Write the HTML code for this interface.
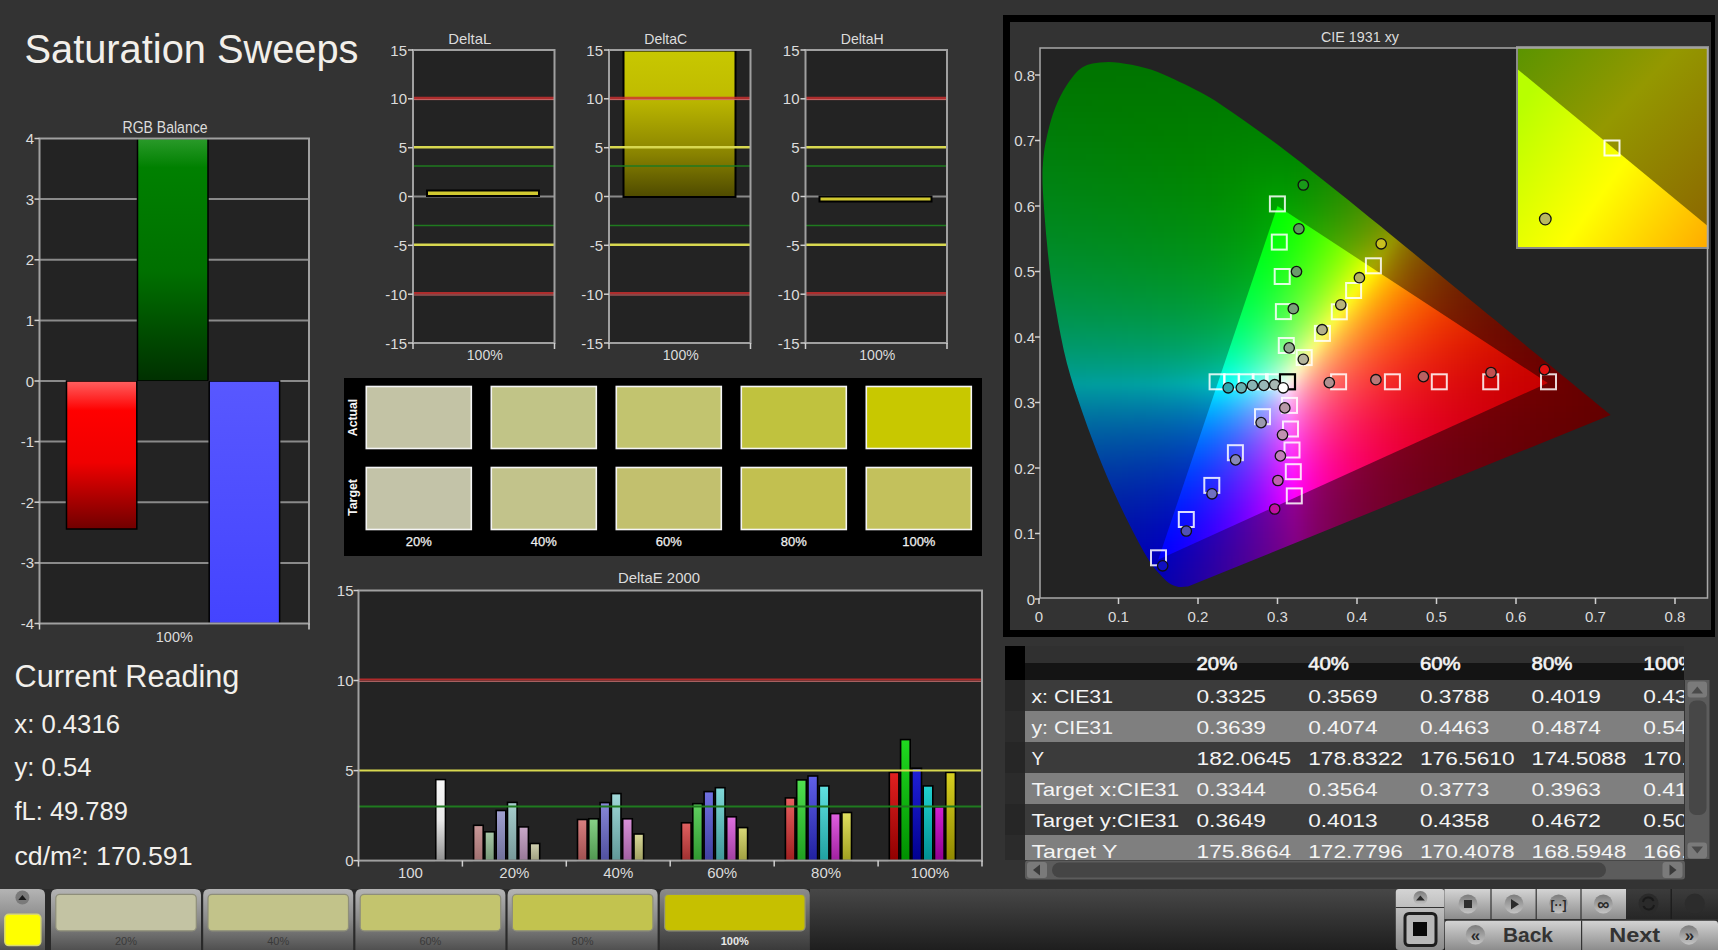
<!DOCTYPE html>
<html><head><meta charset="utf-8"><style>
html,body{margin:0;padding:0;background:#333333;width:1718px;height:950px;overflow:hidden}
svg{display:block;font-family:"Liberation Sans", sans-serif}
</style></head><body>
<svg width="1718" height="950" viewBox="0 0 1718 950">
<rect width="1718" height="950" fill="#333333"/>
<text x="24.5" y="62.5" font-size="41" fill="#f2efea" text-anchor="start" font-weight="normal" textLength="334" lengthAdjust="spacingAndGlyphs">Saturation Sweeps</text>
<rect x="39.5" y="138.5" width="269.5" height="485.0" fill="#232323"/>
<line x1="39.5" x2="309" y1="562.9" y2="562.9" stroke="#8a8a8a" stroke-width="2"/>
<line x1="39.5" x2="309" y1="502.2" y2="502.2" stroke="#8a8a8a" stroke-width="2"/>
<line x1="39.5" x2="309" y1="441.6" y2="441.6" stroke="#8a8a8a" stroke-width="2"/>
<line x1="39.5" x2="309" y1="381.0" y2="381.0" stroke="#8a8a8a" stroke-width="2"/>
<line x1="39.5" x2="309" y1="320.4" y2="320.4" stroke="#8a8a8a" stroke-width="2"/>
<line x1="39.5" x2="309" y1="259.8" y2="259.8" stroke="#8a8a8a" stroke-width="2"/>
<line x1="39.5" x2="309" y1="199.1" y2="199.1" stroke="#8a8a8a" stroke-width="2"/>
<defs><linearGradient id="gG" x1="0" y1="0" x2="0" y2="1"><stop offset="0" stop-color="#2a9a2a"/><stop offset="0.12" stop-color="#008000"/><stop offset="0.55" stop-color="#007000"/><stop offset="1" stop-color="#003000"/></linearGradient><linearGradient id="gR" x1="0" y1="0" x2="0" y2="1"><stop offset="0" stop-color="#ff6060"/><stop offset="0.2" stop-color="#ff0000"/><stop offset="0.55" stop-color="#f00000"/><stop offset="1" stop-color="#700000"/></linearGradient><linearGradient id="gB" x1="0" y1="0" x2="0" y2="1"><stop offset="0" stop-color="#5858ff"/><stop offset="1" stop-color="#4444ff"/></linearGradient></defs>
<rect x="137.5" y="138.5" width="70.5" height="242.5" fill="url(#gG)" stroke="#000" stroke-width="1.5"/>
<rect x="66.5" y="381.0" width="70.3" height="148.0" fill="url(#gR)" stroke="#000" stroke-width="1.5"/>
<rect x="209.2" y="381.0" width="70.4" height="242.5" fill="url(#gB)" stroke="#000" stroke-width="1.5"/>
<rect x="39.5" y="138.5" width="269.5" height="485.0" fill="none" stroke="#a0a0a0" stroke-width="2"/>
<line x1="34.5" x2="39.5" y1="623.5" y2="623.5" stroke="#d0d0d0" stroke-width="1.5"/>
<text x="34" y="629.0" font-size="15" fill="#dcdcdc" text-anchor="end" font-weight="normal">-4</text>
<line x1="34.5" x2="39.5" y1="562.9" y2="562.9" stroke="#d0d0d0" stroke-width="1.5"/>
<text x="34" y="568.375" font-size="15" fill="#dcdcdc" text-anchor="end" font-weight="normal">-3</text>
<line x1="34.5" x2="39.5" y1="502.2" y2="502.2" stroke="#d0d0d0" stroke-width="1.5"/>
<text x="34" y="507.75" font-size="15" fill="#dcdcdc" text-anchor="end" font-weight="normal">-2</text>
<line x1="34.5" x2="39.5" y1="441.6" y2="441.6" stroke="#d0d0d0" stroke-width="1.5"/>
<text x="34" y="447.125" font-size="15" fill="#dcdcdc" text-anchor="end" font-weight="normal">-1</text>
<line x1="34.5" x2="39.5" y1="381.0" y2="381.0" stroke="#d0d0d0" stroke-width="1.5"/>
<text x="34" y="386.5" font-size="15" fill="#dcdcdc" text-anchor="end" font-weight="normal">0</text>
<line x1="34.5" x2="39.5" y1="320.4" y2="320.4" stroke="#d0d0d0" stroke-width="1.5"/>
<text x="34" y="325.875" font-size="15" fill="#dcdcdc" text-anchor="end" font-weight="normal">1</text>
<line x1="34.5" x2="39.5" y1="259.8" y2="259.8" stroke="#d0d0d0" stroke-width="1.5"/>
<text x="34" y="265.25" font-size="15" fill="#dcdcdc" text-anchor="end" font-weight="normal">2</text>
<line x1="34.5" x2="39.5" y1="199.1" y2="199.1" stroke="#d0d0d0" stroke-width="1.5"/>
<text x="34" y="204.625" font-size="15" fill="#dcdcdc" text-anchor="end" font-weight="normal">3</text>
<line x1="34.5" x2="39.5" y1="138.5" y2="138.5" stroke="#d0d0d0" stroke-width="1.5"/>
<text x="34" y="144.0" font-size="15" fill="#dcdcdc" text-anchor="end" font-weight="normal">4</text>
<line x1="39.5" x2="39.5" y1="623.5" y2="629.5" stroke="#d0d0d0" stroke-width="1.5"/>
<line x1="309" x2="309" y1="623.5" y2="629.5" stroke="#d0d0d0" stroke-width="1.5"/>
<text x="165" y="133.4" font-size="16" fill="#dcdcdc" text-anchor="middle" font-weight="normal" textLength="85" lengthAdjust="spacingAndGlyphs">RGB Balance</text>
<text x="174.3" y="641.5" font-size="15" fill="#dcdcdc" text-anchor="middle" font-weight="normal" textLength="37" lengthAdjust="spacingAndGlyphs">100%</text>
<defs><linearGradient id="gY" x1="0" y1="0" x2="0" y2="1"><stop offset="0" stop-color="#c8c800"/><stop offset="0.3" stop-color="#c0bc00"/><stop offset="0.7" stop-color="#8a8400"/><stop offset="1" stop-color="#4e4a00"/></linearGradient></defs>
<rect x="413" y="50" width="141.5" height="293" fill="#232323"/>
<line x1="413" x2="554.5" y1="196.5" y2="196.5" stroke="#8a8a8a" stroke-width="2"/>
<rect x="427" y="190.5" width="112" height="5.5" fill="#d0c830" stroke="#000" stroke-width="2"/>
<line x1="413" x2="554.5" y1="97.8" y2="97.8" stroke="#d03030" stroke-opacity="0.8" stroke-width="2.2"/>
<line x1="413" x2="554.5" y1="99.6" y2="99.6" stroke="#d06a6a" stroke-width="1"/>
<line x1="413" x2="554.5" y1="293.2" y2="293.2" stroke="#d03030" stroke-opacity="0.8" stroke-width="2.2"/>
<line x1="413" x2="554.5" y1="295.0" y2="295.0" stroke="#d06a6a" stroke-width="1"/>
<line x1="413" x2="554.5" y1="147.2" y2="147.2" stroke="#d8d850" stroke-width="2.5"/>
<line x1="413" x2="554.5" y1="244.8" y2="244.8" stroke="#d8d850" stroke-width="2.5"/>
<line x1="413" x2="554.5" y1="166" y2="166" stroke="#1f7a1f" stroke-width="1.5"/>
<line x1="413" x2="554.5" y1="225.5" y2="225.5" stroke="#1f7a1f" stroke-width="1.5"/>
<rect x="413" y="50" width="141.5" height="293" fill="none" stroke="#a0a0a0" stroke-width="2"/>
<line x1="408" x2="413" y1="343.0" y2="343.0" stroke="#d0d0d0" stroke-width="1.5"/>
<text x="407" y="348.5" font-size="15" fill="#dcdcdc" text-anchor="end" font-weight="normal">-15</text>
<line x1="408" x2="413" y1="294.2" y2="294.2" stroke="#d0d0d0" stroke-width="1.5"/>
<text x="407" y="299.6666666666667" font-size="15" fill="#dcdcdc" text-anchor="end" font-weight="normal">-10</text>
<line x1="408" x2="413" y1="245.3" y2="245.3" stroke="#d0d0d0" stroke-width="1.5"/>
<text x="407" y="250.83333333333334" font-size="15" fill="#dcdcdc" text-anchor="end" font-weight="normal">-5</text>
<line x1="408" x2="413" y1="196.5" y2="196.5" stroke="#d0d0d0" stroke-width="1.5"/>
<text x="407" y="202.0" font-size="15" fill="#dcdcdc" text-anchor="end" font-weight="normal">0</text>
<line x1="408" x2="413" y1="147.7" y2="147.7" stroke="#d0d0d0" stroke-width="1.5"/>
<text x="407" y="153.16666666666669" font-size="15" fill="#dcdcdc" text-anchor="end" font-weight="normal">5</text>
<line x1="408" x2="413" y1="98.8" y2="98.8" stroke="#d0d0d0" stroke-width="1.5"/>
<text x="407" y="104.33333333333334" font-size="15" fill="#dcdcdc" text-anchor="end" font-weight="normal">10</text>
<line x1="408" x2="413" y1="50.0" y2="50.0" stroke="#d0d0d0" stroke-width="1.5"/>
<text x="407" y="55.5" font-size="15" fill="#dcdcdc" text-anchor="end" font-weight="normal">15</text>
<line x1="413" x2="413" y1="343" y2="349" stroke="#d0d0d0" stroke-width="1.5"/>
<line x1="554.5" x2="554.5" y1="343" y2="349" stroke="#d0d0d0" stroke-width="1.5"/>
<text x="469.75" y="44" font-size="15" fill="#dcdcdc" text-anchor="middle" font-weight="normal" textLength="43" lengthAdjust="spacingAndGlyphs">DeltaL</text>
<text x="484.75" y="359.5" font-size="15" fill="#dcdcdc" text-anchor="middle" font-weight="normal" textLength="36" lengthAdjust="spacingAndGlyphs">100%</text>
<rect x="609" y="50" width="141.5" height="293" fill="#232323"/>
<line x1="609" x2="750.5" y1="196.5" y2="196.5" stroke="#8a8a8a" stroke-width="2"/>
<rect x="623.5" y="50.5" width="112" height="146.5" fill="url(#gY)" stroke="#000" stroke-width="2"/>
<line x1="609" x2="750.5" y1="97.8" y2="97.8" stroke="#d03030" stroke-opacity="0.8" stroke-width="2.2"/>
<line x1="609" x2="750.5" y1="99.6" y2="99.6" stroke="#d06a6a" stroke-width="1"/>
<line x1="609" x2="750.5" y1="293.2" y2="293.2" stroke="#d03030" stroke-opacity="0.8" stroke-width="2.2"/>
<line x1="609" x2="750.5" y1="295.0" y2="295.0" stroke="#d06a6a" stroke-width="1"/>
<line x1="609" x2="750.5" y1="147.2" y2="147.2" stroke="#d8d850" stroke-width="2.5"/>
<line x1="609" x2="750.5" y1="244.8" y2="244.8" stroke="#d8d850" stroke-width="2.5"/>
<line x1="609" x2="750.5" y1="166" y2="166" stroke="#1f7a1f" stroke-width="1.5"/>
<line x1="609" x2="750.5" y1="225.5" y2="225.5" stroke="#1f7a1f" stroke-width="1.5"/>
<rect x="609" y="50" width="141.5" height="293" fill="none" stroke="#a0a0a0" stroke-width="2"/>
<line x1="604" x2="609" y1="343.0" y2="343.0" stroke="#d0d0d0" stroke-width="1.5"/>
<text x="603" y="348.5" font-size="15" fill="#dcdcdc" text-anchor="end" font-weight="normal">-15</text>
<line x1="604" x2="609" y1="294.2" y2="294.2" stroke="#d0d0d0" stroke-width="1.5"/>
<text x="603" y="299.6666666666667" font-size="15" fill="#dcdcdc" text-anchor="end" font-weight="normal">-10</text>
<line x1="604" x2="609" y1="245.3" y2="245.3" stroke="#d0d0d0" stroke-width="1.5"/>
<text x="603" y="250.83333333333334" font-size="15" fill="#dcdcdc" text-anchor="end" font-weight="normal">-5</text>
<line x1="604" x2="609" y1="196.5" y2="196.5" stroke="#d0d0d0" stroke-width="1.5"/>
<text x="603" y="202.0" font-size="15" fill="#dcdcdc" text-anchor="end" font-weight="normal">0</text>
<line x1="604" x2="609" y1="147.7" y2="147.7" stroke="#d0d0d0" stroke-width="1.5"/>
<text x="603" y="153.16666666666669" font-size="15" fill="#dcdcdc" text-anchor="end" font-weight="normal">5</text>
<line x1="604" x2="609" y1="98.8" y2="98.8" stroke="#d0d0d0" stroke-width="1.5"/>
<text x="603" y="104.33333333333334" font-size="15" fill="#dcdcdc" text-anchor="end" font-weight="normal">10</text>
<line x1="604" x2="609" y1="50.0" y2="50.0" stroke="#d0d0d0" stroke-width="1.5"/>
<text x="603" y="55.5" font-size="15" fill="#dcdcdc" text-anchor="end" font-weight="normal">15</text>
<line x1="609" x2="609" y1="343" y2="349" stroke="#d0d0d0" stroke-width="1.5"/>
<line x1="750.5" x2="750.5" y1="343" y2="349" stroke="#d0d0d0" stroke-width="1.5"/>
<text x="665.75" y="44" font-size="15" fill="#dcdcdc" text-anchor="middle" font-weight="normal" textLength="43" lengthAdjust="spacingAndGlyphs">DeltaC</text>
<text x="680.75" y="359.5" font-size="15" fill="#dcdcdc" text-anchor="middle" font-weight="normal" textLength="36" lengthAdjust="spacingAndGlyphs">100%</text>
<rect x="805.5" y="50" width="141.5" height="293" fill="#232323"/>
<line x1="805.5" x2="947.0" y1="196.5" y2="196.5" stroke="#8a8a8a" stroke-width="2"/>
<rect x="819.5" y="196.5" width="112" height="5" fill="#d0c830" stroke="#000" stroke-width="2"/>
<line x1="805.5" x2="947.0" y1="97.8" y2="97.8" stroke="#d03030" stroke-opacity="0.8" stroke-width="2.2"/>
<line x1="805.5" x2="947.0" y1="99.6" y2="99.6" stroke="#d06a6a" stroke-width="1"/>
<line x1="805.5" x2="947.0" y1="293.2" y2="293.2" stroke="#d03030" stroke-opacity="0.8" stroke-width="2.2"/>
<line x1="805.5" x2="947.0" y1="295.0" y2="295.0" stroke="#d06a6a" stroke-width="1"/>
<line x1="805.5" x2="947.0" y1="147.2" y2="147.2" stroke="#d8d850" stroke-width="2.5"/>
<line x1="805.5" x2="947.0" y1="244.8" y2="244.8" stroke="#d8d850" stroke-width="2.5"/>
<line x1="805.5" x2="947.0" y1="166" y2="166" stroke="#1f7a1f" stroke-width="1.5"/>
<line x1="805.5" x2="947.0" y1="225.5" y2="225.5" stroke="#1f7a1f" stroke-width="1.5"/>
<rect x="805.5" y="50" width="141.5" height="293" fill="none" stroke="#a0a0a0" stroke-width="2"/>
<line x1="800.5" x2="805.5" y1="343.0" y2="343.0" stroke="#d0d0d0" stroke-width="1.5"/>
<text x="799.5" y="348.5" font-size="15" fill="#dcdcdc" text-anchor="end" font-weight="normal">-15</text>
<line x1="800.5" x2="805.5" y1="294.2" y2="294.2" stroke="#d0d0d0" stroke-width="1.5"/>
<text x="799.5" y="299.6666666666667" font-size="15" fill="#dcdcdc" text-anchor="end" font-weight="normal">-10</text>
<line x1="800.5" x2="805.5" y1="245.3" y2="245.3" stroke="#d0d0d0" stroke-width="1.5"/>
<text x="799.5" y="250.83333333333334" font-size="15" fill="#dcdcdc" text-anchor="end" font-weight="normal">-5</text>
<line x1="800.5" x2="805.5" y1="196.5" y2="196.5" stroke="#d0d0d0" stroke-width="1.5"/>
<text x="799.5" y="202.0" font-size="15" fill="#dcdcdc" text-anchor="end" font-weight="normal">0</text>
<line x1="800.5" x2="805.5" y1="147.7" y2="147.7" stroke="#d0d0d0" stroke-width="1.5"/>
<text x="799.5" y="153.16666666666669" font-size="15" fill="#dcdcdc" text-anchor="end" font-weight="normal">5</text>
<line x1="800.5" x2="805.5" y1="98.8" y2="98.8" stroke="#d0d0d0" stroke-width="1.5"/>
<text x="799.5" y="104.33333333333334" font-size="15" fill="#dcdcdc" text-anchor="end" font-weight="normal">10</text>
<line x1="800.5" x2="805.5" y1="50.0" y2="50.0" stroke="#d0d0d0" stroke-width="1.5"/>
<text x="799.5" y="55.5" font-size="15" fill="#dcdcdc" text-anchor="end" font-weight="normal">15</text>
<line x1="805.5" x2="805.5" y1="343" y2="349" stroke="#d0d0d0" stroke-width="1.5"/>
<line x1="947.0" x2="947.0" y1="343" y2="349" stroke="#d0d0d0" stroke-width="1.5"/>
<text x="862.25" y="44" font-size="15" fill="#dcdcdc" text-anchor="middle" font-weight="normal" textLength="43" lengthAdjust="spacingAndGlyphs">DeltaH</text>
<text x="877.25" y="359.5" font-size="15" fill="#dcdcdc" text-anchor="middle" font-weight="normal" textLength="36" lengthAdjust="spacingAndGlyphs">100%</text>
<rect x="344" y="378" width="638" height="178" fill="#000"/>
<rect x="366.3" y="386.5" width="105" height="62" fill="#c3c3a5" stroke="#f4f4f4" stroke-width="1.6"/>
<rect x="366.3" y="467.5" width="105" height="62" fill="#c3c3a8" stroke="#f4f4f4" stroke-width="1.6"/>
<text x="418.8" y="545.5" font-size="13" fill="#f0f0f0" text-anchor="middle" font-weight="normal" stroke="#f0f0f0" stroke-width="0.25">20%</text>
<rect x="491.3" y="386.5" width="105" height="62" fill="#c1c487" stroke="#f4f4f4" stroke-width="1.6"/>
<rect x="491.3" y="467.5" width="105" height="62" fill="#c2c38b" stroke="#f4f4f4" stroke-width="1.6"/>
<text x="543.8" y="545.5" font-size="13" fill="#f0f0f0" text-anchor="middle" font-weight="normal" stroke="#f0f0f0" stroke-width="0.25">40%</text>
<rect x="616.3" y="386.5" width="105" height="62" fill="#c2c46f" stroke="#f4f4f4" stroke-width="1.6"/>
<rect x="616.3" y="467.5" width="105" height="62" fill="#c2c06e" stroke="#f4f4f4" stroke-width="1.6"/>
<text x="668.8" y="545.5" font-size="13" fill="#f0f0f0" text-anchor="middle" font-weight="normal" stroke="#f0f0f0" stroke-width="0.25">60%</text>
<rect x="741.3" y="386.5" width="105" height="62" fill="#c0c23e" stroke="#f4f4f4" stroke-width="1.6"/>
<rect x="741.3" y="467.5" width="105" height="62" fill="#c2c050" stroke="#f4f4f4" stroke-width="1.6"/>
<text x="793.8" y="545.5" font-size="13" fill="#f0f0f0" text-anchor="middle" font-weight="normal" stroke="#f0f0f0" stroke-width="0.25">80%</text>
<rect x="866.3" y="386.5" width="105" height="62" fill="#c8c800" stroke="#f4f4f4" stroke-width="1.6"/>
<rect x="866.3" y="467.5" width="105" height="62" fill="#c3c15c" stroke="#f4f4f4" stroke-width="1.6"/>
<text x="918.8" y="545.5" font-size="13" fill="#f0f0f0" text-anchor="middle" font-weight="normal" stroke="#f0f0f0" stroke-width="0.25">100%</text>
<text transform="translate(357,417.5) rotate(-90)" font-size="12" font-weight="bold" fill="#f4f4f4" text-anchor="middle" textLength="37.4" lengthAdjust="spacingAndGlyphs">Actual</text>
<text transform="translate(357,497.5) rotate(-90)" font-size="12" font-weight="bold" fill="#f4f4f4" text-anchor="middle" textLength="37" lengthAdjust="spacingAndGlyphs">Target</text>
<rect x="358.5" y="590.5" width="623.5" height="270.1" fill="#232323"/>
<defs><linearGradient id="de_w" x1="0" y1="0" x2="0" y2="1"><stop offset="0" stop-color="#f8f8f8"/><stop offset="0.5" stop-color="#e8e8e8"/><stop offset="1" stop-color="#909090"/></linearGradient><linearGradient id="de_0_0" x1="0" y1="0" x2="0" y2="1"><stop offset="0" stop-color="#c89898"/><stop offset="1" stop-color="#a07070"/></linearGradient><linearGradient id="de_0_1" x1="0" y1="0" x2="0" y2="1"><stop offset="0" stop-color="#a8c8a8"/><stop offset="1" stop-color="#789878"/></linearGradient><linearGradient id="de_0_2" x1="0" y1="0" x2="0" y2="1"><stop offset="0" stop-color="#a0a0d0"/><stop offset="1" stop-color="#70709a"/></linearGradient><linearGradient id="de_0_3" x1="0" y1="0" x2="0" y2="1"><stop offset="0" stop-color="#a8d0d0"/><stop offset="1" stop-color="#789898"/></linearGradient><linearGradient id="de_0_4" x1="0" y1="0" x2="0" y2="1"><stop offset="0" stop-color="#c8a8c8"/><stop offset="1" stop-color="#987898"/></linearGradient><linearGradient id="de_0_5" x1="0" y1="0" x2="0" y2="1"><stop offset="0" stop-color="#d0d0b0"/><stop offset="1" stop-color="#a0a080"/></linearGradient><linearGradient id="de_1_0" x1="0" y1="0" x2="0" y2="1"><stop offset="0" stop-color="#d88080"/><stop offset="1" stop-color="#a05050"/></linearGradient><linearGradient id="de_1_1" x1="0" y1="0" x2="0" y2="1"><stop offset="0" stop-color="#88d088"/><stop offset="1" stop-color="#509850"/></linearGradient><linearGradient id="de_1_2" x1="0" y1="0" x2="0" y2="1"><stop offset="0" stop-color="#8888d8"/><stop offset="1" stop-color="#5050a0"/></linearGradient><linearGradient id="de_1_3" x1="0" y1="0" x2="0" y2="1"><stop offset="0" stop-color="#a0d8d8"/><stop offset="1" stop-color="#609898"/></linearGradient><linearGradient id="de_1_4" x1="0" y1="0" x2="0" y2="1"><stop offset="0" stop-color="#d890d8"/><stop offset="1" stop-color="#a060a0"/></linearGradient><linearGradient id="de_1_5" x1="0" y1="0" x2="0" y2="1"><stop offset="0" stop-color="#d8d898"/><stop offset="1" stop-color="#a0a060"/></linearGradient><linearGradient id="de_2_0" x1="0" y1="0" x2="0" y2="1"><stop offset="0" stop-color="#e06060"/><stop offset="1" stop-color="#a03030"/></linearGradient><linearGradient id="de_2_1" x1="0" y1="0" x2="0" y2="1"><stop offset="0" stop-color="#60d060"/><stop offset="1" stop-color="#309830"/></linearGradient><linearGradient id="de_2_2" x1="0" y1="0" x2="0" y2="1"><stop offset="0" stop-color="#7070e0"/><stop offset="1" stop-color="#4040a0"/></linearGradient><linearGradient id="de_2_3" x1="0" y1="0" x2="0" y2="1"><stop offset="0" stop-color="#80d8d8"/><stop offset="1" stop-color="#409898"/></linearGradient><linearGradient id="de_2_4" x1="0" y1="0" x2="0" y2="1"><stop offset="0" stop-color="#e070e0"/><stop offset="1" stop-color="#a040a0"/></linearGradient><linearGradient id="de_2_5" x1="0" y1="0" x2="0" y2="1"><stop offset="0" stop-color="#d8d878"/><stop offset="1" stop-color="#a0a040"/></linearGradient><linearGradient id="de_3_0" x1="0" y1="0" x2="0" y2="1"><stop offset="0" stop-color="#e86060"/><stop offset="1" stop-color="#a02020"/></linearGradient><linearGradient id="de_3_1" x1="0" y1="0" x2="0" y2="1"><stop offset="0" stop-color="#50e050"/><stop offset="1" stop-color="#20a020"/></linearGradient><linearGradient id="de_3_2" x1="0" y1="0" x2="0" y2="1"><stop offset="0" stop-color="#6060e8"/><stop offset="1" stop-color="#2020a0"/></linearGradient><linearGradient id="de_3_3" x1="0" y1="0" x2="0" y2="1"><stop offset="0" stop-color="#60e0e0"/><stop offset="1" stop-color="#20a0a0"/></linearGradient><linearGradient id="de_3_4" x1="0" y1="0" x2="0" y2="1"><stop offset="0" stop-color="#e060e0"/><stop offset="1" stop-color="#a020a0"/></linearGradient><linearGradient id="de_3_5" x1="0" y1="0" x2="0" y2="1"><stop offset="0" stop-color="#e0e060"/><stop offset="1" stop-color="#a0a020"/></linearGradient><linearGradient id="de_4_0" x1="0" y1="0" x2="0" y2="1"><stop offset="0" stop-color="#e02020"/><stop offset="1" stop-color="#900000"/></linearGradient><linearGradient id="de_4_1" x1="0" y1="0" x2="0" y2="1"><stop offset="0" stop-color="#20d820"/><stop offset="1" stop-color="#009000"/></linearGradient><linearGradient id="de_4_2" x1="0" y1="0" x2="0" y2="1"><stop offset="0" stop-color="#2020d8"/><stop offset="1" stop-color="#000090"/></linearGradient><linearGradient id="de_4_3" x1="0" y1="0" x2="0" y2="1"><stop offset="0" stop-color="#20d0d0"/><stop offset="1" stop-color="#009090"/></linearGradient><linearGradient id="de_4_4" x1="0" y1="0" x2="0" y2="1"><stop offset="0" stop-color="#d020d0"/><stop offset="1" stop-color="#900090"/></linearGradient><linearGradient id="de_4_5" x1="0" y1="0" x2="0" y2="1"><stop offset="0" stop-color="#d8d020"/><stop offset="1" stop-color="#908800"/></linearGradient></defs>
<rect x="435.8" y="779.6" width="9.6" height="81.0" fill="url(#de_w)" stroke="#000" stroke-width="1.5"/>
<rect x="473.6" y="825.3" width="9.6" height="35.3" fill="url(#de_0_0)" stroke="#000" stroke-width="1.6"/>
<rect x="484.9" y="831.8" width="9.6" height="28.8" fill="url(#de_0_1)" stroke="#000" stroke-width="1.6"/>
<rect x="496.2" y="810.5" width="9.6" height="50.1" fill="url(#de_0_2)" stroke="#000" stroke-width="1.6"/>
<rect x="507.5" y="802.4" width="9.6" height="58.2" fill="url(#de_0_3)" stroke="#000" stroke-width="1.6"/>
<rect x="518.8" y="826.9" width="9.6" height="33.7" fill="url(#de_0_4)" stroke="#000" stroke-width="1.6"/>
<rect x="530.1" y="843.5" width="9.6" height="17.1" fill="url(#de_0_5)" stroke="#000" stroke-width="1.6"/>
<rect x="577.5" y="819.5" width="9.6" height="41.1" fill="url(#de_1_0)" stroke="#000" stroke-width="1.6"/>
<rect x="588.8" y="818.8" width="9.6" height="41.8" fill="url(#de_1_1)" stroke="#000" stroke-width="1.6"/>
<rect x="600.1" y="802.6" width="9.6" height="58.0" fill="url(#de_1_2)" stroke="#000" stroke-width="1.6"/>
<rect x="611.4" y="793.6" width="9.6" height="67.0" fill="url(#de_1_3)" stroke="#000" stroke-width="1.6"/>
<rect x="622.7" y="818.8" width="9.6" height="41.8" fill="url(#de_1_4)" stroke="#000" stroke-width="1.6"/>
<rect x="634.0" y="834.0" width="9.6" height="26.6" fill="url(#de_1_5)" stroke="#000" stroke-width="1.6"/>
<rect x="681.5" y="822.8" width="9.6" height="37.8" fill="url(#de_2_0)" stroke="#000" stroke-width="1.6"/>
<rect x="692.8" y="803.7" width="9.6" height="56.9" fill="url(#de_2_1)" stroke="#000" stroke-width="1.6"/>
<rect x="704.1" y="791.6" width="9.6" height="69.0" fill="url(#de_2_2)" stroke="#000" stroke-width="1.6"/>
<rect x="715.4" y="787.7" width="9.6" height="72.9" fill="url(#de_2_3)" stroke="#000" stroke-width="1.6"/>
<rect x="726.7" y="816.8" width="9.6" height="43.8" fill="url(#de_2_4)" stroke="#000" stroke-width="1.6"/>
<rect x="738.0" y="827.6" width="9.6" height="33.0" fill="url(#de_2_5)" stroke="#000" stroke-width="1.6"/>
<rect x="785.4" y="797.9" width="9.6" height="62.7" fill="url(#de_3_0)" stroke="#000" stroke-width="1.6"/>
<rect x="796.7" y="779.9" width="9.6" height="80.7" fill="url(#de_3_1)" stroke="#000" stroke-width="1.6"/>
<rect x="808.0" y="776.0" width="9.6" height="84.6" fill="url(#de_3_2)" stroke="#000" stroke-width="1.6"/>
<rect x="819.3" y="785.9" width="9.6" height="74.7" fill="url(#de_3_3)" stroke="#000" stroke-width="1.6"/>
<rect x="830.6" y="813.6" width="9.6" height="47.0" fill="url(#de_3_4)" stroke="#000" stroke-width="1.6"/>
<rect x="841.9" y="812.5" width="9.6" height="48.1" fill="url(#de_3_5)" stroke="#000" stroke-width="1.6"/>
<rect x="889.3" y="772.4" width="9.6" height="88.2" fill="url(#de_4_0)" stroke="#000" stroke-width="1.6"/>
<rect x="900.6" y="739.6" width="9.6" height="121.0" fill="url(#de_4_1)" stroke="#000" stroke-width="1.6"/>
<rect x="911.9" y="768.2" width="9.6" height="92.4" fill="url(#de_4_2)" stroke="#000" stroke-width="1.6"/>
<rect x="923.2" y="785.9" width="9.6" height="74.7" fill="url(#de_4_3)" stroke="#000" stroke-width="1.6"/>
<rect x="934.5" y="806.8" width="9.6" height="53.8" fill="url(#de_4_4)" stroke="#000" stroke-width="1.6"/>
<rect x="945.8" y="772.4" width="9.6" height="88.2" fill="url(#de_4_5)" stroke="#000" stroke-width="1.6"/>
<line x1="358.5" x2="982" y1="679.5" y2="679.5" stroke="#b02a2a" stroke-width="2.2"/>
<line x1="358.5" x2="982" y1="681.3" y2="681.3" stroke="#c87070" stroke-width="1"/>
<line x1="358.5" x2="982" y1="770.6" y2="770.6" stroke="#d8d850" stroke-width="2"/>
<line x1="358.5" x2="982" y1="806.6" y2="806.6" stroke="#1f7a1f" stroke-width="2"/>
<rect x="358.5" y="590.5" width="623.5" height="270.1" fill="none" stroke="#a0a0a0" stroke-width="2"/>
<line x1="353.5" x2="358.5" y1="860.6" y2="860.6" stroke="#d0d0d0" stroke-width="1.5"/>
<text x="353.5" y="866.1" font-size="15" fill="#dcdcdc" text-anchor="end" font-weight="normal">0</text>
<line x1="353.5" x2="358.5" y1="770.6" y2="770.6" stroke="#d0d0d0" stroke-width="1.5"/>
<text x="353.5" y="776.0666666666667" font-size="15" fill="#dcdcdc" text-anchor="end" font-weight="normal">5</text>
<line x1="353.5" x2="358.5" y1="680.5" y2="680.5" stroke="#d0d0d0" stroke-width="1.5"/>
<text x="353.5" y="686.0333333333333" font-size="15" fill="#dcdcdc" text-anchor="end" font-weight="normal">10</text>
<line x1="353.5" x2="358.5" y1="590.5" y2="590.5" stroke="#d0d0d0" stroke-width="1.5"/>
<text x="353.5" y="596.0" font-size="15" fill="#dcdcdc" text-anchor="end" font-weight="normal">15</text>
<line x1="358.5" x2="358.5" y1="860.6" y2="866.6" stroke="#d0d0d0" stroke-width="1.5"/>
<line x1="462.4" x2="462.4" y1="860.6" y2="866.6" stroke="#d0d0d0" stroke-width="1.5"/>
<line x1="566.3" x2="566.3" y1="860.6" y2="866.6" stroke="#d0d0d0" stroke-width="1.5"/>
<line x1="670.2" x2="670.2" y1="860.6" y2="866.6" stroke="#d0d0d0" stroke-width="1.5"/>
<line x1="774.2" x2="774.2" y1="860.6" y2="866.6" stroke="#d0d0d0" stroke-width="1.5"/>
<line x1="878.1" x2="878.1" y1="860.6" y2="866.6" stroke="#d0d0d0" stroke-width="1.5"/>
<line x1="982.0" x2="982.0" y1="860.6" y2="866.6" stroke="#d0d0d0" stroke-width="1.5"/>
<text x="410.4583333333333" y="877.5" font-size="15" fill="#dcdcdc" text-anchor="middle" font-weight="normal">100</text>
<text x="514.375" y="877.5" font-size="15" fill="#dcdcdc" text-anchor="middle" font-weight="normal">20%</text>
<text x="618.2916666666667" y="877.5" font-size="15" fill="#dcdcdc" text-anchor="middle" font-weight="normal">40%</text>
<text x="722.2083333333334" y="877.5" font-size="15" fill="#dcdcdc" text-anchor="middle" font-weight="normal">60%</text>
<text x="826.125" y="877.5" font-size="15" fill="#dcdcdc" text-anchor="middle" font-weight="normal">80%</text>
<text x="930.0416666666667" y="877.5" font-size="15" fill="#dcdcdc" text-anchor="middle" font-weight="normal">100%</text>
<text x="659" y="583" font-size="15" fill="#dcdcdc" text-anchor="middle" font-weight="normal" textLength="82" lengthAdjust="spacingAndGlyphs">DeltaE 2000</text>
<rect x="1003" y="15" width="712" height="622" fill="#000"/>
<rect x="1010" y="22" width="701" height="608" fill="#333333"/>
<rect x="1040" y="48" width="667.5" height="550" fill="#232323"/>
<defs><clipPath id="cpH"><path d="M1610.6 415.0 L1609.5 414.1 L1607.9 412.8 L1606.0 411.2 L1604.0 409.5 L1601.8 407.7 L1599.6 405.9 L1597.2 404.0 L1594.7 401.9 L1591.9 399.6 L1588.7 397.1 L1585.3 394.2 L1581.6 391.2 L1577.6 387.9 L1573.2 384.2 L1568.3 380.2 L1563.0 375.9 L1557.2 371.2 L1551.0 366.1 L1544.5 360.7 L1537.5 355.0 L1530.0 348.9 L1522.2 342.4 L1513.9 335.6 L1505.2 328.5 L1496.3 321.1 L1486.9 313.5 L1477.2 305.5 L1467.1 297.2 L1456.8 288.8 L1446.4 280.3 L1435.9 271.6 L1425.1 262.8 L1414.2 253.8 L1403.1 244.7 L1392.1 235.7 L1380.9 226.6 L1369.6 217.4 L1358.3 208.2 L1347.0 199.0 L1335.6 190.0 L1324.3 180.9 L1312.9 171.9 L1301.6 163.0 L1290.2 154.2 L1278.8 145.5 L1266.8 136.7 L1254.2 127.7 L1241.9 119.0 L1230.7 111.2 L1221.5 104.9 L1214.9 100.5 L1210.3 97.7 L1206.8 95.7 L1203.7 94.1 L1200.0 92.1 L1196.0 89.9 L1192.2 87.9 L1188.3 86.0 L1184.2 84.0 L1179.7 81.9 L1174.7 79.5 L1169.3 77.0 L1163.6 74.4 L1157.7 71.9 L1151.7 69.8 L1145.3 68.0 L1138.5 66.3 L1131.7 64.8 L1125.1 63.7 L1119.1 62.8 L1113.7 62.3 L1108.7 62.1 L1104.1 62.2 L1099.9 62.5 L1096.0 62.9 L1092.6 63.5 L1089.6 64.2 L1087.0 65.1 L1084.5 66.2 L1082.1 67.6 L1079.8 69.2 L1077.7 71.1 L1075.6 73.2 L1073.7 75.6 L1071.6 78.2 L1069.5 81.1 L1067.3 84.3 L1065.1 87.8 L1063.0 91.3 L1061.0 95.0 L1059.1 98.7 L1057.4 102.6 L1055.7 106.5 L1054.1 110.7 L1052.6 115.0 L1051.2 119.6 L1049.8 124.5 L1048.5 129.6 L1047.3 134.5 L1046.3 139.2 L1045.4 143.5 L1044.7 147.6 L1044.1 151.6 L1043.6 155.7 L1043.2 160.0 L1042.9 164.3 L1042.6 168.5 L1042.5 173.0 L1042.5 178.0 L1042.6 184.0 L1042.9 191.2 L1043.4 199.5 L1044.0 208.3 L1044.7 217.3 L1045.4 226.0 L1046.1 234.6 L1047.0 243.4 L1047.8 252.2 L1048.7 260.6 L1049.6 268.4 L1050.4 274.9 L1051.0 280.3 L1051.8 285.6 L1052.8 291.8 L1054.2 300.0 L1056.1 310.6 L1058.3 323.0 L1060.9 336.4 L1063.7 350.1 L1066.9 363.2 L1070.4 375.8 L1074.3 388.5 L1078.5 401.1 L1082.9 413.8 L1087.4 426.4 L1092.1 439.0 L1096.9 451.7 L1101.9 464.3 L1107.2 477.0 L1112.7 489.6 L1118.8 502.8 L1125.5 516.7 L1132.3 530.3 L1138.7 542.6 L1144.3 552.8 L1149.0 560.5 L1153.1 566.4 L1156.8 571.0 L1160.1 574.6 L1163.3 578.0 L1166.3 580.9 L1168.9 582.9 L1171.3 584.4 L1173.6 585.4 L1176.0 586.3 L1178.6 586.9 L1181.4 587.0 L1184.1 586.8 L1186.4 586.6 L1188.0 586.5 Z"/></clipPath><clipPath id="cpT"><path d="M1547.8 382.9 L1277.5 206.0 L1158.2 559.7 Z"/></clipPath><filter id="blr" x="-5%" y="-5%" width="110%" height="110%" color-interpolation-filters="sRGB"><feGaussianBlur stdDeviation="3.5"/></filter></defs>
<g clip-path="url(#cpH)"><g filter="url(#blr)"><path fill="#007300" d="M1080 52h6v6h-6zM1086 52h6v6h-6zM1092 52h6v6h-6zM1098 52h6v6h-6zM1104 52h6v6h-6zM1110 52h6v6h-6zM1116 52h6v6h-6zM1122 52h6v6h-6zM1128 52h6v6h-6zM1134 52h6v6h-6zM1068 58h6v6h-6zM1074 58h6v6h-6zM1080 58h6v6h-6zM1086 58h6v6h-6zM1092 58h6v6h-6zM1098 58h6v6h-6zM1104 58h6v6h-6zM1110 58h6v6h-6zM1116 58h6v6h-6zM1122 58h6v6h-6zM1128 58h6v6h-6zM1134 58h6v6h-6zM1140 58h6v6h-6zM1146 58h6v6h-6zM1152 58h6v6h-6zM1158 58h6v6h-6z"/><path fill="#007400" d="M1068 64h6v6h-6zM1074 64h6v6h-6zM1080 64h6v6h-6zM1086 64h6v6h-6zM1092 64h6v6h-6zM1098 64h6v6h-6zM1104 64h6v6h-6zM1110 64h6v6h-6zM1116 64h6v6h-6zM1122 64h6v6h-6zM1128 64h6v6h-6zM1134 64h6v6h-6zM1140 64h6v6h-6zM1146 64h6v6h-6zM1152 64h6v6h-6zM1158 64h6v6h-6zM1164 64h6v6h-6zM1170 64h6v6h-6z"/><path fill="#007500" d="M1062 70h6v6h-6zM1068 70h6v6h-6zM1074 70h6v6h-6zM1080 70h6v6h-6zM1086 70h6v6h-6zM1092 70h6v6h-6zM1098 70h6v6h-6zM1104 70h6v6h-6zM1110 70h6v6h-6zM1116 70h6v6h-6zM1122 70h6v6h-6zM1128 70h6v6h-6zM1134 70h6v6h-6zM1140 70h6v6h-6zM1146 70h6v6h-6zM1152 70h6v6h-6zM1158 70h6v6h-6zM1164 70h6v6h-6zM1170 70h6v6h-6zM1176 70h6v6h-6zM1182 70h6v6h-6zM1068 76h6v6h-6zM1074 76h6v6h-6zM1080 76h6v6h-6zM1086 76h6v6h-6zM1092 76h6v6h-6zM1098 76h6v6h-6zM1104 76h6v6h-6zM1110 76h6v6h-6z"/><path fill="#007501" d="M1056 76h6v6h-6zM1062 76h6v6h-6z"/><path fill="#007600" d="M1116 76h6v6h-6zM1122 76h6v6h-6zM1128 76h6v6h-6zM1134 76h6v6h-6zM1140 76h6v6h-6zM1146 76h6v6h-6zM1152 76h6v6h-6zM1158 76h6v6h-6zM1164 76h6v6h-6zM1170 76h6v6h-6zM1176 76h6v6h-6zM1182 76h6v6h-6zM1188 76h6v6h-6zM1194 76h6v6h-6zM1080 82h6v6h-6zM1086 82h6v6h-6zM1092 82h6v6h-6zM1098 82h6v6h-6zM1104 82h6v6h-6zM1110 82h6v6h-6zM1116 82h6v6h-6zM1122 82h6v6h-6zM1128 82h6v6h-6zM1134 82h6v6h-6zM1140 82h6v6h-6z"/><path fill="#007602" d="M1050 82h6v6h-6z"/><path fill="#007601" d="M1056 82h6v6h-6zM1062 82h6v6h-6zM1068 82h6v6h-6zM1074 82h6v6h-6z"/><path fill="#007700" d="M1146 82h6v6h-6zM1152 82h6v6h-6zM1158 82h6v6h-6zM1164 82h6v6h-6zM1170 82h6v6h-6zM1176 82h6v6h-6zM1182 82h6v6h-6zM1188 82h6v6h-6zM1194 82h6v6h-6zM1200 82h6v6h-6zM1206 82h6v6h-6zM1086 88h6v6h-6zM1092 88h6v6h-6zM1098 88h6v6h-6zM1104 88h6v6h-6zM1110 88h6v6h-6zM1116 88h6v6h-6zM1122 88h6v6h-6zM1128 88h6v6h-6zM1134 88h6v6h-6zM1140 88h6v6h-6zM1146 88h6v6h-6zM1152 88h6v6h-6z"/><path fill="#007702" d="M1050 88h6v6h-6zM1056 88h6v6h-6zM1062 88h6v6h-6z"/><path fill="#007701" d="M1068 88h6v6h-6zM1074 88h6v6h-6zM1080 88h6v6h-6z"/><path fill="#007800" d="M1158 88h6v6h-6zM1164 88h6v6h-6zM1170 88h6v6h-6zM1176 88h6v6h-6zM1182 88h6v6h-6zM1188 88h6v6h-6zM1194 88h6v6h-6zM1200 88h6v6h-6zM1206 88h6v6h-6zM1212 88h6v6h-6zM1218 88h6v6h-6zM1098 94h6v6h-6zM1104 94h6v6h-6zM1110 94h6v6h-6zM1116 94h6v6h-6zM1122 94h6v6h-6zM1128 94h6v6h-6zM1134 94h6v6h-6zM1140 94h6v6h-6zM1146 94h6v6h-6zM1152 94h6v6h-6zM1158 94h6v6h-6zM1164 94h6v6h-6z"/><path fill="#007803" d="M1044 94h6v6h-6zM1050 94h6v6h-6zM1056 94h6v6h-6zM1056 100h6v6h-6zM1062 100h6v6h-6z"/><path fill="#007802" d="M1062 94h6v6h-6zM1068 94h6v6h-6zM1074 94h6v6h-6zM1068 100h6v6h-6zM1074 100h6v6h-6zM1080 100h6v6h-6z"/><path fill="#007801" d="M1080 94h6v6h-6zM1086 94h6v6h-6zM1092 94h6v6h-6zM1086 100h6v6h-6z"/><path fill="#007900" d="M1170 94h6v6h-6zM1176 94h6v6h-6zM1182 94h6v6h-6zM1188 94h6v6h-6zM1194 94h6v6h-6zM1200 94h6v6h-6zM1206 94h6v6h-6zM1212 94h6v6h-6zM1218 94h6v6h-6zM1104 100h6v6h-6zM1110 100h6v6h-6zM1116 100h6v6h-6zM1122 100h6v6h-6zM1128 100h6v6h-6zM1134 100h6v6h-6zM1140 100h6v6h-6zM1146 100h6v6h-6zM1152 100h6v6h-6zM1158 100h6v6h-6zM1164 100h6v6h-6zM1170 100h6v6h-6zM1116 106h6v6h-6z"/><path fill="#007a00" d="M1224 94h6v6h-6zM1176 100h6v6h-6zM1182 100h6v6h-6zM1188 100h6v6h-6zM1194 100h6v6h-6zM1200 100h6v6h-6zM1206 100h6v6h-6zM1212 100h6v6h-6zM1218 100h6v6h-6zM1122 106h6v6h-6zM1128 106h6v6h-6zM1134 106h6v6h-6zM1140 106h6v6h-6zM1146 106h6v6h-6zM1152 106h6v6h-6zM1158 106h6v6h-6zM1164 106h6v6h-6zM1170 106h6v6h-6zM1176 106h6v6h-6zM1128 112h6v6h-6z"/><path fill="#007804" d="M1044 100h6v6h-6zM1050 100h6v6h-6z"/><path fill="#007901" d="M1092 100h6v6h-6zM1098 100h6v6h-6zM1098 106h6v6h-6zM1104 106h6v6h-6zM1110 106h6v6h-6z"/><path fill="#007b00" d="M1224 100h6v6h-6zM1230 100h6v6h-6zM1236 100h6v6h-6zM1182 106h6v6h-6zM1188 106h6v6h-6zM1194 106h6v6h-6zM1200 106h6v6h-6zM1206 106h6v6h-6zM1212 106h6v6h-6zM1134 112h6v6h-6zM1140 112h6v6h-6zM1146 112h6v6h-6zM1152 112h6v6h-6zM1158 112h6v6h-6zM1164 112h6v6h-6zM1170 112h6v6h-6zM1176 112h6v6h-6zM1182 112h6v6h-6zM1134 118h6v6h-6zM1140 118h6v6h-6z"/><path fill="#007905" d="M1044 106h6v6h-6z"/><path fill="#007904" d="M1050 106h6v6h-6zM1056 106h6v6h-6z"/><path fill="#007903" d="M1062 106h6v6h-6zM1068 106h6v6h-6zM1074 106h6v6h-6z"/><path fill="#007902" d="M1080 106h6v6h-6zM1086 106h6v6h-6zM1092 106h6v6h-6z"/><path fill="#007c00" d="M1218 106h6v6h-6zM1224 106h6v6h-6zM1230 106h6v6h-6zM1236 106h6v6h-6zM1242 106h6v6h-6zM1188 112h6v6h-6zM1194 112h6v6h-6zM1200 112h6v6h-6zM1206 112h6v6h-6zM1212 112h6v6h-6zM1146 118h6v6h-6zM1152 118h6v6h-6zM1158 118h6v6h-6zM1164 118h6v6h-6zM1170 118h6v6h-6zM1176 118h6v6h-6zM1182 118h6v6h-6zM1146 124h6v6h-6zM1152 124h6v6h-6z"/><path fill="#007a06" d="M1038 112h6v6h-6z"/><path fill="#007a05" d="M1044 112h6v6h-6zM1050 112h6v6h-6zM1056 112h6v6h-6z"/><path fill="#007a04" d="M1062 112h6v6h-6zM1068 112h6v6h-6z"/><path fill="#007a03" d="M1074 112h6v6h-6zM1080 112h6v6h-6zM1086 112h6v6h-6z"/><path fill="#007a02" d="M1092 112h6v6h-6zM1098 112h6v6h-6zM1104 112h6v6h-6z"/><path fill="#007a01" d="M1110 112h6v6h-6zM1116 112h6v6h-6zM1122 112h6v6h-6z"/><path fill="#007d00" d="M1218 112h6v6h-6zM1224 112h6v6h-6zM1230 112h6v6h-6zM1236 112h6v6h-6zM1242 112h6v6h-6zM1248 112h6v6h-6zM1188 118h6v6h-6zM1194 118h6v6h-6zM1200 118h6v6h-6zM1206 118h6v6h-6zM1212 118h6v6h-6zM1158 124h6v6h-6zM1164 124h6v6h-6zM1170 124h6v6h-6zM1176 124h6v6h-6zM1182 124h6v6h-6zM1152 130h6v6h-6zM1158 130h6v6h-6z"/><path fill="#007e00" d="M1254 112h6v6h-6zM1218 118h6v6h-6zM1224 118h6v6h-6zM1230 118h6v6h-6zM1236 118h6v6h-6zM1188 124h6v6h-6zM1194 124h6v6h-6zM1200 124h6v6h-6zM1206 124h6v6h-6zM1164 130h6v6h-6zM1170 130h6v6h-6zM1176 130h6v6h-6zM1182 130h6v6h-6z"/><path fill="#007b07" d="M1038 118h6v6h-6zM1044 124h6v6h-6zM1050 124h6v6h-6z"/><path fill="#007b06" d="M1044 118h6v6h-6zM1050 118h6v6h-6zM1056 124h6v6h-6zM1062 124h6v6h-6z"/><path fill="#007b05" d="M1056 118h6v6h-6zM1062 118h6v6h-6zM1068 118h6v6h-6z"/><path fill="#007b04" d="M1074 118h6v6h-6zM1080 118h6v6h-6z"/><path fill="#007b03" d="M1086 118h6v6h-6zM1092 118h6v6h-6zM1098 118h6v6h-6z"/><path fill="#007b02" d="M1104 118h6v6h-6zM1110 118h6v6h-6z"/><path fill="#007b01" d="M1116 118h6v6h-6zM1122 118h6v6h-6zM1128 118h6v6h-6z"/><path fill="#007f00" d="M1242 118h6v6h-6zM1248 118h6v6h-6zM1254 118h6v6h-6zM1260 118h6v6h-6zM1212 124h6v6h-6zM1218 124h6v6h-6zM1224 124h6v6h-6zM1230 124h6v6h-6zM1188 130h6v6h-6zM1194 130h6v6h-6zM1200 130h6v6h-6zM1206 130h6v6h-6zM1164 136h6v6h-6zM1170 136h6v6h-6zM1176 136h6v6h-6zM1182 136h6v6h-6z"/><path fill="#007b08" d="M1038 124h6v6h-6z"/><path fill="#007c05" d="M1068 124h6v6h-6zM1074 124h6v6h-6zM1080 124h6v6h-6zM1080 130h6v6h-6zM1086 130h6v6h-6z"/><path fill="#007c04" d="M1086 124h6v6h-6zM1092 124h6v6h-6zM1092 130h6v6h-6zM1098 130h6v6h-6z"/><path fill="#007c03" d="M1098 124h6v6h-6zM1104 124h6v6h-6z"/><path fill="#007c02" d="M1110 124h6v6h-6zM1116 124h6v6h-6zM1122 124h6v6h-6z"/><path fill="#007c01" d="M1128 124h6v6h-6zM1134 124h6v6h-6zM1140 124h6v6h-6z"/><path fill="#008000" d="M1236 124h6v6h-6zM1242 124h6v6h-6zM1248 124h6v6h-6zM1254 124h6v6h-6zM1260 124h6v6h-6zM1212 130h6v6h-6zM1218 130h6v6h-6zM1224 130h6v6h-6zM1188 136h6v6h-6zM1194 136h6v6h-6zM1200 136h6v6h-6zM1206 136h6v6h-6zM1176 142h6v6h-6zM1182 142h6v6h-6zM1188 142h6v6h-6z"/><path fill="#008100" d="M1266 124h6v6h-6zM1230 130h6v6h-6zM1236 130h6v6h-6zM1242 130h6v6h-6zM1212 136h6v6h-6zM1218 136h6v6h-6zM1194 142h6v6h-6zM1200 142h6v6h-6zM1182 148h6v6h-6zM1188 148h6v6h-6z"/><path fill="#007c09" d="M1038 130h6v6h-6z"/><path fill="#007c08" d="M1044 130h6v6h-6zM1050 130h6v6h-6z"/><path fill="#007c07" d="M1056 130h6v6h-6zM1062 130h6v6h-6z"/><path fill="#007c06" d="M1068 130h6v6h-6zM1074 130h6v6h-6z"/><path fill="#007d04" d="M1104 130h6v6h-6zM1104 136h6v6h-6zM1110 136h6v6h-6zM1116 136h6v6h-6z"/><path fill="#007d03" d="M1110 130h6v6h-6zM1116 130h6v6h-6z"/><path fill="#007d02" d="M1122 130h6v6h-6zM1128 130h6v6h-6zM1134 130h6v6h-6z"/><path fill="#007d01" d="M1140 130h6v6h-6zM1146 130h6v6h-6z"/><path fill="#008200" d="M1248 130h6v6h-6zM1254 130h6v6h-6zM1260 130h6v6h-6zM1266 130h6v6h-6zM1272 130h6v6h-6zM1278 130h6v6h-6zM1224 136h6v6h-6zM1230 136h6v6h-6zM1236 136h6v6h-6zM1206 142h6v6h-6zM1212 142h6v6h-6zM1218 142h6v6h-6zM1194 148h6v6h-6zM1200 148h6v6h-6z"/><path fill="#007d0a" d="M1032 136h6v6h-6z"/><path fill="#007d09" d="M1038 136h6v6h-6zM1044 136h6v6h-6zM1050 136h6v6h-6z"/><path fill="#007d08" d="M1056 136h6v6h-6zM1062 136h6v6h-6z"/><path fill="#007d07" d="M1068 136h6v6h-6zM1074 136h6v6h-6z"/><path fill="#007d06" d="M1080 136h6v6h-6zM1086 136h6v6h-6z"/><path fill="#007d05" d="M1092 136h6v6h-6zM1098 136h6v6h-6z"/><path fill="#007e03" d="M1122 136h6v6h-6zM1128 136h6v6h-6zM1128 142h6v6h-6z"/><path fill="#007e02" d="M1134 136h6v6h-6zM1140 136h6v6h-6z"/><path fill="#007e01" d="M1146 136h6v6h-6zM1152 136h6v6h-6zM1158 136h6v6h-6z"/><path fill="#008300" d="M1242 136h6v6h-6zM1248 136h6v6h-6zM1254 136h6v6h-6zM1260 136h6v6h-6zM1224 142h6v6h-6zM1230 142h6v6h-6zM1206 148h6v6h-6zM1212 148h6v6h-6zM1194 154h6v6h-6zM1200 154h6v6h-6z"/><path fill="#008400" d="M1266 136h6v6h-6zM1272 136h6v6h-6zM1278 136h6v6h-6zM1284 136h6v6h-6zM1236 142h6v6h-6zM1242 142h6v6h-6zM1218 148h6v6h-6zM1224 148h6v6h-6zM1206 154h6v6h-6zM1212 154h6v6h-6zM1200 160h6v6h-6z"/><path fill="#007e0b" d="M1032 142h6v6h-6zM1038 142h6v6h-6z"/><path fill="#007e0a" d="M1044 142h6v6h-6zM1050 142h6v6h-6z"/><path fill="#007e09" d="M1056 142h6v6h-6zM1062 142h6v6h-6z"/><path fill="#007e08" d="M1068 142h6v6h-6zM1074 142h6v6h-6z"/><path fill="#007e07" d="M1080 142h6v6h-6zM1086 142h6v6h-6z"/><path fill="#007e06" d="M1092 142h6v6h-6zM1098 142h6v6h-6z"/><path fill="#007e05" d="M1104 142h6v6h-6zM1110 142h6v6h-6z"/><path fill="#007e04" d="M1116 142h6v6h-6zM1122 142h6v6h-6z"/><path fill="#007f03" d="M1134 142h6v6h-6zM1140 142h6v6h-6z"/><path fill="#007f02" d="M1146 142h6v6h-6zM1152 142h6v6h-6z"/><path fill="#007f01" d="M1158 142h6v6h-6zM1164 142h6v6h-6z"/><path fill="#008001" d="M1170 142h6v6h-6z"/><path fill="#008500" d="M1248 142h6v6h-6zM1254 142h6v6h-6zM1260 142h6v6h-6zM1266 142h6v6h-6zM1272 142h6v6h-6zM1278 142h6v6h-6zM1284 142h6v6h-6zM1290 142h6v6h-6zM1230 148h6v6h-6zM1236 148h6v6h-6zM1218 154h6v6h-6zM1206 160h6v6h-6z"/><path fill="#007e0c" d="M1032 148h6v6h-6zM1038 148h6v6h-6z"/><path fill="#007f0b" d="M1044 148h6v6h-6zM1050 148h6v6h-6zM1056 154h6v6h-6zM1062 154h6v6h-6z"/><path fill="#007f0a" d="M1056 148h6v6h-6zM1062 148h6v6h-6zM1068 154h6v6h-6zM1074 154h6v6h-6z"/><path fill="#007f09" d="M1068 148h6v6h-6zM1074 148h6v6h-6zM1080 154h6v6h-6z"/><path fill="#007f08" d="M1080 148h6v6h-6zM1086 148h6v6h-6z"/><path fill="#007f07" d="M1092 148h6v6h-6zM1098 148h6v6h-6z"/><path fill="#007f06" d="M1104 148h6v6h-6zM1110 148h6v6h-6z"/><path fill="#007f05" d="M1116 148h6v6h-6zM1122 148h6v6h-6z"/><path fill="#007f04" d="M1128 148h6v6h-6zM1134 148h6v6h-6z"/><path fill="#008003" d="M1140 148h6v6h-6zM1146 148h6v6h-6z"/><path fill="#008002" d="M1152 148h6v6h-6zM1158 148h6v6h-6zM1164 148h6v6h-6z"/><path fill="#008101" d="M1170 148h6v6h-6zM1176 148h6v6h-6z"/><path fill="#008600" d="M1242 148h6v6h-6zM1248 148h6v6h-6zM1224 154h6v6h-6zM1230 154h6v6h-6zM1212 160h6v6h-6zM1218 160h6v6h-6z"/><path fill="#008700" d="M1254 148h6v6h-6zM1260 148h6v6h-6zM1266 148h6v6h-6zM1272 148h6v6h-6zM1278 148h6v6h-6zM1284 148h6v6h-6zM1290 148h6v6h-6zM1236 154h6v6h-6zM1242 154h6v6h-6zM1224 160h6v6h-6zM1212 166h6v6h-6zM1218 166h6v6h-6z"/><path fill="#018700" d="M1296 148h6v6h-6z"/><path fill="#038600" d="M1302 148h6v6h-6z"/><path fill="#007f0d" d="M1032 154h6v6h-6zM1038 154h6v6h-6z"/><path fill="#007f0c" d="M1044 154h6v6h-6zM1050 154h6v6h-6z"/><path fill="#008009" d="M1086 154h6v6h-6zM1092 160h6v6h-6zM1098 160h6v6h-6z"/><path fill="#008008" d="M1092 154h6v6h-6zM1098 154h6v6h-6z"/><path fill="#008007" d="M1104 154h6v6h-6zM1110 154h6v6h-6z"/><path fill="#008006" d="M1116 154h6v6h-6zM1122 154h6v6h-6z"/><path fill="#008005" d="M1128 154h6v6h-6zM1134 154h6v6h-6z"/><path fill="#008004" d="M1140 154h6v6h-6z"/><path fill="#008104" d="M1146 154h6v6h-6z"/><path fill="#008103" d="M1152 154h6v6h-6zM1158 154h6v6h-6z"/><path fill="#008102" d="M1164 154h6v6h-6zM1170 154h6v6h-6z"/><path fill="#008201" d="M1176 154h6v6h-6zM1182 154h6v6h-6zM1188 154h6v6h-6z"/><path fill="#008800" d="M1248 154h6v6h-6zM1230 160h6v6h-6zM1236 160h6v6h-6zM1224 166h6v6h-6z"/><path fill="#008900" d="M1254 154h6v6h-6zM1260 154h6v6h-6zM1266 154h6v6h-6zM1272 154h6v6h-6zM1278 154h6v6h-6zM1284 154h6v6h-6zM1290 154h6v6h-6zM1242 160h6v6h-6zM1230 166h6v6h-6z"/><path fill="#018800" d="M1296 154h6v6h-6z"/><path fill="#048800" d="M1302 154h6v6h-6z"/><path fill="#068700" d="M1308 154h6v6h-6z"/><path fill="#00800f" d="M1032 160h6v6h-6z"/><path fill="#00800e" d="M1038 160h6v6h-6zM1044 160h6v6h-6z"/><path fill="#00800d" d="M1050 160h6v6h-6zM1056 160h6v6h-6z"/><path fill="#00800c" d="M1062 160h6v6h-6z"/><path fill="#00800b" d="M1068 160h6v6h-6zM1074 160h6v6h-6z"/><path fill="#00800a" d="M1080 160h6v6h-6zM1086 160h6v6h-6z"/><path fill="#008108" d="M1104 160h6v6h-6zM1110 160h6v6h-6zM1116 166h6v6h-6z"/><path fill="#008107" d="M1116 160h6v6h-6zM1122 160h6v6h-6z"/><path fill="#008106" d="M1128 160h6v6h-6zM1134 160h6v6h-6z"/><path fill="#008105" d="M1140 160h6v6h-6zM1146 160h6v6h-6z"/><path fill="#008204" d="M1152 160h6v6h-6zM1158 160h6v6h-6z"/><path fill="#008203" d="M1164 160h6v6h-6zM1170 160h6v6h-6z"/><path fill="#008302" d="M1176 160h6v6h-6zM1182 160h6v6h-6z"/><path fill="#008301" d="M1188 160h6v6h-6z"/><path fill="#008401" d="M1194 160h6v6h-6z"/><path fill="#008a00" d="M1248 160h6v6h-6zM1254 160h6v6h-6zM1236 166h6v6h-6zM1224 172h6v6h-6z"/><path fill="#008b00" d="M1260 160h6v6h-6zM1266 160h6v6h-6zM1284 160h6v6h-6zM1290 160h6v6h-6zM1242 166h6v6h-6zM1230 172h6v6h-6z"/><path fill="#008c00" d="M1272 160h6v6h-6zM1278 160h6v6h-6zM1248 166h6v6h-6zM1236 172h6v6h-6zM1230 178h6v6h-6z"/><path fill="#028a00" d="M1296 160h6v6h-6z"/><path fill="#058a00" d="M1302 160h6v6h-6z"/><path fill="#078900" d="M1308 160h6v6h-6z"/><path fill="#0b8800" d="M1314 160h6v6h-6z"/><path fill="#008110" d="M1032 166h6v6h-6z"/><path fill="#00810f" d="M1038 166h6v6h-6zM1044 166h6v6h-6z"/><path fill="#00810e" d="M1050 166h6v6h-6zM1056 166h6v6h-6z"/><path fill="#00810d" d="M1062 166h6v6h-6zM1068 166h6v6h-6z"/><path fill="#00810c" d="M1074 166h6v6h-6zM1080 166h6v6h-6z"/><path fill="#00810b" d="M1086 166h6v6h-6zM1092 166h6v6h-6z"/><path fill="#00810a" d="M1098 166h6v6h-6z"/><path fill="#008109" d="M1104 166h6v6h-6zM1110 166h6v6h-6z"/><path fill="#008208" d="M1122 166h6v6h-6z"/><path fill="#008207" d="M1128 166h6v6h-6zM1134 166h6v6h-6z"/><path fill="#008206" d="M1140 166h6v6h-6zM1146 166h6v6h-6z"/><path fill="#008205" d="M1152 166h6v6h-6z"/><path fill="#008305" d="M1158 166h6v6h-6z"/><path fill="#008304" d="M1164 166h6v6h-6zM1170 166h6v6h-6z"/><path fill="#008403" d="M1176 166h6v6h-6zM1182 166h6v6h-6z"/><path fill="#008402" d="M1188 166h6v6h-6z"/><path fill="#008502" d="M1194 166h6v6h-6z"/><path fill="#008501" d="M1200 166h6v6h-6z"/><path fill="#008601" d="M1206 166h6v6h-6z"/><path fill="#008d00" d="M1254 166h6v6h-6zM1260 166h6v6h-6zM1242 172h6v6h-6zM1236 178h6v6h-6z"/><path fill="#008e00" d="M1266 166h6v6h-6zM1272 166h6v6h-6zM1278 166h6v6h-6zM1284 166h6v6h-6zM1248 172h6v6h-6zM1242 178h6v6h-6z"/><path fill="#018d00" d="M1290 166h6v6h-6z"/><path fill="#038c00" d="M1296 166h6v6h-6z"/><path fill="#068c00" d="M1302 166h6v6h-6z"/><path fill="#098b00" d="M1308 166h6v6h-6z"/><path fill="#0c8a00" d="M1314 166h6v6h-6z"/><path fill="#108900" d="M1320 166h6v6h-6z"/><path fill="#008211" d="M1032 172h6v6h-6zM1038 172h6v6h-6zM1050 178h6v6h-6zM1056 178h6v6h-6z"/><path fill="#008210" d="M1044 172h6v6h-6zM1050 172h6v6h-6zM1062 178h6v6h-6z"/><path fill="#00820f" d="M1056 172h6v6h-6zM1062 172h6v6h-6z"/><path fill="#00820e" d="M1068 172h6v6h-6z"/><path fill="#00820d" d="M1074 172h6v6h-6zM1080 172h6v6h-6z"/><path fill="#00820c" d="M1086 172h6v6h-6zM1092 172h6v6h-6z"/><path fill="#00820b" d="M1098 172h6v6h-6zM1104 172h6v6h-6z"/><path fill="#00820a" d="M1110 172h6v6h-6zM1116 172h6v6h-6z"/><path fill="#008209" d="M1122 172h6v6h-6z"/><path fill="#008308" d="M1128 172h6v6h-6zM1134 172h6v6h-6z"/><path fill="#008307" d="M1140 172h6v6h-6zM1146 172h6v6h-6z"/><path fill="#008306" d="M1152 172h6v6h-6z"/><path fill="#008406" d="M1158 172h6v6h-6z"/><path fill="#008405" d="M1164 172h6v6h-6zM1170 172h6v6h-6z"/><path fill="#008404" d="M1176 172h6v6h-6z"/><path fill="#008503" d="M1182 172h6v6h-6zM1188 172h6v6h-6z"/><path fill="#008602" d="M1194 172h6v6h-6z"/><path fill="#008702" d="M1200 172h6v6h-6z"/><path fill="#008701" d="M1206 172h6v6h-6z"/><path fill="#008801" d="M1212 172h6v6h-6z"/><path fill="#008901" d="M1218 172h6v6h-6z"/><path fill="#008f00" d="M1254 172h6v6h-6z"/><path fill="#009000" d="M1260 172h6v6h-6zM1266 172h6v6h-6zM1284 172h6v6h-6zM1248 178h6v6h-6zM1242 184h6v6h-6z"/><path fill="#009100" d="M1272 172h6v6h-6zM1278 172h6v6h-6zM1254 178h6v6h-6z"/><path fill="#029000" d="M1290 172h6v6h-6z"/><path fill="#048f00" d="M1296 172h6v6h-6z"/><path fill="#078e00" d="M1302 172h6v6h-6z"/><path fill="#0a8d00" d="M1308 172h6v6h-6z"/><path fill="#0e8c00" d="M1314 172h6v6h-6z"/><path fill="#118b00" d="M1320 172h6v6h-6z"/><path fill="#158b00" d="M1326 172h6v6h-6z"/><path fill="#1a8a00" d="M1332 172h6v6h-6z"/><path fill="#008213" d="M1032 178h6v6h-6z"/><path fill="#008212" d="M1038 178h6v6h-6zM1044 178h6v6h-6z"/><path fill="#00830f" d="M1068 178h6v6h-6zM1074 178h6v6h-6zM1086 184h6v6h-6z"/><path fill="#00830e" d="M1080 178h6v6h-6zM1086 178h6v6h-6z"/><path fill="#00830d" d="M1092 178h6v6h-6zM1098 178h6v6h-6z"/><path fill="#00830c" d="M1104 178h6v6h-6z"/><path fill="#00830b" d="M1110 178h6v6h-6zM1116 178h6v6h-6z"/><path fill="#00830a" d="M1122 178h6v6h-6zM1128 178h6v6h-6z"/><path fill="#008409" d="M1134 178h6v6h-6zM1140 178h6v6h-6z"/><path fill="#008408" d="M1146 178h6v6h-6z"/><path fill="#008407" d="M1152 178h6v6h-6zM1158 178h6v6h-6z"/><path fill="#008506" d="M1164 178h6v6h-6zM1170 178h6v6h-6z"/><path fill="#008505" d="M1176 178h6v6h-6z"/><path fill="#008605" d="M1182 178h6v6h-6z"/><path fill="#008604" d="M1188 178h6v6h-6z"/><path fill="#008703" d="M1194 178h6v6h-6z"/><path fill="#008803" d="M1200 178h6v6h-6z"/><path fill="#008802" d="M1206 178h6v6h-6z"/><path fill="#008902" d="M1212 178h6v6h-6z"/><path fill="#008a01" d="M1218 178h6v6h-6z"/><path fill="#008b01" d="M1224 178h6v6h-6z"/><path fill="#009200" d="M1260 178h6v6h-6zM1248 184h6v6h-6z"/><path fill="#009300" d="M1266 178h6v6h-6zM1284 178h6v6h-6zM1254 184h6v6h-6z"/><path fill="#009400" d="M1272 178h6v6h-6zM1278 178h6v6h-6zM1248 190h6v6h-6z"/><path fill="#029200" d="M1290 178h6v6h-6z"/><path fill="#059100" d="M1296 178h6v6h-6z"/><path fill="#089000" d="M1302 178h6v6h-6z"/><path fill="#0c8f00" d="M1308 178h6v6h-6z"/><path fill="#108e00" d="M1314 178h6v6h-6z"/><path fill="#138d00" d="M1320 178h6v6h-6z"/><path fill="#188c00" d="M1326 178h6v6h-6z"/><path fill="#1c8c00" d="M1332 178h6v6h-6z"/><path fill="#218b00" d="M1338 178h6v6h-6z"/><path fill="#008314" d="M1032 184h6v6h-6zM1038 184h6v6h-6z"/><path fill="#008313" d="M1044 184h6v6h-6zM1050 184h6v6h-6z"/><path fill="#008312" d="M1056 184h6v6h-6z"/><path fill="#008311" d="M1062 184h6v6h-6zM1068 184h6v6h-6z"/><path fill="#008310" d="M1074 184h6v6h-6zM1080 184h6v6h-6z"/><path fill="#00840f" d="M1092 184h6v6h-6zM1098 190h6v6h-6zM1104 190h6v6h-6z"/><path fill="#00840e" d="M1098 184h6v6h-6z"/><path fill="#00840d" d="M1104 184h6v6h-6zM1110 184h6v6h-6z"/><path fill="#00840c" d="M1116 184h6v6h-6zM1122 184h6v6h-6z"/><path fill="#00840b" d="M1128 184h6v6h-6z"/><path fill="#00840a" d="M1134 184h6v6h-6z"/><path fill="#00850a" d="M1140 184h6v6h-6z"/><path fill="#008509" d="M1146 184h6v6h-6zM1152 184h6v6h-6z"/><path fill="#008508" d="M1158 184h6v6h-6z"/><path fill="#008607" d="M1164 184h6v6h-6zM1170 184h6v6h-6z"/><path fill="#008606" d="M1176 184h6v6h-6z"/><path fill="#008706" d="M1182 184h6v6h-6z"/><path fill="#008705" d="M1188 184h6v6h-6z"/><path fill="#008804" d="M1194 184h6v6h-6z"/><path fill="#008904" d="M1200 184h6v6h-6z"/><path fill="#008903" d="M1206 184h6v6h-6z"/><path fill="#008a03" d="M1212 184h6v6h-6z"/><path fill="#008b02" d="M1218 184h6v6h-6z"/><path fill="#008c02" d="M1224 184h6v6h-6z"/><path fill="#008d01" d="M1230 184h6v6h-6z"/><path fill="#008f01" d="M1236 184h6v6h-6z"/><path fill="#009500" d="M1260 184h6v6h-6z"/><path fill="#009600" d="M1266 184h6v6h-6zM1254 190h6v6h-6z"/><path fill="#009700" d="M1272 184h6v6h-6zM1278 184h6v6h-6z"/><path fill="#019600" d="M1284 184h6v6h-6z"/><path fill="#039500" d="M1290 184h6v6h-6z"/><path fill="#069300" d="M1296 184h6v6h-6z"/><path fill="#0a9200" d="M1302 184h6v6h-6z"/><path fill="#0e9100" d="M1308 184h6v6h-6z"/><path fill="#119000" d="M1314 184h6v6h-6z"/><path fill="#168f00" d="M1320 184h6v6h-6z"/><path fill="#1a8e00" d="M1326 184h6v6h-6z"/><path fill="#1f8e00" d="M1332 184h6v6h-6z"/><path fill="#238d00" d="M1338 184h6v6h-6z"/><path fill="#288c00" d="M1344 184h6v6h-6z"/><path fill="#008416" d="M1032 190h6v6h-6z"/><path fill="#008415" d="M1038 190h6v6h-6zM1044 190h6v6h-6z"/><path fill="#008414" d="M1050 190h6v6h-6zM1056 190h6v6h-6z"/><path fill="#008413" d="M1062 190h6v6h-6z"/><path fill="#008412" d="M1068 190h6v6h-6zM1074 190h6v6h-6z"/><path fill="#008411" d="M1080 190h6v6h-6zM1086 190h6v6h-6z"/><path fill="#008410" d="M1092 190h6v6h-6z"/><path fill="#00850e" d="M1110 190h6v6h-6zM1116 190h6v6h-6z"/><path fill="#00850d" d="M1122 190h6v6h-6z"/><path fill="#00850c" d="M1128 190h6v6h-6zM1134 190h6v6h-6z"/><path fill="#00850b" d="M1140 190h6v6h-6z"/><path fill="#00860b" d="M1146 190h6v6h-6z"/><path fill="#00860a" d="M1152 190h6v6h-6z"/><path fill="#008609" d="M1158 190h6v6h-6zM1164 190h6v6h-6z"/><path fill="#008708" d="M1170 190h6v6h-6zM1176 190h6v6h-6z"/><path fill="#008807" d="M1182 190h6v6h-6z"/><path fill="#008806" d="M1188 190h6v6h-6z"/><path fill="#008906" d="M1194 190h6v6h-6z"/><path fill="#008a05" d="M1200 190h6v6h-6z"/><path fill="#008a04" d="M1206 190h6v6h-6z"/><path fill="#008b04" d="M1212 190h6v6h-6z"/><path fill="#008c03" d="M1218 190h6v6h-6z"/><path fill="#008d03" d="M1224 190h6v6h-6z"/><path fill="#008f02" d="M1230 190h6v6h-6z"/><path fill="#009001" d="M1236 190h6v6h-6z"/><path fill="#009201" d="M1242 190h6v6h-6z"/><path fill="#009800" d="M1260 190h6v6h-6z"/><path fill="#009900" d="M1266 190h6v6h-6z"/><path fill="#009b00" d="M1272 190h6v6h-6z"/><path fill="#009a00" d="M1278 190h6v6h-6zM1260 196h6v6h-6z"/><path fill="#029900" d="M1284 190h6v6h-6z"/><path fill="#059800" d="M1290 190h6v6h-6z"/><path fill="#089600" d="M1296 190h6v6h-6z"/><path fill="#0c9500" d="M1302 190h6v6h-6z"/><path fill="#0f9400" d="M1308 190h6v6h-6z"/><path fill="#149300" d="M1314 190h6v6h-6z"/><path fill="#189200" d="M1320 190h6v6h-6z"/><path fill="#1d9100" d="M1326 190h6v6h-6z"/><path fill="#219000" d="M1332 190h6v6h-6z"/><path fill="#268f00" d="M1338 190h6v6h-6z"/><path fill="#2c8e00" d="M1344 190h6v6h-6z"/><path fill="#318d00" d="M1350 190h6v6h-6z"/><path fill="#008517" d="M1032 196h6v6h-6zM1038 196h6v6h-6z"/><path fill="#008516" d="M1044 196h6v6h-6zM1050 196h6v6h-6z"/><path fill="#008515" d="M1056 196h6v6h-6zM1062 196h6v6h-6z"/><path fill="#008514" d="M1068 196h6v6h-6z"/><path fill="#008513" d="M1074 196h6v6h-6zM1080 196h6v6h-6z"/><path fill="#008512" d="M1086 196h6v6h-6zM1092 196h6v6h-6z"/><path fill="#008511" d="M1098 196h6v6h-6z"/><path fill="#008510" d="M1104 196h6v6h-6zM1110 196h6v6h-6z"/><path fill="#00860f" d="M1116 196h6v6h-6zM1122 196h6v6h-6z"/><path fill="#00860e" d="M1128 196h6v6h-6z"/><path fill="#00860d" d="M1134 196h6v6h-6zM1140 196h6v6h-6z"/><path fill="#00860c" d="M1146 196h6v6h-6z"/><path fill="#00870b" d="M1152 196h6v6h-6zM1158 196h6v6h-6z"/><path fill="#00870a" d="M1164 196h6v6h-6z"/><path fill="#00880a" d="M1170 196h6v6h-6z"/><path fill="#008809" d="M1176 196h6v6h-6z"/><path fill="#008908" d="M1182 196h6v6h-6zM1188 196h6v6h-6z"/><path fill="#008a07" d="M1194 196h6v6h-6z"/><path fill="#008b06" d="M1200 196h6v6h-6zM1206 196h6v6h-6z"/><path fill="#008c05" d="M1212 196h6v6h-6z"/><path fill="#008d04" d="M1218 196h6v6h-6z"/><path fill="#008f04" d="M1224 196h6v6h-6z"/><path fill="#009003" d="M1230 196h6v6h-6z"/><path fill="#009102" d="M1236 196h6v6h-6z"/><path fill="#009302" d="M1242 196h6v6h-6z"/><path fill="#009501" d="M1248 196h6v6h-6z"/><path fill="#009701" d="M1254 196h6v6h-6z"/><path fill="#009c00" d="M1266 196h6v6h-6z"/><path fill="#009e00" d="M1272 196h6v6h-6zM1278 196h6v6h-6z"/><path fill="#039c00" d="M1284 196h6v6h-6z"/><path fill="#069b00" d="M1290 196h6v6h-6z"/><path fill="#0a9900" d="M1296 196h6v6h-6z"/><path fill="#0d9800" d="M1302 196h6v6h-6z"/><path fill="#129600" d="M1308 196h6v6h-6z"/><path fill="#169500" d="M1314 196h6v6h-6z"/><path fill="#1b9400" d="M1320 196h6v6h-6z"/><path fill="#1f9300" d="M1326 196h6v6h-6z"/><path fill="#249200" d="M1332 196h6v6h-6z"/><path fill="#2a9100" d="M1338 196h6v6h-6z"/><path fill="#2f9000" d="M1344 196h6v6h-6z"/><path fill="#358f00" d="M1350 196h6v6h-6z"/><path fill="#3b8e00" d="M1356 196h6v6h-6z"/><path fill="#418e00" d="M1362 196h6v6h-6z"/><path fill="#008519" d="M1032 202h6v6h-6zM1038 202h6v6h-6z"/><path fill="#008518" d="M1044 202h6v6h-6z"/><path fill="#008618" d="M1050 202h6v6h-6zM1062 208h6v6h-6zM1068 208h6v6h-6z"/><path fill="#008617" d="M1056 202h6v6h-6zM1074 208h6v6h-6z"/><path fill="#008616" d="M1062 202h6v6h-6zM1068 202h6v6h-6z"/><path fill="#008615" d="M1074 202h6v6h-6zM1080 202h6v6h-6z"/><path fill="#008614" d="M1086 202h6v6h-6z"/><path fill="#008613" d="M1092 202h6v6h-6zM1098 202h6v6h-6z"/><path fill="#008612" d="M1104 202h6v6h-6z"/><path fill="#008611" d="M1110 202h6v6h-6zM1116 202h6v6h-6z"/><path fill="#008610" d="M1122 202h6v6h-6z"/><path fill="#008710" d="M1128 202h6v6h-6z"/><path fill="#00870f" d="M1134 202h6v6h-6z"/><path fill="#00870e" d="M1140 202h6v6h-6zM1146 202h6v6h-6z"/><path fill="#00880d" d="M1152 202h6v6h-6z"/><path fill="#00880c" d="M1158 202h6v6h-6zM1164 202h6v6h-6z"/><path fill="#00890b" d="M1170 202h6v6h-6z"/><path fill="#00890a" d="M1176 202h6v6h-6z"/><path fill="#008a0a" d="M1182 202h6v6h-6z"/><path fill="#008a09" d="M1188 202h6v6h-6z"/><path fill="#008b08" d="M1194 202h6v6h-6z"/><path fill="#008c08" d="M1200 202h6v6h-6z"/><path fill="#008c07" d="M1206 202h6v6h-6z"/><path fill="#008d06" d="M1212 202h6v6h-6z"/><path fill="#008e06" d="M1218 202h6v6h-6z"/><path fill="#009005" d="M1224 202h6v6h-6z"/><path fill="#009104" d="M1230 202h6v6h-6z"/><path fill="#009304" d="M1236 202h6v6h-6z"/><path fill="#009503" d="M1242 202h6v6h-6z"/><path fill="#009702" d="M1248 202h6v6h-6z"/><path fill="#009902" d="M1254 202h6v6h-6z"/><path fill="#009c01" d="M1260 202h6v6h-6z"/><path fill="#009f01" d="M1266 202h6v6h-6z"/><path fill="#00a200" d="M1272 202h6v6h-6z"/><path fill="#01a200" d="M1278 202h6v6h-6z"/><path fill="#04a000" d="M1284 202h6v6h-6z"/><path fill="#079e00" d="M1290 202h6v6h-6z"/><path fill="#0b9c00" d="M1296 202h6v6h-6z"/><path fill="#0f9b00" d="M1302 202h6v6h-6z"/><path fill="#149900" d="M1308 202h6v6h-6z"/><path fill="#199800" d="M1314 202h6v6h-6z"/><path fill="#1d9700" d="M1320 202h6v6h-6z"/><path fill="#239500" d="M1326 202h6v6h-6z"/><path fill="#289400" d="M1332 202h6v6h-6z"/><path fill="#2d9300" d="M1338 202h6v6h-6z"/><path fill="#339200" d="M1344 202h6v6h-6z"/><path fill="#399100" d="M1350 202h6v6h-6z"/><path fill="#3f9000" d="M1356 202h6v6h-6z"/><path fill="#469000" d="M1362 202h6v6h-6z"/><path fill="#4c8f00" d="M1368 202h6v6h-6z"/><path fill="#00861b" d="M1032 208h6v6h-6zM1038 208h6v6h-6z"/><path fill="#00861a" d="M1044 208h6v6h-6z"/><path fill="#008619" d="M1050 208h6v6h-6zM1056 208h6v6h-6z"/><path fill="#008716" d="M1080 208h6v6h-6zM1086 208h6v6h-6z"/><path fill="#008715" d="M1092 208h6v6h-6z"/><path fill="#008714" d="M1098 208h6v6h-6zM1104 208h6v6h-6z"/><path fill="#008713" d="M1110 208h6v6h-6zM1116 208h6v6h-6z"/><path fill="#008712" d="M1122 208h6v6h-6z"/><path fill="#008711" d="M1128 208h6v6h-6z"/><path fill="#008811" d="M1134 208h6v6h-6z"/><path fill="#008810" d="M1140 208h6v6h-6z"/><path fill="#00880f" d="M1146 208h6v6h-6zM1152 208h6v6h-6z"/><path fill="#00890e" d="M1158 208h6v6h-6z"/><path fill="#00890d" d="M1164 208h6v6h-6z"/><path fill="#008a0d" d="M1170 208h6v6h-6z"/><path fill="#008a0c" d="M1176 208h6v6h-6z"/><path fill="#008b0b" d="M1182 208h6v6h-6zM1188 208h6v6h-6z"/><path fill="#008c0a" d="M1194 208h6v6h-6z"/><path fill="#008d09" d="M1200 208h6v6h-6z"/><path fill="#008d08" d="M1206 208h6v6h-6z"/><path fill="#008f08" d="M1212 208h6v6h-6z"/><path fill="#009007" d="M1218 208h6v6h-6z"/><path fill="#009106" d="M1224 208h6v6h-6z"/><path fill="#009206" d="M1230 208h6v6h-6z"/><path fill="#009405" d="M1236 208h6v6h-6z"/><path fill="#009604" d="M1242 208h6v6h-6z"/><path fill="#009804" d="M1248 208h6v6h-6z"/><path fill="#009b03" d="M1254 208h6v6h-6z"/><path fill="#009d02" d="M1260 208h6v6h-6z"/><path fill="#00a102" d="M1266 208h6v6h-6z"/><path fill="#00a401" d="M1272 208h6v6h-6z"/><path fill="#02a300" d="M1278 208h6v6h-6z"/><path fill="#05a400" d="M1284 208h6v6h-6z"/><path fill="#09a200" d="M1290 208h6v6h-6z"/><path fill="#0da000" d="M1296 208h6v6h-6z"/><path fill="#129e00" d="M1302 208h6v6h-6z"/><path fill="#169c00" d="M1308 208h6v6h-6z"/><path fill="#1b9b00" d="M1314 208h6v6h-6z"/><path fill="#219900" d="M1320 208h6v6h-6z"/><path fill="#269800" d="M1326 208h6v6h-6z"/><path fill="#2c9700" d="M1332 208h6v6h-6z"/><path fill="#319600" d="M1338 208h6v6h-6z"/><path fill="#379400" d="M1344 208h6v6h-6z"/><path fill="#3e9300" d="M1350 208h6v6h-6z"/><path fill="#449200" d="M1356 208h6v6h-6z"/><path fill="#4b9200" d="M1362 208h6v6h-6z"/><path fill="#529100" d="M1368 208h6v6h-6z"/><path fill="#599000" d="M1374 208h6v6h-6z"/><path fill="#00871d" d="M1032 214h6v6h-6z"/><path fill="#00871c" d="M1038 214h6v6h-6zM1044 214h6v6h-6z"/><path fill="#00871b" d="M1050 214h6v6h-6zM1056 214h6v6h-6z"/><path fill="#00871a" d="M1062 214h6v6h-6z"/><path fill="#008719" d="M1068 214h6v6h-6zM1074 214h6v6h-6z"/><path fill="#008718" d="M1080 214h6v6h-6zM1086 214h6v6h-6z"/><path fill="#008717" d="M1092 214h6v6h-6z"/><path fill="#008816" d="M1098 214h6v6h-6zM1104 214h6v6h-6z"/><path fill="#008815" d="M1110 214h6v6h-6z"/><path fill="#008814" d="M1116 214h6v6h-6zM1122 214h6v6h-6z"/><path fill="#008813" d="M1128 214h6v6h-6z"/><path fill="#008812" d="M1134 214h6v6h-6z"/><path fill="#008912" d="M1140 214h6v6h-6z"/><path fill="#008911" d="M1146 214h6v6h-6z"/><path fill="#008910" d="M1152 214h6v6h-6z"/><path fill="#008a10" d="M1158 214h6v6h-6z"/><path fill="#008a0f" d="M1164 214h6v6h-6z"/><path fill="#008a0e" d="M1170 214h6v6h-6z"/><path fill="#008b0e" d="M1176 214h6v6h-6z"/><path fill="#008b0d" d="M1182 214h6v6h-6z"/><path fill="#008c0c" d="M1188 214h6v6h-6z"/><path fill="#008d0b" d="M1194 214h6v6h-6z"/><path fill="#008e0b" d="M1200 214h6v6h-6z"/><path fill="#008f0a" d="M1206 214h6v6h-6z"/><path fill="#009009" d="M1212 214h6v6h-6z"/><path fill="#009109" d="M1218 214h6v6h-6z"/><path fill="#009208" d="M1224 214h6v6h-6z"/><path fill="#009407" d="M1230 214h6v6h-6z"/><path fill="#009506" d="M1236 214h6v6h-6z"/><path fill="#009706" d="M1242 214h6v6h-6z"/><path fill="#009a05" d="M1248 214h6v6h-6z"/><path fill="#009c04" d="M1254 214h6v6h-6z"/><path fill="#009f04" d="M1260 214h6v6h-6z"/><path fill="#00a203" d="M1266 214h6v6h-6z"/><path fill="#00a502" d="M1272 214h6v6h-6z"/><path fill="#03a101" d="M1278 214h6v6h-6z"/><path fill="#07a301" d="M1284 214h6v6h-6z"/><path fill="#0ba500" d="M1290 214h6v6h-6z"/><path fill="#10a400" d="M1296 214h6v6h-6z"/><path fill="#14a200" d="M1302 214h6v6h-6z"/><path fill="#19a000" d="M1308 214h6v6h-6z"/><path fill="#1e9e00" d="M1314 214h6v6h-6z"/><path fill="#249c00" d="M1320 214h6v6h-6z"/><path fill="#2a9b00" d="M1326 214h6v6h-6z"/><path fill="#309900" d="M1332 214h6v6h-6z"/><path fill="#369800" d="M1338 214h6v6h-6z"/><path fill="#3c9700" d="M1344 214h6v6h-6z"/><path fill="#439600" d="M1350 214h6v6h-6z"/><path fill="#499500" d="M1356 214h6v6h-6z"/><path fill="#519400" d="M1362 214h6v6h-6z"/><path fill="#589300" d="M1368 214h6v6h-6z"/><path fill="#5f9200" d="M1374 214h6v6h-6z"/><path fill="#679100" d="M1380 214h6v6h-6z"/><path fill="#00881f" d="M1032 220h6v6h-6z"/><path fill="#00881e" d="M1038 220h6v6h-6zM1044 220h6v6h-6z"/><path fill="#00881d" d="M1050 220h6v6h-6zM1056 220h6v6h-6z"/><path fill="#00881c" d="M1062 220h6v6h-6z"/><path fill="#00881b" d="M1068 220h6v6h-6zM1074 220h6v6h-6z"/><path fill="#00881a" d="M1080 220h6v6h-6zM1086 220h6v6h-6z"/><path fill="#008819" d="M1092 220h6v6h-6z"/><path fill="#008818" d="M1098 220h6v6h-6zM1104 220h6v6h-6z"/><path fill="#008917" d="M1110 220h6v6h-6z"/><path fill="#008916" d="M1116 220h6v6h-6zM1122 220h6v6h-6z"/><path fill="#008915" d="M1128 220h6v6h-6z"/><path fill="#008914" d="M1134 220h6v6h-6z"/><path fill="#008a14" d="M1140 220h6v6h-6z"/><path fill="#008a13" d="M1146 220h6v6h-6z"/><path fill="#008a12" d="M1152 220h6v6h-6z"/><path fill="#008b11" d="M1158 220h6v6h-6zM1164 220h6v6h-6z"/><path fill="#008b10" d="M1170 220h6v6h-6z"/><path fill="#008c0f" d="M1176 220h6v6h-6zM1182 220h6v6h-6z"/><path fill="#008d0e" d="M1188 220h6v6h-6z"/><path fill="#008e0d" d="M1194 220h6v6h-6z"/><path fill="#008f0d" d="M1200 220h6v6h-6z"/><path fill="#00900c" d="M1206 220h6v6h-6z"/><path fill="#00910b" d="M1212 220h6v6h-6z"/><path fill="#00920a" d="M1218 220h6v6h-6z"/><path fill="#00930a" d="M1224 220h6v6h-6z"/><path fill="#009509" d="M1230 220h6v6h-6z"/><path fill="#009708" d="M1236 220h6v6h-6z"/><path fill="#009907" d="M1242 220h6v6h-6z"/><path fill="#009b07" d="M1248 220h6v6h-6z"/><path fill="#009e06" d="M1254 220h6v6h-6z"/><path fill="#00a105" d="M1260 220h6v6h-6z"/><path fill="#00a404" d="M1266 220h6v6h-6z"/><path fill="#01a403" d="M1272 220h6v6h-6z"/><path fill="#04a103" d="M1278 220h6v6h-6z"/><path fill="#08a102" d="M1284 220h6v6h-6z"/><path fill="#0da201" d="M1290 220h6v6h-6z"/><path fill="#12a500" d="M1296 220h6v6h-6z"/><path fill="#17a600" d="M1302 220h6v6h-6z"/><path fill="#1ca300" d="M1308 220h6v6h-6z"/><path fill="#22a100" d="M1314 220h6v6h-6z"/><path fill="#28a000" d="M1320 220h6v6h-6z"/><path fill="#2e9e00" d="M1326 220h6v6h-6z"/><path fill="#349c00" d="M1332 220h6v6h-6z"/><path fill="#3a9b00" d="M1338 220h6v6h-6z"/><path fill="#419a00" d="M1344 220h6v6h-6z"/><path fill="#489800" d="M1350 220h6v6h-6z"/><path fill="#4f9700" d="M1356 220h6v6h-6z"/><path fill="#579600" d="M1362 220h6v6h-6z"/><path fill="#5e9500" d="M1368 220h6v6h-6z"/><path fill="#669400" d="M1374 220h6v6h-6z"/><path fill="#6f9300" d="M1380 220h6v6h-6z"/><path fill="#779200" d="M1386 220h6v6h-6z"/><path fill="#809200" d="M1392 220h6v6h-6z"/><path fill="#008921" d="M1032 226h6v6h-6zM1038 226h6v6h-6zM1056 232h6v6h-6z"/><path fill="#008920" d="M1044 226h6v6h-6zM1062 232h6v6h-6z"/><path fill="#00891f" d="M1050 226h6v6h-6zM1056 226h6v6h-6z"/><path fill="#00891e" d="M1062 226h6v6h-6zM1068 226h6v6h-6z"/><path fill="#00891d" d="M1074 226h6v6h-6z"/><path fill="#00891c" d="M1080 226h6v6h-6zM1086 226h6v6h-6z"/><path fill="#00891b" d="M1092 226h6v6h-6z"/><path fill="#00891a" d="M1098 226h6v6h-6zM1104 226h6v6h-6z"/><path fill="#008919" d="M1110 226h6v6h-6z"/><path fill="#008a18" d="M1116 226h6v6h-6zM1122 226h6v6h-6z"/><path fill="#008a17" d="M1128 226h6v6h-6z"/><path fill="#008a16" d="M1134 226h6v6h-6zM1140 226h6v6h-6z"/><path fill="#008b15" d="M1146 226h6v6h-6z"/><path fill="#008b14" d="M1152 226h6v6h-6z"/><path fill="#008b13" d="M1158 226h6v6h-6z"/><path fill="#008c13" d="M1164 226h6v6h-6z"/><path fill="#008c12" d="M1170 226h6v6h-6z"/><path fill="#008d11" d="M1176 226h6v6h-6zM1182 226h6v6h-6z"/><path fill="#008e10" d="M1188 226h6v6h-6z"/><path fill="#008f0f" d="M1194 226h6v6h-6z"/><path fill="#00900e" d="M1200 226h6v6h-6z"/><path fill="#00910e" d="M1206 226h6v6h-6z"/><path fill="#00920d" d="M1212 226h6v6h-6z"/><path fill="#00930c" d="M1218 226h6v6h-6z"/><path fill="#00950b" d="M1224 226h6v6h-6z"/><path fill="#00960b" d="M1230 226h6v6h-6z"/><path fill="#00980a" d="M1236 226h6v6h-6z"/><path fill="#009a09" d="M1242 226h6v6h-6z"/><path fill="#009d08" d="M1248 226h6v6h-6z"/><path fill="#00a008" d="M1254 226h6v6h-6z"/><path fill="#00a307" d="M1260 226h6v6h-6z"/><path fill="#00a606" d="M1266 226h6v6h-6z"/><path fill="#02a405" d="M1272 226h6v6h-6z"/><path fill="#06a004" d="M1278 226h6v6h-6z"/><path fill="#0ea002" d="M1290 226h6v6h-6z"/><path fill="#14a201" d="M1296 226h6v6h-6z"/><path fill="#19a401" d="M1302 226h6v6h-6z"/><path fill="#20a600" d="M1308 226h6v6h-6z"/><path fill="#26a500" d="M1314 226h6v6h-6z"/><path fill="#2ca300" d="M1320 226h6v6h-6z"/><path fill="#32a100" d="M1326 226h6v6h-6z"/><path fill="#39a000" d="M1332 226h6v6h-6z"/><path fill="#409e00" d="M1338 226h6v6h-6z"/><path fill="#479c00" d="M1344 226h6v6h-6z"/><path fill="#4e9b00" d="M1350 226h6v6h-6z"/><path fill="#569a00" d="M1356 226h6v6h-6z"/><path fill="#5d9800" d="M1362 226h6v6h-6z"/><path fill="#659700" d="M1368 226h6v6h-6z"/><path fill="#6e9600" d="M1374 226h6v6h-6z"/><path fill="#779500" d="M1380 226h6v6h-6z"/><path fill="#809400" d="M1386 226h6v6h-6z"/><path fill="#899400" d="M1392 226h6v6h-6z"/><path fill="#939300" d="M1398 226h6v6h-6z"/><path fill="#008924" d="M1032 232h6v6h-6z"/><path fill="#008923" d="M1038 232h6v6h-6z"/><path fill="#008922" d="M1044 232h6v6h-6zM1050 232h6v6h-6z"/><path fill="#008a20" d="M1068 232h6v6h-6z"/><path fill="#008a1f" d="M1074 232h6v6h-6z"/><path fill="#008a1e" d="M1080 232h6v6h-6zM1086 232h6v6h-6z"/><path fill="#008a1d" d="M1092 232h6v6h-6zM1098 232h6v6h-6z"/><path fill="#008a1c" d="M1104 232h6v6h-6z"/><path fill="#008a1b" d="M1110 232h6v6h-6z"/><path fill="#008a1a" d="M1116 232h6v6h-6z"/><path fill="#008b1a" d="M1122 232h6v6h-6z"/><path fill="#008b19" d="M1128 232h6v6h-6z"/><path fill="#008b18" d="M1134 232h6v6h-6zM1140 232h6v6h-6z"/><path fill="#008c17" d="M1146 232h6v6h-6z"/><path fill="#008c16" d="M1152 232h6v6h-6zM1158 232h6v6h-6z"/><path fill="#008d15" d="M1164 232h6v6h-6z"/><path fill="#008d14" d="M1170 232h6v6h-6z"/><path fill="#008e13" d="M1176 232h6v6h-6zM1182 232h6v6h-6z"/><path fill="#008f12" d="M1188 232h6v6h-6z"/><path fill="#009011" d="M1194 232h6v6h-6z"/><path fill="#009110" d="M1200 232h6v6h-6z"/><path fill="#009210" d="M1206 232h6v6h-6z"/><path fill="#00930f" d="M1212 232h6v6h-6z"/><path fill="#00950e" d="M1218 232h6v6h-6z"/><path fill="#00960d" d="M1224 232h6v6h-6z"/><path fill="#00980d" d="M1230 232h6v6h-6z"/><path fill="#009a0c" d="M1236 232h6v6h-6z"/><path fill="#009c0b" d="M1242 232h6v6h-6z"/><path fill="#009f0a" d="M1248 232h6v6h-6z"/><path fill="#00a10a" d="M1254 232h6v6h-6z"/><path fill="#00a509" d="M1260 232h6v6h-6z"/><path fill="#00a708" d="M1266 232h6v6h-6z"/><path fill="#03a307" d="M1272 232h6v6h-6z"/><path fill="#1ca202" d="M1302 232h6v6h-6z"/><path fill="#22a401" d="M1308 232h6v6h-6z"/><path fill="#29a600" d="M1314 232h6v6h-6z"/><path fill="#30a700" d="M1320 232h6v6h-6z"/><path fill="#37a500" d="M1326 232h6v6h-6z"/><path fill="#3ea300" d="M1332 232h6v6h-6z"/><path fill="#45a100" d="M1338 232h6v6h-6z"/><path fill="#4da000" d="M1344 232h6v6h-6z"/><path fill="#549e00" d="M1350 232h6v6h-6z"/><path fill="#5c9d00" d="M1356 232h6v6h-6z"/><path fill="#659b00" d="M1362 232h6v6h-6z"/><path fill="#6d9a00" d="M1368 232h6v6h-6z"/><path fill="#769900" d="M1374 232h6v6h-6z"/><path fill="#7f9800" d="M1380 232h6v6h-6z"/><path fill="#899700" d="M1386 232h6v6h-6z"/><path fill="#939600" d="M1392 232h6v6h-6z"/><path fill="#928a00" d="M1398 232h6v6h-6z"/><path fill="#8d7d00" d="M1404 232h6v6h-6z"/><path fill="#008a26" d="M1032 238h6v6h-6z"/><path fill="#008a25" d="M1038 238h6v6h-6zM1044 238h6v6h-6z"/><path fill="#008a24" d="M1050 238h6v6h-6z"/><path fill="#008a23" d="M1056 238h6v6h-6zM1062 238h6v6h-6z"/><path fill="#008a22" d="M1068 238h6v6h-6z"/><path fill="#008a21" d="M1074 238h6v6h-6zM1080 238h6v6h-6z"/><path fill="#008b20" d="M1086 238h6v6h-6z"/><path fill="#008b1f" d="M1092 238h6v6h-6zM1098 238h6v6h-6z"/><path fill="#008b1e" d="M1104 238h6v6h-6z"/><path fill="#008b1d" d="M1110 238h6v6h-6zM1116 238h6v6h-6z"/><path fill="#008b1c" d="M1122 238h6v6h-6z"/><path fill="#008c1b" d="M1128 238h6v6h-6zM1134 238h6v6h-6z"/><path fill="#008c1a" d="M1140 238h6v6h-6z"/><path fill="#008c19" d="M1146 238h6v6h-6z"/><path fill="#008d19" d="M1152 238h6v6h-6z"/><path fill="#008d18" d="M1158 238h6v6h-6z"/><path fill="#008e17" d="M1164 238h6v6h-6z"/><path fill="#008e16" d="M1170 238h6v6h-6z"/><path fill="#008f16" d="M1176 238h6v6h-6z"/><path fill="#008f15" d="M1182 238h6v6h-6z"/><path fill="#009014" d="M1188 238h6v6h-6z"/><path fill="#009113" d="M1194 238h6v6h-6z"/><path fill="#009213" d="M1200 238h6v6h-6z"/><path fill="#009312" d="M1206 238h6v6h-6z"/><path fill="#009411" d="M1212 238h6v6h-6z"/><path fill="#009610" d="M1218 238h6v6h-6z"/><path fill="#009710" d="M1224 238h6v6h-6z"/><path fill="#00990f" d="M1230 238h6v6h-6z"/><path fill="#009b0e" d="M1236 238h6v6h-6z"/><path fill="#009e0d" d="M1242 238h6v6h-6z"/><path fill="#00a00d" d="M1248 238h6v6h-6z"/><path fill="#00a30c" d="M1254 238h6v6h-6z"/><path fill="#00a70b" d="M1260 238h6v6h-6z"/><path fill="#01a60a" d="M1266 238h6v6h-6z"/><path fill="#05a309" d="M1272 238h6v6h-6z"/><path fill="#25a203" d="M1308 238h6v6h-6z"/><path fill="#2ca402" d="M1314 238h6v6h-6z"/><path fill="#34a601" d="M1320 238h6v6h-6z"/><path fill="#3ca800" d="M1326 238h6v6h-6z"/><path fill="#44a700" d="M1332 238h6v6h-6z"/><path fill="#4ca500" d="M1338 238h6v6h-6z"/><path fill="#54a300" d="M1344 238h6v6h-6z"/><path fill="#5ca100" d="M1350 238h6v6h-6z"/><path fill="#64a000" d="M1356 238h6v6h-6z"/><path fill="#6d9e00" d="M1362 238h6v6h-6z"/><path fill="#769d00" d="M1368 238h6v6h-6z"/><path fill="#7f9b00" d="M1374 238h6v6h-6z"/><path fill="#899a00" d="M1380 238h6v6h-6z"/><path fill="#939900" d="M1386 238h6v6h-6z"/><path fill="#969100" d="M1392 238h6v6h-6z"/><path fill="#918200" d="M1398 238h6v6h-6z"/><path fill="#8c7500" d="M1404 238h6v6h-6z"/><path fill="#886a00" d="M1410 238h6v6h-6z"/><path fill="#008b28" d="M1038 244h6v6h-6z"/><path fill="#008b27" d="M1044 244h6v6h-6zM1050 244h6v6h-6z"/><path fill="#008b26" d="M1056 244h6v6h-6z"/><path fill="#008b25" d="M1062 244h6v6h-6zM1068 244h6v6h-6z"/><path fill="#008b24" d="M1074 244h6v6h-6z"/><path fill="#008b23" d="M1080 244h6v6h-6zM1086 244h6v6h-6z"/><path fill="#008b22" d="M1092 244h6v6h-6z"/><path fill="#008c21" d="M1098 244h6v6h-6zM1104 244h6v6h-6z"/><path fill="#008c20" d="M1110 244h6v6h-6z"/><path fill="#008c1f" d="M1116 244h6v6h-6zM1122 244h6v6h-6z"/><path fill="#008c1e" d="M1128 244h6v6h-6z"/><path fill="#008d1d" d="M1134 244h6v6h-6z"/><path fill="#008d1c" d="M1140 244h6v6h-6zM1146 244h6v6h-6z"/><path fill="#008e1b" d="M1152 244h6v6h-6z"/><path fill="#008e1a" d="M1158 244h6v6h-6z"/><path fill="#008f19" d="M1164 244h6v6h-6zM1170 244h6v6h-6z"/><path fill="#009018" d="M1176 244h6v6h-6z"/><path fill="#009017" d="M1182 244h6v6h-6z"/><path fill="#009117" d="M1188 244h6v6h-6z"/><path fill="#009216" d="M1194 244h6v6h-6z"/><path fill="#009315" d="M1200 244h6v6h-6z"/><path fill="#009414" d="M1206 244h6v6h-6z"/><path fill="#009614" d="M1212 244h6v6h-6z"/><path fill="#009713" d="M1218 244h6v6h-6z"/><path fill="#009912" d="M1224 244h6v6h-6z"/><path fill="#009b11" d="M1230 244h6v6h-6z"/><path fill="#009d10" d="M1236 244h6v6h-6z"/><path fill="#009f10" d="M1242 244h6v6h-6z"/><path fill="#00a20f" d="M1248 244h6v6h-6z"/><path fill="#00a50e" d="M1254 244h6v6h-6z"/><path fill="#00a90d" d="M1260 244h6v6h-6z"/><path fill="#02a60c" d="M1266 244h6v6h-6z"/><path fill="#06a30b" d="M1272 244h6v6h-6z"/><path fill="#37a302" d="M1320 244h6v6h-6z"/><path fill="#40a501" d="M1326 244h6v6h-6z"/><path fill="#49a701" d="M1332 244h6v6h-6z"/><path fill="#53a900" d="M1338 244h6v6h-6z"/><path fill="#5ba700" d="M1344 244h6v6h-6z"/><path fill="#64a500" d="M1350 244h6v6h-6z"/><path fill="#6da300" d="M1356 244h6v6h-6z"/><path fill="#76a100" d="M1362 244h6v6h-6z"/><path fill="#7fa000" d="M1368 244h6v6h-6z"/><path fill="#899e00" d="M1374 244h6v6h-6z"/><path fill="#939d00" d="M1380 244h6v6h-6z"/><path fill="#9b9800" d="M1386 244h6v6h-6z"/><path fill="#958800" d="M1392 244h6v6h-6z"/><path fill="#907a00" d="M1398 244h6v6h-6z"/><path fill="#8c6f00" d="M1404 244h6v6h-6z"/><path fill="#876400" d="M1410 244h6v6h-6z"/><path fill="#845b00" d="M1416 244h6v6h-6z"/><path fill="#008c2a" d="M1038 250h6v6h-6zM1044 250h6v6h-6z"/><path fill="#008c29" d="M1050 250h6v6h-6zM1056 250h6v6h-6z"/><path fill="#008c28" d="M1062 250h6v6h-6z"/><path fill="#008c27" d="M1068 250h6v6h-6zM1074 250h6v6h-6z"/><path fill="#008c26" d="M1080 250h6v6h-6z"/><path fill="#008c25" d="M1086 250h6v6h-6zM1092 250h6v6h-6z"/><path fill="#008c24" d="M1098 250h6v6h-6z"/><path fill="#008d23" d="M1104 250h6v6h-6zM1110 250h6v6h-6z"/><path fill="#008d22" d="M1116 250h6v6h-6z"/><path fill="#008d21" d="M1122 250h6v6h-6z"/><path fill="#008d20" d="M1128 250h6v6h-6z"/><path fill="#008e20" d="M1134 250h6v6h-6z"/><path fill="#008e1f" d="M1140 250h6v6h-6z"/><path fill="#008e1e" d="M1146 250h6v6h-6z"/><path fill="#008f1e" d="M1152 250h6v6h-6z"/><path fill="#008f1d" d="M1158 250h6v6h-6z"/><path fill="#00901c" d="M1164 250h6v6h-6z"/><path fill="#00901b" d="M1170 250h6v6h-6z"/><path fill="#00911b" d="M1176 250h6v6h-6z"/><path fill="#00911a" d="M1182 250h6v6h-6z"/><path fill="#009219" d="M1188 250h6v6h-6z"/><path fill="#009318" d="M1194 250h6v6h-6z"/><path fill="#009418" d="M1200 250h6v6h-6z"/><path fill="#009517" d="M1206 250h6v6h-6z"/><path fill="#009716" d="M1212 250h6v6h-6z"/><path fill="#009815" d="M1218 250h6v6h-6z"/><path fill="#009a15" d="M1224 250h6v6h-6z"/><path fill="#009c14" d="M1230 250h6v6h-6z"/><path fill="#009e13" d="M1236 250h6v6h-6z"/><path fill="#00a112" d="M1242 250h6v6h-6z"/><path fill="#00a412" d="M1248 250h6v6h-6z"/><path fill="#00a711" d="M1254 250h6v6h-6z"/><path fill="#00a910" d="M1260 250h6v6h-6z"/><path fill="#04a60e" d="M1266 250h6v6h-6z"/><path fill="#44a303" d="M1326 250h6v6h-6z"/><path fill="#4da502" d="M1332 250h6v6h-6z"/><path fill="#57a701" d="M1338 250h6v6h-6z"/><path fill="#62a900" d="M1344 250h6v6h-6z"/><path fill="#6ca900" d="M1350 250h6v6h-6z"/><path fill="#76a700" d="M1356 250h6v6h-6z"/><path fill="#80a500" d="M1362 250h6v6h-6z"/><path fill="#8aa300" d="M1368 250h6v6h-6z"/><path fill="#94a100" d="M1374 250h6v6h-6z"/><path fill="#9fa000" d="M1380 250h6v6h-6z"/><path fill="#9a8f00" d="M1386 250h6v6h-6z"/><path fill="#948000" d="M1392 250h6v6h-6z"/><path fill="#8f7300" d="M1398 250h6v6h-6z"/><path fill="#8b6800" d="M1404 250h6v6h-6z"/><path fill="#875f00" d="M1410 250h6v6h-6z"/><path fill="#835600" d="M1416 250h6v6h-6z"/><path fill="#804f00" d="M1422 250h6v6h-6z"/><path fill="#7d4800" d="M1428 250h6v6h-6z"/><path fill="#008c2d" d="M1038 256h6v6h-6zM1044 256h6v6h-6z"/><path fill="#008d2c" d="M1050 256h6v6h-6z"/><path fill="#008d2b" d="M1056 256h6v6h-6zM1062 256h6v6h-6z"/><path fill="#008d2a" d="M1068 256h6v6h-6z"/><path fill="#008d29" d="M1074 256h6v6h-6zM1080 256h6v6h-6z"/><path fill="#008d28" d="M1086 256h6v6h-6z"/><path fill="#008d27" d="M1092 256h6v6h-6zM1098 256h6v6h-6z"/><path fill="#008d26" d="M1104 256h6v6h-6z"/><path fill="#008e25" d="M1110 256h6v6h-6zM1116 256h6v6h-6z"/><path fill="#008e24" d="M1122 256h6v6h-6z"/><path fill="#008e23" d="M1128 256h6v6h-6z"/><path fill="#008e22" d="M1134 256h6v6h-6z"/><path fill="#008f22" d="M1140 256h6v6h-6z"/><path fill="#008f21" d="M1146 256h6v6h-6z"/><path fill="#009020" d="M1152 256h6v6h-6zM1158 256h6v6h-6z"/><path fill="#00901f" d="M1164 256h6v6h-6z"/><path fill="#00911e" d="M1170 256h6v6h-6z"/><path fill="#00921d" d="M1176 256h6v6h-6zM1182 256h6v6h-6z"/><path fill="#00931c" d="M1188 256h6v6h-6z"/><path fill="#00941b" d="M1194 256h6v6h-6z"/><path fill="#00951a" d="M1200 256h6v6h-6z"/><path fill="#00971a" d="M1206 256h6v6h-6z"/><path fill="#009819" d="M1212 256h6v6h-6z"/><path fill="#009a18" d="M1218 256h6v6h-6z"/><path fill="#009c17" d="M1224 256h6v6h-6z"/><path fill="#009e17" d="M1230 256h6v6h-6z"/><path fill="#00a016" d="M1236 256h6v6h-6z"/><path fill="#00a315" d="M1242 256h6v6h-6z"/><path fill="#00a614" d="M1248 256h6v6h-6z"/><path fill="#00a914" d="M1254 256h6v6h-6z"/><path fill="#01a912" d="M1260 256h6v6h-6z"/><path fill="#05a511" d="M1266 256h6v6h-6z"/><path fill="#5ca503" d="M1338 256h6v6h-6z"/><path fill="#67a702" d="M1344 256h6v6h-6z"/><path fill="#74a901" d="M1350 256h6v6h-6z"/><path fill="#80ab00" d="M1356 256h6v6h-6z"/><path fill="#8ba800" d="M1362 256h6v6h-6z"/><path fill="#95a600" d="M1368 256h6v6h-6z"/><path fill="#a0a500" d="M1374 256h6v6h-6z"/><path fill="#a09700" d="M1380 256h6v6h-6z"/><path fill="#998700" d="M1386 256h6v6h-6z"/><path fill="#947900" d="M1392 256h6v6h-6z"/><path fill="#8f6d00" d="M1398 256h6v6h-6z"/><path fill="#8b6200" d="M1404 256h6v6h-6z"/><path fill="#875900" d="M1410 256h6v6h-6z"/><path fill="#835100" d="M1416 256h6v6h-6z"/><path fill="#804a00" d="M1422 256h6v6h-6z"/><path fill="#7d4400" d="M1428 256h6v6h-6z"/><path fill="#7a3e00" d="M1434 256h6v6h-6z"/><path fill="#008d30" d="M1038 262h6v6h-6z"/><path fill="#008d2f" d="M1044 262h6v6h-6zM1050 262h6v6h-6z"/><path fill="#008d2e" d="M1056 262h6v6h-6zM1062 262h6v6h-6z"/><path fill="#008d2d" d="M1068 262h6v6h-6z"/><path fill="#008e2c" d="M1074 262h6v6h-6zM1080 262h6v6h-6z"/><path fill="#008e2b" d="M1086 262h6v6h-6z"/><path fill="#008e2a" d="M1092 262h6v6h-6zM1098 262h6v6h-6z"/><path fill="#008e29" d="M1104 262h6v6h-6z"/><path fill="#008e28" d="M1110 262h6v6h-6z"/><path fill="#008f27" d="M1116 262h6v6h-6zM1122 262h6v6h-6z"/><path fill="#008f26" d="M1128 262h6v6h-6z"/><path fill="#008f25" d="M1134 262h6v6h-6z"/><path fill="#009025" d="M1140 262h6v6h-6z"/><path fill="#009024" d="M1146 262h6v6h-6z"/><path fill="#009023" d="M1152 262h6v6h-6z"/><path fill="#009122" d="M1158 262h6v6h-6zM1164 262h6v6h-6z"/><path fill="#009221" d="M1170 262h6v6h-6z"/><path fill="#009320" d="M1176 262h6v6h-6z"/><path fill="#009420" d="M1182 262h6v6h-6z"/><path fill="#00941f" d="M1188 262h6v6h-6z"/><path fill="#00951e" d="M1194 262h6v6h-6z"/><path fill="#00971d" d="M1200 262h6v6h-6z"/><path fill="#00981d" d="M1206 262h6v6h-6z"/><path fill="#00991c" d="M1212 262h6v6h-6z"/><path fill="#009b1b" d="M1218 262h6v6h-6z"/><path fill="#009d1a" d="M1224 262h6v6h-6z"/><path fill="#009f1a" d="M1230 262h6v6h-6z"/><path fill="#00a219" d="M1236 262h6v6h-6z"/><path fill="#00a418" d="M1242 262h6v6h-6z"/><path fill="#00a817" d="M1248 262h6v6h-6z"/><path fill="#00ab17" d="M1254 262h6v6h-6z"/><path fill="#03a815" d="M1260 262h6v6h-6z"/><path fill="#07a514" d="M1266 262h6v6h-6z"/><path fill="#6da503" d="M1344 262h6v6h-6z"/><path fill="#79a602" d="M1350 262h6v6h-6z"/><path fill="#87a801" d="M1356 262h6v6h-6z"/><path fill="#95ab00" d="M1362 262h6v6h-6z"/><path fill="#a2aa00" d="M1368 262h6v6h-6z"/><path fill="#a6a100" d="M1374 262h6v6h-6z"/><path fill="#9f8f00" d="M1380 262h6v6h-6z"/><path fill="#997f00" d="M1386 262h6v6h-6z"/><path fill="#947200" d="M1392 262h6v6h-6z"/><path fill="#8f6700" d="M1398 262h6v6h-6z"/><path fill="#8b5d00" d="M1404 262h6v6h-6z"/><path fill="#875400" d="M1410 262h6v6h-6z"/><path fill="#834d00" d="M1416 262h6v6h-6z"/><path fill="#804600" d="M1422 262h6v6h-6z"/><path fill="#7d4000" d="M1428 262h6v6h-6z"/><path fill="#7a3b00" d="M1434 262h6v6h-6z"/><path fill="#783600" d="M1440 262h6v6h-6z"/><path fill="#008e33" d="M1038 268h6v6h-6zM1044 268h6v6h-6z"/><path fill="#008e32" d="M1050 268h6v6h-6z"/><path fill="#008e31" d="M1056 268h6v6h-6zM1062 268h6v6h-6z"/><path fill="#008e30" d="M1068 268h6v6h-6z"/><path fill="#008e2f" d="M1074 268h6v6h-6zM1080 268h6v6h-6z"/><path fill="#008f2e" d="M1086 268h6v6h-6z"/><path fill="#008f2d" d="M1092 268h6v6h-6zM1098 268h6v6h-6z"/><path fill="#008f2c" d="M1104 268h6v6h-6z"/><path fill="#008f2b" d="M1110 268h6v6h-6zM1116 268h6v6h-6z"/><path fill="#00902a" d="M1122 268h6v6h-6z"/><path fill="#009029" d="M1128 268h6v6h-6z"/><path fill="#009028" d="M1134 268h6v6h-6z"/><path fill="#009128" d="M1140 268h6v6h-6z"/><path fill="#009127" d="M1146 268h6v6h-6z"/><path fill="#009126" d="M1152 268h6v6h-6z"/><path fill="#009226" d="M1158 268h6v6h-6z"/><path fill="#009225" d="M1164 268h6v6h-6z"/><path fill="#009324" d="M1170 268h6v6h-6z"/><path fill="#009423" d="M1176 268h6v6h-6z"/><path fill="#009523" d="M1182 268h6v6h-6z"/><path fill="#009622" d="M1188 268h6v6h-6z"/><path fill="#009721" d="M1194 268h6v6h-6z"/><path fill="#009820" d="M1200 268h6v6h-6z"/><path fill="#009920" d="M1206 268h6v6h-6z"/><path fill="#009b1f" d="M1212 268h6v6h-6z"/><path fill="#009c1e" d="M1218 268h6v6h-6z"/><path fill="#009e1e" d="M1224 268h6v6h-6z"/><path fill="#00a11d" d="M1230 268h6v6h-6z"/><path fill="#00a31c" d="M1236 268h6v6h-6z"/><path fill="#00a61c" d="M1242 268h6v6h-6z"/><path fill="#00a91b" d="M1248 268h6v6h-6z"/><path fill="#01ab1a" d="M1254 268h6v6h-6z"/><path fill="#04a818" d="M1260 268h6v6h-6z"/><path fill="#8ea603" d="M1356 268h6v6h-6z"/><path fill="#9ca802" d="M1362 268h6v6h-6z"/><path fill="#a9a801" d="M1368 268h6v6h-6z"/><path fill="#a69800" d="M1374 268h6v6h-6z"/><path fill="#9f8600" d="M1380 268h6v6h-6z"/><path fill="#997800" d="M1386 268h6v6h-6z"/><path fill="#946b00" d="M1392 268h6v6h-6z"/><path fill="#8f6100" d="M1398 268h6v6h-6z"/><path fill="#8b5700" d="M1404 268h6v6h-6z"/><path fill="#874f00" d="M1410 268h6v6h-6z"/><path fill="#834800" d="M1416 268h6v6h-6z"/><path fill="#804200" d="M1422 268h6v6h-6z"/><path fill="#7d3d00" d="M1428 268h6v6h-6z"/><path fill="#7a3800" d="M1434 268h6v6h-6z"/><path fill="#783300" d="M1440 268h6v6h-6z"/><path fill="#752f00" d="M1446 268h6v6h-6z"/><path fill="#008f36" d="M1038 274h6v6h-6zM1044 274h6v6h-6z"/><path fill="#008f35" d="M1050 274h6v6h-6z"/><path fill="#008f34" d="M1056 274h6v6h-6zM1062 274h6v6h-6z"/><path fill="#008f33" d="M1068 274h6v6h-6zM1074 274h6v6h-6z"/><path fill="#008f32" d="M1080 274h6v6h-6z"/><path fill="#008f31" d="M1086 274h6v6h-6z"/><path fill="#009031" d="M1092 274h6v6h-6z"/><path fill="#009030" d="M1098 274h6v6h-6z"/><path fill="#00902f" d="M1104 274h6v6h-6zM1110 274h6v6h-6z"/><path fill="#00902e" d="M1116 274h6v6h-6z"/><path fill="#00902d" d="M1122 274h6v6h-6z"/><path fill="#00912c" d="M1128 274h6v6h-6zM1134 274h6v6h-6z"/><path fill="#00912b" d="M1140 274h6v6h-6z"/><path fill="#00922a" d="M1146 274h6v6h-6zM1152 274h6v6h-6z"/><path fill="#009329" d="M1158 274h6v6h-6z"/><path fill="#009328" d="M1164 274h6v6h-6z"/><path fill="#009427" d="M1170 274h6v6h-6z"/><path fill="#009527" d="M1176 274h6v6h-6z"/><path fill="#009626" d="M1182 274h6v6h-6z"/><path fill="#009725" d="M1188 274h6v6h-6z"/><path fill="#009825" d="M1194 274h6v6h-6z"/><path fill="#009924" d="M1200 274h6v6h-6z"/><path fill="#009a23" d="M1206 274h6v6h-6z"/><path fill="#009c23" d="M1212 274h6v6h-6z"/><path fill="#009e22" d="M1218 274h6v6h-6z"/><path fill="#00a021" d="M1224 274h6v6h-6z"/><path fill="#00a221" d="M1230 274h6v6h-6z"/><path fill="#00a520" d="M1236 274h6v6h-6z"/><path fill="#00a81f" d="M1242 274h6v6h-6z"/><path fill="#00ab1f" d="M1248 274h6v6h-6z"/><path fill="#02ab1d" d="M1254 274h6v6h-6z"/><path fill="#06a81b" d="M1260 274h6v6h-6z"/><path fill="#a4a604" d="M1362 274h6v6h-6z"/><path fill="#a39802" d="M1368 274h6v6h-6z"/><path fill="#a08901" d="M1374 274h6v6h-6z"/><path fill="#9e7d00" d="M1380 274h6v6h-6z"/><path fill="#9a7100" d="M1386 274h6v6h-6z"/><path fill="#946500" d="M1392 274h6v6h-6z"/><path fill="#905b00" d="M1398 274h6v6h-6z"/><path fill="#8b5300" d="M1404 274h6v6h-6z"/><path fill="#874b00" d="M1410 274h6v6h-6z"/><path fill="#844400" d="M1416 274h6v6h-6z"/><path fill="#803e00" d="M1422 274h6v6h-6z"/><path fill="#7d3900" d="M1428 274h6v6h-6z"/><path fill="#7b3400" d="M1434 274h6v6h-6z"/><path fill="#783000" d="M1440 274h6v6h-6z"/><path fill="#762c00" d="M1446 274h6v6h-6z"/><path fill="#742900" d="M1452 274h6v6h-6z"/><path fill="#722600" d="M1458 274h6v6h-6z"/><path fill="#00903a" d="M1038 280h6v6h-6z"/><path fill="#009039" d="M1044 280h6v6h-6zM1050 280h6v6h-6z"/><path fill="#009038" d="M1056 280h6v6h-6z"/><path fill="#009037" d="M1062 280h6v6h-6zM1068 280h6v6h-6z"/><path fill="#009036" d="M1074 280h6v6h-6z"/><path fill="#009035" d="M1080 280h6v6h-6zM1086 280h6v6h-6z"/><path fill="#009034" d="M1092 280h6v6h-6z"/><path fill="#009033" d="M1098 280h6v6h-6z"/><path fill="#009133" d="M1104 280h6v6h-6z"/><path fill="#009132" d="M1110 280h6v6h-6z"/><path fill="#009131" d="M1116 280h6v6h-6zM1122 280h6v6h-6z"/><path fill="#009230" d="M1128 280h6v6h-6z"/><path fill="#00922f" d="M1134 280h6v6h-6zM1140 280h6v6h-6z"/><path fill="#00932e" d="M1146 280h6v6h-6z"/><path fill="#00932d" d="M1152 280h6v6h-6z"/><path fill="#00942c" d="M1158 280h6v6h-6zM1164 280h6v6h-6z"/><path fill="#00952b" d="M1170 280h6v6h-6z"/><path fill="#00962a" d="M1176 280h6v6h-6z"/><path fill="#00972a" d="M1182 280h6v6h-6z"/><path fill="#009829" d="M1188 280h6v6h-6z"/><path fill="#009928" d="M1194 280h6v6h-6z"/><path fill="#009a28" d="M1200 280h6v6h-6z"/><path fill="#009c27" d="M1206 280h6v6h-6z"/><path fill="#009d26" d="M1212 280h6v6h-6z"/><path fill="#009f26" d="M1218 280h6v6h-6z"/><path fill="#00a125" d="M1224 280h6v6h-6z"/><path fill="#00a424" d="M1230 280h6v6h-6z"/><path fill="#00a724" d="M1236 280h6v6h-6z"/><path fill="#00aa23" d="M1242 280h6v6h-6z"/><path fill="#00ad23" d="M1248 280h6v6h-6z"/><path fill="#03aa21" d="M1254 280h6v6h-6z"/><path fill="#08a71f" d="M1260 280h6v6h-6z"/><path fill="#9b7d03" d="M1374 280h6v6h-6z"/><path fill="#987202" d="M1380 280h6v6h-6z"/><path fill="#966801" d="M1386 280h6v6h-6z"/><path fill="#956000" d="M1392 280h6v6h-6z"/><path fill="#905600" d="M1398 280h6v6h-6z"/><path fill="#8c4e00" d="M1404 280h6v6h-6z"/><path fill="#884700" d="M1410 280h6v6h-6z"/><path fill="#844000" d="M1416 280h6v6h-6z"/><path fill="#813b00" d="M1422 280h6v6h-6z"/><path fill="#7e3600" d="M1428 280h6v6h-6z"/><path fill="#7b3100" d="M1434 280h6v6h-6z"/><path fill="#782d00" d="M1440 280h6v6h-6z"/><path fill="#762a00" d="M1446 280h6v6h-6z"/><path fill="#742700" d="M1452 280h6v6h-6z"/><path fill="#722400" d="M1458 280h6v6h-6z"/><path fill="#702100" d="M1464 280h6v6h-6z"/><path fill="#00903d" d="M1038 286h6v6h-6zM1044 286h6v6h-6z"/><path fill="#00903c" d="M1050 286h6v6h-6z"/><path fill="#00913c" d="M1056 286h6v6h-6z"/><path fill="#00913b" d="M1062 286h6v6h-6z"/><path fill="#00913a" d="M1068 286h6v6h-6zM1074 286h6v6h-6z"/><path fill="#009139" d="M1080 286h6v6h-6z"/><path fill="#009138" d="M1086 286h6v6h-6zM1092 286h6v6h-6z"/><path fill="#009137" d="M1098 286h6v6h-6z"/><path fill="#009136" d="M1104 286h6v6h-6z"/><path fill="#009236" d="M1110 286h6v6h-6z"/><path fill="#009235" d="M1116 286h6v6h-6z"/><path fill="#009234" d="M1122 286h6v6h-6zM1128 286h6v6h-6z"/><path fill="#009333" d="M1134 286h6v6h-6z"/><path fill="#009332" d="M1140 286h6v6h-6z"/><path fill="#009432" d="M1146 286h6v6h-6z"/><path fill="#009431" d="M1152 286h6v6h-6z"/><path fill="#009530" d="M1158 286h6v6h-6zM1164 286h6v6h-6z"/><path fill="#00962f" d="M1170 286h6v6h-6z"/><path fill="#00972e" d="M1176 286h6v6h-6z"/><path fill="#00982e" d="M1182 286h6v6h-6z"/><path fill="#00992d" d="M1188 286h6v6h-6z"/><path fill="#009a2c" d="M1194 286h6v6h-6z"/><path fill="#009b2c" d="M1200 286h6v6h-6z"/><path fill="#009d2b" d="M1206 286h6v6h-6z"/><path fill="#009f2a" d="M1212 286h6v6h-6z"/><path fill="#00a12a" d="M1218 286h6v6h-6z"/><path fill="#00a329" d="M1224 286h6v6h-6z"/><path fill="#00a629" d="M1230 286h6v6h-6z"/><path fill="#00a828" d="M1236 286h6v6h-6z"/><path fill="#00ac28" d="M1242 286h6v6h-6z"/><path fill="#01ae27" d="M1248 286h6v6h-6z"/><path fill="#05aa25" d="M1254 286h6v6h-6z"/><path fill="#946803" d="M1380 286h6v6h-6z"/><path fill="#925f02" d="M1386 286h6v6h-6z"/><path fill="#905701" d="M1392 286h6v6h-6z"/><path fill="#8f5000" d="M1398 286h6v6h-6z"/><path fill="#8d4a00" d="M1404 286h6v6h-6z"/><path fill="#884300" d="M1410 286h6v6h-6z"/><path fill="#853d00" d="M1416 286h6v6h-6z"/><path fill="#813700" d="M1422 286h6v6h-6z"/><path fill="#7e3300" d="M1428 286h6v6h-6z"/><path fill="#7c2f00" d="M1434 286h6v6h-6z"/><path fill="#792b00" d="M1440 286h6v6h-6z"/><path fill="#772700" d="M1446 286h6v6h-6z"/><path fill="#742400" d="M1452 286h6v6h-6z"/><path fill="#722200" d="M1458 286h6v6h-6z"/><path fill="#701f00" d="M1464 286h6v6h-6z"/><path fill="#6f1d00" d="M1470 286h6v6h-6z"/><path fill="#009141" d="M1044 292h6v6h-6z"/><path fill="#009140" d="M1050 292h6v6h-6z"/><path fill="#00913f" d="M1056 292h6v6h-6zM1062 292h6v6h-6z"/><path fill="#00913e" d="M1068 292h6v6h-6z"/><path fill="#00923d" d="M1074 292h6v6h-6zM1080 292h6v6h-6z"/><path fill="#00923c" d="M1086 292h6v6h-6zM1092 292h6v6h-6z"/><path fill="#00923b" d="M1098 292h6v6h-6z"/><path fill="#00923a" d="M1104 292h6v6h-6z"/><path fill="#00933a" d="M1110 292h6v6h-6z"/><path fill="#009339" d="M1116 292h6v6h-6z"/><path fill="#009338" d="M1122 292h6v6h-6zM1128 292h6v6h-6z"/><path fill="#009437" d="M1134 292h6v6h-6z"/><path fill="#009436" d="M1140 292h6v6h-6z"/><path fill="#009536" d="M1146 292h6v6h-6z"/><path fill="#009535" d="M1152 292h6v6h-6z"/><path fill="#009634" d="M1158 292h6v6h-6zM1164 292h6v6h-6z"/><path fill="#009733" d="M1170 292h6v6h-6z"/><path fill="#009832" d="M1176 292h6v6h-6z"/><path fill="#009932" d="M1182 292h6v6h-6z"/><path fill="#009a31" d="M1188 292h6v6h-6z"/><path fill="#009b30" d="M1194 292h6v6h-6z"/><path fill="#009d30" d="M1200 292h6v6h-6z"/><path fill="#009e2f" d="M1206 292h6v6h-6z"/><path fill="#00a02f" d="M1212 292h6v6h-6z"/><path fill="#00a22e" d="M1218 292h6v6h-6z"/><path fill="#00a52e" d="M1224 292h6v6h-6z"/><path fill="#00a72d" d="M1230 292h6v6h-6z"/><path fill="#00aa2d" d="M1236 292h6v6h-6z"/><path fill="#00ae2d" d="M1242 292h6v6h-6z"/><path fill="#02ad2b" d="M1248 292h6v6h-6z"/><path fill="#06aa29" d="M1254 292h6v6h-6z"/><path fill="#8c4f02" d="M1392 292h6v6h-6z"/><path fill="#8b4901" d="M1398 292h6v6h-6z"/><path fill="#8a4400" d="M1404 292h6v6h-6z"/><path fill="#893f00" d="M1410 292h6v6h-6z"/><path fill="#863900" d="M1416 292h6v6h-6z"/><path fill="#823400" d="M1422 292h6v6h-6z"/><path fill="#7f3000" d="M1428 292h6v6h-6z"/><path fill="#7c2c00" d="M1434 292h6v6h-6z"/><path fill="#7a2800" d="M1440 292h6v6h-6z"/><path fill="#772500" d="M1446 292h6v6h-6z"/><path fill="#752200" d="M1452 292h6v6h-6z"/><path fill="#731f00" d="M1458 292h6v6h-6z"/><path fill="#711d00" d="M1464 292h6v6h-6z"/><path fill="#6f1b00" d="M1470 292h6v6h-6z"/><path fill="#6e1900" d="M1476 292h6v6h-6z"/><path fill="#009245" d="M1044 298h6v6h-6z"/><path fill="#009244" d="M1050 298h6v6h-6z"/><path fill="#009243" d="M1056 298h6v6h-6zM1062 298h6v6h-6z"/><path fill="#009242" d="M1068 298h6v6h-6zM1074 298h6v6h-6z"/><path fill="#009241" d="M1080 298h6v6h-6z"/><path fill="#009340" d="M1086 298h6v6h-6zM1092 298h6v6h-6z"/><path fill="#00933f" d="M1098 298h6v6h-6z"/><path fill="#00933e" d="M1104 298h6v6h-6zM1110 298h6v6h-6z"/><path fill="#00943d" d="M1116 298h6v6h-6z"/><path fill="#00943c" d="M1122 298h6v6h-6zM1128 298h6v6h-6z"/><path fill="#00953b" d="M1134 298h6v6h-6zM1140 298h6v6h-6z"/><path fill="#00953a" d="M1146 298h6v6h-6z"/><path fill="#009639" d="M1152 298h6v6h-6z"/><path fill="#009739" d="M1158 298h6v6h-6z"/><path fill="#009738" d="M1164 298h6v6h-6z"/><path fill="#009837" d="M1170 298h6v6h-6z"/><path fill="#009937" d="M1176 298h6v6h-6z"/><path fill="#009a36" d="M1182 298h6v6h-6z"/><path fill="#009b36" d="M1188 298h6v6h-6z"/><path fill="#009d35" d="M1194 298h6v6h-6z"/><path fill="#009e35" d="M1200 298h6v6h-6z"/><path fill="#00a034" d="M1206 298h6v6h-6z"/><path fill="#00a234" d="M1212 298h6v6h-6z"/><path fill="#00a433" d="M1218 298h6v6h-6z"/><path fill="#00a633" d="M1224 298h6v6h-6z"/><path fill="#00a932" d="M1230 298h6v6h-6z"/><path fill="#00ac32" d="M1236 298h6v6h-6z"/><path fill="#00b032" d="M1242 298h6v6h-6z"/><path fill="#03ad30" d="M1248 298h6v6h-6z"/><path fill="#08a92d" d="M1254 298h6v6h-6z"/><path fill="#874302" d="M1398 298h6v6h-6z"/><path fill="#863e01" d="M1404 298h6v6h-6z"/><path fill="#853901" d="M1410 298h6v6h-6z"/><path fill="#853500" d="M1416 298h6v6h-6z"/><path fill="#833100" d="M1422 298h6v6h-6z"/><path fill="#802d00" d="M1428 298h6v6h-6z"/><path fill="#7d2900" d="M1434 298h6v6h-6z"/><path fill="#7b2600" d="M1440 298h6v6h-6z"/><path fill="#782300" d="M1446 298h6v6h-6z"/><path fill="#762000" d="M1452 298h6v6h-6z"/><path fill="#741d00" d="M1458 298h6v6h-6z"/><path fill="#721b00" d="M1464 298h6v6h-6z"/><path fill="#701900" d="M1470 298h6v6h-6z"/><path fill="#6e1700" d="M1476 298h6v6h-6z"/><path fill="#6d1600" d="M1482 298h6v6h-6z"/><path fill="#009349" d="M1044 304h6v6h-6z"/><path fill="#009348" d="M1050 304h6v6h-6zM1056 304h6v6h-6z"/><path fill="#009347" d="M1062 304h6v6h-6z"/><path fill="#009346" d="M1068 304h6v6h-6zM1074 304h6v6h-6z"/><path fill="#009345" d="M1080 304h6v6h-6zM1086 304h6v6h-6z"/><path fill="#009444" d="M1092 304h6v6h-6z"/><path fill="#009443" d="M1098 304h6v6h-6zM1104 304h6v6h-6z"/><path fill="#009442" d="M1110 304h6v6h-6zM1116 304h6v6h-6z"/><path fill="#009541" d="M1122 304h6v6h-6z"/><path fill="#009540" d="M1128 304h6v6h-6zM1134 304h6v6h-6z"/><path fill="#00963f" d="M1140 304h6v6h-6z"/><path fill="#00963e" d="M1146 304h6v6h-6z"/><path fill="#00973e" d="M1152 304h6v6h-6z"/><path fill="#00983d" d="M1158 304h6v6h-6zM1164 304h6v6h-6z"/><path fill="#00993c" d="M1170 304h6v6h-6z"/><path fill="#009a3c" d="M1176 304h6v6h-6z"/><path fill="#009b3b" d="M1182 304h6v6h-6z"/><path fill="#009c3b" d="M1188 304h6v6h-6z"/><path fill="#009e3a" d="M1194 304h6v6h-6z"/><path fill="#009f3a" d="M1200 304h6v6h-6z"/><path fill="#00a139" d="M1206 304h6v6h-6z"/><path fill="#00a339" d="M1212 304h6v6h-6z"/><path fill="#00a538" d="M1218 304h6v6h-6z"/><path fill="#00a838" d="M1224 304h6v6h-6z"/><path fill="#00ab38" d="M1230 304h6v6h-6z"/><path fill="#00ae38" d="M1236 304h6v6h-6z"/><path fill="#01b037" d="M1242 304h6v6h-6z"/><path fill="#05ac34" d="M1248 304h6v6h-6z"/><path fill="#823402" d="M1410 304h6v6h-6z"/><path fill="#813001" d="M1416 304h6v6h-6z"/><path fill="#812d00" d="M1422 304h6v6h-6z"/><path fill="#812a00" d="M1428 304h6v6h-6z"/><path fill="#7e2700" d="M1434 304h6v6h-6z"/><path fill="#7c2300" d="M1440 304h6v6h-6z"/><path fill="#792100" d="M1446 304h6v6h-6z"/><path fill="#771e00" d="M1452 304h6v6h-6z"/><path fill="#741c00" d="M1458 304h6v6h-6z"/><path fill="#721900" d="M1464 304h6v6h-6z"/><path fill="#711700" d="M1470 304h6v6h-6z"/><path fill="#6f1600" d="M1476 304h6v6h-6z"/><path fill="#6d1400" d="M1482 304h6v6h-6z"/><path fill="#6c1300" d="M1488 304h6v6h-6z"/><path fill="#6a1100" d="M1494 304h6v6h-6z"/><path fill="#00944d" d="M1044 310h6v6h-6zM1050 310h6v6h-6z"/><path fill="#00944c" d="M1056 310h6v6h-6zM1062 310h6v6h-6z"/><path fill="#00944b" d="M1068 310h6v6h-6z"/><path fill="#00944a" d="M1074 310h6v6h-6zM1080 310h6v6h-6z"/><path fill="#009449" d="M1086 310h6v6h-6zM1092 310h6v6h-6z"/><path fill="#009548" d="M1098 310h6v6h-6zM1104 310h6v6h-6z"/><path fill="#009547" d="M1110 310h6v6h-6z"/><path fill="#009546" d="M1116 310h6v6h-6z"/><path fill="#009646" d="M1122 310h6v6h-6z"/><path fill="#009645" d="M1128 310h6v6h-6zM1134 310h6v6h-6z"/><path fill="#009744" d="M1140 310h6v6h-6z"/><path fill="#009743" d="M1146 310h6v6h-6z"/><path fill="#009843" d="M1152 310h6v6h-6z"/><path fill="#009942" d="M1158 310h6v6h-6zM1164 310h6v6h-6z"/><path fill="#009a41" d="M1170 310h6v6h-6z"/><path fill="#009b41" d="M1176 310h6v6h-6z"/><path fill="#009c40" d="M1182 310h6v6h-6z"/><path fill="#009e40" d="M1188 310h6v6h-6z"/><path fill="#009f3f" d="M1194 310h6v6h-6z"/><path fill="#00a13f" d="M1200 310h6v6h-6z"/><path fill="#00a23f" d="M1206 310h6v6h-6z"/><path fill="#00a53e" d="M1212 310h6v6h-6z"/><path fill="#00a73e" d="M1218 310h6v6h-6z"/><path fill="#00aa3e" d="M1224 310h6v6h-6z"/><path fill="#00ad3e" d="M1230 310h6v6h-6z"/><path fill="#00b03e" d="M1236 310h6v6h-6z"/><path fill="#02af3c" d="M1242 310h6v6h-6z"/><path fill="#07ac3a" d="M1248 310h6v6h-6z"/><path fill="#7e2901" d="M1422 310h6v6h-6z"/><path fill="#7e2601" d="M1428 310h6v6h-6z"/><path fill="#7e2400" d="M1434 310h6v6h-6z"/><path fill="#7d2100" d="M1440 310h6v6h-6z"/><path fill="#7a1e00" d="M1446 310h6v6h-6z"/><path fill="#781c00" d="M1452 310h6v6h-6z"/><path fill="#761a00" d="M1458 310h6v6h-6z"/><path fill="#731800" d="M1464 310h6v6h-6z"/><path fill="#721600" d="M1470 310h6v6h-6z"/><path fill="#701400" d="M1476 310h6v6h-6z"/><path fill="#6e1300" d="M1482 310h6v6h-6z"/><path fill="#6d1100" d="M1488 310h6v6h-6z"/><path fill="#6b1000" d="M1494 310h6v6h-6z"/><path fill="#6a0f00" d="M1500 310h6v6h-6z"/><path fill="#009452" d="M1044 316h6v6h-6zM1050 316h6v6h-6z"/><path fill="#009451" d="M1056 316h6v6h-6z"/><path fill="#009550" d="M1062 316h6v6h-6zM1068 316h6v6h-6z"/><path fill="#00954f" d="M1074 316h6v6h-6zM1080 316h6v6h-6z"/><path fill="#00954e" d="M1086 316h6v6h-6zM1092 316h6v6h-6z"/><path fill="#00954d" d="M1098 316h6v6h-6z"/><path fill="#00964d" d="M1104 316h6v6h-6z"/><path fill="#00964c" d="M1110 316h6v6h-6z"/><path fill="#00964b" d="M1116 316h6v6h-6z"/><path fill="#00974b" d="M1122 316h6v6h-6z"/><path fill="#00974a" d="M1128 316h6v6h-6zM1134 316h6v6h-6z"/><path fill="#009849" d="M1140 316h6v6h-6zM1146 316h6v6h-6z"/><path fill="#009948" d="M1152 316h6v6h-6z"/><path fill="#009a48" d="M1158 316h6v6h-6z"/><path fill="#009a47" d="M1164 316h6v6h-6z"/><path fill="#009b47" d="M1170 316h6v6h-6z"/><path fill="#009c46" d="M1176 316h6v6h-6z"/><path fill="#009e46" d="M1182 316h6v6h-6z"/><path fill="#009f45" d="M1188 316h6v6h-6z"/><path fill="#00a045" d="M1194 316h6v6h-6z"/><path fill="#00a245" d="M1200 316h6v6h-6z"/><path fill="#00a445" d="M1206 316h6v6h-6z"/><path fill="#00a644" d="M1212 316h6v6h-6z"/><path fill="#00a944" d="M1218 316h6v6h-6z"/><path fill="#00ab44" d="M1224 316h6v6h-6z"/><path fill="#00af44" d="M1230 316h6v6h-6z"/><path fill="#00b244" d="M1236 316h6v6h-6z"/><path fill="#04af42" d="M1242 316h6v6h-6z"/><path fill="#09ac40" d="M1248 316h6v6h-6z"/><path fill="#7b2301" d="M1428 316h6v6h-6z"/><path fill="#7b2001" d="M1434 316h6v6h-6z"/><path fill="#7b1e00" d="M1440 316h6v6h-6z"/><path fill="#7b1c00" d="M1446 316h6v6h-6z"/><path fill="#791a00" d="M1452 316h6v6h-6z"/><path fill="#771800" d="M1458 316h6v6h-6z"/><path fill="#751600" d="M1464 316h6v6h-6z"/><path fill="#731400" d="M1470 316h6v6h-6z"/><path fill="#711300" d="M1476 316h6v6h-6z"/><path fill="#6f1100" d="M1482 316h6v6h-6z"/><path fill="#6d1000" d="M1488 316h6v6h-6z"/><path fill="#6c0f00" d="M1494 316h6v6h-6z"/><path fill="#6b0d00" d="M1500 316h6v6h-6z"/><path fill="#690c00" d="M1506 316h6v6h-6z"/><path fill="#009557" d="M1044 322h6v6h-6zM1050 322h6v6h-6z"/><path fill="#009556" d="M1056 322h6v6h-6zM1062 322h6v6h-6z"/><path fill="#009555" d="M1068 322h6v6h-6z"/><path fill="#009655" d="M1074 322h6v6h-6z"/><path fill="#009654" d="M1080 322h6v6h-6z"/><path fill="#009653" d="M1086 322h6v6h-6zM1092 322h6v6h-6z"/><path fill="#009652" d="M1098 322h6v6h-6z"/><path fill="#009752" d="M1104 322h6v6h-6z"/><path fill="#009751" d="M1110 322h6v6h-6zM1116 322h6v6h-6z"/><path fill="#009750" d="M1122 322h6v6h-6z"/><path fill="#009850" d="M1128 322h6v6h-6z"/><path fill="#00984f" d="M1134 322h6v6h-6z"/><path fill="#00994f" d="M1140 322h6v6h-6z"/><path fill="#00994e" d="M1146 322h6v6h-6z"/><path fill="#009a4e" d="M1152 322h6v6h-6z"/><path fill="#009b4d" d="M1158 322h6v6h-6zM1164 322h6v6h-6z"/><path fill="#009c4d" d="M1170 322h6v6h-6z"/><path fill="#009d4c" d="M1176 322h6v6h-6z"/><path fill="#009f4c" d="M1182 322h6v6h-6z"/><path fill="#00a04c" d="M1188 322h6v6h-6z"/><path fill="#00a24b" d="M1194 322h6v6h-6z"/><path fill="#00a34b" d="M1200 322h6v6h-6z"/><path fill="#00a54b" d="M1206 322h6v6h-6z"/><path fill="#00a84b" d="M1212 322h6v6h-6z"/><path fill="#00aa4b" d="M1218 322h6v6h-6z"/><path fill="#00ad4b" d="M1224 322h6v6h-6z"/><path fill="#00b04c" d="M1230 322h6v6h-6z"/><path fill="#01b24b" d="M1236 322h6v6h-6z"/><path fill="#06af48" d="M1242 322h6v6h-6z"/><path fill="#781b01" d="M1440 322h6v6h-6z"/><path fill="#781a01" d="M1446 322h6v6h-6z"/><path fill="#791800" d="M1452 322h6v6h-6z"/><path fill="#781600" d="M1458 322h6v6h-6z"/><path fill="#761400" d="M1464 322h6v6h-6zM1458 328h6v6h-6z"/><path fill="#741300" d="M1470 322h6v6h-6z"/><path fill="#721100" d="M1476 322h6v6h-6z"/><path fill="#701000" d="M1482 322h6v6h-6z"/><path fill="#6e0e00" d="M1488 322h6v6h-6z"/><path fill="#6d0d00" d="M1494 322h6v6h-6z"/><path fill="#6b0c00" d="M1500 322h6v6h-6z"/><path fill="#6a0b00" d="M1506 322h6v6h-6z"/><path fill="#690a00" d="M1512 322h6v6h-6z"/><path fill="#00965c" d="M1050 328h6v6h-6z"/><path fill="#00965b" d="M1056 328h6v6h-6zM1062 328h6v6h-6z"/><path fill="#00965a" d="M1068 328h6v6h-6zM1074 328h6v6h-6z"/><path fill="#00975a" d="M1080 328h6v6h-6z"/><path fill="#009759" d="M1086 328h6v6h-6zM1092 328h6v6h-6z"/><path fill="#009758" d="M1098 328h6v6h-6zM1104 328h6v6h-6z"/><path fill="#009857" d="M1110 328h6v6h-6zM1116 328h6v6h-6z"/><path fill="#009856" d="M1122 328h6v6h-6z"/><path fill="#009956" d="M1128 328h6v6h-6z"/><path fill="#009955" d="M1134 328h6v6h-6z"/><path fill="#009a55" d="M1140 328h6v6h-6z"/><path fill="#009a54" d="M1146 328h6v6h-6z"/><path fill="#009b54" d="M1152 328h6v6h-6z"/><path fill="#009c54" d="M1158 328h6v6h-6z"/><path fill="#009d53" d="M1164 328h6v6h-6z"/><path fill="#009e53" d="M1170 328h6v6h-6z"/><path fill="#009f53" d="M1176 328h6v6h-6z"/><path fill="#00a052" d="M1182 328h6v6h-6z"/><path fill="#00a152" d="M1188 328h6v6h-6z"/><path fill="#00a352" d="M1194 328h6v6h-6z"/><path fill="#00a552" d="M1200 328h6v6h-6z"/><path fill="#00a752" d="M1206 328h6v6h-6z"/><path fill="#00a952" d="M1212 328h6v6h-6z"/><path fill="#00ac53" d="M1218 328h6v6h-6z"/><path fill="#00af53" d="M1224 328h6v6h-6z"/><path fill="#00b253" d="M1230 328h6v6h-6z"/><path fill="#02b252" d="M1236 328h6v6h-6z"/><path fill="#08ae4f" d="M1242 328h6v6h-6z"/><path fill="#761701" d="M1446 328h6v6h-6z"/><path fill="#761501" d="M1452 328h6v6h-6z"/><path fill="#771300" d="M1464 328h6v6h-6z"/><path fill="#751100" d="M1470 328h6v6h-6z"/><path fill="#731000" d="M1476 328h6v6h-6z"/><path fill="#710e00" d="M1482 328h6v6h-6z"/><path fill="#700d00" d="M1488 328h6v6h-6z"/><path fill="#6e0c00" d="M1494 328h6v6h-6z"/><path fill="#6d0b00" d="M1500 328h6v6h-6z"/><path fill="#6b0a00" d="M1506 328h6v6h-6z"/><path fill="#6a0900" d="M1512 328h6v6h-6z"/><path fill="#690800" d="M1518 328h6v6h-6z"/><path fill="#670800" d="M1524 328h6v6h-6z"/><path fill="#009762" d="M1050 334h6v6h-6z"/><path fill="#009761" d="M1056 334h6v6h-6zM1062 334h6v6h-6z"/><path fill="#009760" d="M1068 334h6v6h-6zM1074 334h6v6h-6z"/><path fill="#00975f" d="M1080 334h6v6h-6z"/><path fill="#00985f" d="M1086 334h6v6h-6zM1092 334h6v6h-6z"/><path fill="#00985e" d="M1098 334h6v6h-6zM1104 334h6v6h-6z"/><path fill="#00985d" d="M1110 334h6v6h-6z"/><path fill="#00995d" d="M1116 334h6v6h-6z"/><path fill="#00995c" d="M1122 334h6v6h-6z"/><path fill="#009a5c" d="M1128 334h6v6h-6zM1134 334h6v6h-6z"/><path fill="#009b5b" d="M1140 334h6v6h-6zM1146 334h6v6h-6z"/><path fill="#009c5b" d="M1152 334h6v6h-6z"/><path fill="#009d5a" d="M1158 334h6v6h-6z"/><path fill="#009e5a" d="M1164 334h6v6h-6z"/><path fill="#009f5a" d="M1170 334h6v6h-6z"/><path fill="#00a05a" d="M1176 334h6v6h-6z"/><path fill="#00a15a" d="M1182 334h6v6h-6z"/><path fill="#00a35a" d="M1188 334h6v6h-6z"/><path fill="#00a45a" d="M1194 334h6v6h-6z"/><path fill="#00a65a" d="M1200 334h6v6h-6z"/><path fill="#00a85a" d="M1206 334h6v6h-6z"/><path fill="#00ab5a" d="M1212 334h6v6h-6z"/><path fill="#00ae5b" d="M1218 334h6v6h-6z"/><path fill="#00b15b" d="M1224 334h6v6h-6z"/><path fill="#00b45c" d="M1230 334h6v6h-6z"/><path fill="#04b159" d="M1236 334h6v6h-6z"/><path fill="#0bae56" d="M1242 334h6v6h-6z"/><path fill="#741201" d="M1458 334h6v6h-6z"/><path fill="#741100" d="M1464 334h6v6h-6z"/><path fill="#750f00" d="M1470 334h6v6h-6z"/><path fill="#750e00" d="M1476 334h6v6h-6z"/><path fill="#730d00" d="M1482 334h6v6h-6zM1476 340h6v6h-6z"/><path fill="#710c00" d="M1488 334h6v6h-6z"/><path fill="#6f0b00" d="M1494 334h6v6h-6z"/><path fill="#6e0a00" d="M1500 334h6v6h-6z"/><path fill="#6c0900" d="M1506 334h6v6h-6z"/><path fill="#6b0800" d="M1512 334h6v6h-6z"/><path fill="#6a0700" d="M1518 334h6v6h-6z"/><path fill="#680700" d="M1524 334h6v6h-6z"/><path fill="#670600" d="M1530 334h6v6h-6z"/><path fill="#009868" d="M1050 340h6v6h-6z"/><path fill="#009867" d="M1056 340h6v6h-6zM1062 340h6v6h-6z"/><path fill="#009866" d="M1068 340h6v6h-6zM1074 340h6v6h-6zM1080 340h6v6h-6z"/><path fill="#009865" d="M1086 340h6v6h-6z"/><path fill="#009965" d="M1092 340h6v6h-6z"/><path fill="#009964" d="M1098 340h6v6h-6zM1104 340h6v6h-6zM1110 340h6v6h-6z"/><path fill="#009a63" d="M1116 340h6v6h-6zM1122 340h6v6h-6z"/><path fill="#009b63" d="M1128 340h6v6h-6z"/><path fill="#009b62" d="M1134 340h6v6h-6z"/><path fill="#009c62" d="M1140 340h6v6h-6zM1146 340h6v6h-6z"/><path fill="#009d62" d="M1152 340h6v6h-6z"/><path fill="#009e61" d="M1158 340h6v6h-6z"/><path fill="#009f61" d="M1164 340h6v6h-6z"/><path fill="#00a061" d="M1170 340h6v6h-6z"/><path fill="#00a161" d="M1176 340h6v6h-6z"/><path fill="#00a261" d="M1182 340h6v6h-6z"/><path fill="#00a461" d="M1188 340h6v6h-6z"/><path fill="#00a662" d="M1194 340h6v6h-6z"/><path fill="#00a862" d="M1200 340h6v6h-6z"/><path fill="#00aa62" d="M1206 340h6v6h-6z"/><path fill="#00ad63" d="M1212 340h6v6h-6z"/><path fill="#00af64" d="M1218 340h6v6h-6z"/><path fill="#00b364" d="M1224 340h6v6h-6z"/><path fill="#01b464" d="M1230 340h6v6h-6z"/><path fill="#07b161" d="M1236 340h6v6h-6z"/><path fill="#720f01" d="M1464 340h6v6h-6z"/><path fill="#730e01" d="M1470 340h6v6h-6z"/><path fill="#740c00" d="M1482 340h6v6h-6z"/><path fill="#730b00" d="M1488 340h6v6h-6z"/><path fill="#710a00" d="M1494 340h6v6h-6z"/><path fill="#6f0900" d="M1500 340h6v6h-6z"/><path fill="#6e0800" d="M1506 340h6v6h-6z"/><path fill="#6c0700" d="M1512 340h6v6h-6z"/><path fill="#6b0700" d="M1518 340h6v6h-6z"/><path fill="#6a0600" d="M1524 340h6v6h-6z"/><path fill="#680500" d="M1530 340h6v6h-6z"/><path fill="#670500" d="M1536 340h6v6h-6z"/><path fill="#00986e" d="M1050 346h6v6h-6zM1056 346h6v6h-6z"/><path fill="#00996d" d="M1062 346h6v6h-6zM1068 346h6v6h-6zM1074 346h6v6h-6z"/><path fill="#00996c" d="M1080 346h6v6h-6zM1086 346h6v6h-6zM1092 346h6v6h-6z"/><path fill="#009a6b" d="M1098 346h6v6h-6zM1104 346h6v6h-6zM1110 346h6v6h-6z"/><path fill="#009b6a" d="M1116 346h6v6h-6zM1122 346h6v6h-6zM1128 346h6v6h-6z"/><path fill="#009c6a" d="M1134 346h6v6h-6z"/><path fill="#009d6a" d="M1140 346h6v6h-6z"/><path fill="#009d69" d="M1146 346h6v6h-6z"/><path fill="#009e69" d="M1152 346h6v6h-6z"/><path fill="#009f69" d="M1158 346h6v6h-6z"/><path fill="#00a069" d="M1164 346h6v6h-6z"/><path fill="#00a169" d="M1170 346h6v6h-6z"/><path fill="#00a269" d="M1176 346h6v6h-6z"/><path fill="#00a46a" d="M1182 346h6v6h-6z"/><path fill="#00a56a" d="M1188 346h6v6h-6z"/><path fill="#00a76a" d="M1194 346h6v6h-6z"/><path fill="#00a96b" d="M1200 346h6v6h-6z"/><path fill="#00ac6b" d="M1206 346h6v6h-6z"/><path fill="#00ae6c" d="M1212 346h6v6h-6z"/><path fill="#00b16d" d="M1218 346h6v6h-6z"/><path fill="#00b56e" d="M1224 346h6v6h-6z"/><path fill="#03b46d" d="M1230 346h6v6h-6z"/><path fill="#09b16a" d="M1236 346h6v6h-6z"/><path fill="#710b01" d="M1476 346h6v6h-6z"/><path fill="#720a00" d="M1482 346h6v6h-6z"/><path fill="#720900" d="M1488 346h6v6h-6z"/><path fill="#730900" d="M1494 346h6v6h-6z"/><path fill="#710800" d="M1500 346h6v6h-6z"/><path fill="#6f0700" d="M1506 346h6v6h-6z"/><path fill="#6e0600" d="M1512 346h6v6h-6z"/><path fill="#6c0600" d="M1518 346h6v6h-6z"/><path fill="#6b0500" d="M1524 346h6v6h-6z"/><path fill="#6a0400" d="M1530 346h6v6h-6z"/><path fill="#680400" d="M1536 346h6v6h-6z"/><path fill="#670300" d="M1542 346h6v6h-6z"/><path fill="#009975" d="M1050 352h6v6h-6zM1056 352h6v6h-6z"/><path fill="#009974" d="M1062 352h6v6h-6z"/><path fill="#009a74" d="M1068 352h6v6h-6zM1074 352h6v6h-6z"/><path fill="#009a73" d="M1080 352h6v6h-6zM1086 352h6v6h-6zM1092 352h6v6h-6z"/><path fill="#009b73" d="M1098 352h6v6h-6zM1104 352h6v6h-6z"/><path fill="#009b72" d="M1110 352h6v6h-6zM1116 352h6v6h-6z"/><path fill="#009c72" d="M1122 352h6v6h-6zM1128 352h6v6h-6z"/><path fill="#009d72" d="M1134 352h6v6h-6z"/><path fill="#009e72" d="M1140 352h6v6h-6zM1146 352h6v6h-6z"/><path fill="#009f72" d="M1152 352h6v6h-6z"/><path fill="#00a072" d="M1158 352h6v6h-6z"/><path fill="#00a172" d="M1164 352h6v6h-6z"/><path fill="#00a272" d="M1170 352h6v6h-6z"/><path fill="#00a372" d="M1176 352h6v6h-6z"/><path fill="#00a573" d="M1182 352h6v6h-6z"/><path fill="#00a773" d="M1188 352h6v6h-6z"/><path fill="#00a974" d="M1194 352h6v6h-6z"/><path fill="#00ab75" d="M1200 352h6v6h-6z"/><path fill="#00ad76" d="M1206 352h6v6h-6z"/><path fill="#00b077" d="M1212 352h6v6h-6z"/><path fill="#00b378" d="M1218 352h6v6h-6z"/><path fill="#00b77a" d="M1224 352h6v6h-6z"/><path fill="#05b376" d="M1230 352h6v6h-6z"/><path fill="#0cb073" d="M1236 352h6v6h-6z"/><path fill="#700901" d="M1482 352h6v6h-6z"/><path fill="#700801" d="M1488 352h6v6h-6z"/><path fill="#710700" d="M1494 352h6v6h-6z"/><path fill="#720700" d="M1500 352h6v6h-6z"/><path fill="#710600" d="M1506 352h6v6h-6z"/><path fill="#6f0500" d="M1512 352h6v6h-6z"/><path fill="#6e0500" d="M1518 352h6v6h-6z"/><path fill="#6c0400" d="M1524 352h6v6h-6z"/><path fill="#6b0400" d="M1530 352h6v6h-6z"/><path fill="#6a0300" d="M1536 352h6v6h-6z"/><path fill="#690300" d="M1542 352h6v6h-6z"/><path fill="#670200" d="M1548 352h6v6h-6z"/><path fill="#009a7c" d="M1056 358h6v6h-6zM1062 358h6v6h-6zM1068 358h6v6h-6z"/><path fill="#009a7b" d="M1074 358h6v6h-6z"/><path fill="#009b7b" d="M1080 358h6v6h-6zM1086 358h6v6h-6zM1092 358h6v6h-6zM1098 358h6v6h-6z"/><path fill="#009c7a" d="M1104 358h6v6h-6zM1110 358h6v6h-6zM1116 358h6v6h-6z"/><path fill="#009d7a" d="M1122 358h6v6h-6zM1128 358h6v6h-6z"/><path fill="#009e7a" d="M1134 358h6v6h-6z"/><path fill="#009f7a" d="M1140 358h6v6h-6zM1146 358h6v6h-6z"/><path fill="#00a07b" d="M1152 358h6v6h-6z"/><path fill="#00a17b" d="M1158 358h6v6h-6z"/><path fill="#00a27b" d="M1164 358h6v6h-6z"/><path fill="#00a37c" d="M1170 358h6v6h-6z"/><path fill="#00a57c" d="M1176 358h6v6h-6z"/><path fill="#00a67d" d="M1182 358h6v6h-6z"/><path fill="#00a87d" d="M1188 358h6v6h-6z"/><path fill="#00aa7e" d="M1194 358h6v6h-6z"/><path fill="#00ac7f" d="M1200 358h6v6h-6z"/><path fill="#00af81" d="M1206 358h6v6h-6z"/><path fill="#00b282" d="M1212 358h6v6h-6z"/><path fill="#00b584" d="M1218 358h6v6h-6z"/><path fill="#01b784" d="M1224 358h6v6h-6z"/><path fill="#08b381" d="M1230 358h6v6h-6z"/><path fill="#6f0601" d="M1494 358h6v6h-6z"/><path fill="#700600" d="M1500 358h6v6h-6z"/><path fill="#700500" d="M1506 358h6v6h-6z"/><path fill="#710400" d="M1512 358h6v6h-6z"/><path fill="#6f0400" d="M1518 358h6v6h-6zM1512 364h6v6h-6z"/><path fill="#6e0300" d="M1524 358h6v6h-6z"/><path fill="#6c0300" d="M1530 358h6v6h-6z"/><path fill="#6b0200" d="M1536 358h6v6h-6z"/><path fill="#6a0200" d="M1542 358h6v6h-6z"/><path fill="#690200" d="M1548 358h6v6h-6z"/><path fill="#680100" d="M1554 358h6v6h-6zM1560 364h6v6h-6z"/><path fill="#670100" d="M1560 358h6v6h-6z"/><path fill="#009b84" d="M1056 364h6v6h-6zM1062 364h6v6h-6zM1068 364h6v6h-6z"/><path fill="#009b83" d="M1074 364h6v6h-6zM1080 364h6v6h-6z"/><path fill="#009c83" d="M1086 364h6v6h-6zM1092 364h6v6h-6zM1098 364h6v6h-6z"/><path fill="#009d83" d="M1104 364h6v6h-6zM1110 364h6v6h-6zM1116 364h6v6h-6z"/><path fill="#009e83" d="M1122 364h6v6h-6zM1128 364h6v6h-6z"/><path fill="#009f83" d="M1134 364h6v6h-6z"/><path fill="#00a084" d="M1140 364h6v6h-6zM1146 364h6v6h-6z"/><path fill="#00a184" d="M1152 364h6v6h-6z"/><path fill="#00a285" d="M1158 364h6v6h-6z"/><path fill="#00a385" d="M1164 364h6v6h-6z"/><path fill="#00a586" d="M1170 364h6v6h-6z"/><path fill="#00a687" d="M1176 364h6v6h-6z"/><path fill="#00a887" d="M1182 364h6v6h-6z"/><path fill="#00a988" d="M1188 364h6v6h-6z"/><path fill="#00ac8a" d="M1194 364h6v6h-6z"/><path fill="#00ae8b" d="M1200 364h6v6h-6z"/><path fill="#00b18d" d="M1206 364h6v6h-6z"/><path fill="#00b48f" d="M1212 364h6v6h-6z"/><path fill="#00b791" d="M1218 364h6v6h-6z"/><path fill="#03b68f" d="M1224 364h6v6h-6z"/><path fill="#0ab38c" d="M1230 364h6v6h-6z"/><path fill="#6e0401" d="M1500 364h6v6h-6z"/><path fill="#6f0401" d="M1506 364h6v6h-6z"/><path fill="#700300" d="M1518 364h6v6h-6zM1524 364h6v6h-6z"/><path fill="#6e0200" d="M1530 364h6v6h-6zM1518 370h6v6h-6z"/><path fill="#6d0200" d="M1536 364h6v6h-6z"/><path fill="#6b0100" d="M1542 364h6v6h-6z"/><path fill="#6a0100" d="M1548 364h6v6h-6z"/><path fill="#690100" d="M1554 364h6v6h-6z"/><path fill="#670000" d="M1566 364h6v6h-6zM1572 376h6v6h-6zM1578 388h6v6h-6zM1578 394h6v6h-6zM1578 400h6v6h-6zM1572 406h6v6h-6z"/><path fill="#009c8c" d="M1056 370h6v6h-6zM1062 370h6v6h-6zM1068 370h6v6h-6zM1074 370h6v6h-6zM1080 370h6v6h-6z"/><path fill="#009d8c" d="M1086 370h6v6h-6zM1092 370h6v6h-6zM1098 370h6v6h-6zM1104 370h6v6h-6z"/><path fill="#009e8c" d="M1110 370h6v6h-6z"/><path fill="#009e8d" d="M1116 370h6v6h-6z"/><path fill="#009f8d" d="M1122 370h6v6h-6zM1128 370h6v6h-6z"/><path fill="#00a08d" d="M1134 370h6v6h-6z"/><path fill="#00a18e" d="M1140 370h6v6h-6zM1146 370h6v6h-6z"/><path fill="#00a28f" d="M1152 370h6v6h-6z"/><path fill="#00a38f" d="M1158 370h6v6h-6z"/><path fill="#00a490" d="M1164 370h6v6h-6z"/><path fill="#00a691" d="M1170 370h6v6h-6z"/><path fill="#00a792" d="M1176 370h6v6h-6z"/><path fill="#00a993" d="M1182 370h6v6h-6z"/><path fill="#00ab95" d="M1188 370h6v6h-6z"/><path fill="#00ad96" d="M1194 370h6v6h-6z"/><path fill="#00b098" d="M1200 370h6v6h-6z"/><path fill="#00b29a" d="M1206 370h6v6h-6z"/><path fill="#00b69c" d="M1212 370h6v6h-6z"/><path fill="#00b99f" d="M1218 370h6v6h-6z"/><path fill="#06b69c" d="M1224 370h6v6h-6z"/><path fill="#0eb399" d="M1230 370h6v6h-6z"/><path fill="#6e0301" d="M1512 370h6v6h-6z"/><path fill="#6f0200" d="M1524 370h6v6h-6z"/><path fill="#700200" d="M1530 370h6v6h-6z"/><path fill="#6f0100" d="M1536 370h6v6h-6zM1536 376h6v6h-6z"/><path fill="#6d0100" d="M1542 370h6v6h-6z"/><path fill="#6c0100" d="M1548 370h6v6h-6z"/><path fill="#6b0000" d="M1554 370h6v6h-6zM1560 382h6v6h-6zM1560 388h6v6h-6zM1554 394h6v6h-6z"/><path fill="#690000" d="M1560 370h6v6h-6zM1566 376h6v6h-6zM1566 382h6v6h-6zM1566 388h6v6h-6zM1566 394h6v6h-6zM1566 400h6v6h-6z"/><path fill="#680000" d="M1566 370h6v6h-6zM1572 382h6v6h-6zM1572 388h6v6h-6zM1572 394h6v6h-6zM1572 400h6v6h-6zM1566 406h6v6h-6z"/><path fill="#660000" d="M1572 370h6v6h-6zM1578 376h6v6h-6zM1578 382h6v6h-6zM1584 388h6v6h-6zM1584 394h6v6h-6zM1584 400h6v6h-6zM1578 406h6v6h-6zM1578 412h6v6h-6z"/><path fill="#009c95" d="M1056 376h6v6h-6z"/><path fill="#009d95" d="M1062 376h6v6h-6zM1068 376h6v6h-6zM1074 376h6v6h-6zM1080 376h6v6h-6z"/><path fill="#009d96" d="M1086 376h6v6h-6z"/><path fill="#009e96" d="M1092 376h6v6h-6zM1098 376h6v6h-6zM1104 376h6v6h-6z"/><path fill="#009f97" d="M1110 376h6v6h-6zM1116 376h6v6h-6z"/><path fill="#00a097" d="M1122 376h6v6h-6z"/><path fill="#00a098" d="M1128 376h6v6h-6z"/><path fill="#00a198" d="M1134 376h6v6h-6z"/><path fill="#00a299" d="M1140 376h6v6h-6zM1146 376h6v6h-6z"/><path fill="#00a39a" d="M1152 376h6v6h-6z"/><path fill="#00a49b" d="M1158 376h6v6h-6z"/><path fill="#00a69c" d="M1164 376h6v6h-6z"/><path fill="#00a79d" d="M1170 376h6v6h-6z"/><path fill="#00a99f" d="M1176 376h6v6h-6z"/><path fill="#00aaa0" d="M1182 376h6v6h-6z"/><path fill="#00aca2" d="M1188 376h6v6h-6z"/><path fill="#00afa4" d="M1194 376h6v6h-6z"/><path fill="#00b1a6" d="M1200 376h6v6h-6z"/><path fill="#00b4a9" d="M1206 376h6v6h-6z"/><path fill="#00b7ac" d="M1212 376h6v6h-6z"/><path fill="#01b9ad" d="M1218 376h6v6h-6z"/><path fill="#09b5aa" d="M1224 376h6v6h-6z"/><path fill="#6d0101" d="M1518 376h6v6h-6z"/><path fill="#6e0100" d="M1524 376h6v6h-6zM1530 376h6v6h-6z"/><path fill="#6f0000" d="M1542 376h6v6h-6zM1548 382h6v6h-6z"/><path fill="#6e0000" d="M1548 376h6v6h-6zM1542 388h6v6h-6z"/><path fill="#6c0000" d="M1554 376h6v6h-6zM1554 388h6v6h-6z"/><path fill="#6a0000" d="M1560 376h6v6h-6zM1560 394h6v6h-6zM1560 400h6v6h-6z"/><path fill="#009c9d" d="M1062 382h6v6h-6z"/><path fill="#009c9e" d="M1068 382h6v6h-6zM1074 382h6v6h-6zM1080 382h6v6h-6z"/><path fill="#009d9e" d="M1086 382h6v6h-6z"/><path fill="#009d9f" d="M1092 382h6v6h-6zM1098 382h6v6h-6zM1104 382h6v6h-6z"/><path fill="#009ea0" d="M1110 382h6v6h-6zM1116 382h6v6h-6z"/><path fill="#009fa1" d="M1122 382h6v6h-6zM1128 382h6v6h-6z"/><path fill="#00a0a2" d="M1134 382h6v6h-6z"/><path fill="#00a0a3" d="M1140 382h6v6h-6z"/><path fill="#00a1a3" d="M1146 382h6v6h-6z"/><path fill="#00a2a4" d="M1152 382h6v6h-6z"/><path fill="#00a3a6" d="M1158 382h6v6h-6z"/><path fill="#00a4a7" d="M1164 382h6v6h-6z"/><path fill="#00a6a8" d="M1170 382h6v6h-6z"/><path fill="#00a7aa" d="M1176 382h6v6h-6z"/><path fill="#00a9ac" d="M1182 382h6v6h-6z"/><path fill="#00abae" d="M1188 382h6v6h-6z"/><path fill="#00adb0" d="M1194 382h6v6h-6z"/><path fill="#00b0b3" d="M1200 382h6v6h-6z"/><path fill="#00b3b6" d="M1206 382h6v6h-6z"/><path fill="#00b6b9" d="M1212 382h6v6h-6z"/><path fill="#04b5b8" d="M1218 382h6v6h-6z"/><path fill="#0cb1b5" d="M1224 382h6v6h-6z"/><path fill="#6d0102" d="M1512 382h6v6h-6z"/><path fill="#6e0101" d="M1518 382h6v6h-6zM1524 382h6v6h-6z"/><path fill="#6f0001" d="M1530 382h6v6h-6zM1536 388h6v6h-6zM1530 394h6v6h-6z"/><path fill="#700000" d="M1536 382h6v6h-6zM1542 382h6v6h-6z"/><path fill="#6d0000" d="M1554 382h6v6h-6zM1548 388h6v6h-6z"/><path fill="#650000" d="M1584 382h6v6h-6zM1590 388h6v6h-6zM1590 394h6v6h-6zM1590 400h6v6h-6zM1584 406h6v6h-6zM1590 406h6v6h-6zM1584 412h6v6h-6zM1584 418h6v6h-6z"/><path fill="#00949e" d="M1062 388h6v6h-6zM1068 388h6v6h-6z"/><path fill="#00949f" d="M1074 388h6v6h-6zM1080 388h6v6h-6zM1086 388h6v6h-6zM1092 388h6v6h-6z"/><path fill="#0094a0" d="M1098 388h6v6h-6zM1104 388h6v6h-6z"/><path fill="#0095a1" d="M1110 388h6v6h-6zM1116 388h6v6h-6z"/><path fill="#0095a2" d="M1122 388h6v6h-6z"/><path fill="#0096a2" d="M1128 388h6v6h-6z"/><path fill="#0096a3" d="M1134 388h6v6h-6z"/><path fill="#0097a4" d="M1140 388h6v6h-6z"/><path fill="#0097a5" d="M1146 388h6v6h-6z"/><path fill="#0098a6" d="M1152 388h6v6h-6z"/><path fill="#0099a7" d="M1158 388h6v6h-6z"/><path fill="#009aa8" d="M1164 388h6v6h-6z"/><path fill="#009baa" d="M1170 388h6v6h-6z"/><path fill="#009cab" d="M1176 388h6v6h-6z"/><path fill="#009ead" d="M1182 388h6v6h-6z"/><path fill="#009faf" d="M1188 388h6v6h-6z"/><path fill="#00a1b2" d="M1194 388h6v6h-6z"/><path fill="#00a4b5" d="M1200 388h6v6h-6z"/><path fill="#00a6b8" d="M1206 388h6v6h-6z"/><path fill="#00a9bb" d="M1212 388h6v6h-6z"/><path fill="#06a5b8" d="M1218 388h6v6h-6z"/><path fill="#0ea2b4" d="M1224 388h6v6h-6z"/><path fill="#6e0103" d="M1500 388h6v6h-6z"/><path fill="#6f0102" d="M1506 388h6v6h-6zM1512 388h6v6h-6z"/><path fill="#700002" d="M1518 388h6v6h-6zM1524 394h6v6h-6z"/><path fill="#710001" d="M1524 388h6v6h-6z"/><path fill="#700001" d="M1530 388h6v6h-6z"/><path fill="#640000" d="M1596 388h6v6h-6zM1596 394h6v6h-6zM1602 394h6v6h-6zM1596 400h6v6h-6zM1602 400h6v6h-6zM1596 406h6v6h-6zM1590 412h6v6h-6zM1596 412h6v6h-6zM1590 418h6v6h-6z"/><path fill="#008c9f" d="M1062 394h6v6h-6zM1068 394h6v6h-6zM1074 394h6v6h-6z"/><path fill="#008ca0" d="M1080 394h6v6h-6zM1086 394h6v6h-6zM1092 394h6v6h-6z"/><path fill="#008ca1" d="M1098 394h6v6h-6zM1104 394h6v6h-6zM1110 394h6v6h-6z"/><path fill="#008ca2" d="M1116 394h6v6h-6z"/><path fill="#008ca3" d="M1122 394h6v6h-6z"/><path fill="#008da3" d="M1128 394h6v6h-6z"/><path fill="#008da4" d="M1134 394h6v6h-6z"/><path fill="#008da5" d="M1140 394h6v6h-6z"/><path fill="#008ea6" d="M1146 394h6v6h-6z"/><path fill="#008ea7" d="M1152 394h6v6h-6z"/><path fill="#008fa8" d="M1158 394h6v6h-6z"/><path fill="#0090a9" d="M1164 394h6v6h-6z"/><path fill="#0091ab" d="M1170 394h6v6h-6z"/><path fill="#0092ad" d="M1176 394h6v6h-6z"/><path fill="#0093af" d="M1182 394h6v6h-6z"/><path fill="#0094b1" d="M1188 394h6v6h-6z"/><path fill="#0096b4" d="M1194 394h6v6h-6z"/><path fill="#0098b6" d="M1200 394h6v6h-6z"/><path fill="#009aba" d="M1206 394h6v6h-6z"/><path fill="#019bbb" d="M1212 394h6v6h-6z"/><path fill="#0897b7" d="M1218 394h6v6h-6z"/><path fill="#700104" d="M1488 394h6v6h-6zM1494 394h6v6h-6z"/><path fill="#710003" d="M1500 394h6v6h-6zM1506 394h6v6h-6zM1512 400h6v6h-6z"/><path fill="#720003" d="M1512 394h6v6h-6z"/><path fill="#710002" d="M1518 394h6v6h-6z"/><path fill="#6e0001" d="M1536 394h6v6h-6z"/><path fill="#6d0001" d="M1542 394h6v6h-6zM1536 400h6v6h-6z"/><path fill="#6c0001" d="M1548 394h6v6h-6zM1542 400h6v6h-6z"/><path fill="#0084a0" d="M1068 400h6v6h-6zM1074 400h6v6h-6zM1080 400h6v6h-6zM1086 400h6v6h-6z"/><path fill="#0084a1" d="M1092 400h6v6h-6zM1098 400h6v6h-6z"/><path fill="#0084a2" d="M1104 400h6v6h-6z"/><path fill="#0083a2" d="M1110 400h6v6h-6z"/><path fill="#0083a3" d="M1116 400h6v6h-6z"/><path fill="#0084a3" d="M1122 400h6v6h-6z"/><path fill="#0084a4" d="M1128 400h6v6h-6z"/><path fill="#0084a5" d="M1134 400h6v6h-6zM1140 400h6v6h-6z"/><path fill="#0084a6" d="M1146 400h6v6h-6z"/><path fill="#0085a7" d="M1152 400h6v6h-6z"/><path fill="#0085a9" d="M1158 400h6v6h-6z"/><path fill="#0086aa" d="M1164 400h6v6h-6z"/><path fill="#0087ac" d="M1170 400h6v6h-6z"/><path fill="#0087ae" d="M1176 400h6v6h-6z"/><path fill="#0088b0" d="M1182 400h6v6h-6z"/><path fill="#008ab2" d="M1188 400h6v6h-6z"/><path fill="#008bb5" d="M1194 400h6v6h-6z"/><path fill="#008db8" d="M1200 400h6v6h-6z"/><path fill="#008fbb" d="M1206 400h6v6h-6z"/><path fill="#038dba" d="M1212 400h6v6h-6z"/><path fill="#0b89b6" d="M1218 400h6v6h-6z"/><path fill="#710106" d="M1476 400h6v6h-6zM1482 400h6v6h-6z"/><path fill="#720005" d="M1488 400h6v6h-6zM1494 400h6v6h-6zM1494 406h6v6h-6z"/><path fill="#730004" d="M1500 400h6v6h-6z"/><path fill="#720004" d="M1506 400h6v6h-6z"/><path fill="#700003" d="M1518 400h6v6h-6z"/><path fill="#6f0002" d="M1524 400h6v6h-6z"/><path fill="#6e0002" d="M1530 400h6v6h-6z"/><path fill="#6b0001" d="M1548 400h6v6h-6z"/><path fill="#6a0001" d="M1554 400h6v6h-6zM1548 406h6v6h-6z"/><path fill="#630000" d="M1608 400h6v6h-6zM1602 406h6v6h-6zM1608 406h6v6h-6zM1602 412h6v6h-6zM1608 412h6v6h-6zM1596 418h6v6h-6zM1602 418h6v6h-6zM1596 424h6v6h-6zM1602 424h6v6h-6z"/><path fill="#007ca0" d="M1068 406h6v6h-6zM1074 406h6v6h-6zM1080 406h6v6h-6z"/><path fill="#007ca1" d="M1086 406h6v6h-6zM1092 406h6v6h-6z"/><path fill="#007ba1" d="M1098 406h6v6h-6z"/><path fill="#007ba2" d="M1104 406h6v6h-6zM1110 406h6v6h-6z"/><path fill="#007ba3" d="M1116 406h6v6h-6zM1122 406h6v6h-6z"/><path fill="#007ba4" d="M1128 406h6v6h-6z"/><path fill="#007ba5" d="M1134 406h6v6h-6z"/><path fill="#007ba6" d="M1140 406h6v6h-6z"/><path fill="#007ba7" d="M1146 406h6v6h-6z"/><path fill="#007ba8" d="M1152 406h6v6h-6z"/><path fill="#007ca9" d="M1158 406h6v6h-6z"/><path fill="#007cab" d="M1164 406h6v6h-6z"/><path fill="#007dac" d="M1170 406h6v6h-6z"/><path fill="#007dae" d="M1176 406h6v6h-6z"/><path fill="#007eb1" d="M1182 406h6v6h-6z"/><path fill="#007fb3" d="M1188 406h6v6h-6z"/><path fill="#0080b6" d="M1194 406h6v6h-6z"/><path fill="#0082b9" d="M1200 406h6v6h-6z"/><path fill="#0084bd" d="M1206 406h6v6h-6z"/><path fill="#0580b9" d="M1212 406h6v6h-6z"/><path fill="#0d7cb5" d="M1218 406h6v6h-6z"/><path fill="#720109" d="M1464 406h6v6h-6z"/><path fill="#720108" d="M1470 406h6v6h-6z"/><path fill="#730007" d="M1476 406h6v6h-6zM1482 412h6v6h-6z"/><path fill="#730006" d="M1482 406h6v6h-6z"/><path fill="#740006" d="M1488 406h6v6h-6z"/><path fill="#710005" d="M1500 406h6v6h-6z"/><path fill="#700004" d="M1506 406h6v6h-6z"/><path fill="#6f0004" d="M1512 406h6v6h-6z"/><path fill="#6e0003" d="M1518 406h6v6h-6z"/><path fill="#6d0003" d="M1524 406h6v6h-6z"/><path fill="#6c0002" d="M1530 406h6v6h-6z"/><path fill="#6b0002" d="M1536 406h6v6h-6zM1542 406h6v6h-6z"/><path fill="#690001" d="M1554 406h6v6h-6zM1560 406h6v6h-6z"/><path fill="#620000" d="M1614 406h6v6h-6zM1614 412h6v6h-6zM1608 418h6v6h-6zM1614 418h6v6h-6zM1608 424h6v6h-6z"/><path fill="#0075a0" d="M1068 412h6v6h-6zM1074 412h6v6h-6z"/><path fill="#0074a0" d="M1080 412h6v6h-6z"/><path fill="#0074a1" d="M1086 412h6v6h-6zM1092 412h6v6h-6z"/><path fill="#0073a1" d="M1098 412h6v6h-6z"/><path fill="#0073a2" d="M1104 412h6v6h-6zM1110 412h6v6h-6z"/><path fill="#0073a3" d="M1116 412h6v6h-6z"/><path fill="#0073a4" d="M1122 412h6v6h-6zM1128 412h6v6h-6z"/><path fill="#0072a5" d="M1134 412h6v6h-6z"/><path fill="#0072a6" d="M1140 412h6v6h-6z"/><path fill="#0073a7" d="M1146 412h6v6h-6z"/><path fill="#0073a8" d="M1152 412h6v6h-6z"/><path fill="#0073aa" d="M1158 412h6v6h-6z"/><path fill="#0073ab" d="M1164 412h6v6h-6z"/><path fill="#0074ad" d="M1170 412h6v6h-6z"/><path fill="#0074af" d="M1176 412h6v6h-6z"/><path fill="#0075b1" d="M1182 412h6v6h-6z"/><path fill="#0075b4" d="M1188 412h6v6h-6z"/><path fill="#0076b7" d="M1194 412h6v6h-6z"/><path fill="#0078ba" d="M1200 412h6v6h-6z"/><path fill="#0177bb" d="M1206 412h6v6h-6z"/><path fill="#0874b7" d="M1212 412h6v6h-6z"/><path fill="#73020c" d="M1446 412h6v6h-6z"/><path fill="#73010b" d="M1452 412h6v6h-6z"/><path fill="#73010a" d="M1458 412h6v6h-6z"/><path fill="#740009" d="M1464 412h6v6h-6zM1470 412h6v6h-6zM1470 418h6v6h-6z"/><path fill="#740008" d="M1476 412h6v6h-6z"/><path fill="#720006" d="M1488 412h6v6h-6z"/><path fill="#710006" d="M1494 412h6v6h-6z"/><path fill="#700005" d="M1500 412h6v6h-6z"/><path fill="#6f0005" d="M1506 412h6v6h-6z"/><path fill="#6e0004" d="M1512 412h6v6h-6z"/><path fill="#6d0004" d="M1518 412h6v6h-6z"/><path fill="#6c0003" d="M1524 412h6v6h-6z"/><path fill="#6b0003" d="M1530 412h6v6h-6z"/><path fill="#6a0002" d="M1536 412h6v6h-6zM1542 412h6v6h-6z"/><path fill="#690002" d="M1548 412h6v6h-6zM1542 418h6v6h-6z"/><path fill="#680001" d="M1554 412h6v6h-6zM1560 412h6v6h-6z"/><path fill="#670001" d="M1566 412h6v6h-6zM1560 418h6v6h-6z"/><path fill="#660001" d="M1572 412h6v6h-6zM1566 418h6v6h-6zM1572 418h6v6h-6zM1566 424h6v6h-6z"/><path fill="#006ea0" d="M1074 418h6v6h-6z"/><path fill="#006da0" d="M1080 418h6v6h-6z"/><path fill="#006da1" d="M1086 418h6v6h-6z"/><path fill="#006ca1" d="M1092 418h6v6h-6z"/><path fill="#006ca2" d="M1098 418h6v6h-6zM1104 418h6v6h-6z"/><path fill="#006ba3" d="M1110 418h6v6h-6zM1116 418h6v6h-6z"/><path fill="#006ba4" d="M1122 418h6v6h-6z"/><path fill="#006ba5" d="M1128 418h6v6h-6z"/><path fill="#006aa5" d="M1134 418h6v6h-6z"/><path fill="#006aa6" d="M1140 418h6v6h-6z"/><path fill="#006aa8" d="M1146 418h6v6h-6z"/><path fill="#006aa9" d="M1152 418h6v6h-6z"/><path fill="#006aaa" d="M1158 418h6v6h-6z"/><path fill="#006bac" d="M1164 418h6v6h-6z"/><path fill="#006bae" d="M1170 418h6v6h-6z"/><path fill="#006bb0" d="M1176 418h6v6h-6z"/><path fill="#006cb2" d="M1182 418h6v6h-6z"/><path fill="#006cb5" d="M1188 418h6v6h-6z"/><path fill="#006db8" d="M1194 418h6v6h-6z"/><path fill="#006ebb" d="M1200 418h6v6h-6z"/><path fill="#036cba" d="M1206 418h6v6h-6z"/><path fill="#0a69b6" d="M1212 418h6v6h-6z"/><path fill="#74020f" d="M1434 418h6v6h-6z"/><path fill="#74010e" d="M1440 418h6v6h-6z"/><path fill="#75010d" d="M1446 418h6v6h-6z"/><path fill="#75000c" d="M1452 418h6v6h-6z"/><path fill="#75000b" d="M1458 418h6v6h-6z"/><path fill="#75000a" d="M1464 418h6v6h-6z"/><path fill="#720008" d="M1476 418h6v6h-6z"/><path fill="#710008" d="M1482 418h6v6h-6z"/><path fill="#700007" d="M1488 418h6v6h-6z"/><path fill="#6f0006" d="M1494 418h6v6h-6z"/><path fill="#6e0006" d="M1500 418h6v6h-6z"/><path fill="#6d0005" d="M1506 418h6v6h-6z"/><path fill="#6c0005" d="M1512 418h6v6h-6z"/><path fill="#6b0004" d="M1518 418h6v6h-6zM1524 418h6v6h-6z"/><path fill="#6a0003" d="M1530 418h6v6h-6z"/><path fill="#690003" d="M1536 418h6v6h-6z"/><path fill="#680002" d="M1548 418h6v6h-6z"/><path fill="#670002" d="M1554 418h6v6h-6zM1548 424h6v6h-6zM1554 424h6v6h-6z"/><path fill="#650001" d="M1578 418h6v6h-6zM1572 424h6v6h-6zM1578 424h6v6h-6z"/><path fill="#0067a0" d="M1074 424h6v6h-6z"/><path fill="#0066a1" d="M1080 424h6v6h-6zM1086 424h6v6h-6z"/><path fill="#0065a1" d="M1092 424h6v6h-6z"/><path fill="#0065a2" d="M1098 424h6v6h-6zM1104 424h6v6h-6z"/><path fill="#0064a3" d="M1110 424h6v6h-6zM1116 424h6v6h-6z"/><path fill="#0063a4" d="M1122 424h6v6h-6z"/><path fill="#0063a5" d="M1128 424h6v6h-6z"/><path fill="#0063a6" d="M1134 424h6v6h-6z"/><path fill="#0063a7" d="M1140 424h6v6h-6z"/><path fill="#0063a8" d="M1146 424h6v6h-6z"/><path fill="#0062a9" d="M1152 424h6v6h-6z"/><path fill="#0062ab" d="M1158 424h6v6h-6z"/><path fill="#0062ac" d="M1164 424h6v6h-6z"/><path fill="#0063ae" d="M1170 424h6v6h-6z"/><path fill="#0063b1" d="M1176 424h6v6h-6z"/><path fill="#0063b3" d="M1182 424h6v6h-6z"/><path fill="#0064b6" d="M1188 424h6v6h-6z"/><path fill="#0064b9" d="M1194 424h6v6h-6z"/><path fill="#0065bd" d="M1200 424h6v6h-6z"/><path fill="#0561b9" d="M1206 424h6v6h-6z"/><path fill="#0c5eb5" d="M1212 424h6v6h-6z"/><path fill="#760213" d="M1422 424h6v6h-6z"/><path fill="#760111" d="M1428 424h6v6h-6z"/><path fill="#760110" d="M1434 424h6v6h-6z"/><path fill="#76000f" d="M1440 424h6v6h-6z"/><path fill="#77000e" d="M1446 424h6v6h-6z"/><path fill="#76000d" d="M1452 424h6v6h-6z"/><path fill="#74000c" d="M1458 424h6v6h-6z"/><path fill="#73000b" d="M1464 424h6v6h-6z"/><path fill="#72000a" d="M1470 424h6v6h-6z"/><path fill="#710009" d="M1476 424h6v6h-6z"/><path fill="#700008" d="M1482 424h6v6h-6z"/><path fill="#6f0007" d="M1488 424h6v6h-6z"/><path fill="#6e0007" d="M1494 424h6v6h-6z"/><path fill="#6d0006" d="M1500 424h6v6h-6z"/><path fill="#6c0006" d="M1506 424h6v6h-6z"/><path fill="#6b0005" d="M1512 424h6v6h-6z"/><path fill="#6a0004" d="M1518 424h6v6h-6zM1524 424h6v6h-6z"/><path fill="#690004" d="M1530 424h6v6h-6zM1524 430h6v6h-6z"/><path fill="#680003" d="M1536 424h6v6h-6zM1542 424h6v6h-6z"/><path fill="#660002" d="M1560 424h6v6h-6zM1554 430h6v6h-6zM1560 430h6v6h-6z"/><path fill="#640001" d="M1584 424h6v6h-6zM1590 424h6v6h-6zM1578 430h6v6h-6zM1584 430h6v6h-6z"/><path fill="#0060a1" d="M1080 430h6v6h-6z"/><path fill="#005fa1" d="M1086 430h6v6h-6zM1092 430h6v6h-6z"/><path fill="#005ea2" d="M1098 430h6v6h-6zM1104 430h6v6h-6z"/><path fill="#005da3" d="M1110 430h6v6h-6z"/><path fill="#005da4" d="M1116 430h6v6h-6z"/><path fill="#005ca4" d="M1122 430h6v6h-6z"/><path fill="#005ca5" d="M1128 430h6v6h-6z"/><path fill="#005ca6" d="M1134 430h6v6h-6z"/><path fill="#005ba7" d="M1140 430h6v6h-6z"/><path fill="#005ba8" d="M1146 430h6v6h-6z"/><path fill="#005baa" d="M1152 430h6v6h-6z"/><path fill="#005bab" d="M1158 430h6v6h-6z"/><path fill="#005bad" d="M1164 430h6v6h-6z"/><path fill="#005baf" d="M1170 430h6v6h-6z"/><path fill="#005bb1" d="M1176 430h6v6h-6z"/><path fill="#005bb4" d="M1182 430h6v6h-6z"/><path fill="#005bb7" d="M1188 430h6v6h-6z"/><path fill="#005cba" d="M1194 430h6v6h-6z"/><path fill="#015bbb" d="M1200 430h6v6h-6z"/><path fill="#0758b7" d="M1206 430h6v6h-6z"/><path fill="#770217" d="M1410 430h6v6h-6z"/><path fill="#770115" d="M1416 430h6v6h-6z"/><path fill="#770114" d="M1422 430h6v6h-6z"/><path fill="#780013" d="M1428 430h6v6h-6zM1428 436h6v6h-6z"/><path fill="#780011" d="M1434 430h6v6h-6z"/><path fill="#770010" d="M1440 430h6v6h-6z"/><path fill="#75000f" d="M1446 430h6v6h-6z"/><path fill="#74000d" d="M1452 430h6v6h-6z"/><path fill="#73000c" d="M1458 430h6v6h-6z"/><path fill="#72000b" d="M1464 430h6v6h-6z"/><path fill="#70000a" d="M1470 430h6v6h-6z"/><path fill="#6f000a" d="M1476 430h6v6h-6z"/><path fill="#6e0009" d="M1482 430h6v6h-6z"/><path fill="#6d0008" d="M1488 430h6v6h-6z"/><path fill="#6d0007" d="M1494 430h6v6h-6z"/><path fill="#6c0007" d="M1500 430h6v6h-6z"/><path fill="#6b0006" d="M1506 430h6v6h-6z"/><path fill="#6a0005" d="M1512 430h6v6h-6zM1518 430h6v6h-6z"/><path fill="#680004" d="M1530 430h6v6h-6zM1536 430h6v6h-6zM1530 436h6v6h-6z"/><path fill="#670003" d="M1542 430h6v6h-6zM1548 430h6v6h-6z"/><path fill="#650002" d="M1566 430h6v6h-6zM1572 430h6v6h-6zM1566 436h6v6h-6z"/><path fill="#630001" d="M1590 430h6v6h-6z"/><path fill="#0059a1" d="M1080 436h6v6h-6zM1086 436h6v6h-6z"/><path fill="#0058a2" d="M1092 436h6v6h-6zM1098 436h6v6h-6z"/><path fill="#0057a3" d="M1104 436h6v6h-6zM1110 436h6v6h-6z"/><path fill="#0056a4" d="M1116 436h6v6h-6z"/><path fill="#0056a5" d="M1122 436h6v6h-6z"/><path fill="#0055a5" d="M1128 436h6v6h-6z"/><path fill="#0055a6" d="M1134 436h6v6h-6z"/><path fill="#0054a8" d="M1140 436h6v6h-6z"/><path fill="#0054a9" d="M1146 436h6v6h-6z"/><path fill="#0054aa" d="M1152 436h6v6h-6z"/><path fill="#0054ac" d="M1158 436h6v6h-6z"/><path fill="#0053ae" d="M1164 436h6v6h-6z"/><path fill="#0053b0" d="M1170 436h6v6h-6z"/><path fill="#0053b2" d="M1176 436h6v6h-6z"/><path fill="#0053b5" d="M1182 436h6v6h-6z"/><path fill="#0054b8" d="M1188 436h6v6h-6z"/><path fill="#0054bb" d="M1194 436h6v6h-6z"/><path fill="#0352ba" d="M1200 436h6v6h-6z"/><path fill="#094fb6" d="M1206 436h6v6h-6z"/><path fill="#79021c" d="M1398 436h6v6h-6z"/><path fill="#79011a" d="M1404 436h6v6h-6z"/><path fill="#790118" d="M1410 436h6v6h-6z"/><path fill="#790017" d="M1416 436h6v6h-6z"/><path fill="#790015" d="M1422 436h6v6h-6z"/><path fill="#760012" d="M1434 436h6v6h-6z"/><path fill="#750011" d="M1440 436h6v6h-6z"/><path fill="#74000f" d="M1446 436h6v6h-6z"/><path fill="#72000e" d="M1452 436h6v6h-6z"/><path fill="#71000d" d="M1458 436h6v6h-6z"/><path fill="#70000c" d="M1464 436h6v6h-6z"/><path fill="#6f000b" d="M1470 436h6v6h-6z"/><path fill="#6e000a" d="M1476 436h6v6h-6z"/><path fill="#6d0009" d="M1482 436h6v6h-6z"/><path fill="#6c0009" d="M1488 436h6v6h-6z"/><path fill="#6c0008" d="M1494 436h6v6h-6z"/><path fill="#6b0007" d="M1500 436h6v6h-6z"/><path fill="#6a0007" d="M1506 436h6v6h-6z"/><path fill="#690006" d="M1512 436h6v6h-6zM1512 442h6v6h-6z"/><path fill="#690005" d="M1518 436h6v6h-6z"/><path fill="#680005" d="M1524 436h6v6h-6z"/><path fill="#670004" d="M1536 436h6v6h-6z"/><path fill="#660004" d="M1542 436h6v6h-6zM1536 442h6v6h-6zM1542 442h6v6h-6zM1548 442h6v6h-6zM1542 448h6v6h-6z"/><path fill="#660003" d="M1548 436h6v6h-6zM1554 436h6v6h-6z"/><path fill="#650003" d="M1560 436h6v6h-6zM1554 442h6v6h-6zM1560 442h6v6h-6z"/><path fill="#640002" d="M1572 436h6v6h-6zM1578 436h6v6h-6z"/><path fill="#0053a1" d="M1080 442h6v6h-6zM1086 442h6v6h-6z"/><path fill="#0052a2" d="M1092 442h6v6h-6zM1098 442h6v6h-6z"/><path fill="#0051a3" d="M1104 442h6v6h-6z"/><path fill="#0050a3" d="M1110 442h6v6h-6z"/><path fill="#0050a4" d="M1116 442h6v6h-6z"/><path fill="#004fa5" d="M1122 442h6v6h-6z"/><path fill="#004fa6" d="M1128 442h6v6h-6z"/><path fill="#004ea7" d="M1134 442h6v6h-6z"/><path fill="#004ea8" d="M1140 442h6v6h-6z"/><path fill="#004ea9" d="M1146 442h6v6h-6z"/><path fill="#004dab" d="M1152 442h6v6h-6z"/><path fill="#004dac" d="M1158 442h6v6h-6z"/><path fill="#004dae" d="M1164 442h6v6h-6z"/><path fill="#004cb1" d="M1170 442h6v6h-6z"/><path fill="#004cb3" d="M1176 442h6v6h-6z"/><path fill="#004cb6" d="M1182 442h6v6h-6z"/><path fill="#004cb9" d="M1188 442h6v6h-6z"/><path fill="#004cbd" d="M1194 442h6v6h-6z"/><path fill="#0549b8" d="M1200 442h6v6h-6z"/><path fill="#0b46b4" d="M1206 442h6v6h-6z"/><path fill="#7b0224" d="M1380 442h6v6h-6z"/><path fill="#7b0222" d="M1386 442h6v6h-6z"/><path fill="#7b011f" d="M1392 442h6v6h-6z"/><path fill="#7b011d" d="M1398 442h6v6h-6z"/><path fill="#7b001b" d="M1404 442h6v6h-6z"/><path fill="#7b001a" d="M1410 442h6v6h-6z"/><path fill="#790018" d="M1416 442h6v6h-6z"/><path fill="#770016" d="M1422 442h6v6h-6z"/><path fill="#760014" d="M1428 442h6v6h-6z"/><path fill="#750013" d="M1434 442h6v6h-6z"/><path fill="#730011" d="M1440 442h6v6h-6z"/><path fill="#720010" d="M1446 442h6v6h-6z"/><path fill="#71000f" d="M1452 442h6v6h-6z"/><path fill="#70000e" d="M1458 442h6v6h-6z"/><path fill="#6f000c" d="M1464 442h6v6h-6z"/><path fill="#6e000c" d="M1470 442h6v6h-6z"/><path fill="#6d000b" d="M1476 442h6v6h-6z"/><path fill="#6c000a" d="M1482 442h6v6h-6z"/><path fill="#6b0009" d="M1488 442h6v6h-6z"/><path fill="#6b0008" d="M1494 442h6v6h-6z"/><path fill="#6a0008" d="M1500 442h6v6h-6z"/><path fill="#690007" d="M1506 442h6v6h-6z"/><path fill="#680006" d="M1518 442h6v6h-6z"/><path fill="#670005" d="M1524 442h6v6h-6zM1530 442h6v6h-6z"/><path fill="#004da1" d="M1086 448h6v6h-6z"/><path fill="#004ca2" d="M1092 448h6v6h-6zM1098 448h6v6h-6z"/><path fill="#004ba3" d="M1104 448h6v6h-6z"/><path fill="#004ba4" d="M1110 448h6v6h-6z"/><path fill="#004aa4" d="M1116 448h6v6h-6z"/><path fill="#0049a5" d="M1122 448h6v6h-6z"/><path fill="#0049a6" d="M1128 448h6v6h-6z"/><path fill="#0048a7" d="M1134 448h6v6h-6z"/><path fill="#0048a8" d="M1140 448h6v6h-6z"/><path fill="#0047aa" d="M1146 448h6v6h-6z"/><path fill="#0047ab" d="M1152 448h6v6h-6z"/><path fill="#0046ad" d="M1158 448h6v6h-6z"/><path fill="#0046af" d="M1164 448h6v6h-6z"/><path fill="#0046b1" d="M1170 448h6v6h-6z"/><path fill="#0045b4" d="M1176 448h6v6h-6z"/><path fill="#0045b7" d="M1182 448h6v6h-6z"/><path fill="#0045ba" d="M1188 448h6v6h-6z"/><path fill="#0144bb" d="M1194 448h6v6h-6z"/><path fill="#0641b7" d="M1200 448h6v6h-6z"/><path fill="#7d022b" d="M1368 448h6v6h-6z"/><path fill="#7d0228" d="M1374 448h6v6h-6z"/><path fill="#7d0126" d="M1380 448h6v6h-6z"/><path fill="#7d0123" d="M1386 448h6v6h-6z"/><path fill="#7d0021" d="M1392 448h6v6h-6z"/><path fill="#7c001f" d="M1398 448h6v6h-6z"/><path fill="#7a001c" d="M1404 448h6v6h-6z"/><path fill="#79001a" d="M1410 448h6v6h-6z"/><path fill="#770018" d="M1416 448h6v6h-6z"/><path fill="#760016" d="M1422 448h6v6h-6z"/><path fill="#740015" d="M1428 448h6v6h-6z"/><path fill="#730013" d="M1434 448h6v6h-6z"/><path fill="#720012" d="M1440 448h6v6h-6z"/><path fill="#710010" d="M1446 448h6v6h-6z"/><path fill="#70000f" d="M1452 448h6v6h-6z"/><path fill="#6f000e" d="M1458 448h6v6h-6z"/><path fill="#6e000d" d="M1464 448h6v6h-6z"/><path fill="#6d000c" d="M1470 448h6v6h-6z"/><path fill="#6c000b" d="M1476 448h6v6h-6z"/><path fill="#6b000a" d="M1482 448h6v6h-6zM1488 448h6v6h-6z"/><path fill="#6a0009" d="M1494 448h6v6h-6z"/><path fill="#690008" d="M1500 448h6v6h-6zM1506 448h6v6h-6z"/><path fill="#680007" d="M1512 448h6v6h-6zM1512 454h6v6h-6z"/><path fill="#670006" d="M1518 448h6v6h-6zM1524 448h6v6h-6zM1524 454h6v6h-6z"/><path fill="#660005" d="M1530 448h6v6h-6zM1536 448h6v6h-6zM1536 454h6v6h-6z"/><path fill="#650004" d="M1548 448h6v6h-6z"/><path fill="#0048a2" d="M1086 454h6v6h-6z"/><path fill="#0047a2" d="M1092 454h6v6h-6z"/><path fill="#0046a3" d="M1098 454h6v6h-6zM1104 454h6v6h-6z"/><path fill="#0045a4" d="M1110 454h6v6h-6z"/><path fill="#0044a5" d="M1116 454h6v6h-6zM1122 454h6v6h-6z"/><path fill="#0043a6" d="M1128 454h6v6h-6z"/><path fill="#0042a8" d="M1134 454h6v6h-6z"/><path fill="#0042a9" d="M1140 454h6v6h-6z"/><path fill="#0041aa" d="M1146 454h6v6h-6z"/><path fill="#0041ac" d="M1152 454h6v6h-6z"/><path fill="#0040ae" d="M1158 454h6v6h-6z"/><path fill="#0040b0" d="M1164 454h6v6h-6z"/><path fill="#003fb2" d="M1170 454h6v6h-6z"/><path fill="#003fb5" d="M1176 454h6v6h-6z"/><path fill="#003fb8" d="M1182 454h6v6h-6z"/><path fill="#003fbc" d="M1188 454h6v6h-6z"/><path fill="#033dba" d="M1194 454h6v6h-6z"/><path fill="#083ab6" d="M1200 454h6v6h-6z"/><path fill="#800234" d="M1356 454h6v6h-6z"/><path fill="#7f0230" d="M1362 454h6v6h-6z"/><path fill="#7f012d" d="M1368 454h6v6h-6z"/><path fill="#7f002a" d="M1374 454h6v6h-6z"/><path fill="#7f0027" d="M1380 454h6v6h-6z"/><path fill="#7e0024" d="M1386 454h6v6h-6z"/><path fill="#7c0022" d="M1392 454h6v6h-6z"/><path fill="#7a001f" d="M1398 454h6v6h-6z"/><path fill="#79001d" d="M1404 454h6v6h-6z"/><path fill="#77001b" d="M1410 454h6v6h-6z"/><path fill="#760019" d="M1416 454h6v6h-6z"/><path fill="#740017" d="M1422 454h6v6h-6z"/><path fill="#730015" d="M1428 454h6v6h-6z"/><path fill="#720014" d="M1434 454h6v6h-6z"/><path fill="#710012" d="M1440 454h6v6h-6z"/><path fill="#700011" d="M1446 454h6v6h-6z"/><path fill="#6f0010" d="M1452 454h6v6h-6z"/><path fill="#6e000f" d="M1458 454h6v6h-6z"/><path fill="#6d000e" d="M1464 454h6v6h-6z"/><path fill="#6c000d" d="M1470 454h6v6h-6z"/><path fill="#6b000c" d="M1476 454h6v6h-6zM1476 460h6v6h-6z"/><path fill="#6b000b" d="M1482 454h6v6h-6z"/><path fill="#6a000a" d="M1488 454h6v6h-6z"/><path fill="#690009" d="M1494 454h6v6h-6zM1500 454h6v6h-6z"/><path fill="#680008" d="M1506 454h6v6h-6z"/><path fill="#670007" d="M1518 454h6v6h-6zM1518 460h6v6h-6z"/><path fill="#660006" d="M1530 454h6v6h-6z"/><path fill="#0042a2" d="M1086 460h6v6h-6zM1092 460h6v6h-6z"/><path fill="#0041a3" d="M1098 460h6v6h-6z"/><path fill="#0040a3" d="M1104 460h6v6h-6z"/><path fill="#003fa4" d="M1110 460h6v6h-6z"/><path fill="#003fa5" d="M1116 460h6v6h-6z"/><path fill="#003ea6" d="M1122 460h6v6h-6z"/><path fill="#003da7" d="M1128 460h6v6h-6z"/><path fill="#003da8" d="M1134 460h6v6h-6z"/><path fill="#003ca9" d="M1140 460h6v6h-6z"/><path fill="#003cab" d="M1146 460h6v6h-6z"/><path fill="#003bac" d="M1152 460h6v6h-6z"/><path fill="#003aae" d="M1158 460h6v6h-6z"/><path fill="#003ab1" d="M1164 460h6v6h-6z"/><path fill="#0039b3" d="M1170 460h6v6h-6z"/><path fill="#0039b6" d="M1176 460h6v6h-6z"/><path fill="#0039b9" d="M1182 460h6v6h-6z"/><path fill="#0038bd" d="M1188 460h6v6h-6z"/><path fill="#0435b8" d="M1194 460h6v6h-6z"/><path fill="#0a33b4" d="M1200 460h6v6h-6z"/><path fill="#82023e" d="M1344 460h6v6h-6z"/><path fill="#82023a" d="M1350 460h6v6h-6z"/><path fill="#820136" d="M1356 460h6v6h-6z"/><path fill="#810032" d="M1362 460h6v6h-6z"/><path fill="#81002f" d="M1368 460h6v6h-6z"/><path fill="#7f002b" d="M1374 460h6v6h-6z"/><path fill="#7e0028" d="M1380 460h6v6h-6z"/><path fill="#7c0025" d="M1386 460h6v6h-6z"/><path fill="#7a0022" d="M1392 460h6v6h-6z"/><path fill="#780020" d="M1398 460h6v6h-6z"/><path fill="#77001d" d="M1404 460h6v6h-6z"/><path fill="#76001b" d="M1410 460h6v6h-6z"/><path fill="#740019" d="M1416 460h6v6h-6z"/><path fill="#730018" d="M1422 460h6v6h-6z"/><path fill="#720016" d="M1428 460h6v6h-6z"/><path fill="#710014" d="M1434 460h6v6h-6z"/><path fill="#700013" d="M1440 460h6v6h-6z"/><path fill="#6f0012" d="M1446 460h6v6h-6z"/><path fill="#6e0010" d="M1452 460h6v6h-6z"/><path fill="#6d000f" d="M1458 460h6v6h-6z"/><path fill="#6c000e" d="M1464 460h6v6h-6z"/><path fill="#6b000d" d="M1470 460h6v6h-6z"/><path fill="#6a000b" d="M1482 460h6v6h-6z"/><path fill="#69000b" d="M1488 460h6v6h-6zM1488 466h6v6h-6z"/><path fill="#69000a" d="M1494 460h6v6h-6z"/><path fill="#680009" d="M1500 460h6v6h-6zM1506 460h6v6h-6z"/><path fill="#670008" d="M1512 460h6v6h-6z"/><path fill="#003da2" d="M1092 466h6v6h-6z"/><path fill="#003ca3" d="M1098 466h6v6h-6z"/><path fill="#003ba4" d="M1104 466h6v6h-6z"/><path fill="#003aa4" d="M1110 466h6v6h-6z"/><path fill="#003aa5" d="M1116 466h6v6h-6z"/><path fill="#0039a6" d="M1122 466h6v6h-6z"/><path fill="#0038a7" d="M1128 466h6v6h-6z"/><path fill="#0037a8" d="M1134 466h6v6h-6z"/><path fill="#0037aa" d="M1140 466h6v6h-6z"/><path fill="#0036ab" d="M1146 466h6v6h-6z"/><path fill="#0035ad" d="M1152 466h6v6h-6z"/><path fill="#0035af" d="M1158 466h6v6h-6z"/><path fill="#0034b1" d="M1164 466h6v6h-6z"/><path fill="#0034b4" d="M1170 466h6v6h-6z"/><path fill="#0033b7" d="M1176 466h6v6h-6z"/><path fill="#0033ba" d="M1182 466h6v6h-6z"/><path fill="#0132bb" d="M1188 466h6v6h-6z"/><path fill="#062fb7" d="M1194 466h6v6h-6z"/><path fill="#85034b" d="M1332 466h6v6h-6z"/><path fill="#850245" d="M1338 466h6v6h-6z"/><path fill="#840140" d="M1344 466h6v6h-6z"/><path fill="#84003c" d="M1350 466h6v6h-6z"/><path fill="#840038" d="M1356 466h6v6h-6z"/><path fill="#810033" d="M1362 466h6v6h-6z"/><path fill="#7f002f" d="M1368 466h6v6h-6z"/><path fill="#7d002c" d="M1374 466h6v6h-6z"/><path fill="#7c0028" d="M1380 466h6v6h-6z"/><path fill="#7a0025" d="M1386 466h6v6h-6z"/><path fill="#790023" d="M1392 466h6v6h-6z"/><path fill="#770020" d="M1398 466h6v6h-6z"/><path fill="#76001e" d="M1404 466h6v6h-6z"/><path fill="#74001c" d="M1410 466h6v6h-6z"/><path fill="#73001a" d="M1416 466h6v6h-6z"/><path fill="#720018" d="M1422 466h6v6h-6z"/><path fill="#710016" d="M1428 466h6v6h-6z"/><path fill="#700015" d="M1434 466h6v6h-6z"/><path fill="#6f0014" d="M1440 466h6v6h-6z"/><path fill="#6e0012" d="M1446 466h6v6h-6z"/><path fill="#6d0011" d="M1452 466h6v6h-6z"/><path fill="#6c0010" d="M1458 466h6v6h-6zM1458 472h6v6h-6z"/><path fill="#6c000f" d="M1464 466h6v6h-6z"/><path fill="#6b000e" d="M1470 466h6v6h-6z"/><path fill="#6a000d" d="M1476 466h6v6h-6zM1476 472h6v6h-6z"/><path fill="#6a000c" d="M1482 466h6v6h-6z"/><path fill="#68000a" d="M1494 466h6v6h-6zM1500 466h6v6h-6z"/><path fill="#670009" d="M1506 466h6v6h-6z"/><path fill="#0038a3" d="M1092 472h6v6h-6z"/><path fill="#0037a3" d="M1098 472h6v6h-6z"/><path fill="#0036a4" d="M1104 472h6v6h-6z"/><path fill="#0035a5" d="M1110 472h6v6h-6zM1116 472h6v6h-6z"/><path fill="#0034a6" d="M1122 472h6v6h-6z"/><path fill="#0033a8" d="M1128 472h6v6h-6z"/><path fill="#0032a9" d="M1134 472h6v6h-6z"/><path fill="#0032aa" d="M1140 472h6v6h-6z"/><path fill="#0031ac" d="M1146 472h6v6h-6z"/><path fill="#0030ae" d="M1152 472h6v6h-6z"/><path fill="#0030b0" d="M1158 472h6v6h-6z"/><path fill="#002fb2" d="M1164 472h6v6h-6z"/><path fill="#002eb5" d="M1170 472h6v6h-6z"/><path fill="#002eb8" d="M1176 472h6v6h-6z"/><path fill="#002dbc" d="M1182 472h6v6h-6z"/><path fill="#022bba" d="M1188 472h6v6h-6z"/><path fill="#0729b6" d="M1194 472h6v6h-6z"/><path fill="#890462" d="M1314 472h6v6h-6z"/><path fill="#88035a" d="M1320 472h6v6h-6z"/><path fill="#880253" d="M1326 472h6v6h-6z"/><path fill="#87014d" d="M1332 472h6v6h-6z"/><path fill="#870048" d="M1338 472h6v6h-6z"/><path fill="#860042" d="M1344 472h6v6h-6z"/><path fill="#84003d" d="M1350 472h6v6h-6z"/><path fill="#810038" d="M1356 472h6v6h-6z"/><path fill="#7f0034" d="M1362 472h6v6h-6z"/><path fill="#7e0030" d="M1368 472h6v6h-6z"/><path fill="#7c002c" d="M1374 472h6v6h-6z"/><path fill="#7a0029" d="M1380 472h6v6h-6z"/><path fill="#790026" d="M1386 472h6v6h-6z"/><path fill="#770023" d="M1392 472h6v6h-6z"/><path fill="#760021" d="M1398 472h6v6h-6z"/><path fill="#74001f" d="M1404 472h6v6h-6z"/><path fill="#73001c" d="M1410 472h6v6h-6z"/><path fill="#72001b" d="M1416 472h6v6h-6z"/><path fill="#710019" d="M1422 472h6v6h-6z"/><path fill="#700017" d="M1428 472h6v6h-6z"/><path fill="#6f0016" d="M1434 472h6v6h-6z"/><path fill="#6e0014" d="M1440 472h6v6h-6z"/><path fill="#6d0013" d="M1446 472h6v6h-6zM1446 478h6v6h-6z"/><path fill="#6c0012" d="M1452 472h6v6h-6zM1452 478h6v6h-6z"/><path fill="#6b000f" d="M1464 472h6v6h-6z"/><path fill="#6a000e" d="M1470 472h6v6h-6z"/><path fill="#69000d" d="M1482 472h6v6h-6z"/><path fill="#68000c" d="M1488 472h6v6h-6z"/><path fill="#0032a3" d="M1098 478h6v6h-6z"/><path fill="#0032a4" d="M1104 478h6v6h-6z"/><path fill="#0031a5" d="M1110 478h6v6h-6z"/><path fill="#0030a6" d="M1116 478h6v6h-6z"/><path fill="#002fa7" d="M1122 478h6v6h-6z"/><path fill="#002ea8" d="M1128 478h6v6h-6z"/><path fill="#002ea9" d="M1134 478h6v6h-6z"/><path fill="#002dab" d="M1140 478h6v6h-6z"/><path fill="#002cad" d="M1146 478h6v6h-6z"/><path fill="#002bae" d="M1152 478h6v6h-6z"/><path fill="#002bb1" d="M1158 478h6v6h-6z"/><path fill="#002ab3" d="M1164 478h6v6h-6z"/><path fill="#0029b6" d="M1170 478h6v6h-6z"/><path fill="#0029b9" d="M1176 478h6v6h-6z"/><path fill="#0028bd" d="M1182 478h6v6h-6z"/><path fill="#0426b8" d="M1188 478h6v6h-6z"/><path fill="#0923b4" d="M1194 478h6v6h-6z"/><path fill="#8c0477" d="M1302 478h6v6h-6z"/><path fill="#8b036d" d="M1308 478h6v6h-6z"/><path fill="#8b0264" d="M1314 478h6v6h-6z"/><path fill="#8a015d" d="M1320 478h6v6h-6z"/><path fill="#8a0056" d="M1326 478h6v6h-6z"/><path fill="#88004f" d="M1332 478h6v6h-6z"/><path fill="#860048" d="M1338 478h6v6h-6z"/><path fill="#840043" d="M1344 478h6v6h-6z"/><path fill="#82003d" d="M1350 478h6v6h-6z"/><path fill="#800038" d="M1356 478h6v6h-6z"/><path fill="#7e0034" d="M1362 478h6v6h-6z"/><path fill="#7c0030" d="M1368 478h6v6h-6z"/><path fill="#7a002d" d="M1374 478h6v6h-6z"/><path fill="#790029" d="M1380 478h6v6h-6z"/><path fill="#770027" d="M1386 478h6v6h-6z"/><path fill="#760024" d="M1392 478h6v6h-6z"/><path fill="#750021" d="M1398 478h6v6h-6z"/><path fill="#73001f" d="M1404 478h6v6h-6z"/><path fill="#72001d" d="M1410 478h6v6h-6z"/><path fill="#71001b" d="M1416 478h6v6h-6z"/><path fill="#700019" d="M1422 478h6v6h-6z"/><path fill="#6f0018" d="M1428 478h6v6h-6zM1428 484h6v6h-6z"/><path fill="#6e0016" d="M1434 478h6v6h-6z"/><path fill="#6e0015" d="M1440 478h6v6h-6z"/><path fill="#6b0011" d="M1458 478h6v6h-6z"/><path fill="#6b0010" d="M1464 478h6v6h-6z"/><path fill="#6a000f" d="M1470 478h6v6h-6z"/><path fill="#69000e" d="M1476 478h6v6h-6z"/><path fill="#002ea4" d="M1098 484h6v6h-6z"/><path fill="#002da4" d="M1104 484h6v6h-6z"/><path fill="#002ca5" d="M1110 484h6v6h-6z"/><path fill="#002ba6" d="M1116 484h6v6h-6z"/><path fill="#002ba7" d="M1122 484h6v6h-6z"/><path fill="#002aa8" d="M1128 484h6v6h-6z"/><path fill="#0029aa" d="M1134 484h6v6h-6z"/><path fill="#0028ab" d="M1140 484h6v6h-6z"/><path fill="#0027ad" d="M1146 484h6v6h-6z"/><path fill="#0027af" d="M1152 484h6v6h-6z"/><path fill="#0026b1" d="M1158 484h6v6h-6z"/><path fill="#0025b4" d="M1164 484h6v6h-6z"/><path fill="#0024b7" d="M1170 484h6v6h-6z"/><path fill="#0024ba" d="M1176 484h6v6h-6z"/><path fill="#0122bb" d="M1182 484h6v6h-6z"/><path fill="#0520b7" d="M1188 484h6v6h-6z"/><path fill="#8f0490" d="M1290 484h6v6h-6z"/><path fill="#8f0384" d="M1296 484h6v6h-6z"/><path fill="#8e0279" d="M1302 484h6v6h-6z"/><path fill="#8d0170" d="M1308 484h6v6h-6z"/><path fill="#8d0067" d="M1314 484h6v6h-6z"/><path fill="#8b005e" d="M1320 484h6v6h-6z"/><path fill="#880056" d="M1326 484h6v6h-6z"/><path fill="#86004f" d="M1332 484h6v6h-6z"/><path fill="#840048" d="M1338 484h6v6h-6z"/><path fill="#820043" d="M1344 484h6v6h-6z"/><path fill="#80003d" d="M1350 484h6v6h-6z"/><path fill="#7e0039" d="M1356 484h6v6h-6z"/><path fill="#7c0035" d="M1362 484h6v6h-6z"/><path fill="#7b0031" d="M1368 484h6v6h-6z"/><path fill="#79002d" d="M1374 484h6v6h-6z"/><path fill="#78002a" d="M1380 484h6v6h-6z"/><path fill="#760027" d="M1386 484h6v6h-6z"/><path fill="#750024" d="M1392 484h6v6h-6z"/><path fill="#740022" d="M1398 484h6v6h-6z"/><path fill="#730020" d="M1404 484h6v6h-6z"/><path fill="#72001e" d="M1410 484h6v6h-6z"/><path fill="#70001c" d="M1416 484h6v6h-6zM1416 490h6v6h-6z"/><path fill="#70001a" d="M1422 484h6v6h-6z"/><path fill="#6e0017" d="M1434 484h6v6h-6z"/><path fill="#6d0015" d="M1440 484h6v6h-6z"/><path fill="#6c0014" d="M1446 484h6v6h-6z"/><path fill="#6b0013" d="M1452 484h6v6h-6z"/><path fill="#6b0012" d="M1458 484h6v6h-6z"/><path fill="#0029a5" d="M1104 490h6v6h-6z"/><path fill="#0028a5" d="M1110 490h6v6h-6z"/><path fill="#0027a6" d="M1116 490h6v6h-6z"/><path fill="#0026a8" d="M1122 490h6v6h-6z"/><path fill="#0026a9" d="M1128 490h6v6h-6z"/><path fill="#0025aa" d="M1134 490h6v6h-6z"/><path fill="#0024ac" d="M1140 490h6v6h-6z"/><path fill="#0023ae" d="M1146 490h6v6h-6z"/><path fill="#0022b0" d="M1152 490h6v6h-6z"/><path fill="#0021b2" d="M1158 490h6v6h-6z"/><path fill="#0021b5" d="M1164 490h6v6h-6z"/><path fill="#0020b8" d="M1170 490h6v6h-6z"/><path fill="#001fbc" d="M1176 490h6v6h-6z"/><path fill="#021dba" d="M1182 490h6v6h-6z"/><path fill="#071bb5" d="M1188 490h6v6h-6z"/><path fill="#7c0496" d="M1278 490h6v6h-6z"/><path fill="#860394" d="M1284 490h6v6h-6z"/><path fill="#900292" d="M1290 490h6v6h-6z"/><path fill="#910187" d="M1296 490h6v6h-6z"/><path fill="#90007c" d="M1302 490h6v6h-6z"/><path fill="#8e0071" d="M1308 490h6v6h-6z"/><path fill="#8b0067" d="M1314 490h6v6h-6z"/><path fill="#89005e" d="M1320 490h6v6h-6z"/><path fill="#860056" d="M1326 490h6v6h-6z"/><path fill="#84004f" d="M1332 490h6v6h-6z"/><path fill="#820049" d="M1338 490h6v6h-6z"/><path fill="#800043" d="M1344 490h6v6h-6z"/><path fill="#7e003e" d="M1350 490h6v6h-6z"/><path fill="#7d0039" d="M1356 490h6v6h-6z"/><path fill="#7b0035" d="M1362 490h6v6h-6z"/><path fill="#790031" d="M1368 490h6v6h-6z"/><path fill="#78002e" d="M1374 490h6v6h-6z"/><path fill="#77002b" d="M1380 490h6v6h-6z"/><path fill="#750028" d="M1386 490h6v6h-6z"/><path fill="#740025" d="M1392 490h6v6h-6z"/><path fill="#730023" d="M1398 490h6v6h-6z"/><path fill="#720020" d="M1404 490h6v6h-6z"/><path fill="#71001e" d="M1410 490h6v6h-6z"/><path fill="#6f001b" d="M1422 490h6v6h-6z"/><path fill="#6e0019" d="M1428 490h6v6h-6z"/><path fill="#6d0017" d="M1434 490h6v6h-6z"/><path fill="#6c0016" d="M1440 490h6v6h-6z"/><path fill="#6c0015" d="M1446 490h6v6h-6z"/><path fill="#0025a5" d="M1104 496h6v6h-6z"/><path fill="#0024a6" d="M1110 496h6v6h-6z"/><path fill="#0023a7" d="M1116 496h6v6h-6z"/><path fill="#0022a8" d="M1122 496h6v6h-6z"/><path fill="#0021a9" d="M1128 496h6v6h-6z"/><path fill="#0021ab" d="M1134 496h6v6h-6z"/><path fill="#0020ad" d="M1140 496h6v6h-6z"/><path fill="#001fae" d="M1146 496h6v6h-6z"/><path fill="#001eb1" d="M1152 496h6v6h-6z"/><path fill="#001db3" d="M1158 496h6v6h-6z"/><path fill="#001cb6" d="M1164 496h6v6h-6z"/><path fill="#001bb9" d="M1170 496h6v6h-6z"/><path fill="#001bbd" d="M1176 496h6v6h-6z"/><path fill="#0419b8" d="M1182 496h6v6h-6z"/><path fill="#0817b4" d="M1188 496h6v6h-6z"/><path fill="#61059e" d="M1260 496h6v6h-6z"/><path fill="#6b049c" d="M1266 496h6v6h-6z"/><path fill="#74039a" d="M1272 496h6v6h-6z"/><path fill="#7e0298" d="M1278 496h6v6h-6z"/><path fill="#880196" d="M1284 496h6v6h-6z"/><path fill="#910094" d="M1290 496h6v6h-6z"/><path fill="#910087" d="M1296 496h6v6h-6z"/><path fill="#8e007b" d="M1302 496h6v6h-6z"/><path fill="#8b0070" d="M1308 496h6v6h-6z"/><path fill="#890066" d="M1314 496h6v6h-6z"/><path fill="#87005e" d="M1320 496h6v6h-6z"/><path fill="#850056" d="M1326 496h6v6h-6z"/><path fill="#82004f" d="M1332 496h6v6h-6z"/><path fill="#800049" d="M1338 496h6v6h-6z"/><path fill="#7f0043" d="M1344 496h6v6h-6z"/><path fill="#7d003e" d="M1350 496h6v6h-6z"/><path fill="#7b003a" d="M1356 496h6v6h-6z"/><path fill="#7a0036" d="M1362 496h6v6h-6z"/><path fill="#780032" d="M1368 496h6v6h-6z"/><path fill="#77002e" d="M1374 496h6v6h-6z"/><path fill="#76002b" d="M1380 496h6v6h-6z"/><path fill="#740028" d="M1386 496h6v6h-6z"/><path fill="#730026" d="M1392 496h6v6h-6zM1392 502h6v6h-6z"/><path fill="#720023" d="M1398 496h6v6h-6z"/><path fill="#710021" d="M1404 496h6v6h-6z"/><path fill="#70001f" d="M1410 496h6v6h-6z"/><path fill="#6f001d" d="M1416 496h6v6h-6z"/><path fill="#6e001b" d="M1422 496h6v6h-6z"/><path fill="#6e001a" d="M1428 496h6v6h-6z"/><path fill="#0021a5" d="M1104 502h6v6h-6z"/><path fill="#0020a6" d="M1110 502h6v6h-6z"/><path fill="#001fa7" d="M1116 502h6v6h-6z"/><path fill="#001ea8" d="M1122 502h6v6h-6z"/><path fill="#001eaa" d="M1128 502h6v6h-6z"/><path fill="#001dab" d="M1134 502h6v6h-6z"/><path fill="#001cad" d="M1140 502h6v6h-6z"/><path fill="#001baf" d="M1146 502h6v6h-6z"/><path fill="#001ab1" d="M1152 502h6v6h-6z"/><path fill="#0019b4" d="M1158 502h6v6h-6z"/><path fill="#0018b7" d="M1164 502h6v6h-6z"/><path fill="#0017ba" d="M1170 502h6v6h-6z"/><path fill="#0116bb" d="M1176 502h6v6h-6z"/><path fill="#0514b7" d="M1182 502h6v6h-6z"/><path fill="#5105a2" d="M1248 502h6v6h-6z"/><path fill="#5a03a1" d="M1254 502h6v6h-6z"/><path fill="#6302a0" d="M1260 502h6v6h-6z"/><path fill="#6d019e" d="M1266 502h6v6h-6z"/><path fill="#76009d" d="M1272 502h6v6h-6z"/><path fill="#7f009a" d="M1278 502h6v6h-6z"/><path fill="#870095" d="M1284 502h6v6h-6z"/><path fill="#8e0091" d="M1290 502h6v6h-6z"/><path fill="#8e0086" d="M1296 502h6v6h-6z"/><path fill="#8c007a" d="M1302 502h6v6h-6z"/><path fill="#89006f" d="M1308 502h6v6h-6z"/><path fill="#870066" d="M1314 502h6v6h-6z"/><path fill="#85005d" d="M1320 502h6v6h-6z"/><path fill="#830056" d="M1326 502h6v6h-6z"/><path fill="#81004f" d="M1332 502h6v6h-6z"/><path fill="#7f0049" d="M1338 502h6v6h-6z"/><path fill="#7d0044" d="M1344 502h6v6h-6z"/><path fill="#7c003f" d="M1350 502h6v6h-6z"/><path fill="#7a003a" d="M1356 502h6v6h-6z"/><path fill="#790036" d="M1362 502h6v6h-6z"/><path fill="#770032" d="M1368 502h6v6h-6z"/><path fill="#76002f" d="M1374 502h6v6h-6z"/><path fill="#75002c" d="M1380 502h6v6h-6z"/><path fill="#740029" d="M1386 502h6v6h-6z"/><path fill="#720024" d="M1398 502h6v6h-6z"/><path fill="#710022" d="M1404 502h6v6h-6z"/><path fill="#700020" d="M1410 502h6v6h-6z"/><path fill="#6f001e" d="M1416 502h6v6h-6z"/><path fill="#001da6" d="M1110 508h6v6h-6z"/><path fill="#001ca8" d="M1116 508h6v6h-6z"/><path fill="#001ba9" d="M1122 508h6v6h-6z"/><path fill="#001aaa" d="M1128 508h6v6h-6z"/><path fill="#0019ac" d="M1134 508h6v6h-6z"/><path fill="#0018ae" d="M1140 508h6v6h-6z"/><path fill="#0017b0" d="M1146 508h6v6h-6z"/><path fill="#0016b2" d="M1152 508h6v6h-6z"/><path fill="#0015b5" d="M1158 508h6v6h-6z"/><path fill="#0014b8" d="M1164 508h6v6h-6z"/><path fill="#0014bc" d="M1170 508h6v6h-6z"/><path fill="#0212ba" d="M1176 508h6v6h-6z"/><path fill="#0610b5" d="M1182 508h6v6h-6z"/><path fill="#4204a7" d="M1236 508h6v6h-6z"/><path fill="#4a03a6" d="M1242 508h6v6h-6z"/><path fill="#5302a5" d="M1248 508h6v6h-6z"/><path fill="#5c01a3" d="M1254 508h6v6h-6z"/><path fill="#6500a2" d="M1260 508h6v6h-6z"/><path fill="#6e009f" d="M1266 508h6v6h-6z"/><path fill="#75009b" d="M1272 508h6v6h-6z"/><path fill="#7d0097" d="M1278 508h6v6h-6z"/><path fill="#840093" d="M1284 508h6v6h-6z"/><path fill="#8b008f" d="M1290 508h6v6h-6z"/><path fill="#8c0085" d="M1296 508h6v6h-6z"/><path fill="#8a0079" d="M1302 508h6v6h-6z"/><path fill="#87006f" d="M1308 508h6v6h-6z"/><path fill="#850065" d="M1314 508h6v6h-6z"/><path fill="#83005d" d="M1320 508h6v6h-6z"/><path fill="#810056" d="M1326 508h6v6h-6z"/><path fill="#80004f" d="M1332 508h6v6h-6z"/><path fill="#7e0049" d="M1338 508h6v6h-6z"/><path fill="#7c0044" d="M1344 508h6v6h-6z"/><path fill="#7b003f" d="M1350 508h6v6h-6z"/><path fill="#79003b" d="M1356 508h6v6h-6z"/><path fill="#780037" d="M1362 508h6v6h-6z"/><path fill="#770033" d="M1368 508h6v6h-6z"/><path fill="#750030" d="M1374 508h6v6h-6zM1374 514h6v6h-6z"/><path fill="#74002c" d="M1380 508h6v6h-6z"/><path fill="#73002a" d="M1386 508h6v6h-6zM1386 514h6v6h-6z"/><path fill="#720027" d="M1392 508h6v6h-6z"/><path fill="#710025" d="M1398 508h6v6h-6z"/><path fill="#0019a7" d="M1110 514h6v6h-6z"/><path fill="#0018a8" d="M1116 514h6v6h-6z"/><path fill="#0017a9" d="M1122 514h6v6h-6z"/><path fill="#0016ab" d="M1128 514h6v6h-6z"/><path fill="#0015ad" d="M1134 514h6v6h-6z"/><path fill="#0015ae" d="M1140 514h6v6h-6z"/><path fill="#0014b1" d="M1146 514h6v6h-6z"/><path fill="#0013b3" d="M1152 514h6v6h-6z"/><path fill="#0012b6" d="M1158 514h6v6h-6z"/><path fill="#0011b9" d="M1164 514h6v6h-6z"/><path fill="#0010bc" d="M1170 514h6v6h-6z"/><path fill="#030eb8" d="M1176 514h6v6h-6z"/><path fill="#080db4" d="M1182 514h6v6h-6z"/><path fill="#3404aa" d="M1224 514h6v6h-6z"/><path fill="#3c03aa" d="M1230 514h6v6h-6z"/><path fill="#4402a9" d="M1236 514h6v6h-6z"/><path fill="#4c01a8" d="M1242 514h6v6h-6z"/><path fill="#5500a7" d="M1248 514h6v6h-6z"/><path fill="#5d00a4" d="M1254 514h6v6h-6z"/><path fill="#6500a0" d="M1260 514h6v6h-6z"/><path fill="#6c009c" d="M1266 514h6v6h-6z"/><path fill="#730099" d="M1272 514h6v6h-6z"/><path fill="#7b0095" d="M1278 514h6v6h-6z"/><path fill="#820091" d="M1284 514h6v6h-6z"/><path fill="#89008d" d="M1290 514h6v6h-6z"/><path fill="#8a0084" d="M1296 514h6v6h-6z"/><path fill="#880078" d="M1302 514h6v6h-6z"/><path fill="#86006e" d="M1308 514h6v6h-6z"/><path fill="#840065" d="M1314 514h6v6h-6z"/><path fill="#82005d" d="M1320 514h6v6h-6z"/><path fill="#800056" d="M1326 514h6v6h-6z"/><path fill="#7e004f" d="M1332 514h6v6h-6z"/><path fill="#7d004a" d="M1338 514h6v6h-6z"/><path fill="#7b0044" d="M1344 514h6v6h-6z"/><path fill="#7a0040" d="M1350 514h6v6h-6z"/><path fill="#78003b" d="M1356 514h6v6h-6z"/><path fill="#770037" d="M1362 514h6v6h-6z"/><path fill="#760034" d="M1368 514h6v6h-6z"/><path fill="#74002d" d="M1380 514h6v6h-6z"/><path fill="#0015a8" d="M1116 520h6v6h-6z"/><path fill="#0014aa" d="M1122 520h6v6h-6z"/><path fill="#0013ab" d="M1128 520h6v6h-6z"/><path fill="#0012ad" d="M1134 520h6v6h-6z"/><path fill="#0011af" d="M1140 520h6v6h-6z"/><path fill="#0010b2" d="M1146 520h6v6h-6z"/><path fill="#000fb4" d="M1152 520h6v6h-6z"/><path fill="#000eb7" d="M1158 520h6v6h-6z"/><path fill="#000dba" d="M1164 520h6v6h-6z"/><path fill="#010cbb" d="M1170 520h6v6h-6z"/><path fill="#050bb7" d="M1176 520h6v6h-6z"/><path fill="#2704ae" d="M1212 520h6v6h-6z"/><path fill="#2e03ad" d="M1218 520h6v6h-6z"/><path fill="#3602ad" d="M1224 520h6v6h-6z"/><path fill="#3e01ac" d="M1230 520h6v6h-6z"/><path fill="#4600ac" d="M1236 520h6v6h-6z"/><path fill="#4d00a8" d="M1242 520h6v6h-6z"/><path fill="#5500a5" d="M1248 520h6v6h-6z"/><path fill="#5c00a1" d="M1254 520h6v6h-6z"/><path fill="#63009d" d="M1260 520h6v6h-6z"/><path fill="#6a009a" d="M1266 520h6v6h-6z"/><path fill="#720096" d="M1272 520h6v6h-6z"/><path fill="#790092" d="M1278 520h6v6h-6z"/><path fill="#80008f" d="M1284 520h6v6h-6z"/><path fill="#87008b" d="M1290 520h6v6h-6z"/><path fill="#880083" d="M1296 520h6v6h-6z"/><path fill="#860078" d="M1302 520h6v6h-6z"/><path fill="#84006e" d="M1308 520h6v6h-6z"/><path fill="#830065" d="M1314 520h6v6h-6z"/><path fill="#81005d" d="M1320 520h6v6h-6z"/><path fill="#7f0056" d="M1326 520h6v6h-6z"/><path fill="#7d0050" d="M1332 520h6v6h-6zM1332 526h6v6h-6z"/><path fill="#7c004a" d="M1338 520h6v6h-6z"/><path fill="#7a0045" d="M1344 520h6v6h-6zM1344 526h6v6h-6z"/><path fill="#790040" d="M1350 520h6v6h-6z"/><path fill="#78003c" d="M1356 520h6v6h-6z"/><path fill="#770038" d="M1362 520h6v6h-6z"/><path fill="#750034" d="M1368 520h6v6h-6z"/><path fill="#0012a9" d="M1116 526h6v6h-6z"/><path fill="#0011aa" d="M1122 526h6v6h-6z"/><path fill="#0010ac" d="M1128 526h6v6h-6z"/><path fill="#000fae" d="M1134 526h6v6h-6z"/><path fill="#000eb0" d="M1140 526h6v6h-6z"/><path fill="#000db2" d="M1146 526h6v6h-6z"/><path fill="#000cb5" d="M1152 526h6v6h-6z"/><path fill="#000bb8" d="M1158 526h6v6h-6z"/><path fill="#000abc" d="M1164 526h6v6h-6z"/><path fill="#0209ba" d="M1170 526h6v6h-6z"/><path fill="#0608b5" d="M1176 526h6v6h-6z"/><path fill="#1504b1" d="M1194 526h6v6h-6z"/><path fill="#1c03b1" d="M1200 526h6v6h-6z"/><path fill="#2202b1" d="M1206 526h6v6h-6z"/><path fill="#2901b0" d="M1212 526h6v6h-6z"/><path fill="#3000b0" d="M1218 526h6v6h-6z"/><path fill="#3800af" d="M1224 526h6v6h-6z"/><path fill="#3f00ac" d="M1230 526h6v6h-6z"/><path fill="#4600a8" d="M1236 526h6v6h-6z"/><path fill="#4d00a5" d="M1242 526h6v6h-6z"/><path fill="#5400a2" d="M1248 526h6v6h-6z"/><path fill="#5b009e" d="M1254 526h6v6h-6z"/><path fill="#62009b" d="M1260 526h6v6h-6z"/><path fill="#690097" d="M1266 526h6v6h-6z"/><path fill="#700094" d="M1272 526h6v6h-6z"/><path fill="#770091" d="M1278 526h6v6h-6z"/><path fill="#7e008d" d="M1284 526h6v6h-6z"/><path fill="#85008a" d="M1290 526h6v6h-6z"/><path fill="#870082" d="M1296 526h6v6h-6z"/><path fill="#850077" d="M1302 526h6v6h-6z"/><path fill="#83006e" d="M1308 526h6v6h-6z"/><path fill="#810065" d="M1314 526h6v6h-6z"/><path fill="#80005d" d="M1320 526h6v6h-6z"/><path fill="#7e0056" d="M1326 526h6v6h-6z"/><path fill="#7b004a" d="M1338 526h6v6h-6z"/><path fill="#780041" d="M1350 526h6v6h-6z"/><path fill="#77003c" d="M1356 526h6v6h-6z"/><path fill="#000eab" d="M1122 532h6v6h-6z"/><path fill="#000dad" d="M1128 532h6v6h-6z"/><path fill="#000caf" d="M1134 532h6v6h-6z"/><path fill="#000bb1" d="M1140 532h6v6h-6z"/><path fill="#000ab3" d="M1146 532h6v6h-6z"/><path fill="#0009b6" d="M1152 532h6v6h-6z"/><path fill="#0008b9" d="M1158 532h6v6h-6z"/><path fill="#0007bc" d="M1164 532h6v6h-6z"/><path fill="#0306b8" d="M1170 532h6v6h-6z"/><path fill="#0705b4" d="M1176 532h6v6h-6z"/><path fill="#0c04b3" d="M1182 532h6v6h-6z"/><path fill="#1103b3" d="M1188 532h6v6h-6z"/><path fill="#1702b3" d="M1194 532h6v6h-6z"/><path fill="#1d01b3" d="M1200 532h6v6h-6z"/><path fill="#2400b3" d="M1206 532h6v6h-6z"/><path fill="#2b00b2" d="M1212 532h6v6h-6z"/><path fill="#3100af" d="M1218 532h6v6h-6z"/><path fill="#3800ac" d="M1224 532h6v6h-6z"/><path fill="#3f00a8" d="M1230 532h6v6h-6z"/><path fill="#4500a5" d="M1236 532h6v6h-6z"/><path fill="#4c00a2" d="M1242 532h6v6h-6z"/><path fill="#53009f" d="M1248 532h6v6h-6z"/><path fill="#5a009c" d="M1254 532h6v6h-6z"/><path fill="#610099" d="M1260 532h6v6h-6z"/><path fill="#680095" d="M1266 532h6v6h-6z"/><path fill="#6f0092" d="M1272 532h6v6h-6z"/><path fill="#76008f" d="M1278 532h6v6h-6z"/><path fill="#7c008c" d="M1284 532h6v6h-6z"/><path fill="#830088" d="M1290 532h6v6h-6z"/><path fill="#860081" d="M1296 532h6v6h-6z"/><path fill="#840077" d="M1302 532h6v6h-6z"/><path fill="#82006d" d="M1308 532h6v6h-6z"/><path fill="#800065" d="M1314 532h6v6h-6zM1314 538h6v6h-6z"/><path fill="#7f005d" d="M1320 532h6v6h-6z"/><path fill="#7d0057" d="M1326 532h6v6h-6zM1326 538h6v6h-6z"/><path fill="#7c0050" d="M1332 532h6v6h-6z"/><path fill="#7a004b" d="M1338 532h6v6h-6z"/><path fill="#000bab" d="M1122 538h6v6h-6z"/><path fill="#000aad" d="M1128 538h6v6h-6z"/><path fill="#0009af" d="M1134 538h6v6h-6z"/><path fill="#0009b2" d="M1140 538h6v6h-6z"/><path fill="#0008b4" d="M1146 538h6v6h-6z"/><path fill="#0007b7" d="M1152 538h6v6h-6z"/><path fill="#0006ba" d="M1158 538h6v6h-6z"/><path fill="#0105bb" d="M1164 538h6v6h-6z"/><path fill="#0404b7" d="M1170 538h6v6h-6z"/><path fill="#0903b6" d="M1176 538h6v6h-6z"/><path fill="#0e02b6" d="M1182 538h6v6h-6z"/><path fill="#1301b6" d="M1188 538h6v6h-6z"/><path fill="#1900b6" d="M1194 538h6v6h-6z"/><path fill="#1f00b5" d="M1200 538h6v6h-6z"/><path fill="#2500b2" d="M1206 538h6v6h-6z"/><path fill="#2b00af" d="M1212 538h6v6h-6z"/><path fill="#3200ac" d="M1218 538h6v6h-6z"/><path fill="#3800a9" d="M1224 538h6v6h-6z"/><path fill="#3f00a6" d="M1230 538h6v6h-6z"/><path fill="#4500a3" d="M1236 538h6v6h-6z"/><path fill="#4c00a0" d="M1242 538h6v6h-6z"/><path fill="#53009d" d="M1248 538h6v6h-6z"/><path fill="#59009a" d="M1254 538h6v6h-6z"/><path fill="#600097" d="M1260 538h6v6h-6z"/><path fill="#670094" d="M1266 538h6v6h-6z"/><path fill="#6e0090" d="M1272 538h6v6h-6z"/><path fill="#74008d" d="M1278 538h6v6h-6z"/><path fill="#7b008a" d="M1284 538h6v6h-6z"/><path fill="#810087" d="M1290 538h6v6h-6z"/><path fill="#840081" d="M1296 538h6v6h-6z"/><path fill="#830076" d="M1302 538h6v6h-6z"/><path fill="#81006d" d="M1308 538h6v6h-6z"/><path fill="#7e005e" d="M1320 538h6v6h-6z"/><path fill="#0008ae" d="M1128 544h6v6h-6z"/><path fill="#0007b0" d="M1134 544h6v6h-6z"/><path fill="#0006b2" d="M1140 544h6v6h-6z"/><path fill="#0005b5" d="M1146 544h6v6h-6z"/><path fill="#0004b8" d="M1152 544h6v6h-6z"/><path fill="#0003bc" d="M1158 544h6v6h-6z"/><path fill="#0202ba" d="M1164 544h6v6h-6z"/><path fill="#0602b8" d="M1170 544h6v6h-6z"/><path fill="#0a01b8" d="M1176 544h6v6h-6z"/><path fill="#0f00b9" d="M1182 544h6v6h-6z"/><path fill="#1500b7" d="M1188 544h6v6h-6z"/><path fill="#1a00b4" d="M1194 544h6v6h-6z"/><path fill="#2000b1" d="M1200 544h6v6h-6z"/><path fill="#2600ae" d="M1206 544h6v6h-6z"/><path fill="#2c00ab" d="M1212 544h6v6h-6z"/><path fill="#3200a9" d="M1218 544h6v6h-6z"/><path fill="#3800a6" d="M1224 544h6v6h-6z"/><path fill="#3f00a3" d="M1230 544h6v6h-6z"/><path fill="#4500a0" d="M1236 544h6v6h-6z"/><path fill="#4c009d" d="M1242 544h6v6h-6z"/><path fill="#52009b" d="M1248 544h6v6h-6z"/><path fill="#590098" d="M1254 544h6v6h-6z"/><path fill="#5f0095" d="M1260 544h6v6h-6z"/><path fill="#660092" d="M1266 544h6v6h-6z"/><path fill="#6c008f" d="M1272 544h6v6h-6z"/><path fill="#73008c" d="M1278 544h6v6h-6z"/><path fill="#790089" d="M1284 544h6v6h-6z"/><path fill="#800086" d="M1290 544h6v6h-6z"/><path fill="#830080" d="M1296 544h6v6h-6zM1296 550h6v6h-6z"/><path fill="#820076" d="M1302 544h6v6h-6z"/><path fill="#80006d" d="M1308 544h6v6h-6z"/><path fill="#7f0065" d="M1314 544h6v6h-6z"/><path fill="#0005af" d="M1128 550h6v6h-6z"/><path fill="#0005b1" d="M1134 550h6v6h-6z"/><path fill="#0004b3" d="M1140 550h6v6h-6z"/><path fill="#0003b6" d="M1146 550h6v6h-6z"/><path fill="#0002b9" d="M1152 550h6v6h-6z"/><path fill="#0001bc" d="M1158 550h6v6h-6z"/><path fill="#0301ba" d="M1164 550h6v6h-6z"/><path fill="#0700bb" d="M1170 550h6v6h-6z"/><path fill="#0c00b8" d="M1176 550h6v6h-6z"/><path fill="#1100b6" d="M1182 550h6v6h-6z"/><path fill="#1600b3" d="M1188 550h6v6h-6z"/><path fill="#1b00b0" d="M1194 550h6v6h-6z"/><path fill="#2100ae" d="M1200 550h6v6h-6z"/><path fill="#2600ab" d="M1206 550h6v6h-6z"/><path fill="#2c00a9" d="M1212 550h6v6h-6z"/><path fill="#3200a6" d="M1218 550h6v6h-6z"/><path fill="#3800a3" d="M1224 550h6v6h-6z"/><path fill="#3f00a1" d="M1230 550h6v6h-6z"/><path fill="#45009e" d="M1236 550h6v6h-6z"/><path fill="#4b009b" d="M1242 550h6v6h-6z"/><path fill="#520099" d="M1248 550h6v6h-6z"/><path fill="#580096" d="M1254 550h6v6h-6z"/><path fill="#5f0093" d="M1260 550h6v6h-6z"/><path fill="#650090" d="M1266 550h6v6h-6z"/><path fill="#6c008e" d="M1272 550h6v6h-6z"/><path fill="#72008b" d="M1278 550h6v6h-6z"/><path fill="#780088" d="M1284 550h6v6h-6z"/><path fill="#7f0085" d="M1290 550h6v6h-6z"/><path fill="#0003b1" d="M1134 556h6v6h-6z"/><path fill="#0002b4" d="M1140 556h6v6h-6z"/><path fill="#0001b7" d="M1146 556h6v6h-6z"/><path fill="#0000bb" d="M1152 556h6v6h-6z"/><path fill="#0100bc" d="M1158 556h6v6h-6z"/><path fill="#0400ba" d="M1164 556h6v6h-6z"/><path fill="#0800b7" d="M1170 556h6v6h-6z"/><path fill="#0d00b5" d="M1176 556h6v6h-6z"/><path fill="#1200b2" d="M1182 556h6v6h-6z"/><path fill="#1700b0" d="M1188 556h6v6h-6z"/><path fill="#1c00ad" d="M1194 556h6v6h-6z"/><path fill="#2100ab" d="M1200 556h6v6h-6z"/><path fill="#2700a9" d="M1206 556h6v6h-6z"/><path fill="#2d00a6" d="M1212 556h6v6h-6z"/><path fill="#3300a4" d="M1218 556h6v6h-6z"/><path fill="#3900a1" d="M1224 556h6v6h-6z"/><path fill="#3f009f" d="M1230 556h6v6h-6z"/><path fill="#45009c" d="M1236 556h6v6h-6z"/><path fill="#4b009a" d="M1242 556h6v6h-6z"/><path fill="#510097" d="M1248 556h6v6h-6z"/><path fill="#580094" d="M1254 556h6v6h-6z"/><path fill="#5e0092" d="M1260 556h6v6h-6z"/><path fill="#64008f" d="M1266 556h6v6h-6z"/><path fill="#6b008d" d="M1272 556h6v6h-6z"/><path fill="#71008a" d="M1278 556h6v6h-6z"/><path fill="#770087" d="M1284 556h6v6h-6z"/><path fill="#0000b3" d="M1140 562h6v6h-6z"/><path fill="#0000b6" d="M1146 562h6v6h-6zM1152 568h6v6h-6z"/><path fill="#0000b9" d="M1152 562h6v6h-6z"/><path fill="#0200b8" d="M1158 562h6v6h-6z"/><path fill="#0500b6" d="M1164 562h6v6h-6z"/><path fill="#0900b4" d="M1170 562h6v6h-6z"/><path fill="#0e00b2" d="M1176 562h6v6h-6z"/><path fill="#1300af" d="M1182 562h6v6h-6z"/><path fill="#1800ad" d="M1188 562h6v6h-6z"/><path fill="#1d00ab" d="M1194 562h6v6h-6z"/><path fill="#2200a8" d="M1200 562h6v6h-6z"/><path fill="#2800a6" d="M1206 562h6v6h-6z"/><path fill="#2d00a4" d="M1212 562h6v6h-6z"/><path fill="#3300a1" d="M1218 562h6v6h-6z"/><path fill="#39009f" d="M1224 562h6v6h-6z"/><path fill="#3f009d" d="M1230 562h6v6h-6z"/><path fill="#45009a" d="M1236 562h6v6h-6z"/><path fill="#4b0098" d="M1242 562h6v6h-6z"/><path fill="#510096" d="M1248 562h6v6h-6z"/><path fill="#570093" d="M1254 562h6v6h-6z"/><path fill="#5e0091" d="M1260 562h6v6h-6z"/><path fill="#64008e" d="M1266 562h6v6h-6z"/><path fill="#0000b2" d="M1140 568h6v6h-6zM1146 574h6v6h-6z"/><path fill="#0000b4" d="M1146 568h6v6h-6z"/><path fill="#0300b5" d="M1158 568h6v6h-6z"/><path fill="#0600b3" d="M1164 568h6v6h-6z"/><path fill="#0b00b1" d="M1170 568h6v6h-6z"/><path fill="#0f00af" d="M1176 568h6v6h-6z"/><path fill="#1400ad" d="M1182 568h6v6h-6z"/><path fill="#1900ab" d="M1188 568h6v6h-6z"/><path fill="#1e00a8" d="M1194 568h6v6h-6z"/><path fill="#2300a6" d="M1200 568h6v6h-6z"/><path fill="#2800a4" d="M1206 568h6v6h-6z"/><path fill="#2e00a2" d="M1212 568h6v6h-6z"/><path fill="#3300a0" d="M1218 568h6v6h-6z"/><path fill="#39009d" d="M1224 568h6v6h-6z"/><path fill="#3f009b" d="M1230 568h6v6h-6z"/><path fill="#450099" d="M1236 568h6v6h-6z"/><path fill="#4b0097" d="M1242 568h6v6h-6z"/><path fill="#510094" d="M1248 568h6v6h-6z"/><path fill="#570092" d="M1254 568h6v6h-6z"/><path fill="#0100b3" d="M1152 574h6v6h-6z"/><path fill="#0400b2" d="M1158 574h6v6h-6z"/><path fill="#0800b0" d="M1164 574h6v6h-6z"/><path fill="#0c00ae" d="M1170 574h6v6h-6z"/><path fill="#1000ac" d="M1176 574h6v6h-6z"/><path fill="#1500aa" d="M1182 574h6v6h-6z"/><path fill="#1900a8" d="M1188 574h6v6h-6z"/><path fill="#1e00a6" d="M1194 574h6v6h-6z"/><path fill="#2400a4" d="M1200 574h6v6h-6z"/><path fill="#2900a2" d="M1206 574h6v6h-6z"/><path fill="#2e00a0" d="M1212 574h6v6h-6z"/><path fill="#34009e" d="M1218 574h6v6h-6z"/><path fill="#3a009c" d="M1224 574h6v6h-6z"/><path fill="#3f009a" d="M1230 574h6v6h-6z"/><path fill="#450097" d="M1236 574h6v6h-6z"/><path fill="#0200b0" d="M1152 580h6v6h-6z"/><path fill="#0500af" d="M1158 580h6v6h-6z"/><path fill="#0900ae" d="M1164 580h6v6h-6z"/><path fill="#0d00ac" d="M1170 580h6v6h-6z"/><path fill="#1100aa" d="M1176 580h6v6h-6z"/><path fill="#1600a8" d="M1182 580h6v6h-6z"/><path fill="#1a00a6" d="M1188 580h6v6h-6z"/><path fill="#1f00a4" d="M1194 580h6v6h-6z"/><path fill="#2400a2" d="M1200 580h6v6h-6z"/><path fill="#2a00a0" d="M1206 580h6v6h-6z"/><path fill="#2f009e" d="M1212 580h6v6h-6z"/><path fill="#34009c" d="M1218 580h6v6h-6z"/><path fill="#3a009a" d="M1224 580h6v6h-6z"/><path fill="#0600ad" d="M1158 586h6v6h-6z"/><path fill="#0a00ab" d="M1164 586h6v6h-6z"/><path fill="#0e00aa" d="M1170 586h6v6h-6z"/><path fill="#1200a8" d="M1176 586h6v6h-6z"/><path fill="#1600a6" d="M1182 586h6v6h-6z"/><path fill="#1b00a4" d="M1188 586h6v6h-6z"/><path fill="#2000a3" d="M1194 586h6v6h-6z"/><path fill="#2500a1" d="M1200 586h6v6h-6z"/><path fill="#2a009f" d="M1206 586h6v6h-6z"/><path fill="#0a00a9" d="M1164 592h6v6h-6z"/><path fill="#0e00a8" d="M1170 592h6v6h-6z"/><path fill="#1200a6" d="M1176 592h6v6h-6z"/><path fill="#1700a5" d="M1182 592h6v6h-6z"/><path fill="#1c00a3" d="M1188 592h6v6h-6z"/><path fill="#2000a1" d="M1194 592h6v6h-6z"/></g></g>
<g clip-path="url(#cpT)"><g filter="url(#blr)"><path fill="#00ff00" d="M1266 196h6v6h-6zM1272 196h6v6h-6zM1278 196h6v6h-6zM1272 202h6v6h-6z"/><path fill="#05ff00" d="M1284 196h6v6h-6z"/><path fill="#00ff01" d="M1266 202h6v6h-6zM1272 208h6v6h-6z"/><path fill="#02ff00" d="M1278 202h6v6h-6z"/><path fill="#06ff00" d="M1284 202h6v6h-6z"/><path fill="#0cff00" d="M1290 202h6v6h-6z"/><path fill="#00ff02" d="M1266 208h6v6h-6z"/><path fill="#03ff00" d="M1278 208h6v6h-6z"/><path fill="#08ff00" d="M1284 208h6v6h-6z"/><path fill="#0eff00" d="M1290 208h6v6h-6z"/><path fill="#15ff00" d="M1296 208h6v6h-6z"/><path fill="#1dff00" d="M1302 208h6v6h-6z"/><path fill="#00ff06" d="M1260 214h6v6h-6z"/><path fill="#00ff04" d="M1266 214h6v6h-6z"/><path fill="#01ff03" d="M1272 214h6v6h-6z"/><path fill="#05ff02" d="M1278 214h6v6h-6z"/><path fill="#0bff01" d="M1284 214h6v6h-6z"/><path fill="#11ff00" d="M1290 214h6v6h-6z"/><path fill="#18ff00" d="M1296 214h6v6h-6z"/><path fill="#20ff00" d="M1302 214h6v6h-6z"/><path fill="#28ff00" d="M1308 214h6v6h-6z"/><path fill="#00ff08" d="M1260 220h6v6h-6z"/><path fill="#00ff07" d="M1266 220h6v6h-6z"/><path fill="#02ff05" d="M1272 220h6v6h-6z"/><path fill="#07ff04" d="M1278 220h6v6h-6z"/><path fill="#0dff03" d="M1284 220h6v6h-6z"/><path fill="#14ff02" d="M1290 220h6v6h-6z"/><path fill="#1bff01" d="M1296 220h6v6h-6z"/><path fill="#24ff00" d="M1302 220h6v6h-6z"/><path fill="#2cff00" d="M1308 220h6v6h-6z"/><path fill="#36ff00" d="M1314 220h6v6h-6z"/><path fill="#3fff00" d="M1320 220h6v6h-6z"/><path fill="#00ff0b" d="M1260 226h6v6h-6z"/><path fill="#00ff09" d="M1266 226h6v6h-6z"/><path fill="#03ff08" d="M1272 226h6v6h-6z"/><path fill="#09ff06" d="M1278 226h6v6h-6z"/><path fill="#10ff05" d="M1284 226h6v6h-6z"/><path fill="#17ff04" d="M1290 226h6v6h-6z"/><path fill="#1fff02" d="M1296 226h6v6h-6z"/><path fill="#27ff01" d="M1302 226h6v6h-6z"/><path fill="#31ff00" d="M1308 226h6v6h-6z"/><path fill="#3aff00" d="M1314 226h6v6h-6z"/><path fill="#45ff00" d="M1320 226h6v6h-6z"/><path fill="#4fff00" d="M1326 226h6v6h-6z"/><path fill="#00ff0f" d="M1254 232h6v6h-6z"/><path fill="#00ff0e" d="M1260 232h6v6h-6z"/><path fill="#01ff0c" d="M1266 232h6v6h-6z"/><path fill="#05ff0a" d="M1272 232h6v6h-6z"/><path fill="#0bff09" d="M1278 232h6v6h-6z"/><path fill="#12ff07" d="M1284 232h6v6h-6z"/><path fill="#1aff06" d="M1290 232h6v6h-6z"/><path fill="#22ff04" d="M1296 232h6v6h-6z"/><path fill="#2bff03" d="M1302 232h6v6h-6z"/><path fill="#35ff02" d="M1308 232h6v6h-6z"/><path fill="#3fff01" d="M1314 232h6v6h-6z"/><path fill="#4aff00" d="M1320 232h6v6h-6z"/><path fill="#55ff00" d="M1326 232h6v6h-6z"/><path fill="#61ff00" d="M1332 232h6v6h-6z"/><path fill="#6eff00" d="M1338 232h6v6h-6z"/><path fill="#00ff12" d="M1254 238h6v6h-6z"/><path fill="#00ff11" d="M1260 238h6v6h-6z"/><path fill="#02ff0f" d="M1266 238h6v6h-6z"/><path fill="#07ff0d" d="M1272 238h6v6h-6z"/><path fill="#0eff0c" d="M1278 238h6v6h-6z"/><path fill="#15ff0a" d="M1284 238h6v6h-6z"/><path fill="#1dff09" d="M1290 238h6v6h-6z"/><path fill="#26ff07" d="M1296 238h6v6h-6z"/><path fill="#30ff05" d="M1302 238h6v6h-6z"/><path fill="#3aff04" d="M1308 238h6v6h-6z"/><path fill="#44ff03" d="M1314 238h6v6h-6z"/><path fill="#50ff01" d="M1320 238h6v6h-6z"/><path fill="#5cff00" d="M1326 238h6v6h-6z"/><path fill="#68ff00" d="M1332 238h6v6h-6z"/><path fill="#75ff00" d="M1338 238h6v6h-6z"/><path fill="#83ff00" d="M1344 238h6v6h-6z"/><path fill="#00ff16" d="M1254 244h6v6h-6z"/><path fill="#00ff14" d="M1260 244h6v6h-6z"/><path fill="#04ff12" d="M1266 244h6v6h-6z"/><path fill="#0aff11" d="M1272 244h6v6h-6z"/><path fill="#11ff0f" d="M1278 244h6v6h-6z"/><path fill="#19ff0d" d="M1284 244h6v6h-6z"/><path fill="#21ff0c" d="M1290 244h6v6h-6z"/><path fill="#2aff0a" d="M1296 244h6v6h-6z"/><path fill="#34ff08" d="M1302 244h6v6h-6z"/><path fill="#3fff07" d="M1308 244h6v6h-6z"/><path fill="#4aff05" d="M1314 244h6v6h-6z"/><path fill="#56ff04" d="M1320 244h6v6h-6z"/><path fill="#62ff02" d="M1326 244h6v6h-6z"/><path fill="#6fff01" d="M1332 244h6v6h-6z"/><path fill="#7dff00" d="M1338 244h6v6h-6z"/><path fill="#8bff00" d="M1344 244h6v6h-6z"/><path fill="#9aff00" d="M1350 244h6v6h-6z"/><path fill="#aaff00" d="M1356 244h6v6h-6z"/><path fill="#00ff1b" d="M1248 250h6v6h-6z"/><path fill="#00ff1a" d="M1254 250h6v6h-6z"/><path fill="#01ff18" d="M1260 250h6v6h-6z"/><path fill="#06ff16" d="M1266 250h6v6h-6z"/><path fill="#0cff14" d="M1272 250h6v6h-6z"/><path fill="#14ff12" d="M1278 250h6v6h-6z"/><path fill="#1cff11" d="M1284 250h6v6h-6z"/><path fill="#25ff0f" d="M1290 250h6v6h-6z"/><path fill="#2fff0d" d="M1296 250h6v6h-6z"/><path fill="#39ff0b" d="M1302 250h6v6h-6z"/><path fill="#44ff0a" d="M1308 250h6v6h-6z"/><path fill="#50ff08" d="M1314 250h6v6h-6z"/><path fill="#5cff06" d="M1320 250h6v6h-6z"/><path fill="#69ff05" d="M1326 250h6v6h-6z"/><path fill="#77ff03" d="M1332 250h6v6h-6z"/><path fill="#85ff02" d="M1338 250h6v6h-6z"/><path fill="#94ff00" d="M1344 250h6v6h-6z"/><path fill="#a4ff00" d="M1350 250h6v6h-6z"/><path fill="#b4ff00" d="M1356 250h6v6h-6z"/><path fill="#c6ff00" d="M1362 250h6v6h-6z"/><path fill="#d7ff00" d="M1368 250h6v6h-6z"/><path fill="#00ff1f" d="M1248 256h6v6h-6z"/><path fill="#00ff1e" d="M1254 256h6v6h-6z"/><path fill="#02ff1c" d="M1260 256h6v6h-6z"/><path fill="#08ff1a" d="M1266 256h6v6h-6z"/><path fill="#0fff18" d="M1272 256h6v6h-6z"/><path fill="#17ff16" d="M1278 256h6v6h-6z"/><path fill="#20ff14" d="M1284 256h6v6h-6z"/><path fill="#29ff13" d="M1290 256h6v6h-6z"/><path fill="#34ff11" d="M1296 256h6v6h-6z"/><path fill="#3fff0f" d="M1302 256h6v6h-6z"/><path fill="#4aff0d" d="M1308 256h6v6h-6z"/><path fill="#57ff0b" d="M1314 256h6v6h-6z"/><path fill="#64ff09" d="M1320 256h6v6h-6z"/><path fill="#71ff07" d="M1326 256h6v6h-6z"/><path fill="#7fff06" d="M1332 256h6v6h-6z"/><path fill="#8eff04" d="M1338 256h6v6h-6z"/><path fill="#9eff02" d="M1344 256h6v6h-6z"/><path fill="#afff01" d="M1350 256h6v6h-6z"/><path fill="#c0ff00" d="M1356 256h6v6h-6z"/><path fill="#d2ff00" d="M1362 256h6v6h-6z"/><path fill="#e5ff00" d="M1368 256h6v6h-6z"/><path fill="#f8ff00" d="M1374 256h6v6h-6z"/><path fill="#00ff26" d="M1242 262h6v6h-6z"/><path fill="#00ff24" d="M1248 262h6v6h-6z"/><path fill="#00ff22" d="M1254 262h6v6h-6z"/><path fill="#04ff20" d="M1260 262h6v6h-6z"/><path fill="#0bff1e" d="M1266 262h6v6h-6z"/><path fill="#12ff1c" d="M1272 262h6v6h-6z"/><path fill="#1bff1a" d="M1278 262h6v6h-6z"/><path fill="#24ff19" d="M1284 262h6v6h-6z"/><path fill="#2eff17" d="M1290 262h6v6h-6z"/><path fill="#39ff15" d="M1296 262h6v6h-6z"/><path fill="#44ff13" d="M1302 262h6v6h-6z"/><path fill="#51ff11" d="M1308 262h6v6h-6z"/><path fill="#5dff0f" d="M1314 262h6v6h-6z"/><path fill="#6bff0d" d="M1320 262h6v6h-6z"/><path fill="#79ff0b" d="M1326 262h6v6h-6z"/><path fill="#88ff09" d="M1332 262h6v6h-6z"/><path fill="#98ff07" d="M1338 262h6v6h-6z"/><path fill="#a9ff05" d="M1344 262h6v6h-6z"/><path fill="#baff03" d="M1350 262h6v6h-6z"/><path fill="#ccff02" d="M1356 262h6v6h-6z"/><path fill="#dfff00" d="M1362 262h6v6h-6z"/><path fill="#f3ff00" d="M1368 262h6v6h-6z"/><path fill="#fff700" d="M1374 262h6v6h-6z"/><path fill="#ffe400" d="M1380 262h6v6h-6z"/><path fill="#ffd300" d="M1386 262h6v6h-6z"/><path fill="#00ff2a" d="M1242 268h6v6h-6z"/><path fill="#00ff29" d="M1248 268h6v6h-6z"/><path fill="#01ff27" d="M1254 268h6v6h-6z"/><path fill="#06ff25" d="M1260 268h6v6h-6z"/><path fill="#0dff23" d="M1266 268h6v6h-6z"/><path fill="#16ff21" d="M1272 268h6v6h-6z"/><path fill="#1fff1f" d="M1278 268h6v6h-6z"/><path fill="#28ff1d" d="M1284 268h6v6h-6z"/><path fill="#33ff1b" d="M1290 268h6v6h-6z"/><path fill="#3eff19" d="M1296 268h6v6h-6z"/><path fill="#4aff17" d="M1302 268h6v6h-6z"/><path fill="#57ff15" d="M1308 268h6v6h-6z"/><path fill="#65ff13" d="M1314 268h6v6h-6z"/><path fill="#73ff11" d="M1320 268h6v6h-6z"/><path fill="#82ff0f" d="M1326 268h6v6h-6z"/><path fill="#92ff0d" d="M1332 268h6v6h-6z"/><path fill="#a2ff0b" d="M1338 268h6v6h-6z"/><path fill="#b4ff09" d="M1344 268h6v6h-6z"/><path fill="#c6ff07" d="M1350 268h6v6h-6z"/><path fill="#d9ff05" d="M1356 268h6v6h-6z"/><path fill="#edff03" d="M1362 268h6v6h-6z"/><path fill="#fffc01" d="M1368 268h6v6h-6z"/><path fill="#ffe900" d="M1374 268h6v6h-6z"/><path fill="#ffd700" d="M1380 268h6v6h-6z"/><path fill="#ffc700" d="M1386 268h6v6h-6z"/><path fill="#ffb900" d="M1392 268h6v6h-6z"/><path fill="#00ff2f" d="M1242 274h6v6h-6z"/><path fill="#00ff2e" d="M1248 274h6v6h-6z"/><path fill="#02ff2c" d="M1254 274h6v6h-6z"/><path fill="#09ff2a" d="M1260 274h6v6h-6z"/><path fill="#10ff28" d="M1266 274h6v6h-6z"/><path fill="#19ff26" d="M1272 274h6v6h-6z"/><path fill="#23ff24" d="M1278 274h6v6h-6z"/><path fill="#2dff22" d="M1284 274h6v6h-6z"/><path fill="#38ff20" d="M1290 274h6v6h-6z"/><path fill="#44ff1e" d="M1296 274h6v6h-6z"/><path fill="#51ff1c" d="M1302 274h6v6h-6z"/><path fill="#5fff19" d="M1308 274h6v6h-6z"/><path fill="#6dff17" d="M1314 274h6v6h-6z"/><path fill="#7cff15" d="M1320 274h6v6h-6z"/><path fill="#8cff13" d="M1326 274h6v6h-6z"/><path fill="#9cff11" d="M1332 274h6v6h-6z"/><path fill="#aeff0f" d="M1338 274h6v6h-6z"/><path fill="#c0ff0c" d="M1344 274h6v6h-6z"/><path fill="#d3ff0a" d="M1350 274h6v6h-6z"/><path fill="#e7ff08" d="M1356 274h6v6h-6z"/><path fill="#fcff06" d="M1362 274h6v6h-6z"/><path fill="#ffed04" d="M1368 274h6v6h-6z"/><path fill="#ffdb02" d="M1374 274h6v6h-6z"/><path fill="#ffca00" d="M1380 274h6v6h-6z"/><path fill="#ffbb00" d="M1386 274h6v6h-6z"/><path fill="#feae00" d="M1392 274h6v6h-6z"/><path fill="#fea200" d="M1398 274h6v6h-6z"/><path fill="#fd9600" d="M1404 274h6v6h-6z"/><path fill="#00ff37" d="M1236 280h6v6h-6z"/><path fill="#00ff35" d="M1242 280h6v6h-6z"/><path fill="#00ff33" d="M1248 280h6v6h-6z"/><path fill="#04ff31" d="M1254 280h6v6h-6z"/><path fill="#0cff2f" d="M1260 280h6v6h-6z"/><path fill="#14ff2d" d="M1266 280h6v6h-6z"/><path fill="#1dff2b" d="M1272 280h6v6h-6z"/><path fill="#27ff29" d="M1278 280h6v6h-6z"/><path fill="#32ff27" d="M1284 280h6v6h-6z"/><path fill="#3eff25" d="M1290 280h6v6h-6z"/><path fill="#4bff23" d="M1296 280h6v6h-6z"/><path fill="#58ff21" d="M1302 280h6v6h-6z"/><path fill="#66ff1e" d="M1308 280h6v6h-6z"/><path fill="#75ff1c" d="M1314 280h6v6h-6z"/><path fill="#85ff1a" d="M1320 280h6v6h-6z"/><path fill="#96ff18" d="M1326 280h6v6h-6z"/><path fill="#a7ff15" d="M1332 280h6v6h-6z"/><path fill="#baff13" d="M1338 280h6v6h-6z"/><path fill="#cdff11" d="M1344 280h6v6h-6z"/><path fill="#e1ff0e" d="M1350 280h6v6h-6z"/><path fill="#f6ff0c" d="M1356 280h6v6h-6z"/><path fill="#fff209" d="M1362 280h6v6h-6z"/><path fill="#ffdf07" d="M1368 280h6v6h-6z"/><path fill="#ffce04" d="M1374 280h6v6h-6z"/><path fill="#ffbe03" d="M1380 280h6v6h-6z"/><path fill="#ffb001" d="M1386 280h6v6h-6z"/><path fill="#fea300" d="M1392 280h6v6h-6z"/><path fill="#fe9800" d="M1398 280h6v6h-6z"/><path fill="#fd8d00" d="M1404 280h6v6h-6z"/><path fill="#fc8300" d="M1410 280h6v6h-6z"/><path fill="#00ff3d" d="M1236 286h6v6h-6z"/><path fill="#00ff3b" d="M1242 286h6v6h-6z"/><path fill="#01ff39" d="M1248 286h6v6h-6z"/><path fill="#07ff37" d="M1254 286h6v6h-6z"/><path fill="#0fff35" d="M1260 286h6v6h-6z"/><path fill="#17ff33" d="M1266 286h6v6h-6z"/><path fill="#21ff31" d="M1272 286h6v6h-6z"/><path fill="#2cff2f" d="M1278 286h6v6h-6z"/><path fill="#38ff2d" d="M1284 286h6v6h-6z"/><path fill="#44ff2b" d="M1290 286h6v6h-6z"/><path fill="#52ff28" d="M1296 286h6v6h-6z"/><path fill="#60ff26" d="M1302 286h6v6h-6z"/><path fill="#6fff24" d="M1308 286h6v6h-6z"/><path fill="#7eff22" d="M1314 286h6v6h-6z"/><path fill="#8fff1f" d="M1320 286h6v6h-6z"/><path fill="#a1ff1d" d="M1326 286h6v6h-6z"/><path fill="#b3ff1b" d="M1332 286h6v6h-6z"/><path fill="#c6ff18" d="M1338 286h6v6h-6z"/><path fill="#dbff16" d="M1344 286h6v6h-6z"/><path fill="#f0ff13" d="M1350 286h6v6h-6z"/><path fill="#fff810" d="M1356 286h6v6h-6z"/><path fill="#ffe30d" d="M1362 286h6v6h-6z"/><path fill="#ffd10a" d="M1368 286h6v6h-6z"/><path fill="#ffc107" d="M1374 286h6v6h-6z"/><path fill="#ffb205" d="M1380 286h6v6h-6z"/><path fill="#fea503" d="M1386 286h6v6h-6z"/><path fill="#fe9902" d="M1392 286h6v6h-6z"/><path fill="#fd8e00" d="M1398 286h6v6h-6z"/><path fill="#fc8400" d="M1404 286h6v6h-6z"/><path fill="#fb7b00" d="M1410 286h6v6h-6z"/><path fill="#fa7300" d="M1416 286h6v6h-6zM1410 292h6v6h-6z"/><path fill="#f96b00" d="M1422 286h6v6h-6zM1416 292h6v6h-6z"/><path fill="#00ff43" d="M1236 292h6v6h-6z"/><path fill="#00ff41" d="M1242 292h6v6h-6z"/><path fill="#03ff3f" d="M1248 292h6v6h-6z"/><path fill="#0aff3d" d="M1254 292h6v6h-6z"/><path fill="#12ff3b" d="M1260 292h6v6h-6z"/><path fill="#1cff39" d="M1266 292h6v6h-6z"/><path fill="#26ff37" d="M1272 292h6v6h-6z"/><path fill="#31ff35" d="M1278 292h6v6h-6z"/><path fill="#3eff33" d="M1284 292h6v6h-6z"/><path fill="#4bff31" d="M1290 292h6v6h-6z"/><path fill="#59ff2f" d="M1296 292h6v6h-6z"/><path fill="#68ff2c" d="M1302 292h6v6h-6z"/><path fill="#78ff2a" d="M1308 292h6v6h-6z"/><path fill="#88ff28" d="M1314 292h6v6h-6z"/><path fill="#9aff25" d="M1320 292h6v6h-6z"/><path fill="#acff23" d="M1326 292h6v6h-6z"/><path fill="#c0ff20" d="M1332 292h6v6h-6z"/><path fill="#d4ff1e" d="M1338 292h6v6h-6z"/><path fill="#eaff1b" d="M1344 292h6v6h-6z"/><path fill="#fffd19" d="M1350 292h6v6h-6z"/><path fill="#ffe814" d="M1356 292h6v6h-6z"/><path fill="#ffd510" d="M1362 292h6v6h-6z"/><path fill="#ffc40d" d="M1368 292h6v6h-6z"/><path fill="#ffb50a" d="M1374 292h6v6h-6z"/><path fill="#fea708" d="M1380 292h6v6h-6z"/><path fill="#fe9b05" d="M1386 292h6v6h-6z"/><path fill="#fd8f04" d="M1392 292h6v6h-6z"/><path fill="#fc8502" d="M1398 292h6v6h-6z"/><path fill="#fb7c01" d="M1404 292h6v6h-6z"/><path fill="#f86300" d="M1422 292h6v6h-6zM1416 298h6v6h-6z"/><path fill="#f65d00" d="M1428 292h6v6h-6z"/><path fill="#00ff4c" d="M1230 298h6v6h-6z"/><path fill="#00ff4a" d="M1236 298h6v6h-6z"/><path fill="#00ff48" d="M1242 298h6v6h-6z"/><path fill="#05ff46" d="M1248 298h6v6h-6z"/><path fill="#0dff44" d="M1254 298h6v6h-6z"/><path fill="#16ff42" d="M1260 298h6v6h-6z"/><path fill="#20ff40" d="M1266 298h6v6h-6z"/><path fill="#2bff3e" d="M1272 298h6v6h-6z"/><path fill="#37ff3c" d="M1278 298h6v6h-6z"/><path fill="#44ff3a" d="M1284 298h6v6h-6z"/><path fill="#52ff38" d="M1290 298h6v6h-6z"/><path fill="#61ff35" d="M1296 298h6v6h-6z"/><path fill="#71ff33" d="M1302 298h6v6h-6z"/><path fill="#81ff31" d="M1308 298h6v6h-6z"/><path fill="#93ff2e" d="M1314 298h6v6h-6z"/><path fill="#a6ff2c" d="M1320 298h6v6h-6z"/><path fill="#b9ff29" d="M1326 298h6v6h-6z"/><path fill="#ceff27" d="M1332 298h6v6h-6z"/><path fill="#e4ff24" d="M1338 298h6v6h-6z"/><path fill="#faff21" d="M1344 298h6v6h-6z"/><path fill="#ffed1d" d="M1350 298h6v6h-6z"/><path fill="#ffd918" d="M1356 298h6v6h-6z"/><path fill="#ffc714" d="M1362 298h6v6h-6z"/><path fill="#ffb710" d="M1368 298h6v6h-6z"/><path fill="#fea90d" d="M1374 298h6v6h-6z"/><path fill="#fe9c0a" d="M1380 298h6v6h-6z"/><path fill="#fd9108" d="M1386 298h6v6h-6z"/><path fill="#fd8606" d="M1392 298h6v6h-6z"/><path fill="#fc7c04" d="M1398 298h6v6h-6z"/><path fill="#fa7303" d="M1404 298h6v6h-6z"/><path fill="#f96b01" d="M1410 298h6v6h-6z"/><path fill="#f65c00" d="M1422 298h6v6h-6z"/><path fill="#f55600" d="M1428 298h6v6h-6z"/><path fill="#f45000" d="M1434 298h6v6h-6zM1428 304h6v6h-6z"/><path fill="#f24b00" d="M1440 298h6v6h-6z"/><path fill="#00ff53" d="M1230 304h6v6h-6z"/><path fill="#00ff52" d="M1236 304h6v6h-6z"/><path fill="#01ff50" d="M1242 304h6v6h-6z"/><path fill="#08ff4e" d="M1248 304h6v6h-6z"/><path fill="#10ff4c" d="M1254 304h6v6h-6z"/><path fill="#1aff4a" d="M1260 304h6v6h-6z"/><path fill="#25ff48" d="M1266 304h6v6h-6z"/><path fill="#31ff45" d="M1272 304h6v6h-6z"/><path fill="#3dff43" d="M1278 304h6v6h-6z"/><path fill="#4bff41" d="M1284 304h6v6h-6z"/><path fill="#5aff3f" d="M1290 304h6v6h-6z"/><path fill="#6aff3d" d="M1296 304h6v6h-6z"/><path fill="#7aff3a" d="M1302 304h6v6h-6z"/><path fill="#8cff38" d="M1308 304h6v6h-6z"/><path fill="#9fff35" d="M1314 304h6v6h-6z"/><path fill="#b2ff33" d="M1320 304h6v6h-6z"/><path fill="#c7ff30" d="M1326 304h6v6h-6z"/><path fill="#ddff2e" d="M1332 304h6v6h-6z"/><path fill="#f4ff2b" d="M1338 304h6v6h-6z"/><path fill="#fff226" d="M1344 304h6v6h-6z"/><path fill="#ffdd21" d="M1350 304h6v6h-6z"/><path fill="#ffcb1c" d="M1356 304h6v6h-6z"/><path fill="#ffba17" d="M1362 304h6v6h-6z"/><path fill="#ffab13" d="M1368 304h6v6h-6z"/><path fill="#fe9e10" d="M1374 304h6v6h-6z"/><path fill="#fe920d" d="M1380 304h6v6h-6z"/><path fill="#fd870b" d="M1386 304h6v6h-6z"/><path fill="#fc7d08" d="M1392 304h6v6h-6z"/><path fill="#fb7406" d="M1398 304h6v6h-6z"/><path fill="#f96b05" d="M1404 304h6v6h-6z"/><path fill="#f86303" d="M1410 304h6v6h-6z"/><path fill="#f75c02" d="M1416 304h6v6h-6z"/><path fill="#f55601" d="M1422 304h6v6h-6z"/><path fill="#f24a00" d="M1434 304h6v6h-6z"/><path fill="#f14500" d="M1440 304h6v6h-6z"/><path fill="#ef4000" d="M1446 304h6v6h-6zM1440 310h6v6h-6z"/><path fill="#00ff5b" d="M1230 310h6v6h-6z"/><path fill="#00ff59" d="M1236 310h6v6h-6z"/><path fill="#03ff58" d="M1242 310h6v6h-6z"/><path fill="#0bff56" d="M1248 310h6v6h-6z"/><path fill="#14ff54" d="M1254 310h6v6h-6z"/><path fill="#1eff52" d="M1260 310h6v6h-6z"/><path fill="#2aff50" d="M1266 310h6v6h-6z"/><path fill="#37ff4d" d="M1272 310h6v6h-6z"/><path fill="#44ff4b" d="M1278 310h6v6h-6z"/><path fill="#53ff49" d="M1284 310h6v6h-6z"/><path fill="#62ff47" d="M1290 310h6v6h-6z"/><path fill="#73ff45" d="M1296 310h6v6h-6z"/><path fill="#85ff42" d="M1302 310h6v6h-6z"/><path fill="#97ff40" d="M1308 310h6v6h-6z"/><path fill="#abff3d" d="M1314 310h6v6h-6z"/><path fill="#c0ff3b" d="M1320 310h6v6h-6z"/><path fill="#d6ff38" d="M1326 310h6v6h-6z"/><path fill="#edff35" d="M1332 310h6v6h-6z"/><path fill="#fff831" d="M1338 310h6v6h-6z"/><path fill="#ffe22b" d="M1344 310h6v6h-6z"/><path fill="#ffcf25" d="M1350 310h6v6h-6z"/><path fill="#ffbd1f" d="M1356 310h6v6h-6z"/><path fill="#ffae1b" d="M1362 310h6v6h-6z"/><path fill="#fea017" d="M1368 310h6v6h-6z"/><path fill="#fe9313" d="M1374 310h6v6h-6z"/><path fill="#fd8810" d="M1380 310h6v6h-6z"/><path fill="#fc7e0d" d="M1386 310h6v6h-6z"/><path fill="#fb740b" d="M1392 310h6v6h-6z"/><path fill="#fa6c09" d="M1398 310h6v6h-6z"/><path fill="#f96407" d="M1404 310h6v6h-6z"/><path fill="#f75c05" d="M1410 310h6v6h-6z"/><path fill="#f55603" d="M1416 310h6v6h-6z"/><path fill="#f44f02" d="M1422 310h6v6h-6z"/><path fill="#f24a01" d="M1428 310h6v6h-6z"/><path fill="#f04400" d="M1434 310h6v6h-6z"/><path fill="#ed3b00" d="M1446 310h6v6h-6z"/><path fill="#ec3700" d="M1452 310h6v6h-6z"/><path fill="#ea3300" d="M1458 310h6v6h-6z"/><path fill="#00ff66" d="M1224 316h6v6h-6z"/><path fill="#00ff64" d="M1230 316h6v6h-6z"/><path fill="#00ff62" d="M1236 316h6v6h-6z"/><path fill="#06ff60" d="M1242 316h6v6h-6z"/><path fill="#0eff5e" d="M1248 316h6v6h-6z"/><path fill="#18ff5c" d="M1254 316h6v6h-6z"/><path fill="#23ff5a" d="M1260 316h6v6h-6z"/><path fill="#30ff58" d="M1266 316h6v6h-6z"/><path fill="#3dff56" d="M1272 316h6v6h-6z"/><path fill="#4bff54" d="M1278 316h6v6h-6z"/><path fill="#5bff52" d="M1284 316h6v6h-6z"/><path fill="#6cff50" d="M1290 316h6v6h-6z"/><path fill="#7dff4d" d="M1296 316h6v6h-6z"/><path fill="#90ff4b" d="M1302 316h6v6h-6z"/><path fill="#a4ff48" d="M1308 316h6v6h-6z"/><path fill="#b9ff46" d="M1314 316h6v6h-6z"/><path fill="#cfff43" d="M1320 316h6v6h-6z"/><path fill="#e6ff41" d="M1326 316h6v6h-6z"/><path fill="#ffff3e" d="M1332 316h6v6h-6z"/><path fill="#ffe736" d="M1338 316h6v6h-6z"/><path fill="#ffd32f" d="M1344 316h6v6h-6z"/><path fill="#ffc028" d="M1350 316h6v6h-6z"/><path fill="#ffb023" d="M1356 316h6v6h-6z"/><path fill="#fea21e" d="M1362 316h6v6h-6z"/><path fill="#fe951a" d="M1368 316h6v6h-6z"/><path fill="#fd8916" d="M1374 316h6v6h-6z"/><path fill="#fc7e13" d="M1380 316h6v6h-6z"/><path fill="#fb7510" d="M1386 316h6v6h-6z"/><path fill="#fa6c0d" d="M1392 316h6v6h-6z"/><path fill="#f9640b" d="M1398 316h6v6h-6z"/><path fill="#f75c09" d="M1404 316h6v6h-6z"/><path fill="#f65507" d="M1410 316h6v6h-6z"/><path fill="#f44f05" d="M1416 316h6v6h-6z"/><path fill="#f34904" d="M1422 316h6v6h-6z"/><path fill="#f14403" d="M1428 316h6v6h-6z"/><path fill="#ef3f02" d="M1434 316h6v6h-6z"/><path fill="#ed3a01" d="M1440 316h6v6h-6z"/><path fill="#eb3600" d="M1446 316h6v6h-6z"/><path fill="#ea3200" d="M1452 316h6v6h-6z"/><path fill="#e82f00" d="M1458 316h6v6h-6z"/><path fill="#e72b00" d="M1464 316h6v6h-6z"/><path fill="#00ff6f" d="M1224 322h6v6h-6z"/><path fill="#00ff6d" d="M1230 322h6v6h-6z"/><path fill="#01ff6b" d="M1236 322h6v6h-6z"/><path fill="#08ff6a" d="M1242 322h6v6h-6z"/><path fill="#12ff68" d="M1248 322h6v6h-6z"/><path fill="#1dff66" d="M1254 322h6v6h-6z"/><path fill="#29ff64" d="M1260 322h6v6h-6z"/><path fill="#36ff62" d="M1266 322h6v6h-6z"/><path fill="#44ff60" d="M1272 322h6v6h-6z"/><path fill="#53ff5e" d="M1278 322h6v6h-6z"/><path fill="#64ff5b" d="M1284 322h6v6h-6z"/><path fill="#76ff59" d="M1290 322h6v6h-6z"/><path fill="#88ff57" d="M1296 322h6v6h-6z"/><path fill="#9cff54" d="M1302 322h6v6h-6z"/><path fill="#b1ff52" d="M1308 322h6v6h-6z"/><path fill="#c8ff50" d="M1314 322h6v6h-6z"/><path fill="#dfff4d" d="M1320 322h6v6h-6z"/><path fill="#f8ff4a" d="M1326 322h6v6h-6z"/><path fill="#ffed43" d="M1332 322h6v6h-6z"/><path fill="#ffd73a" d="M1338 322h6v6h-6z"/><path fill="#ffc433" d="M1344 322h6v6h-6z"/><path fill="#ffb32c" d="M1350 322h6v6h-6z"/><path fill="#ffa427" d="M1356 322h6v6h-6z"/><path fill="#fe9622" d="M1362 322h6v6h-6z"/><path fill="#fe8a1d" d="M1368 322h6v6h-6z"/><path fill="#fd7f19" d="M1374 322h6v6h-6z"/><path fill="#fc7516" d="M1380 322h6v6h-6z"/><path fill="#fb6c13" d="M1386 322h6v6h-6z"/><path fill="#f96410" d="M1392 322h6v6h-6z"/><path fill="#f85c0d" d="M1398 322h6v6h-6z"/><path fill="#f6550b" d="M1404 322h6v6h-6z"/><path fill="#f54f09" d="M1410 322h6v6h-6z"/><path fill="#f34907" d="M1416 322h6v6h-6z"/><path fill="#f14306" d="M1422 322h6v6h-6z"/><path fill="#ef3e04" d="M1428 322h6v6h-6z"/><path fill="#ee3a03" d="M1434 322h6v6h-6z"/><path fill="#ec3502" d="M1440 322h6v6h-6z"/><path fill="#ea3201" d="M1446 322h6v6h-6z"/><path fill="#e82e00" d="M1452 322h6v6h-6z"/><path fill="#e62b00" d="M1458 322h6v6h-6z"/><path fill="#e52700" d="M1464 322h6v6h-6z"/><path fill="#e32500" d="M1470 322h6v6h-6z"/><path fill="#e22200" d="M1476 322h6v6h-6z"/><path fill="#00ff79" d="M1224 328h6v6h-6z"/><path fill="#00ff77" d="M1230 328h6v6h-6z"/><path fill="#03ff75" d="M1236 328h6v6h-6z"/><path fill="#0cff74" d="M1242 328h6v6h-6z"/><path fill="#16ff72" d="M1248 328h6v6h-6z"/><path fill="#22ff70" d="M1254 328h6v6h-6z"/><path fill="#2eff6e" d="M1260 328h6v6h-6z"/><path fill="#3dff6c" d="M1266 328h6v6h-6z"/><path fill="#4cff6a" d="M1272 328h6v6h-6z"/><path fill="#5cff68" d="M1278 328h6v6h-6z"/><path fill="#6eff66" d="M1284 328h6v6h-6z"/><path fill="#80ff64" d="M1290 328h6v6h-6z"/><path fill="#94ff61" d="M1296 328h6v6h-6z"/><path fill="#aaff5f" d="M1302 328h6v6h-6z"/><path fill="#c0ff5d" d="M1308 328h6v6h-6z"/><path fill="#d8ff5a" d="M1314 328h6v6h-6z"/><path fill="#f1ff58" d="M1320 328h6v6h-6z"/><path fill="#fff351" d="M1326 328h6v6h-6z"/><path fill="#ffdc47" d="M1332 328h6v6h-6z"/><path fill="#ffc73e" d="M1338 328h6v6h-6z"/><path fill="#ffb637" d="M1344 328h6v6h-6z"/><path fill="#ffa630" d="M1350 328h6v6h-6z"/><path fill="#fe982a" d="M1356 328h6v6h-6z"/><path fill="#fe8b25" d="M1362 328h6v6h-6z"/><path fill="#fd8020" d="M1368 328h6v6h-6z"/><path fill="#fc761c" d="M1374 328h6v6h-6z"/><path fill="#fb6c18" d="M1380 328h6v6h-6z"/><path fill="#fa6415" d="M1386 328h6v6h-6z"/><path fill="#f95c12" d="M1392 328h6v6h-6z"/><path fill="#f75510" d="M1398 328h6v6h-6z"/><path fill="#f54e0d" d="M1404 328h6v6h-6z"/><path fill="#f4480b" d="M1410 328h6v6h-6z"/><path fill="#f24309" d="M1416 328h6v6h-6z"/><path fill="#f03e07" d="M1422 328h6v6h-6z"/><path fill="#ee3906" d="M1428 328h6v6h-6z"/><path fill="#ec3504" d="M1434 328h6v6h-6z"/><path fill="#ea3103" d="M1440 328h6v6h-6z"/><path fill="#e82d02" d="M1446 328h6v6h-6z"/><path fill="#e62a01" d="M1452 328h6v6h-6z"/><path fill="#e52701" d="M1458 328h6v6h-6z"/><path fill="#e32400" d="M1464 328h6v6h-6z"/><path fill="#e12100" d="M1470 328h6v6h-6z"/><path fill="#e01f00" d="M1476 328h6v6h-6z"/><path fill="#de1c00" d="M1482 328h6v6h-6z"/><path fill="#00ff85" d="M1218 334h6v6h-6z"/><path fill="#00ff84" d="M1224 334h6v6h-6z"/><path fill="#00ff82" d="M1230 334h6v6h-6z"/><path fill="#06ff80" d="M1236 334h6v6h-6z"/><path fill="#10ff7f" d="M1242 334h6v6h-6z"/><path fill="#1bff7d" d="M1248 334h6v6h-6z"/><path fill="#27ff7b" d="M1254 334h6v6h-6z"/><path fill="#35ff79" d="M1260 334h6v6h-6z"/><path fill="#44ff77" d="M1266 334h6v6h-6z"/><path fill="#54ff75" d="M1272 334h6v6h-6z"/><path fill="#66ff73" d="M1278 334h6v6h-6z"/><path fill="#78ff71" d="M1284 334h6v6h-6z"/><path fill="#8cff6f" d="M1290 334h6v6h-6z"/><path fill="#a2ff6d" d="M1296 334h6v6h-6z"/><path fill="#b8ff6b" d="M1302 334h6v6h-6z"/><path fill="#d0ff68" d="M1308 334h6v6h-6z"/><path fill="#eaff66" d="M1314 334h6v6h-6z"/><path fill="#fff961" d="M1320 334h6v6h-6z"/><path fill="#ffe155" d="M1326 334h6v6h-6z"/><path fill="#ffcb4b" d="M1332 334h6v6h-6z"/><path fill="#ffb942" d="M1338 334h6v6h-6z"/><path fill="#ffa83a" d="M1344 334h6v6h-6z"/><path fill="#fe9a34" d="M1350 334h6v6h-6z"/><path fill="#fe8d2e" d="M1356 334h6v6h-6z"/><path fill="#fd8128" d="M1362 334h6v6h-6z"/><path fill="#fd7623" d="M1368 334h6v6h-6z"/><path fill="#fc6d1f" d="M1374 334h6v6h-6z"/><path fill="#fa641b" d="M1380 334h6v6h-6z"/><path fill="#f95c18" d="M1386 334h6v6h-6z"/><path fill="#f85515" d="M1392 334h6v6h-6z"/><path fill="#f64e12" d="M1398 334h6v6h-6z"/><path fill="#f4480f" d="M1404 334h6v6h-6z"/><path fill="#f3420d" d="M1410 334h6v6h-6z"/><path fill="#f13d0b" d="M1416 334h6v6h-6z"/><path fill="#ef3909" d="M1422 334h6v6h-6z"/><path fill="#ed3408" d="M1428 334h6v6h-6z"/><path fill="#eb3006" d="M1434 334h6v6h-6z"/><path fill="#e92c05" d="M1440 334h6v6h-6z"/><path fill="#e72904" d="M1446 334h6v6h-6z"/><path fill="#e52603" d="M1452 334h6v6h-6z"/><path fill="#e32302" d="M1458 334h6v6h-6z"/><path fill="#e12001" d="M1464 334h6v6h-6z"/><path fill="#df1e00" d="M1470 334h6v6h-6z"/><path fill="#de1b00" d="M1476 334h6v6h-6z"/><path fill="#dc1900" d="M1482 334h6v6h-6z"/><path fill="#db1700" d="M1488 334h6v6h-6z"/><path fill="#da1500" d="M1494 334h6v6h-6z"/><path fill="#00ff91" d="M1218 340h6v6h-6z"/><path fill="#00ff8f" d="M1224 340h6v6h-6z"/><path fill="#01ff8e" d="M1230 340h6v6h-6z"/><path fill="#09ff8c" d="M1236 340h6v6h-6z"/><path fill="#14ff8a" d="M1242 340h6v6h-6z"/><path fill="#20ff89" d="M1248 340h6v6h-6z"/><path fill="#2dff87" d="M1254 340h6v6h-6z"/><path fill="#3cff85" d="M1260 340h6v6h-6z"/><path fill="#4cff84" d="M1266 340h6v6h-6z"/><path fill="#5eff82" d="M1272 340h6v6h-6z"/><path fill="#70ff80" d="M1278 340h6v6h-6z"/><path fill="#84ff7e" d="M1284 340h6v6h-6z"/><path fill="#99ff7c" d="M1290 340h6v6h-6z"/><path fill="#b0ff7a" d="M1296 340h6v6h-6z"/><path fill="#c8ff77" d="M1302 340h6v6h-6z"/><path fill="#e2ff75" d="M1308 340h6v6h-6z"/><path fill="#fdff73" d="M1314 340h6v6h-6z"/><path fill="#ffe666" d="M1320 340h6v6h-6z"/><path fill="#ffd05a" d="M1326 340h6v6h-6z"/><path fill="#ffbc4f" d="M1332 340h6v6h-6z"/><path fill="#ffab46" d="M1338 340h6v6h-6z"/><path fill="#ff9c3e" d="M1344 340h6v6h-6z"/><path fill="#fe8e37" d="M1350 340h6v6h-6z"/><path fill="#fe8231" d="M1356 340h6v6h-6z"/><path fill="#fd772b" d="M1362 340h6v6h-6z"/><path fill="#fc6d26" d="M1368 340h6v6h-6z"/><path fill="#fb6422" d="M1374 340h6v6h-6z"/><path fill="#fa5c1e" d="M1380 340h6v6h-6z"/><path fill="#f8551a" d="M1386 340h6v6h-6z"/><path fill="#f74e17" d="M1392 340h6v6h-6z"/><path fill="#f54814" d="M1398 340h6v6h-6z"/><path fill="#f34212" d="M1404 340h6v6h-6z"/><path fill="#f13d0f" d="M1410 340h6v6h-6z"/><path fill="#ef380d" d="M1416 340h6v6h-6z"/><path fill="#ee330b" d="M1422 340h6v6h-6z"/><path fill="#ec2f09" d="M1428 340h6v6h-6z"/><path fill="#ea2c08" d="M1434 340h6v6h-6z"/><path fill="#e82806" d="M1440 340h6v6h-6z"/><path fill="#e62505" d="M1446 340h6v6h-6z"/><path fill="#e42204" d="M1452 340h6v6h-6z"/><path fill="#e21f03" d="M1458 340h6v6h-6z"/><path fill="#e01d02" d="M1464 340h6v6h-6z"/><path fill="#de1a01" d="M1470 340h6v6h-6z"/><path fill="#dc1801" d="M1476 340h6v6h-6z"/><path fill="#db1600" d="M1482 340h6v6h-6z"/><path fill="#d91400" d="M1488 340h6v6h-6z"/><path fill="#d81300" d="M1494 340h6v6h-6z"/><path fill="#d71100" d="M1500 340h6v6h-6z"/><path fill="#00ff9d" d="M1218 346h6v6h-6z"/><path fill="#00ff9c" d="M1224 346h6v6h-6z"/><path fill="#04ff9a" d="M1230 346h6v6h-6z"/><path fill="#0dff99" d="M1236 346h6v6h-6z"/><path fill="#19ff97" d="M1242 346h6v6h-6z"/><path fill="#26ff96" d="M1248 346h6v6h-6z"/><path fill="#34ff94" d="M1254 346h6v6h-6z"/><path fill="#44ff93" d="M1260 346h6v6h-6z"/><path fill="#55ff91" d="M1266 346h6v6h-6z"/><path fill="#68ff8f" d="M1272 346h6v6h-6z"/><path fill="#7cff8d" d="M1278 346h6v6h-6z"/><path fill="#91ff8c" d="M1284 346h6v6h-6z"/><path fill="#a8ff8a" d="M1290 346h6v6h-6z"/><path fill="#c0ff88" d="M1296 346h6v6h-6z"/><path fill="#daff86" d="M1302 346h6v6h-6z"/><path fill="#f6ff84" d="M1308 346h6v6h-6z"/><path fill="#ffec78" d="M1314 346h6v6h-6z"/><path fill="#ffd46a" d="M1320 346h6v6h-6z"/><path fill="#ffc05e" d="M1326 346h6v6h-6z"/><path fill="#ffad53" d="M1332 346h6v6h-6z"/><path fill="#ff9e4a" d="M1338 346h6v6h-6z"/><path fill="#fe8f42" d="M1344 346h6v6h-6z"/><path fill="#fe833b" d="M1350 346h6v6h-6z"/><path fill="#fd7834" d="M1356 346h6v6h-6z"/><path fill="#fc6e2f" d="M1362 346h6v6h-6z"/><path fill="#fb6429" d="M1368 346h6v6h-6z"/><path fill="#fa5c25" d="M1374 346h6v6h-6z"/><path fill="#f95421" d="M1380 346h6v6h-6z"/><path fill="#f74d1d" d="M1386 346h6v6h-6z"/><path fill="#f6471a" d="M1392 346h6v6h-6z"/><path fill="#f44116" d="M1398 346h6v6h-6z"/><path fill="#f23c14" d="M1404 346h6v6h-6z"/><path fill="#f03711" d="M1410 346h6v6h-6z"/><path fill="#ee330f" d="M1416 346h6v6h-6z"/><path fill="#ec2f0d" d="M1422 346h6v6h-6z"/><path fill="#ea2b0b" d="M1428 346h6v6h-6z"/><path fill="#e82709" d="M1434 346h6v6h-6z"/><path fill="#e62408" d="M1440 346h6v6h-6z"/><path fill="#e42106" d="M1446 346h6v6h-6z"/><path fill="#e21e05" d="M1452 346h6v6h-6z"/><path fill="#e01c04" d="M1458 346h6v6h-6z"/><path fill="#de1903" d="M1464 346h6v6h-6z"/><path fill="#dd1702" d="M1470 346h6v6h-6z"/><path fill="#db1501" d="M1476 346h6v6h-6z"/><path fill="#d91301" d="M1482 346h6v6h-6z"/><path fill="#d71200" d="M1488 346h6v6h-6z"/><path fill="#d61000" d="M1494 346h6v6h-6z"/><path fill="#d50f00" d="M1500 346h6v6h-6z"/><path fill="#d40d00" d="M1506 346h6v6h-6z"/><path fill="#d30c00" d="M1512 346h6v6h-6zM1500 352h6v6h-6z"/><path fill="#00ffac" d="M1212 352h6v6h-6z"/><path fill="#00ffab" d="M1218 352h6v6h-6z"/><path fill="#00ffaa" d="M1224 352h6v6h-6z"/><path fill="#07ffa8" d="M1230 352h6v6h-6z"/><path fill="#11ffa7" d="M1236 352h6v6h-6z"/><path fill="#1effa6" d="M1242 352h6v6h-6z"/><path fill="#2cffa4" d="M1248 352h6v6h-6z"/><path fill="#3cffa3" d="M1254 352h6v6h-6z"/><path fill="#4dffa1" d="M1260 352h6v6h-6z"/><path fill="#5fffa0" d="M1266 352h6v6h-6z"/><path fill="#73ff9e" d="M1272 352h6v6h-6z"/><path fill="#88ff9d" d="M1278 352h6v6h-6z"/><path fill="#9fff9b" d="M1284 352h6v6h-6z"/><path fill="#b8ff99" d="M1290 352h6v6h-6z"/><path fill="#d2ff97" d="M1296 352h6v6h-6z"/><path fill="#eeff95" d="M1302 352h6v6h-6z"/><path fill="#fff38d" d="M1308 352h6v6h-6z"/><path fill="#ffd97c" d="M1314 352h6v6h-6z"/><path fill="#ffc36e" d="M1320 352h6v6h-6z"/><path fill="#ffb062" d="M1326 352h6v6h-6z"/><path fill="#ffa057" d="M1332 352h6v6h-6z"/><path fill="#ff914e" d="M1338 352h6v6h-6z"/><path fill="#fe8445" d="M1344 352h6v6h-6z"/><path fill="#fe783e" d="M1350 352h6v6h-6z"/><path fill="#fd6e38" d="M1356 352h6v6h-6z"/><path fill="#fc6432" d="M1362 352h6v6h-6z"/><path fill="#fb5c2c" d="M1368 352h6v6h-6z"/><path fill="#fa5428" d="M1374 352h6v6h-6z"/><path fill="#f84d23" d="M1380 352h6v6h-6z"/><path fill="#f7471f" d="M1386 352h6v6h-6z"/><path fill="#f5411c" d="M1392 352h6v6h-6z"/><path fill="#f33b19" d="M1398 352h6v6h-6z"/><path fill="#f13616" d="M1404 352h6v6h-6z"/><path fill="#ef3213" d="M1410 352h6v6h-6z"/><path fill="#ed2e11" d="M1416 352h6v6h-6z"/><path fill="#eb2a0f" d="M1422 352h6v6h-6z"/><path fill="#e9260d" d="M1428 352h6v6h-6z"/><path fill="#e7230b" d="M1434 352h6v6h-6z"/><path fill="#e52009" d="M1440 352h6v6h-6z"/><path fill="#e31d08" d="M1446 352h6v6h-6z"/><path fill="#e11b07" d="M1452 352h6v6h-6z"/><path fill="#df1905" d="M1458 352h6v6h-6z"/><path fill="#dd1604" d="M1464 352h6v6h-6z"/><path fill="#db1403" d="M1470 352h6v6h-6z"/><path fill="#da1302" d="M1476 352h6v6h-6z"/><path fill="#d81102" d="M1482 352h6v6h-6z"/><path fill="#d60f01" d="M1488 352h6v6h-6z"/><path fill="#d50e01" d="M1494 352h6v6h-6z"/><path fill="#d20b00" d="M1506 352h6v6h-6z"/><path fill="#d10a00" d="M1512 352h6v6h-6z"/><path fill="#d00900" d="M1518 352h6v6h-6zM1506 358h6v6h-6z"/><path fill="#cf0800" d="M1524 352h6v6h-6zM1512 358h6v6h-6z"/><path fill="#00ffbb" d="M1212 358h6v6h-6z"/><path fill="#00ffba" d="M1218 358h6v6h-6z"/><path fill="#02ffb8" d="M1224 358h6v6h-6z"/><path fill="#0bffb7" d="M1230 358h6v6h-6z"/><path fill="#16ffb6" d="M1236 358h6v6h-6z"/><path fill="#24ffb5" d="M1242 358h6v6h-6z"/><path fill="#33ffb4" d="M1248 358h6v6h-6z"/><path fill="#44ffb3" d="M1254 358h6v6h-6z"/><path fill="#56ffb1" d="M1260 358h6v6h-6z"/><path fill="#6affb0" d="M1266 358h6v6h-6z"/><path fill="#7fffaf" d="M1272 358h6v6h-6z"/><path fill="#96ffad" d="M1278 358h6v6h-6z"/><path fill="#afffac" d="M1284 358h6v6h-6z"/><path fill="#c9ffaa" d="M1290 358h6v6h-6z"/><path fill="#e5ffa9" d="M1296 358h6v6h-6z"/><path fill="#fffba4" d="M1302 358h6v6h-6z"/><path fill="#ffdf91" d="M1308 358h6v6h-6z"/><path fill="#ffc880" d="M1314 358h6v6h-6z"/><path fill="#ffb372" d="M1320 358h6v6h-6z"/><path fill="#ffa265" d="M1326 358h6v6h-6z"/><path fill="#ff935b" d="M1332 358h6v6h-6z"/><path fill="#fe8551" d="M1338 358h6v6h-6z"/><path fill="#fe7949" d="M1344 358h6v6h-6z"/><path fill="#fd6e41" d="M1350 358h6v6h-6z"/><path fill="#fc653b" d="M1356 358h6v6h-6z"/><path fill="#fb5c35" d="M1362 358h6v6h-6z"/><path fill="#fa542f" d="M1368 358h6v6h-6z"/><path fill="#f94d2a" d="M1374 358h6v6h-6z"/><path fill="#f74626" d="M1380 358h6v6h-6z"/><path fill="#f64022" d="M1386 358h6v6h-6z"/><path fill="#f43b1e" d="M1392 358h6v6h-6z"/><path fill="#f2361b" d="M1398 358h6v6h-6z"/><path fill="#f03118" d="M1404 358h6v6h-6z"/><path fill="#ee2d15" d="M1410 358h6v6h-6z"/><path fill="#ec2913" d="M1416 358h6v6h-6z"/><path fill="#ea2611" d="M1422 358h6v6h-6z"/><path fill="#e8220e" d="M1428 358h6v6h-6z"/><path fill="#e61f0d" d="M1434 358h6v6h-6z"/><path fill="#e41d0b" d="M1440 358h6v6h-6z"/><path fill="#e21a09" d="M1446 358h6v6h-6z"/><path fill="#e01808" d="M1452 358h6v6h-6z"/><path fill="#de1607" d="M1458 358h6v6h-6z"/><path fill="#dc1406" d="M1464 358h6v6h-6z"/><path fill="#da1204" d="M1470 358h6v6h-6z"/><path fill="#d81004" d="M1476 358h6v6h-6z"/><path fill="#d70e03" d="M1482 358h6v6h-6z"/><path fill="#d50d02" d="M1488 358h6v6h-6z"/><path fill="#d30c01" d="M1494 358h6v6h-6z"/><path fill="#d20a01" d="M1500 358h6v6h-6z"/><path fill="#ce0700" d="M1518 358h6v6h-6z"/><path fill="#ce0600" d="M1524 358h6v6h-6zM1512 364h6v6h-6z"/><path fill="#cd0500" d="M1530 358h6v6h-6z"/><path fill="#00ffca" d="M1212 364h6v6h-6zM1218 364h6v6h-6z"/><path fill="#04ffc9" d="M1224 364h6v6h-6z"/><path fill="#0fffc8" d="M1230 364h6v6h-6z"/><path fill="#1cffc7" d="M1236 364h6v6h-6z"/><path fill="#2bffc6" d="M1242 364h6v6h-6z"/><path fill="#3bffc5" d="M1248 364h6v6h-6z"/><path fill="#4dffc4" d="M1254 364h6v6h-6z"/><path fill="#61ffc3" d="M1260 364h6v6h-6z"/><path fill="#76ffc2" d="M1266 364h6v6h-6z"/><path fill="#8dffc1" d="M1272 364h6v6h-6z"/><path fill="#a6ffc0" d="M1278 364h6v6h-6z"/><path fill="#c0ffbf" d="M1284 364h6v6h-6z"/><path fill="#ddffbd" d="M1290 364h6v6h-6z"/><path fill="#fbffbc" d="M1296 364h6v6h-6z"/><path fill="#ffe5a8" d="M1302 364h6v6h-6z"/><path fill="#ffcc94" d="M1308 364h6v6h-6z"/><path fill="#ffb784" d="M1314 364h6v6h-6z"/><path fill="#ffa476" d="M1320 364h6v6h-6z"/><path fill="#ff9469" d="M1326 364h6v6h-6z"/><path fill="#ff865e" d="M1332 364h6v6h-6z"/><path fill="#fe7a55" d="M1338 364h6v6h-6z"/><path fill="#fe6f4c" d="M1344 364h6v6h-6z"/><path fill="#fd6545" d="M1350 364h6v6h-6z"/><path fill="#fc5c3e" d="M1356 364h6v6h-6z"/><path fill="#fb5438" d="M1362 364h6v6h-6z"/><path fill="#fa4c32" d="M1368 364h6v6h-6z"/><path fill="#f8462d" d="M1374 364h6v6h-6z"/><path fill="#f74029" d="M1380 364h6v6h-6z"/><path fill="#f53a24" d="M1386 364h6v6h-6z"/><path fill="#f33521" d="M1392 364h6v6h-6z"/><path fill="#f1301d" d="M1398 364h6v6h-6z"/><path fill="#ef2c1a" d="M1404 364h6v6h-6z"/><path fill="#ed2817" d="M1410 364h6v6h-6z"/><path fill="#eb2515" d="M1416 364h6v6h-6z"/><path fill="#e92112" d="M1422 364h6v6h-6z"/><path fill="#e71e10" d="M1428 364h6v6h-6z"/><path fill="#e51c0e" d="M1434 364h6v6h-6z"/><path fill="#e3190c" d="M1440 364h6v6h-6z"/><path fill="#e1170b" d="M1446 364h6v6h-6z"/><path fill="#df1509" d="M1452 364h6v6h-6z"/><path fill="#dd1308" d="M1458 364h6v6h-6z"/><path fill="#db1107" d="M1464 364h6v6h-6z"/><path fill="#d90f06" d="M1470 364h6v6h-6z"/><path fill="#d70e05" d="M1476 364h6v6h-6z"/><path fill="#d60c04" d="M1482 364h6v6h-6z"/><path fill="#d40b03" d="M1488 364h6v6h-6z"/><path fill="#d20a02" d="M1494 364h6v6h-6z"/><path fill="#d10802" d="M1500 364h6v6h-6z"/><path fill="#cf0701" d="M1506 364h6v6h-6z"/><path fill="#cd0600" d="M1518 364h6v6h-6z"/><path fill="#cc0500" d="M1524 364h6v6h-6z"/><path fill="#cb0400" d="M1530 364h6v6h-6z"/><path fill="#cb0300" d="M1536 364h6v6h-6zM1524 370h6v6h-6z"/><path fill="#ca0300" d="M1542 364h6v6h-6zM1530 370h6v6h-6z"/><path fill="#00ffdc" d="M1206 370h6v6h-6zM1212 370h6v6h-6z"/><path fill="#00ffdb" d="M1218 370h6v6h-6z"/><path fill="#08ffdb" d="M1224 370h6v6h-6z"/><path fill="#14ffda" d="M1230 370h6v6h-6z"/><path fill="#22ffda" d="M1236 370h6v6h-6z"/><path fill="#32ffd9" d="M1242 370h6v6h-6z"/><path fill="#44ffd8" d="M1248 370h6v6h-6z"/><path fill="#57ffd8" d="M1254 370h6v6h-6z"/><path fill="#6cffd7" d="M1260 370h6v6h-6z"/><path fill="#83ffd6" d="M1266 370h6v6h-6z"/><path fill="#9cffd5" d="M1272 370h6v6h-6z"/><path fill="#b7ffd5" d="M1278 370h6v6h-6z"/><path fill="#d4ffd4" d="M1284 370h6v6h-6z"/><path fill="#f2ffd3" d="M1290 370h6v6h-6z"/><path fill="#ffecc2" d="M1296 370h6v6h-6z"/><path fill="#ffd1ab" d="M1302 370h6v6h-6z"/><path fill="#ffba98" d="M1308 370h6v6h-6z"/><path fill="#ffa788" d="M1314 370h6v6h-6z"/><path fill="#ff9679" d="M1320 370h6v6h-6z"/><path fill="#ff876d" d="M1326 370h6v6h-6z"/><path fill="#fe7a62" d="M1332 370h6v6h-6z"/><path fill="#fe6f58" d="M1338 370h6v6h-6z"/><path fill="#fd654f" d="M1344 370h6v6h-6z"/><path fill="#fd5c48" d="M1350 370h6v6h-6z"/><path fill="#fc5341" d="M1356 370h6v6h-6z"/><path fill="#fa4c3a" d="M1362 370h6v6h-6z"/><path fill="#f94535" d="M1368 370h6v6h-6z"/><path fill="#f83f30" d="M1374 370h6v6h-6z"/><path fill="#f6392b" d="M1380 370h6v6h-6z"/><path fill="#f43427" d="M1386 370h6v6h-6z"/><path fill="#f23023" d="M1392 370h6v6h-6z"/><path fill="#f02b1f" d="M1398 370h6v6h-6z"/><path fill="#ef271c" d="M1404 370h6v6h-6z"/><path fill="#ec2419" d="M1410 370h6v6h-6z"/><path fill="#ea2017" d="M1416 370h6v6h-6z"/><path fill="#e81d14" d="M1422 370h6v6h-6z"/><path fill="#e61b12" d="M1428 370h6v6h-6z"/><path fill="#e41810" d="M1434 370h6v6h-6z"/><path fill="#e2160e" d="M1440 370h6v6h-6z"/><path fill="#e0140c" d="M1446 370h6v6h-6z"/><path fill="#de120b" d="M1452 370h6v6h-6z"/><path fill="#dc1009" d="M1458 370h6v6h-6z"/><path fill="#da0e08" d="M1464 370h6v6h-6z"/><path fill="#d80d07" d="M1470 370h6v6h-6z"/><path fill="#d70b06" d="M1476 370h6v6h-6z"/><path fill="#d50a05" d="M1482 370h6v6h-6z"/><path fill="#d30904" d="M1488 370h6v6h-6z"/><path fill="#d20803" d="M1494 370h6v6h-6z"/><path fill="#d00702" d="M1500 370h6v6h-6z"/><path fill="#cf0602" d="M1506 370h6v6h-6z"/><path fill="#cd0501" d="M1512 370h6v6h-6z"/><path fill="#cc0401" d="M1518 370h6v6h-6z"/><path fill="#c90200" d="M1536 370h6v6h-6zM1542 370h6v6h-6zM1530 376h6v6h-6z"/><path fill="#c80100" d="M1548 370h6v6h-6zM1536 376h6v6h-6zM1542 376h6v6h-6z"/><path fill="#00ffef" d="M1206 376h6v6h-6zM1212 376h6v6h-6z"/><path fill="#02ffef" d="M1218 376h6v6h-6z"/><path fill="#0cffee" d="M1224 376h6v6h-6z"/><path fill="#19ffee" d="M1230 376h6v6h-6z"/><path fill="#29ffee" d="M1236 376h6v6h-6z"/><path fill="#3affee" d="M1242 376h6v6h-6z"/><path fill="#4dffed" d="M1248 376h6v6h-6z"/><path fill="#63ffed" d="M1254 376h6v6h-6z"/><path fill="#7affed" d="M1260 376h6v6h-6z"/><path fill="#92ffec" d="M1266 376h6v6h-6z"/><path fill="#adffec" d="M1272 376h6v6h-6z"/><path fill="#caffec" d="M1278 376h6v6h-6z"/><path fill="#e9ffeb" d="M1284 376h6v6h-6z"/><path fill="#fff4e0" d="M1290 376h6v6h-6z"/><path fill="#ffd7c5" d="M1296 376h6v6h-6z"/><path fill="#ffbeaf" d="M1302 376h6v6h-6z"/><path fill="#ffaa9c" d="M1308 376h6v6h-6z"/><path fill="#ff988b" d="M1314 376h6v6h-6z"/><path fill="#ff897d" d="M1320 376h6v6h-6z"/><path fill="#ff7b70" d="M1326 376h6v6h-6z"/><path fill="#fe6f65" d="M1332 376h6v6h-6z"/><path fill="#fe655b" d="M1338 376h6v6h-6z"/><path fill="#fd5b53" d="M1344 376h6v6h-6z"/><path fill="#fc534b" d="M1350 376h6v6h-6z"/><path fill="#fb4b44" d="M1356 376h6v6h-6z"/><path fill="#fa443d" d="M1362 376h6v6h-6z"/><path fill="#f93e38" d="M1368 376h6v6h-6z"/><path fill="#f73832" d="M1374 376h6v6h-6z"/><path fill="#f5332e" d="M1380 376h6v6h-6z"/><path fill="#f42f29" d="M1386 376h6v6h-6z"/><path fill="#f22a25" d="M1392 376h6v6h-6z"/><path fill="#f02622" d="M1398 376h6v6h-6z"/><path fill="#ee231e" d="M1404 376h6v6h-6z"/><path fill="#ec201b" d="M1410 376h6v6h-6z"/><path fill="#ea1d19" d="M1416 376h6v6h-6z"/><path fill="#e81a16" d="M1422 376h6v6h-6z"/><path fill="#e51714" d="M1428 376h6v6h-6z"/><path fill="#e31512" d="M1434 376h6v6h-6z"/><path fill="#e11310" d="M1440 376h6v6h-6z"/><path fill="#df110e" d="M1446 376h6v6h-6z"/><path fill="#dd0f0c" d="M1452 376h6v6h-6z"/><path fill="#db0d0b" d="M1458 376h6v6h-6z"/><path fill="#d90c09" d="M1464 376h6v6h-6z"/><path fill="#d80a08" d="M1470 376h6v6h-6z"/><path fill="#d60907" d="M1476 376h6v6h-6z"/><path fill="#d40806" d="M1482 376h6v6h-6z"/><path fill="#d20705" d="M1488 376h6v6h-6z"/><path fill="#d10604" d="M1494 376h6v6h-6z"/><path fill="#cf0503" d="M1500 376h6v6h-6z"/><path fill="#ce0403" d="M1506 376h6v6h-6z"/><path fill="#cd0302" d="M1512 376h6v6h-6z"/><path fill="#cb0301" d="M1518 376h6v6h-6z"/><path fill="#ca0201" d="M1524 376h6v6h-6z"/><path fill="#c70000" d="M1548 376h6v6h-6zM1554 376h6v6h-6zM1542 382h6v6h-6zM1548 382h6v6h-6zM1554 382h6v6h-6zM1548 388h6v6h-6z"/><path fill="#00faff" d="M1206 382h6v6h-6zM1212 382h6v6h-6z"/><path fill="#05faff" d="M1218 382h6v6h-6z"/><path fill="#11faff" d="M1224 382h6v6h-6z"/><path fill="#1ffaff" d="M1230 382h6v6h-6z"/><path fill="#30faff" d="M1236 382h6v6h-6z"/><path fill="#42faff" d="M1242 382h6v6h-6z"/><path fill="#57f9ff" d="M1248 382h6v6h-6z"/><path fill="#6df9ff" d="M1254 382h6v6h-6z"/><path fill="#85f9ff" d="M1260 382h6v6h-6z"/><path fill="#9ff9ff" d="M1266 382h6v6h-6z"/><path fill="#bcf9ff" d="M1272 382h6v6h-6z"/><path fill="#daf8ff" d="M1278 382h6v6h-6z"/><path fill="#fbf8ff" d="M1284 382h6v6h-6z"/><path fill="#ffdde3" d="M1290 382h6v6h-6z"/><path fill="#ffc3c8" d="M1296 382h6v6h-6z"/><path fill="#ffadb2" d="M1302 382h6v6h-6z"/><path fill="#ff9a9f" d="M1308 382h6v6h-6z"/><path fill="#ff8a8e" d="M1314 382h6v6h-6z"/><path fill="#ff7c80" d="M1320 382h6v6h-6z"/><path fill="#ff7074" d="M1326 382h6v6h-6z"/><path fill="#fe6568" d="M1332 382h6v6h-6z"/><path fill="#fe5b5f" d="M1338 382h6v6h-6z"/><path fill="#fd5356" d="M1344 382h6v6h-6z"/><path fill="#fc4b4e" d="M1350 382h6v6h-6z"/><path fill="#fb4447" d="M1356 382h6v6h-6z"/><path fill="#f93d40" d="M1362 382h6v6h-6z"/><path fill="#f8383a" d="M1368 382h6v6h-6z"/><path fill="#f63235" d="M1374 382h6v6h-6z"/><path fill="#f52e30" d="M1380 382h6v6h-6z"/><path fill="#f3292c" d="M1386 382h6v6h-6z"/><path fill="#f12527" d="M1392 382h6v6h-6z"/><path fill="#ef2224" d="M1398 382h6v6h-6z"/><path fill="#ed1e20" d="M1404 382h6v6h-6z"/><path fill="#eb1b1d" d="M1410 382h6v6h-6z"/><path fill="#e9191a" d="M1416 382h6v6h-6z"/><path fill="#e71618" d="M1422 382h6v6h-6z"/><path fill="#e51415" d="M1428 382h6v6h-6z"/><path fill="#e31213" d="M1434 382h6v6h-6z"/><path fill="#e11011" d="M1440 382h6v6h-6z"/><path fill="#df0e0f" d="M1446 382h6v6h-6z"/><path fill="#dd0c0e" d="M1452 382h6v6h-6z"/><path fill="#db0b0c" d="M1458 382h6v6h-6z"/><path fill="#d90a0b" d="M1464 382h6v6h-6z"/><path fill="#d70809" d="M1470 382h6v6h-6z"/><path fill="#d50708" d="M1476 382h6v6h-6z"/><path fill="#d30607" d="M1482 382h6v6h-6z"/><path fill="#d20506" d="M1488 382h6v6h-6z"/><path fill="#d00405" d="M1494 382h6v6h-6z"/><path fill="#cf0304" d="M1500 382h6v6h-6z"/><path fill="#cd0304" d="M1506 382h6v6h-6z"/><path fill="#cc0203" d="M1512 382h6v6h-6z"/><path fill="#cb0202" d="M1518 382h6v6h-6z"/><path fill="#ca0102" d="M1524 382h6v6h-6z"/><path fill="#c90101" d="M1530 382h6v6h-6z"/><path fill="#c80001" d="M1536 382h6v6h-6zM1536 388h6v6h-6zM1542 388h6v6h-6z"/><path fill="#00e7ff" d="M1200 388h6v6h-6z"/><path fill="#00e6ff" d="M1206 388h6v6h-6zM1212 388h6v6h-6z"/><path fill="#08e5ff" d="M1218 388h6v6h-6z"/><path fill="#14e5ff" d="M1224 388h6v6h-6z"/><path fill="#23e4ff" d="M1230 388h6v6h-6z"/><path fill="#33e4ff" d="M1236 388h6v6h-6z"/><path fill="#46e3ff" d="M1242 388h6v6h-6z"/><path fill="#5ae3ff" d="M1248 388h6v6h-6z"/><path fill="#6fe2ff" d="M1254 388h6v6h-6z"/><path fill="#87e1ff" d="M1260 388h6v6h-6z"/><path fill="#a1e1ff" d="M1266 388h6v6h-6z"/><path fill="#bce0ff" d="M1272 388h6v6h-6z"/><path fill="#dadfff" d="M1278 388h6v6h-6z"/><path fill="#f9dfff" d="M1284 388h6v6h-6z"/><path fill="#ffc8e6" d="M1290 388h6v6h-6z"/><path fill="#ffb0cb" d="M1296 388h6v6h-6z"/><path fill="#ff9cb5" d="M1302 388h6v6h-6z"/><path fill="#ff8ba2" d="M1308 388h6v6h-6z"/><path fill="#ff7d92" d="M1314 388h6v6h-6z"/><path fill="#ff7083" d="M1320 388h6v6h-6z"/><path fill="#fe6577" d="M1326 388h6v6h-6z"/><path fill="#fe5b6c" d="M1332 388h6v6h-6z"/><path fill="#fd5262" d="M1338 388h6v6h-6z"/><path fill="#fd4a59" d="M1344 388h6v6h-6z"/><path fill="#fc4351" d="M1350 388h6v6h-6z"/><path fill="#fa3d49" d="M1356 388h6v6h-6z"/><path fill="#f93743" d="M1362 388h6v6h-6z"/><path fill="#f8313d" d="M1368 388h6v6h-6z"/><path fill="#f62d37" d="M1374 388h6v6h-6z"/><path fill="#f42832" d="M1380 388h6v6h-6z"/><path fill="#f2242e" d="M1386 388h6v6h-6z"/><path fill="#f0212a" d="M1392 388h6v6h-6z"/><path fill="#ee1d26" d="M1398 388h6v6h-6z"/><path fill="#ec1a22" d="M1404 388h6v6h-6z"/><path fill="#ea181f" d="M1410 388h6v6h-6z"/><path fill="#e8151c" d="M1416 388h6v6h-6z"/><path fill="#e6131a" d="M1422 388h6v6h-6z"/><path fill="#e41117" d="M1428 388h6v6h-6z"/><path fill="#e20f15" d="M1434 388h6v6h-6z"/><path fill="#e00d13" d="M1440 388h6v6h-6z"/><path fill="#de0b11" d="M1446 388h6v6h-6z"/><path fill="#dc0a0f" d="M1452 388h6v6h-6z"/><path fill="#da090e" d="M1458 388h6v6h-6z"/><path fill="#d8070c" d="M1464 388h6v6h-6z"/><path fill="#d6060b" d="M1470 388h6v6h-6z"/><path fill="#d50509" d="M1476 388h6v6h-6z"/><path fill="#d30408" d="M1482 388h6v6h-6z"/><path fill="#d10407" d="M1488 388h6v6h-6z"/><path fill="#d00306" d="M1494 388h6v6h-6z"/><path fill="#ce0205" d="M1500 388h6v6h-6z"/><path fill="#cd0104" d="M1506 388h6v6h-6z"/><path fill="#cc0104" d="M1512 388h6v6h-6z"/><path fill="#cb0003" d="M1518 388h6v6h-6z"/><path fill="#ca0002" d="M1524 388h6v6h-6z"/><path fill="#c90002" d="M1530 388h6v6h-6zM1536 394h6v6h-6z"/><path fill="#00d4ff" d="M1200 394h6v6h-6zM1206 394h6v6h-6z"/><path fill="#02d3ff" d="M1212 394h6v6h-6z"/><path fill="#0cd2ff" d="M1218 394h6v6h-6z"/><path fill="#18d1ff" d="M1224 394h6v6h-6z"/><path fill="#27d0ff" d="M1230 394h6v6h-6z"/><path fill="#37d0ff" d="M1236 394h6v6h-6z"/><path fill="#49cfff" d="M1242 394h6v6h-6z"/><path fill="#5dceff" d="M1248 394h6v6h-6z"/><path fill="#72cdff" d="M1254 394h6v6h-6z"/><path fill="#89ccff" d="M1260 394h6v6h-6z"/><path fill="#a2cbff" d="M1266 394h6v6h-6z"/><path fill="#bccaff" d="M1272 394h6v6h-6z"/><path fill="#d9c8ff" d="M1278 394h6v6h-6z"/><path fill="#f8c7ff" d="M1284 394h6v6h-6z"/><path fill="#ffb4e8" d="M1290 394h6v6h-6z"/><path fill="#ff9fce" d="M1296 394h6v6h-6z"/><path fill="#ff8db8" d="M1302 394h6v6h-6z"/><path fill="#ff7ea5" d="M1308 394h6v6h-6z"/><path fill="#ff7095" d="M1314 394h6v6h-6z"/><path fill="#ff6587" d="M1320 394h6v6h-6z"/><path fill="#fe5b7a" d="M1326 394h6v6h-6z"/><path fill="#fe516f" d="M1332 394h6v6h-6z"/><path fill="#fd4965" d="M1338 394h6v6h-6z"/><path fill="#fc425c" d="M1344 394h6v6h-6z"/><path fill="#fb3c54" d="M1350 394h6v6h-6z"/><path fill="#fa364c" d="M1356 394h6v6h-6z"/><path fill="#f93045" d="M1362 394h6v6h-6z"/><path fill="#f72c3f" d="M1368 394h6v6h-6z"/><path fill="#f5273a" d="M1374 394h6v6h-6z"/><path fill="#f42335" d="M1380 394h6v6h-6z"/><path fill="#f22030" d="M1386 394h6v6h-6z"/><path fill="#f01c2c" d="M1392 394h6v6h-6z"/><path fill="#ee1928" d="M1398 394h6v6h-6z"/><path fill="#ec1724" d="M1404 394h6v6h-6z"/><path fill="#ea1421" d="M1410 394h6v6h-6z"/><path fill="#e8121e" d="M1416 394h6v6h-6z"/><path fill="#e6101b" d="M1422 394h6v6h-6z"/><path fill="#e40e19" d="M1428 394h6v6h-6z"/><path fill="#e10c17" d="M1434 394h6v6h-6z"/><path fill="#df0b14" d="M1440 394h6v6h-6z"/><path fill="#dd0912" d="M1446 394h6v6h-6z"/><path fill="#dc0811" d="M1452 394h6v6h-6z"/><path fill="#da070f" d="M1458 394h6v6h-6z"/><path fill="#d8050d" d="M1464 394h6v6h-6z"/><path fill="#d6040c" d="M1470 394h6v6h-6z"/><path fill="#d4040b" d="M1476 394h6v6h-6z"/><path fill="#d30309" d="M1482 394h6v6h-6z"/><path fill="#d10208" d="M1488 394h6v6h-6z"/><path fill="#d00107" d="M1494 394h6v6h-6z"/><path fill="#ce0106" d="M1500 394h6v6h-6z"/><path fill="#cd0005" d="M1506 394h6v6h-6z"/><path fill="#cc0005" d="M1512 394h6v6h-6zM1518 400h6v6h-6z"/><path fill="#cb0004" d="M1518 394h6v6h-6zM1524 400h6v6h-6z"/><path fill="#ca0003" d="M1524 394h6v6h-6zM1530 394h6v6h-6z"/><path fill="#c90001" d="M1542 394h6v6h-6z"/><path fill="#00c3ff" d="M1200 400h6v6h-6z"/><path fill="#00c2ff" d="M1206 400h6v6h-6z"/><path fill="#05c1ff" d="M1212 400h6v6h-6z"/><path fill="#0fc0ff" d="M1218 400h6v6h-6z"/><path fill="#1cbfff" d="M1224 400h6v6h-6z"/><path fill="#2abeff" d="M1230 400h6v6h-6z"/><path fill="#3abdff" d="M1236 400h6v6h-6z"/><path fill="#4cbcff" d="M1242 400h6v6h-6z"/><path fill="#5fbaff" d="M1248 400h6v6h-6z"/><path fill="#74b9ff" d="M1254 400h6v6h-6z"/><path fill="#8bb8ff" d="M1260 400h6v6h-6z"/><path fill="#a3b6ff" d="M1266 400h6v6h-6z"/><path fill="#bdb5ff" d="M1272 400h6v6h-6z"/><path fill="#d8b3ff" d="M1278 400h6v6h-6z"/><path fill="#f6b2ff" d="M1284 400h6v6h-6z"/><path fill="#ffa2ea" d="M1290 400h6v6h-6z"/><path fill="#ff8fd1" d="M1296 400h6v6h-6z"/><path fill="#ff7fbb" d="M1302 400h6v6h-6z"/><path fill="#ff71a8" d="M1308 400h6v6h-6z"/><path fill="#ff6598" d="M1314 400h6v6h-6z"/><path fill="#ff5a8a" d="M1320 400h6v6h-6z"/><path fill="#fe517d" d="M1326 400h6v6h-6z"/><path fill="#fe4972" d="M1332 400h6v6h-6z"/><path fill="#fd4168" d="M1338 400h6v6h-6z"/><path fill="#fc3b5f" d="M1344 400h6v6h-6z"/><path fill="#fb3556" d="M1350 400h6v6h-6z"/><path fill="#fa2f4f" d="M1356 400h6v6h-6z"/><path fill="#f82a48" d="M1362 400h6v6h-6z"/><path fill="#f72642" d="M1368 400h6v6h-6z"/><path fill="#f5223c" d="M1374 400h6v6h-6z"/><path fill="#f31e37" d="M1380 400h6v6h-6z"/><path fill="#f11b32" d="M1386 400h6v6h-6z"/><path fill="#ef182e" d="M1392 400h6v6h-6z"/><path fill="#ed152a" d="M1398 400h6v6h-6z"/><path fill="#eb1326" d="M1404 400h6v6h-6z"/><path fill="#e91123" d="M1410 400h6v6h-6z"/><path fill="#e70f20" d="M1416 400h6v6h-6z"/><path fill="#e50d1d" d="M1422 400h6v6h-6z"/><path fill="#e30b1b" d="M1428 400h6v6h-6z"/><path fill="#e10a18" d="M1434 400h6v6h-6z"/><path fill="#df0816" d="M1440 400h6v6h-6z"/><path fill="#dd0714" d="M1446 400h6v6h-6z"/><path fill="#db0612" d="M1452 400h6v6h-6z"/><path fill="#d90510" d="M1458 400h6v6h-6z"/><path fill="#d8040f" d="M1464 400h6v6h-6z"/><path fill="#d6030d" d="M1470 400h6v6h-6z"/><path fill="#d4020c" d="M1476 400h6v6h-6z"/><path fill="#d3010b" d="M1482 400h6v6h-6z"/><path fill="#d10109" d="M1488 400h6v6h-6z"/><path fill="#d00008" d="M1494 400h6v6h-6z"/><path fill="#ce0007" d="M1500 400h6v6h-6zM1512 406h6v6h-6z"/><path fill="#ce0006" d="M1506 400h6v6h-6z"/><path fill="#cd0006" d="M1512 400h6v6h-6z"/><path fill="#00b4ff" d="M1194 406h6v6h-6z"/><path fill="#00b3ff" d="M1200 406h6v6h-6z"/><path fill="#00b2ff" d="M1206 406h6v6h-6z"/><path fill="#07b1ff" d="M1212 406h6v6h-6z"/><path fill="#12afff" d="M1218 406h6v6h-6z"/><path fill="#1faeff" d="M1224 406h6v6h-6z"/><path fill="#2eadff" d="M1230 406h6v6h-6z"/><path fill="#3dabff" d="M1236 406h6v6h-6z"/><path fill="#4faaff" d="M1242 406h6v6h-6z"/><path fill="#62a8ff" d="M1248 406h6v6h-6z"/><path fill="#76a7ff" d="M1254 406h6v6h-6z"/><path fill="#8ca5ff" d="M1260 406h6v6h-6z"/><path fill="#a4a3ff" d="M1266 406h6v6h-6z"/><path fill="#bda2ff" d="M1272 406h6v6h-6z"/><path fill="#d8a0ff" d="M1278 406h6v6h-6z"/><path fill="#f59eff" d="M1284 406h6v6h-6z"/><path fill="#ff91ec" d="M1290 406h6v6h-6z"/><path fill="#ff80d3" d="M1296 406h6v6h-6z"/><path fill="#ff71be" d="M1302 406h6v6h-6z"/><path fill="#ff65ab" d="M1308 406h6v6h-6z"/><path fill="#ff5a9b" d="M1314 406h6v6h-6z"/><path fill="#ff508d" d="M1320 406h6v6h-6z"/><path fill="#fe4880" d="M1326 406h6v6h-6z"/><path fill="#fe4075" d="M1332 406h6v6h-6z"/><path fill="#fd396b" d="M1338 406h6v6h-6z"/><path fill="#fc3361" d="M1344 406h6v6h-6z"/><path fill="#fb2e59" d="M1350 406h6v6h-6z"/><path fill="#f92951" d="M1356 406h6v6h-6z"/><path fill="#f8254b" d="M1362 406h6v6h-6z"/><path fill="#f62144" d="M1368 406h6v6h-6z"/><path fill="#f51d3f" d="M1374 406h6v6h-6z"/><path fill="#f31a39" d="M1380 406h6v6h-6z"/><path fill="#f11735" d="M1386 406h6v6h-6z"/><path fill="#ef1430" d="M1392 406h6v6h-6z"/><path fill="#ed122c" d="M1398 406h6v6h-6z"/><path fill="#eb1028" d="M1404 406h6v6h-6z"/><path fill="#e90d25" d="M1410 406h6v6h-6z"/><path fill="#e70c22" d="M1416 406h6v6h-6z"/><path fill="#e50a1f" d="M1422 406h6v6h-6z"/><path fill="#e3081c" d="M1428 406h6v6h-6z"/><path fill="#e1071a" d="M1434 406h6v6h-6z"/><path fill="#df0618" d="M1440 406h6v6h-6z"/><path fill="#dd0515" d="M1446 406h6v6h-6z"/><path fill="#db0414" d="M1452 406h6v6h-6z"/><path fill="#d90312" d="M1458 406h6v6h-6z"/><path fill="#d70210" d="M1464 406h6v6h-6z"/><path fill="#d6010f" d="M1470 406h6v6h-6z"/><path fill="#d4010d" d="M1476 406h6v6h-6z"/><path fill="#d3000c" d="M1482 406h6v6h-6z"/><path fill="#d1000b" d="M1488 406h6v6h-6zM1494 412h6v6h-6z"/><path fill="#d00009" d="M1494 406h6v6h-6z"/><path fill="#cf0008" d="M1500 406h6v6h-6z"/><path fill="#cf0007" d="M1506 406h6v6h-6z"/><path fill="#00a5ff" d="M1194 412h6v6h-6z"/><path fill="#00a4ff" d="M1200 412h6v6h-6z"/><path fill="#02a2ff" d="M1206 412h6v6h-6z"/><path fill="#0aa1ff" d="M1212 412h6v6h-6z"/><path fill="#16a0ff" d="M1218 412h6v6h-6z"/><path fill="#229eff" d="M1224 412h6v6h-6z"/><path fill="#319dff" d="M1230 412h6v6h-6z"/><path fill="#419bff" d="M1236 412h6v6h-6z"/><path fill="#5299ff" d="M1242 412h6v6h-6z"/><path fill="#6498ff" d="M1248 412h6v6h-6z"/><path fill="#7896ff" d="M1254 412h6v6h-6z"/><path fill="#8e94ff" d="M1260 412h6v6h-6z"/><path fill="#a592ff" d="M1266 412h6v6h-6z"/><path fill="#bd90ff" d="M1272 412h6v6h-6z"/><path fill="#d88eff" d="M1278 412h6v6h-6z"/><path fill="#f38cff" d="M1284 412h6v6h-6z"/><path fill="#ff81ee" d="M1290 412h6v6h-6z"/><path fill="#ff71d6" d="M1296 412h6v6h-6z"/><path fill="#ff64c0" d="M1302 412h6v6h-6z"/><path fill="#ff59ae" d="M1308 412h6v6h-6z"/><path fill="#ff4f9e" d="M1314 412h6v6h-6z"/><path fill="#fe4790" d="M1320 412h6v6h-6z"/><path fill="#fe3f83" d="M1326 412h6v6h-6z"/><path fill="#fd3878" d="M1332 412h6v6h-6z"/><path fill="#fd326d" d="M1338 412h6v6h-6z"/><path fill="#fc2d64" d="M1344 412h6v6h-6z"/><path fill="#fa285c" d="M1350 412h6v6h-6z"/><path fill="#f92354" d="M1356 412h6v6h-6z"/><path fill="#f81f4d" d="M1362 412h6v6h-6z"/><path fill="#f61c47" d="M1368 412h6v6h-6z"/><path fill="#f41941" d="M1374 412h6v6h-6z"/><path fill="#f3163c" d="M1380 412h6v6h-6z"/><path fill="#f11337" d="M1386 412h6v6h-6z"/><path fill="#ef1132" d="M1392 412h6v6h-6z"/><path fill="#ed0e2e" d="M1398 412h6v6h-6z"/><path fill="#eb0c2a" d="M1404 412h6v6h-6z"/><path fill="#e90b27" d="M1410 412h6v6h-6z"/><path fill="#e70924" d="M1416 412h6v6h-6z"/><path fill="#e50721" d="M1422 412h6v6h-6z"/><path fill="#e3061e" d="M1428 412h6v6h-6z"/><path fill="#e1051b" d="M1434 412h6v6h-6z"/><path fill="#df0419" d="M1440 412h6v6h-6z"/><path fill="#dd0317" d="M1446 412h6v6h-6z"/><path fill="#db0215" d="M1452 412h6v6h-6z"/><path fill="#d90113" d="M1458 412h6v6h-6z"/><path fill="#d80111" d="M1464 412h6v6h-6z"/><path fill="#d60010" d="M1470 412h6v6h-6zM1476 418h6v6h-6z"/><path fill="#d5000e" d="M1476 412h6v6h-6zM1482 418h6v6h-6z"/><path fill="#d4000d" d="M1482 412h6v6h-6zM1488 418h6v6h-6z"/><path fill="#d2000c" d="M1488 412h6v6h-6z"/><path fill="#d1000a" d="M1500 412h6v6h-6z"/><path fill="#0097ff" d="M1194 418h6v6h-6z"/><path fill="#0096ff" d="M1200 418h6v6h-6z"/><path fill="#0494ff" d="M1206 418h6v6h-6z"/><path fill="#0e93ff" d="M1212 418h6v6h-6z"/><path fill="#1991ff" d="M1218 418h6v6h-6z"/><path fill="#268fff" d="M1224 418h6v6h-6z"/><path fill="#348eff" d="M1230 418h6v6h-6z"/><path fill="#448cff" d="M1236 418h6v6h-6z"/><path fill="#558aff" d="M1242 418h6v6h-6z"/><path fill="#6788ff" d="M1248 418h6v6h-6z"/><path fill="#7a86ff" d="M1254 418h6v6h-6z"/><path fill="#8f84ff" d="M1260 418h6v6h-6z"/><path fill="#a682ff" d="M1266 418h6v6h-6z"/><path fill="#be80ff" d="M1272 418h6v6h-6z"/><path fill="#d77eff" d="M1278 418h6v6h-6z"/><path fill="#f27bff" d="M1284 418h6v6h-6z"/><path fill="#ff72f0" d="M1290 418h6v6h-6z"/><path fill="#ff64d8" d="M1296 418h6v6h-6z"/><path fill="#ff59c3" d="M1302 418h6v6h-6z"/><path fill="#ff4eb1" d="M1308 418h6v6h-6z"/><path fill="#ff46a1" d="M1314 418h6v6h-6z"/><path fill="#fe3e92" d="M1320 418h6v6h-6z"/><path fill="#fe3786" d="M1326 418h6v6h-6z"/><path fill="#fd317a" d="M1332 418h6v6h-6z"/><path fill="#fc2b70" d="M1338 418h6v6h-6z"/><path fill="#fb2667" d="M1344 418h6v6h-6z"/><path fill="#fa225e" d="M1350 418h6v6h-6z"/><path fill="#f91e57" d="M1356 418h6v6h-6z"/><path fill="#f71a50" d="M1362 418h6v6h-6z"/><path fill="#f61749" d="M1368 418h6v6h-6z"/><path fill="#f41443" d="M1374 418h6v6h-6z"/><path fill="#f2123e" d="M1380 418h6v6h-6z"/><path fill="#f00f39" d="M1386 418h6v6h-6z"/><path fill="#ee0d34" d="M1392 418h6v6h-6z"/><path fill="#ec0b30" d="M1398 418h6v6h-6z"/><path fill="#ea092c" d="M1404 418h6v6h-6z"/><path fill="#e80829" d="M1410 418h6v6h-6z"/><path fill="#e60626" d="M1416 418h6v6h-6z"/><path fill="#e40523" d="M1422 418h6v6h-6z"/><path fill="#e20420" d="M1428 418h6v6h-6z"/><path fill="#e0031d" d="M1434 418h6v6h-6z"/><path fill="#df021b" d="M1440 418h6v6h-6z"/><path fill="#dd0119" d="M1446 418h6v6h-6z"/><path fill="#db0116" d="M1452 418h6v6h-6z"/><path fill="#d90015" d="M1458 418h6v6h-6z"/><path fill="#d80013" d="M1464 418h6v6h-6zM1470 424h6v6h-6z"/><path fill="#d70011" d="M1470 418h6v6h-6zM1476 424h6v6h-6z"/><path fill="#008cff" d="M1188 424h6v6h-6z"/><path fill="#008aff" d="M1194 424h6v6h-6z"/><path fill="#0088ff" d="M1200 424h6v6h-6z"/><path fill="#0787ff" d="M1206 424h6v6h-6z"/><path fill="#1185ff" d="M1212 424h6v6h-6z"/><path fill="#1c83ff" d="M1218 424h6v6h-6z"/><path fill="#2981ff" d="M1224 424h6v6h-6z"/><path fill="#3780ff" d="M1230 424h6v6h-6z"/><path fill="#467eff" d="M1236 424h6v6h-6z"/><path fill="#577cff" d="M1242 424h6v6h-6z"/><path fill="#697aff" d="M1248 424h6v6h-6z"/><path fill="#7c78ff" d="M1254 424h6v6h-6z"/><path fill="#9175ff" d="M1260 424h6v6h-6z"/><path fill="#a773ff" d="M1266 424h6v6h-6z"/><path fill="#be71ff" d="M1272 424h6v6h-6z"/><path fill="#d76eff" d="M1278 424h6v6h-6z"/><path fill="#f16cff" d="M1284 424h6v6h-6z"/><path fill="#ff64f2" d="M1290 424h6v6h-6z"/><path fill="#ff58da" d="M1296 424h6v6h-6z"/><path fill="#ff4ec5" d="M1302 424h6v6h-6z"/><path fill="#ff44b3" d="M1308 424h6v6h-6z"/><path fill="#ff3da3" d="M1314 424h6v6h-6z"/><path fill="#fe3695" d="M1320 424h6v6h-6z"/><path fill="#fe2f88" d="M1326 424h6v6h-6z"/><path fill="#fd2a7d" d="M1332 424h6v6h-6z"/><path fill="#fc2573" d="M1338 424h6v6h-6z"/><path fill="#fb2069" d="M1344 424h6v6h-6z"/><path fill="#fa1c61" d="M1350 424h6v6h-6z"/><path fill="#f91959" d="M1356 424h6v6h-6z"/><path fill="#f71652" d="M1362 424h6v6h-6z"/><path fill="#f6134c" d="M1368 424h6v6h-6z"/><path fill="#f41046" d="M1374 424h6v6h-6z"/><path fill="#f20e40" d="M1380 424h6v6h-6z"/><path fill="#f00c3b" d="M1386 424h6v6h-6z"/><path fill="#ee0a37" d="M1392 424h6v6h-6z"/><path fill="#ec0832" d="M1398 424h6v6h-6z"/><path fill="#ea072e" d="M1404 424h6v6h-6z"/><path fill="#e8052b" d="M1410 424h6v6h-6z"/><path fill="#e60427" d="M1416 424h6v6h-6z"/><path fill="#e40324" d="M1422 424h6v6h-6z"/><path fill="#e20221" d="M1428 424h6v6h-6z"/><path fill="#e1011f" d="M1434 424h6v6h-6z"/><path fill="#df011c" d="M1440 424h6v6h-6z"/><path fill="#dd001a" d="M1446 424h6v6h-6zM1452 430h6v6h-6z"/><path fill="#dc0018" d="M1452 424h6v6h-6z"/><path fill="#da0016" d="M1458 424h6v6h-6z"/><path fill="#d90014" d="M1464 424h6v6h-6z"/><path fill="#007fff" d="M1188 430h6v6h-6z"/><path fill="#007eff" d="M1194 430h6v6h-6z"/><path fill="#027cff" d="M1200 430h6v6h-6z"/><path fill="#0a7aff" d="M1206 430h6v6h-6z"/><path fill="#1478ff" d="M1212 430h6v6h-6z"/><path fill="#1f76ff" d="M1218 430h6v6h-6z"/><path fill="#2c74ff" d="M1224 430h6v6h-6z"/><path fill="#3a72ff" d="M1230 430h6v6h-6z"/><path fill="#4970ff" d="M1236 430h6v6h-6z"/><path fill="#5a6eff" d="M1242 430h6v6h-6z"/><path fill="#6b6cff" d="M1248 430h6v6h-6z"/><path fill="#7e6aff" d="M1254 430h6v6h-6z"/><path fill="#9268ff" d="M1260 430h6v6h-6z"/><path fill="#a865ff" d="M1266 430h6v6h-6z"/><path fill="#be63ff" d="M1272 430h6v6h-6z"/><path fill="#d660ff" d="M1278 430h6v6h-6z"/><path fill="#f05eff" d="M1284 430h6v6h-6z"/><path fill="#ff57f4" d="M1290 430h6v6h-6z"/><path fill="#ff4cdc" d="M1296 430h6v6h-6z"/><path fill="#ff43c8" d="M1302 430h6v6h-6z"/><path fill="#ff3bb6" d="M1308 430h6v6h-6z"/><path fill="#ff34a6" d="M1314 430h6v6h-6z"/><path fill="#fe2e98" d="M1320 430h6v6h-6z"/><path fill="#fe288b" d="M1326 430h6v6h-6z"/><path fill="#fd2380" d="M1332 430h6v6h-6z"/><path fill="#fc1f75" d="M1338 430h6v6h-6z"/><path fill="#fb1b6c" d="M1344 430h6v6h-6z"/><path fill="#fa1763" d="M1350 430h6v6h-6z"/><path fill="#f9145c" d="M1356 430h6v6h-6z"/><path fill="#f71154" d="M1362 430h6v6h-6z"/><path fill="#f50f4e" d="M1368 430h6v6h-6z"/><path fill="#f40c48" d="M1374 430h6v6h-6z"/><path fill="#f20a42" d="M1380 430h6v6h-6z"/><path fill="#f0093d" d="M1386 430h6v6h-6z"/><path fill="#ee0739" d="M1392 430h6v6h-6z"/><path fill="#ec0534" d="M1398 430h6v6h-6z"/><path fill="#ea0430" d="M1404 430h6v6h-6z"/><path fill="#e8032d" d="M1410 430h6v6h-6z"/><path fill="#e60229" d="M1416 430h6v6h-6z"/><path fill="#e50126" d="M1422 430h6v6h-6z"/><path fill="#e30123" d="M1428 430h6v6h-6z"/><path fill="#e10020" d="M1434 430h6v6h-6zM1440 436h6v6h-6z"/><path fill="#e0001e" d="M1440 430h6v6h-6z"/><path fill="#de001c" d="M1446 430h6v6h-6z"/><path fill="#db0018" d="M1458 430h6v6h-6z"/><path fill="#0074ff" d="M1188 436h6v6h-6z"/><path fill="#0072ff" d="M1194 436h6v6h-6z"/><path fill="#0470ff" d="M1200 436h6v6h-6z"/><path fill="#0c6eff" d="M1206 436h6v6h-6z"/><path fill="#166cff" d="M1212 436h6v6h-6z"/><path fill="#226aff" d="M1218 436h6v6h-6z"/><path fill="#2f68ff" d="M1224 436h6v6h-6z"/><path fill="#3d66ff" d="M1230 436h6v6h-6z"/><path fill="#4c64ff" d="M1236 436h6v6h-6z"/><path fill="#5c62ff" d="M1242 436h6v6h-6z"/><path fill="#6d60ff" d="M1248 436h6v6h-6z"/><path fill="#805dff" d="M1254 436h6v6h-6z"/><path fill="#935bff" d="M1260 436h6v6h-6z"/><path fill="#a859ff" d="M1266 436h6v6h-6z"/><path fill="#be56ff" d="M1272 436h6v6h-6z"/><path fill="#d654ff" d="M1278 436h6v6h-6z"/><path fill="#ef51ff" d="M1284 436h6v6h-6z"/><path fill="#ff4bf5" d="M1290 436h6v6h-6z"/><path fill="#ff42de" d="M1296 436h6v6h-6z"/><path fill="#ff39ca" d="M1302 436h6v6h-6z"/><path fill="#ff32b8" d="M1308 436h6v6h-6z"/><path fill="#ff2ca8" d="M1314 436h6v6h-6z"/><path fill="#fe269a" d="M1320 436h6v6h-6z"/><path fill="#fe218e" d="M1326 436h6v6h-6z"/><path fill="#fd1d82" d="M1332 436h6v6h-6z"/><path fill="#fc1978" d="M1338 436h6v6h-6z"/><path fill="#fb166f" d="M1344 436h6v6h-6z"/><path fill="#fa1366" d="M1350 436h6v6h-6z"/><path fill="#f9105e" d="M1356 436h6v6h-6z"/><path fill="#f70d57" d="M1362 436h6v6h-6z"/><path fill="#f50b50" d="M1368 436h6v6h-6z"/><path fill="#f4094a" d="M1374 436h6v6h-6z"/><path fill="#f20745" d="M1380 436h6v6h-6z"/><path fill="#f0063f" d="M1386 436h6v6h-6z"/><path fill="#ee043b" d="M1392 436h6v6h-6z"/><path fill="#ec0336" d="M1398 436h6v6h-6z"/><path fill="#ea0232" d="M1404 436h6v6h-6z"/><path fill="#e8012f" d="M1410 436h6v6h-6z"/><path fill="#e7002b" d="M1416 436h6v6h-6z"/><path fill="#e50028" d="M1422 436h6v6h-6z"/><path fill="#e30025" d="M1428 436h6v6h-6z"/><path fill="#e20022" d="M1434 436h6v6h-6z"/><path fill="#df001d" d="M1446 436h6v6h-6z"/><path fill="#006bff" d="M1182 442h6v6h-6z"/><path fill="#0069ff" d="M1188 442h6v6h-6z"/><path fill="#0067ff" d="M1194 442h6v6h-6z"/><path fill="#0665ff" d="M1200 442h6v6h-6z"/><path fill="#0f63ff" d="M1206 442h6v6h-6z"/><path fill="#1961ff" d="M1212 442h6v6h-6z"/><path fill="#255fff" d="M1218 442h6v6h-6z"/><path fill="#325dff" d="M1224 442h6v6h-6z"/><path fill="#3f5bff" d="M1230 442h6v6h-6z"/><path fill="#4e59ff" d="M1236 442h6v6h-6z"/><path fill="#5e56ff" d="M1242 442h6v6h-6z"/><path fill="#6f54ff" d="M1248 442h6v6h-6z"/><path fill="#8152ff" d="M1254 442h6v6h-6z"/><path fill="#954fff" d="M1260 442h6v6h-6z"/><path fill="#a94dff" d="M1266 442h6v6h-6z"/><path fill="#bf4aff" d="M1272 442h6v6h-6z"/><path fill="#d648ff" d="M1278 442h6v6h-6z"/><path fill="#ee45ff" d="M1284 442h6v6h-6z"/><path fill="#ff40f7" d="M1290 442h6v6h-6z"/><path fill="#ff38e0" d="M1296 442h6v6h-6z"/><path fill="#ff30cc" d="M1302 442h6v6h-6z"/><path fill="#ff2abb" d="M1308 442h6v6h-6z"/><path fill="#ff25ab" d="M1314 442h6v6h-6z"/><path fill="#fe209d" d="M1320 442h6v6h-6z"/><path fill="#fe1b90" d="M1326 442h6v6h-6z"/><path fill="#fd1785" d="M1332 442h6v6h-6z"/><path fill="#fc147a" d="M1338 442h6v6h-6z"/><path fill="#fb1171" d="M1344 442h6v6h-6z"/><path fill="#fa0e68" d="M1350 442h6v6h-6z"/><path fill="#f90c60" d="M1356 442h6v6h-6z"/><path fill="#f70a59" d="M1362 442h6v6h-6z"/><path fill="#f50853" d="M1368 442h6v6h-6z"/><path fill="#f4064c" d="M1374 442h6v6h-6z"/><path fill="#f20447" d="M1380 442h6v6h-6z"/><path fill="#f00342" d="M1386 442h6v6h-6z"/><path fill="#ee023d" d="M1392 442h6v6h-6z"/><path fill="#ec0138" d="M1398 442h6v6h-6z"/><path fill="#eb0034" d="M1404 442h6v6h-6z"/><path fill="#e90030" d="M1410 442h6v6h-6z"/><path fill="#e7002d" d="M1416 442h6v6h-6z"/><path fill="#e6002a" d="M1422 442h6v6h-6z"/><path fill="#e40027" d="M1428 442h6v6h-6z"/><path fill="#e30024" d="M1434 442h6v6h-6z"/><path fill="#0061ff" d="M1182 448h6v6h-6z"/><path fill="#005fff" d="M1188 448h6v6h-6z"/><path fill="#025dff" d="M1194 448h6v6h-6z"/><path fill="#095bff" d="M1200 448h6v6h-6z"/><path fill="#1259ff" d="M1206 448h6v6h-6z"/><path fill="#1c57ff" d="M1212 448h6v6h-6z"/><path fill="#2855ff" d="M1218 448h6v6h-6z"/><path fill="#3453ff" d="M1224 448h6v6h-6z"/><path fill="#4250ff" d="M1230 448h6v6h-6z"/><path fill="#514eff" d="M1236 448h6v6h-6z"/><path fill="#614cff" d="M1242 448h6v6h-6z"/><path fill="#7149ff" d="M1248 448h6v6h-6z"/><path fill="#8347ff" d="M1254 448h6v6h-6z"/><path fill="#9645ff" d="M1260 448h6v6h-6z"/><path fill="#aa42ff" d="M1266 448h6v6h-6z"/><path fill="#bf3fff" d="M1272 448h6v6h-6z"/><path fill="#d53dff" d="M1278 448h6v6h-6z"/><path fill="#ed3aff" d="M1284 448h6v6h-6z"/><path fill="#ff36f9" d="M1290 448h6v6h-6z"/><path fill="#ff2fe2" d="M1296 448h6v6h-6z"/><path fill="#ff28ce" d="M1302 448h6v6h-6z"/><path fill="#ff23bd" d="M1308 448h6v6h-6z"/><path fill="#ff1ead" d="M1314 448h6v6h-6z"/><path fill="#fe199f" d="M1320 448h6v6h-6z"/><path fill="#fe1593" d="M1326 448h6v6h-6z"/><path fill="#fd1287" d="M1332 448h6v6h-6z"/><path fill="#fc0f7d" d="M1338 448h6v6h-6z"/><path fill="#fb0c73" d="M1344 448h6v6h-6z"/><path fill="#fa0a6b" d="M1350 448h6v6h-6z"/><path fill="#f90863" d="M1356 448h6v6h-6z"/><path fill="#f7065c" d="M1362 448h6v6h-6z"/><path fill="#f50555" d="M1368 448h6v6h-6z"/><path fill="#f4034f" d="M1374 448h6v6h-6z"/><path fill="#f20249" d="M1380 448h6v6h-6z"/><path fill="#f00144" d="M1386 448h6v6h-6z"/><path fill="#ef003f" d="M1392 448h6v6h-6z"/><path fill="#ed003a" d="M1398 448h6v6h-6z"/><path fill="#eb0036" d="M1404 448h6v6h-6z"/><path fill="#ea0032" d="M1410 448h6v6h-6z"/><path fill="#e8002f" d="M1416 448h6v6h-6z"/><path fill="#e7002c" d="M1422 448h6v6h-6z"/><path fill="#0057ff" d="M1182 454h6v6h-6z"/><path fill="#0055ff" d="M1188 454h6v6h-6z"/><path fill="#0453ff" d="M1194 454h6v6h-6z"/><path fill="#0b51ff" d="M1200 454h6v6h-6z"/><path fill="#154fff" d="M1206 454h6v6h-6z"/><path fill="#1f4dff" d="M1212 454h6v6h-6z"/><path fill="#2b4bff" d="M1218 454h6v6h-6z"/><path fill="#3749ff" d="M1224 454h6v6h-6z"/><path fill="#4546ff" d="M1230 454h6v6h-6z"/><path fill="#5344ff" d="M1236 454h6v6h-6z"/><path fill="#6342ff" d="M1242 454h6v6h-6z"/><path fill="#733fff" d="M1248 454h6v6h-6z"/><path fill="#853dff" d="M1254 454h6v6h-6z"/><path fill="#973bff" d="M1260 454h6v6h-6z"/><path fill="#ab38ff" d="M1266 454h6v6h-6z"/><path fill="#bf35ff" d="M1272 454h6v6h-6z"/><path fill="#d533ff" d="M1278 454h6v6h-6z"/><path fill="#ec30ff" d="M1284 454h6v6h-6z"/><path fill="#ff2cfa" d="M1290 454h6v6h-6z"/><path fill="#ff26e4" d="M1296 454h6v6h-6z"/><path fill="#ff20d0" d="M1302 454h6v6h-6z"/><path fill="#ff1bbf" d="M1308 454h6v6h-6z"/><path fill="#ff17b0" d="M1314 454h6v6h-6z"/><path fill="#fe13a2" d="M1320 454h6v6h-6z"/><path fill="#fe1095" d="M1326 454h6v6h-6z"/><path fill="#fd0d8a" d="M1332 454h6v6h-6z"/><path fill="#fc0b7f" d="M1338 454h6v6h-6z"/><path fill="#fb0876" d="M1344 454h6v6h-6z"/><path fill="#fa066d" d="M1350 454h6v6h-6z"/><path fill="#f90565" d="M1356 454h6v6h-6z"/><path fill="#f7035e" d="M1362 454h6v6h-6z"/><path fill="#f60257" d="M1368 454h6v6h-6z"/><path fill="#f40151" d="M1374 454h6v6h-6z"/><path fill="#f2004b" d="M1380 454h6v6h-6z"/><path fill="#f10046" d="M1386 454h6v6h-6z"/><path fill="#ef0041" d="M1392 454h6v6h-6z"/><path fill="#ee003d" d="M1398 454h6v6h-6z"/><path fill="#ec0038" d="M1404 454h6v6h-6z"/><path fill="#eb0035" d="M1410 454h6v6h-6z"/><path fill="#0050ff" d="M1176 460h6v6h-6z"/><path fill="#004eff" d="M1182 460h6v6h-6z"/><path fill="#004cff" d="M1188 460h6v6h-6z"/><path fill="#064aff" d="M1194 460h6v6h-6z"/><path fill="#0e48ff" d="M1200 460h6v6h-6z"/><path fill="#1746ff" d="M1206 460h6v6h-6z"/><path fill="#2244ff" d="M1212 460h6v6h-6z"/><path fill="#2d42ff" d="M1218 460h6v6h-6z"/><path fill="#3a3fff" d="M1224 460h6v6h-6z"/><path fill="#473dff" d="M1230 460h6v6h-6z"/><path fill="#553bff" d="M1236 460h6v6h-6z"/><path fill="#6539ff" d="M1242 460h6v6h-6z"/><path fill="#7536ff" d="M1248 460h6v6h-6z"/><path fill="#8634ff" d="M1254 460h6v6h-6z"/><path fill="#9831ff" d="M1260 460h6v6h-6z"/><path fill="#ab2fff" d="M1266 460h6v6h-6z"/><path fill="#bf2cff" d="M1272 460h6v6h-6z"/><path fill="#d52aff" d="M1278 460h6v6h-6z"/><path fill="#eb27ff" d="M1284 460h6v6h-6z"/><path fill="#ff24fc" d="M1290 460h6v6h-6z"/><path fill="#ff1ee6" d="M1296 460h6v6h-6z"/><path fill="#ff19d2" d="M1302 460h6v6h-6z"/><path fill="#ff15c1" d="M1308 460h6v6h-6z"/><path fill="#ff11b2" d="M1314 460h6v6h-6z"/><path fill="#fe0ea4" d="M1320 460h6v6h-6z"/><path fill="#fe0b97" d="M1326 460h6v6h-6z"/><path fill="#fd098c" d="M1332 460h6v6h-6z"/><path fill="#fc0782" d="M1338 460h6v6h-6z"/><path fill="#fb0578" d="M1344 460h6v6h-6z"/><path fill="#fa036f" d="M1350 460h6v6h-6z"/><path fill="#f90267" d="M1356 460h6v6h-6z"/><path fill="#f70160" d="M1362 460h6v6h-6z"/><path fill="#f60059" d="M1368 460h6v6h-6z"/><path fill="#f40053" d="M1374 460h6v6h-6z"/><path fill="#f3004d" d="M1380 460h6v6h-6z"/><path fill="#f10048" d="M1386 460h6v6h-6z"/><path fill="#f00043" d="M1392 460h6v6h-6z"/><path fill="#0047ff" d="M1176 466h6v6h-6z"/><path fill="#0045ff" d="M1182 466h6v6h-6z"/><path fill="#0243ff" d="M1188 466h6v6h-6z"/><path fill="#0841ff" d="M1194 466h6v6h-6z"/><path fill="#103fff" d="M1200 466h6v6h-6z"/><path fill="#1a3dff" d="M1206 466h6v6h-6z"/><path fill="#243bff" d="M1212 466h6v6h-6z"/><path fill="#3039ff" d="M1218 466h6v6h-6z"/><path fill="#3c37ff" d="M1224 466h6v6h-6z"/><path fill="#4935ff" d="M1230 466h6v6h-6z"/><path fill="#5832ff" d="M1236 466h6v6h-6z"/><path fill="#6730ff" d="M1242 466h6v6h-6z"/><path fill="#772eff" d="M1248 466h6v6h-6z"/><path fill="#872bff" d="M1254 466h6v6h-6z"/><path fill="#9929ff" d="M1260 466h6v6h-6z"/><path fill="#ac26ff" d="M1266 466h6v6h-6z"/><path fill="#c024ff" d="M1272 466h6v6h-6z"/><path fill="#d421ff" d="M1278 466h6v6h-6z"/><path fill="#ea1eff" d="M1284 466h6v6h-6z"/><path fill="#ff1cfd" d="M1290 466h6v6h-6z"/><path fill="#ff17e7" d="M1296 466h6v6h-6z"/><path fill="#ff13d4" d="M1302 466h6v6h-6z"/><path fill="#ff0fc3" d="M1308 466h6v6h-6z"/><path fill="#ff0cb4" d="M1314 466h6v6h-6z"/><path fill="#fe09a6" d="M1320 466h6v6h-6z"/><path fill="#fe079a" d="M1326 466h6v6h-6z"/><path fill="#fd058e" d="M1332 466h6v6h-6z"/><path fill="#fc0384" d="M1338 466h6v6h-6z"/><path fill="#fb027b" d="M1344 466h6v6h-6z"/><path fill="#fa0172" d="M1350 466h6v6h-6z"/><path fill="#f9006a" d="M1356 466h6v6h-6z"/><path fill="#f80062" d="M1362 466h6v6h-6z"/><path fill="#f6005c" d="M1368 466h6v6h-6z"/><path fill="#f50055" d="M1374 466h6v6h-6z"/><path fill="#f30050" d="M1380 466h6v6h-6z"/><path fill="#003fff" d="M1176 472h6v6h-6z"/><path fill="#003dff" d="M1182 472h6v6h-6z"/><path fill="#033bff" d="M1188 472h6v6h-6z"/><path fill="#0a39ff" d="M1194 472h6v6h-6z"/><path fill="#1337ff" d="M1200 472h6v6h-6z"/><path fill="#1c35ff" d="M1206 472h6v6h-6z"/><path fill="#2733ff" d="M1212 472h6v6h-6z"/><path fill="#3231ff" d="M1218 472h6v6h-6z"/><path fill="#3f2fff" d="M1224 472h6v6h-6z"/><path fill="#4c2dff" d="M1230 472h6v6h-6z"/><path fill="#5a2aff" d="M1236 472h6v6h-6z"/><path fill="#6828ff" d="M1242 472h6v6h-6z"/><path fill="#7826ff" d="M1248 472h6v6h-6z"/><path fill="#8923ff" d="M1254 472h6v6h-6z"/><path fill="#9a21ff" d="M1260 472h6v6h-6z"/><path fill="#ac1eff" d="M1266 472h6v6h-6z"/><path fill="#c01cff" d="M1272 472h6v6h-6z"/><path fill="#d419ff" d="M1278 472h6v6h-6z"/><path fill="#e917ff" d="M1284 472h6v6h-6z"/><path fill="#ff14fe" d="M1290 472h6v6h-6z"/><path fill="#ff10e9" d="M1296 472h6v6h-6z"/><path fill="#ff0dd6" d="M1302 472h6v6h-6z"/><path fill="#ff0ac5" d="M1308 472h6v6h-6z"/><path fill="#ff07b6" d="M1314 472h6v6h-6z"/><path fill="#fe05a8" d="M1320 472h6v6h-6z"/><path fill="#fe039c" d="M1326 472h6v6h-6z"/><path fill="#fd0291" d="M1332 472h6v6h-6z"/><path fill="#fc0086" d="M1338 472h6v6h-6z"/><path fill="#fb007d" d="M1344 472h6v6h-6z"/><path fill="#fa0074" d="M1350 472h6v6h-6z"/><path fill="#f9006c" d="M1356 472h6v6h-6z"/><path fill="#f80065" d="M1362 472h6v6h-6z"/><path fill="#f7005e" d="M1368 472h6v6h-6z"/><path fill="#003aff" d="M1170 478h6v6h-6z"/><path fill="#0038ff" d="M1176 478h6v6h-6z"/><path fill="#0036ff" d="M1182 478h6v6h-6z"/><path fill="#0534ff" d="M1188 478h6v6h-6z"/><path fill="#0d32ff" d="M1194 478h6v6h-6z"/><path fill="#1530ff" d="M1200 478h6v6h-6z"/><path fill="#1f2eff" d="M1206 478h6v6h-6z"/><path fill="#292cff" d="M1212 478h6v6h-6z"/><path fill="#352aff" d="M1218 478h6v6h-6z"/><path fill="#4127ff" d="M1224 478h6v6h-6z"/><path fill="#4e25ff" d="M1230 478h6v6h-6z"/><path fill="#5c23ff" d="M1236 478h6v6h-6z"/><path fill="#6a21ff" d="M1242 478h6v6h-6z"/><path fill="#7a1eff" d="M1248 478h6v6h-6z"/><path fill="#8a1cff" d="M1254 478h6v6h-6z"/><path fill="#9b1aff" d="M1260 478h6v6h-6z"/><path fill="#ad17ff" d="M1266 478h6v6h-6z"/><path fill="#c015ff" d="M1272 478h6v6h-6z"/><path fill="#d413ff" d="M1278 478h6v6h-6z"/><path fill="#e910ff" d="M1284 478h6v6h-6z"/><path fill="#fe0eff" d="M1290 478h6v6h-6z"/><path fill="#ff0aeb" d="M1296 478h6v6h-6z"/><path fill="#ff08d8" d="M1302 478h6v6h-6z"/><path fill="#ff05c7" d="M1308 478h6v6h-6z"/><path fill="#ff03b8" d="M1314 478h6v6h-6z"/><path fill="#fe02ab" d="M1320 478h6v6h-6z"/><path fill="#fe009e" d="M1326 478h6v6h-6z"/><path fill="#fd0093" d="M1332 478h6v6h-6z"/><path fill="#fd0089" d="M1338 478h6v6h-6z"/><path fill="#fc007f" d="M1344 478h6v6h-6z"/><path fill="#fb0076" d="M1350 478h6v6h-6z"/><path fill="#fa006e" d="M1356 478h6v6h-6z"/><path fill="#0033ff" d="M1170 484h6v6h-6z"/><path fill="#0031ff" d="M1176 484h6v6h-6z"/><path fill="#012fff" d="M1182 484h6v6h-6z"/><path fill="#082dff" d="M1188 484h6v6h-6z"/><path fill="#0f2bff" d="M1194 484h6v6h-6z"/><path fill="#1829ff" d="M1200 484h6v6h-6z"/><path fill="#2127ff" d="M1206 484h6v6h-6z"/><path fill="#2c25ff" d="M1212 484h6v6h-6z"/><path fill="#3723ff" d="M1218 484h6v6h-6z"/><path fill="#4320ff" d="M1224 484h6v6h-6z"/><path fill="#501eff" d="M1230 484h6v6h-6z"/><path fill="#5e1cff" d="M1236 484h6v6h-6z"/><path fill="#6c1aff" d="M1242 484h6v6h-6z"/><path fill="#7b18ff" d="M1248 484h6v6h-6z"/><path fill="#8b15ff" d="M1254 484h6v6h-6z"/><path fill="#9c13ff" d="M1260 484h6v6h-6z"/><path fill="#ae11ff" d="M1266 484h6v6h-6z"/><path fill="#c00fff" d="M1272 484h6v6h-6z"/><path fill="#d40cff" d="M1278 484h6v6h-6z"/><path fill="#e80aff" d="M1284 484h6v6h-6z"/><path fill="#fd08ff" d="M1290 484h6v6h-6z"/><path fill="#ff05ec" d="M1296 484h6v6h-6z"/><path fill="#ff03da" d="M1302 484h6v6h-6z"/><path fill="#ff01c9" d="M1308 484h6v6h-6z"/><path fill="#ff00ba" d="M1314 484h6v6h-6z"/><path fill="#fe00ad" d="M1320 484h6v6h-6z"/><path fill="#fe00a0" d="M1326 484h6v6h-6z"/><path fill="#fd0095" d="M1332 484h6v6h-6z"/><path fill="#fd008b" d="M1338 484h6v6h-6z"/><path fill="#fc0081" d="M1344 484h6v6h-6z"/><path fill="#002cff" d="M1170 490h6v6h-6z"/><path fill="#002aff" d="M1176 490h6v6h-6z"/><path fill="#0328ff" d="M1182 490h6v6h-6z"/><path fill="#0a26ff" d="M1188 490h6v6h-6z"/><path fill="#1124ff" d="M1194 490h6v6h-6z"/><path fill="#1a22ff" d="M1200 490h6v6h-6z"/><path fill="#2420ff" d="M1206 490h6v6h-6z"/><path fill="#2e1eff" d="M1212 490h6v6h-6z"/><path fill="#391cff" d="M1218 490h6v6h-6z"/><path fill="#451aff" d="M1224 490h6v6h-6z"/><path fill="#5218ff" d="M1230 490h6v6h-6z"/><path fill="#6016ff" d="M1236 490h6v6h-6z"/><path fill="#6e14ff" d="M1242 490h6v6h-6z"/><path fill="#7d12ff" d="M1248 490h6v6h-6z"/><path fill="#8c0fff" d="M1254 490h6v6h-6z"/><path fill="#9d0dff" d="M1260 490h6v6h-6z"/><path fill="#ae0bff" d="M1266 490h6v6h-6z"/><path fill="#c009ff" d="M1272 490h6v6h-6z"/><path fill="#d307ff" d="M1278 490h6v6h-6z"/><path fill="#e705ff" d="M1284 490h6v6h-6z"/><path fill="#fc03ff" d="M1290 490h6v6h-6z"/><path fill="#ff01ee" d="M1296 490h6v6h-6z"/><path fill="#ff00db" d="M1302 490h6v6h-6z"/><path fill="#ff00cb" d="M1308 490h6v6h-6z"/><path fill="#ff00bc" d="M1314 490h6v6h-6z"/><path fill="#fe00af" d="M1320 490h6v6h-6z"/><path fill="#fe00a2" d="M1326 490h6v6h-6z"/><path fill="#0028ff" d="M1164 496h6v6h-6z"/><path fill="#0026ff" d="M1170 496h6v6h-6z"/><path fill="#0024ff" d="M1176 496h6v6h-6z"/><path fill="#0522ff" d="M1182 496h6v6h-6z"/><path fill="#0c20ff" d="M1188 496h6v6h-6z"/><path fill="#141eff" d="M1194 496h6v6h-6z"/><path fill="#1d1cff" d="M1200 496h6v6h-6z"/><path fill="#261aff" d="M1206 496h6v6h-6z"/><path fill="#3118ff" d="M1212 496h6v6h-6z"/><path fill="#3c16ff" d="M1218 496h6v6h-6z"/><path fill="#4814ff" d="M1224 496h6v6h-6z"/><path fill="#5412ff" d="M1230 496h6v6h-6z"/><path fill="#6110ff" d="M1236 496h6v6h-6z"/><path fill="#6f0eff" d="M1242 496h6v6h-6z"/><path fill="#7e0cff" d="M1248 496h6v6h-6z"/><path fill="#8d0aff" d="M1254 496h6v6h-6z"/><path fill="#9e08ff" d="M1260 496h6v6h-6z"/><path fill="#af06ff" d="M1266 496h6v6h-6z"/><path fill="#c004ff" d="M1272 496h6v6h-6z"/><path fill="#d303ff" d="M1278 496h6v6h-6z"/><path fill="#e701ff" d="M1284 496h6v6h-6z"/><path fill="#fb00ff" d="M1290 496h6v6h-6z"/><path fill="#ff00ef" d="M1296 496h6v6h-6z"/><path fill="#ff00dd" d="M1302 496h6v6h-6z"/><path fill="#ff00cd" d="M1308 496h6v6h-6z"/><path fill="#ff00be" d="M1314 496h6v6h-6z"/><path fill="#0022ff" d="M1164 502h6v6h-6z"/><path fill="#0020ff" d="M1170 502h6v6h-6z"/><path fill="#011eff" d="M1176 502h6v6h-6z"/><path fill="#071cff" d="M1182 502h6v6h-6z"/><path fill="#0e1aff" d="M1188 502h6v6h-6z"/><path fill="#1619ff" d="M1194 502h6v6h-6z"/><path fill="#1f17ff" d="M1200 502h6v6h-6z"/><path fill="#2915ff" d="M1206 502h6v6h-6z"/><path fill="#3313ff" d="M1212 502h6v6h-6z"/><path fill="#3e11ff" d="M1218 502h6v6h-6z"/><path fill="#4a0fff" d="M1224 502h6v6h-6z"/><path fill="#560dff" d="M1230 502h6v6h-6z"/><path fill="#630bff" d="M1236 502h6v6h-6z"/><path fill="#7109ff" d="M1242 502h6v6h-6z"/><path fill="#7f07ff" d="M1248 502h6v6h-6z"/><path fill="#8f05ff" d="M1254 502h6v6h-6z"/><path fill="#9e04ff" d="M1260 502h6v6h-6z"/><path fill="#af02ff" d="M1266 502h6v6h-6z"/><path fill="#c101ff" d="M1272 502h6v6h-6z"/><path fill="#d300ff" d="M1278 502h6v6h-6zM1278 508h6v6h-6z"/><path fill="#e600ff" d="M1284 502h6v6h-6z"/><path fill="#fa00ff" d="M1290 502h6v6h-6z"/><path fill="#ff00f0" d="M1296 502h6v6h-6z"/><path fill="#ff00de" d="M1302 502h6v6h-6z"/><path fill="#001cff" d="M1164 508h6v6h-6z"/><path fill="#001bff" d="M1170 508h6v6h-6z"/><path fill="#0319ff" d="M1176 508h6v6h-6z"/><path fill="#0917ff" d="M1182 508h6v6h-6z"/><path fill="#1015ff" d="M1188 508h6v6h-6z"/><path fill="#1813ff" d="M1194 508h6v6h-6z"/><path fill="#2111ff" d="M1200 508h6v6h-6z"/><path fill="#2b10ff" d="M1206 508h6v6h-6z"/><path fill="#350eff" d="M1212 508h6v6h-6z"/><path fill="#400cff" d="M1218 508h6v6h-6z"/><path fill="#4c0aff" d="M1224 508h6v6h-6z"/><path fill="#5808ff" d="M1230 508h6v6h-6z"/><path fill="#6506ff" d="M1236 508h6v6h-6z"/><path fill="#7205ff" d="M1242 508h6v6h-6z"/><path fill="#8103ff" d="M1248 508h6v6h-6z"/><path fill="#9002ff" d="M1254 508h6v6h-6z"/><path fill="#9f00ff" d="M1260 508h6v6h-6z"/><path fill="#b000ff" d="M1266 508h6v6h-6zM1266 514h6v6h-6z"/><path fill="#c100ff" d="M1272 508h6v6h-6zM1272 514h6v6h-6z"/><path fill="#e500ff" d="M1284 508h6v6h-6z"/><path fill="#f900ff" d="M1290 508h6v6h-6z"/><path fill="#0019ff" d="M1158 514h6v6h-6z"/><path fill="#0017ff" d="M1164 514h6v6h-6z"/><path fill="#0015ff" d="M1170 514h6v6h-6z"/><path fill="#0514ff" d="M1176 514h6v6h-6z"/><path fill="#0b12ff" d="M1182 514h6v6h-6z"/><path fill="#1210ff" d="M1188 514h6v6h-6z"/><path fill="#1b0eff" d="M1194 514h6v6h-6z"/><path fill="#230dff" d="M1200 514h6v6h-6z"/><path fill="#2d0bff" d="M1206 514h6v6h-6z"/><path fill="#3709ff" d="M1212 514h6v6h-6z"/><path fill="#4207ff" d="M1218 514h6v6h-6z"/><path fill="#4e06ff" d="M1224 514h6v6h-6z"/><path fill="#5a04ff" d="M1230 514h6v6h-6z"/><path fill="#6603ff" d="M1236 514h6v6h-6z"/><path fill="#7401ff" d="M1242 514h6v6h-6z"/><path fill="#8200ff" d="M1248 514h6v6h-6z"/><path fill="#9100ff" d="M1254 514h6v6h-6z"/><path fill="#a000ff" d="M1260 514h6v6h-6z"/><path fill="#d200ff" d="M1278 514h6v6h-6z"/><path fill="#0014ff" d="M1158 520h6v6h-6z"/><path fill="#0012ff" d="M1164 520h6v6h-6z"/><path fill="#0111ff" d="M1170 520h6v6h-6z"/><path fill="#070fff" d="M1176 520h6v6h-6z"/><path fill="#0d0dff" d="M1182 520h6v6h-6z"/><path fill="#150cff" d="M1188 520h6v6h-6z"/><path fill="#1d0aff" d="M1194 520h6v6h-6z"/><path fill="#2608ff" d="M1200 520h6v6h-6z"/><path fill="#2f07ff" d="M1206 520h6v6h-6z"/><path fill="#3905ff" d="M1212 520h6v6h-6z"/><path fill="#4404ff" d="M1218 520h6v6h-6z"/><path fill="#4f02ff" d="M1224 520h6v6h-6z"/><path fill="#5b01ff" d="M1230 520h6v6h-6z"/><path fill="#6800ff" d="M1236 520h6v6h-6z"/><path fill="#7500ff" d="M1242 520h6v6h-6z"/><path fill="#8300ff" d="M1248 520h6v6h-6z"/><path fill="#9200ff" d="M1254 520h6v6h-6z"/><path fill="#a100ff" d="M1260 520h6v6h-6z"/><path fill="#0010ff" d="M1158 526h6v6h-6z"/><path fill="#000eff" d="M1164 526h6v6h-6z"/><path fill="#030cff" d="M1170 526h6v6h-6z"/><path fill="#080bff" d="M1176 526h6v6h-6z"/><path fill="#0f09ff" d="M1182 526h6v6h-6z"/><path fill="#1708ff" d="M1188 526h6v6h-6z"/><path fill="#1f06ff" d="M1194 526h6v6h-6z"/><path fill="#2805ff" d="M1200 526h6v6h-6z"/><path fill="#3103ff" d="M1206 526h6v6h-6z"/><path fill="#3b02ff" d="M1212 526h6v6h-6z"/><path fill="#4601ff" d="M1218 526h6v6h-6z"/><path fill="#5100ff" d="M1224 526h6v6h-6z"/><path fill="#5d00ff" d="M1230 526h6v6h-6z"/><path fill="#6a00ff" d="M1236 526h6v6h-6z"/><path fill="#7700ff" d="M1242 526h6v6h-6z"/><path fill="#8400ff" d="M1248 526h6v6h-6z"/><path fill="#000dff" d="M1152 532h6v6h-6z"/><path fill="#000cff" d="M1158 532h6v6h-6z"/><path fill="#000aff" d="M1164 532h6v6h-6z"/><path fill="#0409ff" d="M1170 532h6v6h-6z"/><path fill="#0a07ff" d="M1176 532h6v6h-6z"/><path fill="#1106ff" d="M1182 532h6v6h-6z"/><path fill="#1904ff" d="M1188 532h6v6h-6z"/><path fill="#2103ff" d="M1194 532h6v6h-6z"/><path fill="#2a02ff" d="M1200 532h6v6h-6z"/><path fill="#3300ff" d="M1206 532h6v6h-6z"/><path fill="#3d00ff" d="M1212 532h6v6h-6z"/><path fill="#4800ff" d="M1218 532h6v6h-6z"/><path fill="#5300ff" d="M1224 532h6v6h-6z"/><path fill="#5f00ff" d="M1230 532h6v6h-6z"/><path fill="#6b00ff" d="M1236 532h6v6h-6z"/><path fill="#0009ff" d="M1152 538h6v6h-6z"/><path fill="#0008ff" d="M1158 538h6v6h-6z"/><path fill="#0106ff" d="M1164 538h6v6h-6z"/><path fill="#0605ff" d="M1170 538h6v6h-6z"/><path fill="#0c04ff" d="M1176 538h6v6h-6z"/><path fill="#1302ff" d="M1182 538h6v6h-6z"/><path fill="#1b01ff" d="M1188 538h6v6h-6z"/><path fill="#2300ff" d="M1194 538h6v6h-6z"/><path fill="#2c00ff" d="M1200 538h6v6h-6z"/><path fill="#3500ff" d="M1206 538h6v6h-6z"/><path fill="#3f00ff" d="M1212 538h6v6h-6z"/><path fill="#4a00ff" d="M1218 538h6v6h-6z"/><path fill="#5500ff" d="M1224 538h6v6h-6z"/><path fill="#0006ff" d="M1152 544h6v6h-6z"/><path fill="#0005ff" d="M1158 544h6v6h-6z"/><path fill="#0303ff" d="M1164 544h6v6h-6z"/><path fill="#0802ff" d="M1170 544h6v6h-6z"/><path fill="#0e01ff" d="M1176 544h6v6h-6z"/><path fill="#1500ff" d="M1182 544h6v6h-6z"/><path fill="#1d00ff" d="M1188 544h6v6h-6z"/><path fill="#2500ff" d="M1194 544h6v6h-6z"/><path fill="#2e00ff" d="M1200 544h6v6h-6z"/><path fill="#3700ff" d="M1206 544h6v6h-6z"/><path fill="#4100ff" d="M1212 544h6v6h-6z"/><path fill="#0004ff" d="M1146 550h6v6h-6z"/><path fill="#0003ff" d="M1152 550h6v6h-6z"/><path fill="#0002ff" d="M1158 550h6v6h-6z"/><path fill="#0401ff" d="M1164 550h6v6h-6z"/><path fill="#0a00ff" d="M1170 550h6v6h-6z"/><path fill="#1000ff" d="M1176 550h6v6h-6z"/><path fill="#1700ff" d="M1182 550h6v6h-6z"/><path fill="#1f00ff" d="M1188 550h6v6h-6z"/><path fill="#2700ff" d="M1194 550h6v6h-6z"/><path fill="#0001ff" d="M1146 556h6v6h-6zM1152 556h6v6h-6z"/><path fill="#0100ff" d="M1158 556h6v6h-6z"/><path fill="#0600ff" d="M1164 556h6v6h-6z"/><path fill="#0c00ff" d="M1170 556h6v6h-6z"/><path fill="#1200ff" d="M1176 556h6v6h-6z"/><path fill="#1900ff" d="M1182 556h6v6h-6z"/><path fill="#0000ff" d="M1146 562h6v6h-6zM1152 562h6v6h-6zM1152 568h6v6h-6z"/><path fill="#0300ff" d="M1158 562h6v6h-6z"/><path fill="#0800ff" d="M1164 562h6v6h-6z"/><path fill="#0d00ff" d="M1170 562h6v6h-6z"/><path fill="#0400ff" d="M1158 568h6v6h-6z"/></g></g>
<rect x="1269.9" y="196.4" width="15" height="15" fill="none" stroke="#ffffff" stroke-opacity="0.85" stroke-width="2"/>
<rect x="1271.8" y="234.6" width="15" height="15" fill="none" stroke="#ffffff" stroke-opacity="0.85" stroke-width="2"/>
<rect x="1274.7" y="269.0" width="15" height="15" fill="none" stroke="#ffffff" stroke-opacity="0.85" stroke-width="2"/>
<rect x="1275.9" y="304.1" width="15" height="15" fill="none" stroke="#ffffff" stroke-opacity="0.85" stroke-width="2"/>
<rect x="1278.8" y="338.0" width="15" height="15" fill="none" stroke="#ffffff" stroke-opacity="0.85" stroke-width="2"/>
<rect x="1365.9" y="258.3" width="15" height="15" fill="none" stroke="#ffffff" stroke-opacity="0.85" stroke-width="2"/>
<rect x="1346.1" y="283.0" width="15" height="15" fill="none" stroke="#ffffff" stroke-opacity="0.85" stroke-width="2"/>
<rect x="1331.8" y="304.3" width="15" height="15" fill="none" stroke="#ffffff" stroke-opacity="0.85" stroke-width="2"/>
<rect x="1314.9" y="325.9" width="15" height="15" fill="none" stroke="#ffffff" stroke-opacity="0.85" stroke-width="2"/>
<rect x="1296.7" y="350.1" width="15" height="15" fill="none" stroke="#ffffff" stroke-opacity="0.85" stroke-width="2"/>
<rect x="1331.1" y="374.3" width="15" height="15" fill="none" stroke="#ffffff" stroke-opacity="0.85" stroke-width="2"/>
<rect x="1384.9" y="374.3" width="15" height="15" fill="none" stroke="#ffffff" stroke-opacity="0.85" stroke-width="2"/>
<rect x="1431.8" y="374.3" width="15" height="15" fill="none" stroke="#ffffff" stroke-opacity="0.85" stroke-width="2"/>
<rect x="1483.2" y="374.3" width="15" height="15" fill="none" stroke="#ffffff" stroke-opacity="0.85" stroke-width="2"/>
<rect x="1541.0" y="374.3" width="15" height="15" fill="none" stroke="#ffffff" stroke-opacity="0.85" stroke-width="2"/>
<rect x="1209.6" y="374.3" width="15" height="15" fill="none" stroke="#ffffff" stroke-opacity="0.85" stroke-width="2"/>
<rect x="1224.1" y="374.3" width="15" height="15" fill="none" stroke="#ffffff" stroke-opacity="0.85" stroke-width="2"/>
<rect x="1238.6" y="374.3" width="15" height="15" fill="none" stroke="#ffffff" stroke-opacity="0.85" stroke-width="2"/>
<rect x="1252.7" y="374.3" width="15" height="15" fill="none" stroke="#ffffff" stroke-opacity="0.85" stroke-width="2"/>
<rect x="1266.0" y="374.3" width="15" height="15" fill="none" stroke="#ffffff" stroke-opacity="0.85" stroke-width="2"/>
<rect x="1255.0" y="409.2" width="15" height="15" fill="none" stroke="#ffffff" stroke-opacity="0.85" stroke-width="2"/>
<rect x="1227.9" y="445.2" width="15" height="15" fill="none" stroke="#ffffff" stroke-opacity="0.85" stroke-width="2"/>
<rect x="1204.3" y="477.9" width="15" height="15" fill="none" stroke="#ffffff" stroke-opacity="0.85" stroke-width="2"/>
<rect x="1178.8" y="512.0" width="15" height="15" fill="none" stroke="#ffffff" stroke-opacity="0.85" stroke-width="2"/>
<rect x="1151.0" y="550.3" width="15" height="15" fill="none" stroke="#ffffff" stroke-opacity="0.85" stroke-width="2"/>
<rect x="1282.0" y="397.9" width="15" height="15" fill="none" stroke="#ffffff" stroke-opacity="0.85" stroke-width="2"/>
<rect x="1283.0" y="421.5" width="15" height="15" fill="none" stroke="#ffffff" stroke-opacity="0.85" stroke-width="2"/>
<rect x="1284.5" y="442.5" width="15" height="15" fill="none" stroke="#ffffff" stroke-opacity="0.85" stroke-width="2"/>
<rect x="1285.8" y="464.2" width="15" height="15" fill="none" stroke="#ffffff" stroke-opacity="0.85" stroke-width="2"/>
<rect x="1286.8" y="488.4" width="15" height="15" fill="none" stroke="#ffffff" stroke-opacity="0.85" stroke-width="2"/>
<rect x="1280" y="374.3" width="15" height="15" fill="none" stroke="#000" stroke-width="2.2"/>
<circle cx="1303.3" cy="185" r="5.2" fill="#1a9a1a" stroke="#111" stroke-width="1.3"/>
<circle cx="1298.9" cy="228.8" r="5.2" fill="#5aa05a" stroke="#111" stroke-width="1.3"/>
<circle cx="1296.5" cy="271.6" r="5.2" fill="#6a9c6a" stroke="#111" stroke-width="1.3"/>
<circle cx="1293.3" cy="308.7" r="5.2" fill="#7aa27a" stroke="#111" stroke-width="1.3"/>
<circle cx="1289.2" cy="347.9" r="5.2" fill="#92aa92" stroke="#111" stroke-width="1.3"/>
<circle cx="1381.2" cy="243.8" r="5.2" fill="#c8c020" stroke="#111" stroke-width="1.3"/>
<circle cx="1359.4" cy="277.7" r="5.2" fill="#b4b260" stroke="#111" stroke-width="1.3"/>
<circle cx="1340.8" cy="304.8" r="5.2" fill="#b8b47a" stroke="#111" stroke-width="1.3"/>
<circle cx="1322.1" cy="329.7" r="5.2" fill="#b4b08a" stroke="#111" stroke-width="1.3"/>
<circle cx="1303.3" cy="359.3" r="5.2" fill="#b4b49c" stroke="#111" stroke-width="1.3"/>
<circle cx="1544.5" cy="369.6" r="5.2" fill="#e01010" stroke="#111" stroke-width="1.3"/>
<circle cx="1491" cy="372.5" r="5.2" fill="#c05050" stroke="#111" stroke-width="1.3"/>
<circle cx="1423.4" cy="376.6" r="5.2" fill="#b86060" stroke="#111" stroke-width="1.3"/>
<circle cx="1375.9" cy="379.7" r="5.2" fill="#b87878" stroke="#111" stroke-width="1.3"/>
<circle cx="1329.3" cy="382.6" r="5.2" fill="#b09090" stroke="#111" stroke-width="1.3"/>
<circle cx="1228.2" cy="387.8" r="5.2" fill="#30a8b0" stroke="#111" stroke-width="1.3"/>
<circle cx="1241.3" cy="387.8" r="5.2" fill="#68b0b0" stroke="#111" stroke-width="1.3"/>
<circle cx="1252.4" cy="385.4" r="5.2" fill="#88b4b4" stroke="#111" stroke-width="1.3"/>
<circle cx="1263.8" cy="385.4" r="5.2" fill="#98b8b8" stroke="#111" stroke-width="1.3"/>
<circle cx="1274.7" cy="384.7" r="5.2" fill="#a8b8b4" stroke="#111" stroke-width="1.3"/>
<circle cx="1162.7" cy="565.8" r="5.2" fill="#1010c0" stroke="#111" stroke-width="1.3"/>
<circle cx="1186.3" cy="531" r="5.2" fill="#5050b4" stroke="#111" stroke-width="1.3"/>
<circle cx="1212" cy="493.8" r="5.2" fill="#7070c0" stroke="#111" stroke-width="1.3"/>
<circle cx="1235.6" cy="459.9" r="5.2" fill="#8888b8" stroke="#111" stroke-width="1.3"/>
<circle cx="1261.1" cy="422.6" r="5.2" fill="#9a9ab0" stroke="#111" stroke-width="1.3"/>
<circle cx="1274.7" cy="509" r="5.2" fill="#c010a0" stroke="#111" stroke-width="1.3"/>
<circle cx="1277.9" cy="480.5" r="5.2" fill="#c060b0" stroke="#111" stroke-width="1.3"/>
<circle cx="1280.4" cy="455.9" r="5.2" fill="#c080b8" stroke="#111" stroke-width="1.3"/>
<circle cx="1282.5" cy="434.8" r="5.2" fill="#c090b0" stroke="#111" stroke-width="1.3"/>
<circle cx="1284.8" cy="407.9" r="5.2" fill="#b898a8" stroke="#111" stroke-width="1.3"/>
<circle cx="1283.2" cy="387.8" r="5.2" fill="#ffffff" stroke="#111" stroke-width="1.3"/>
<defs><clipPath id="cpI"><rect x="1517" y="47" width="191" height="201"/></clipPath><linearGradient id="inB" gradientUnits="userSpaceOnUse" x1="1517" y1="110" x2="1708" y2="248"><stop offset="0" stop-color="#b8ff00"/><stop offset="0.5" stop-color="#ffff00"/><stop offset="1" stop-color="#ffaa00"/></linearGradient><linearGradient id="inD" gradientUnits="userSpaceOnUse" x1="1517" y1="47" x2="1708" y2="226"><stop offset="0" stop-color="#5a9400"/><stop offset="0.45" stop-color="#949800"/><stop offset="1" stop-color="#8c6800"/></linearGradient></defs>
<g clip-path="url(#cpI)"><rect x="1517" y="47" width="191" height="201" fill="url(#inD)"/><path d="M1517 68.8 L1708 226.2 L1708 248 L1517 248 Z" fill="url(#inB)"/><rect x="1604.5" y="140.5" width="15" height="15" fill="none" stroke="#fff" stroke-opacity="0.9" stroke-width="2"/><circle cx="1545.3" cy="219" r="5.8" fill="#b8b860" stroke="#111" stroke-width="1.3"/></g>
<rect x="1517" y="47" width="191" height="201" fill="none" stroke="#8a8a8a" stroke-width="2"/>
<rect x="1040" y="48" width="667.5" height="550" fill="none" stroke="#a8a8a8" stroke-width="1.5"/>
<line x1="1039.0" x2="1039.0" y1="598" y2="604" stroke="#d0d0d0" stroke-width="1.5"/>
<text x="1039.0" y="621.5" font-size="15" fill="#dcdcdc" text-anchor="middle" font-weight="normal">0</text>
<line x1="1035" x2="1040" y1="599.0" y2="599.0" stroke="#d0d0d0" stroke-width="1.5"/>
<text x="1035" y="604.5" font-size="15" fill="#dcdcdc" text-anchor="end" font-weight="normal">0</text>
<line x1="1118.5" x2="1118.5" y1="598" y2="604" stroke="#d0d0d0" stroke-width="1.5"/>
<text x="1118.5" y="621.5" font-size="15" fill="#dcdcdc" text-anchor="middle" font-weight="normal">0.1</text>
<line x1="1035" x2="1040" y1="533.5" y2="533.5" stroke="#d0d0d0" stroke-width="1.5"/>
<text x="1035" y="539.0" font-size="15" fill="#dcdcdc" text-anchor="end" font-weight="normal">0.1</text>
<line x1="1198.0" x2="1198.0" y1="598" y2="604" stroke="#d0d0d0" stroke-width="1.5"/>
<text x="1198.0" y="621.5" font-size="15" fill="#dcdcdc" text-anchor="middle" font-weight="normal">0.2</text>
<line x1="1035" x2="1040" y1="468.0" y2="468.0" stroke="#d0d0d0" stroke-width="1.5"/>
<text x="1035" y="473.5" font-size="15" fill="#dcdcdc" text-anchor="end" font-weight="normal">0.2</text>
<line x1="1277.5" x2="1277.5" y1="598" y2="604" stroke="#d0d0d0" stroke-width="1.5"/>
<text x="1277.5" y="621.5" font-size="15" fill="#dcdcdc" text-anchor="middle" font-weight="normal">0.3</text>
<line x1="1035" x2="1040" y1="402.5" y2="402.5" stroke="#d0d0d0" stroke-width="1.5"/>
<text x="1035" y="408.0" font-size="15" fill="#dcdcdc" text-anchor="end" font-weight="normal">0.3</text>
<line x1="1357.0" x2="1357.0" y1="598" y2="604" stroke="#d0d0d0" stroke-width="1.5"/>
<text x="1357.0" y="621.5" font-size="15" fill="#dcdcdc" text-anchor="middle" font-weight="normal">0.4</text>
<line x1="1035" x2="1040" y1="337.0" y2="337.0" stroke="#d0d0d0" stroke-width="1.5"/>
<text x="1035" y="342.5" font-size="15" fill="#dcdcdc" text-anchor="end" font-weight="normal">0.4</text>
<line x1="1436.5" x2="1436.5" y1="598" y2="604" stroke="#d0d0d0" stroke-width="1.5"/>
<text x="1436.5" y="621.5" font-size="15" fill="#dcdcdc" text-anchor="middle" font-weight="normal">0.5</text>
<line x1="1035" x2="1040" y1="271.5" y2="271.5" stroke="#d0d0d0" stroke-width="1.5"/>
<text x="1035" y="277.0" font-size="15" fill="#dcdcdc" text-anchor="end" font-weight="normal">0.5</text>
<line x1="1516.0" x2="1516.0" y1="598" y2="604" stroke="#d0d0d0" stroke-width="1.5"/>
<text x="1516.0" y="621.5" font-size="15" fill="#dcdcdc" text-anchor="middle" font-weight="normal">0.6</text>
<line x1="1035" x2="1040" y1="206.0" y2="206.0" stroke="#d0d0d0" stroke-width="1.5"/>
<text x="1035" y="211.5" font-size="15" fill="#dcdcdc" text-anchor="end" font-weight="normal">0.6</text>
<line x1="1595.5" x2="1595.5" y1="598" y2="604" stroke="#d0d0d0" stroke-width="1.5"/>
<text x="1595.5" y="621.5" font-size="15" fill="#dcdcdc" text-anchor="middle" font-weight="normal">0.7</text>
<line x1="1035" x2="1040" y1="140.5" y2="140.5" stroke="#d0d0d0" stroke-width="1.5"/>
<text x="1035" y="146.00000000000006" font-size="15" fill="#dcdcdc" text-anchor="end" font-weight="normal">0.7</text>
<line x1="1675.0" x2="1675.0" y1="598" y2="604" stroke="#d0d0d0" stroke-width="1.5"/>
<text x="1675.0" y="621.5" font-size="15" fill="#dcdcdc" text-anchor="middle" font-weight="normal">0.8</text>
<line x1="1035" x2="1040" y1="75.0" y2="75.0" stroke="#d0d0d0" stroke-width="1.5"/>
<text x="1035" y="80.5" font-size="15" fill="#dcdcdc" text-anchor="end" font-weight="normal">0.8</text>
<text x="1360" y="41.5" font-size="15" fill="#dcdcdc" text-anchor="middle" font-weight="normal" textLength="78" lengthAdjust="spacingAndGlyphs">CIE 1931 xy</text>
<text x="14.6" y="687.1" font-size="31" fill="#f2f0ec" text-anchor="start" font-weight="normal" textLength="224.8" lengthAdjust="spacingAndGlyphs">Current Reading</text>
<text x="14.3" y="732.5" font-size="26" fill="#f2f0ec" text-anchor="start" font-weight="normal" textLength="105.7" lengthAdjust="spacingAndGlyphs">x: 0.4316</text>
<text x="14.5" y="775.8" font-size="26" fill="#f2f0ec" text-anchor="start" font-weight="normal" textLength="76.9" lengthAdjust="spacingAndGlyphs">y: 0.54</text>
<text x="14.5" y="820.4" font-size="26" fill="#f2f0ec" text-anchor="start" font-weight="normal" textLength="113.4" lengthAdjust="spacingAndGlyphs">fL: 49.789</text>
<text x="14.5" y="865.1" font-size="26" fill="#f2f0ec" text-anchor="start" font-weight="normal" textLength="178" lengthAdjust="spacingAndGlyphs">cd/m²: 170.591</text>
<defs><clipPath id="cpTab"><rect x="1005" y="646" width="679" height="214"/></clipPath></defs>
<g clip-path="url(#cpTab)">
<rect x="1005" y="646" width="679" height="17" fill="#303030"/>
<rect x="1005" y="663" width="679" height="17" fill="#141414"/>
<rect x="1005" y="646" width="20" height="34" fill="#000"/>
<rect x="1025" y="680" width="659" height="31" fill="#3b3b3b"/>
<rect x="1005" y="680" width="20" height="31" fill="#262626"/>
<text x="1031.5" y="703" font-size="19" fill="#f4f4f4" text-anchor="start" font-weight="normal" textLength="81.5" lengthAdjust="spacingAndGlyphs">x: CIE31</text>
<text x="1196.5" y="703" font-size="19" fill="#f4f4f4" text-anchor="start" font-weight="normal" textLength="69.4" lengthAdjust="spacingAndGlyphs">0.3325</text>
<text x="1308.2" y="703" font-size="19" fill="#f4f4f4" text-anchor="start" font-weight="normal" textLength="69.4" lengthAdjust="spacingAndGlyphs">0.3569</text>
<text x="1419.9" y="703" font-size="19" fill="#f4f4f4" text-anchor="start" font-weight="normal" textLength="69.4" lengthAdjust="spacingAndGlyphs">0.3788</text>
<text x="1531.6" y="703" font-size="19" fill="#f4f4f4" text-anchor="start" font-weight="normal" textLength="69.4" lengthAdjust="spacingAndGlyphs">0.4019</text>
<text x="1643.3" y="703" font-size="19" fill="#f4f4f4" text-anchor="start" font-weight="normal" textLength="69.4" lengthAdjust="spacingAndGlyphs">0.4316</text>
<rect x="1025" y="711" width="659" height="31" fill="#7f7f7f"/>
<rect x="1005" y="711" width="20" height="31" fill="#2b2b2b"/>
<text x="1031.5" y="734" font-size="19" fill="#f4f4f4" text-anchor="start" font-weight="normal" textLength="81.5" lengthAdjust="spacingAndGlyphs">y: CIE31</text>
<text x="1196.5" y="734" font-size="19" fill="#f4f4f4" text-anchor="start" font-weight="normal" textLength="69.4" lengthAdjust="spacingAndGlyphs">0.3639</text>
<text x="1308.2" y="734" font-size="19" fill="#f4f4f4" text-anchor="start" font-weight="normal" textLength="69.4" lengthAdjust="spacingAndGlyphs">0.4074</text>
<text x="1419.9" y="734" font-size="19" fill="#f4f4f4" text-anchor="start" font-weight="normal" textLength="69.4" lengthAdjust="spacingAndGlyphs">0.4463</text>
<text x="1531.6" y="734" font-size="19" fill="#f4f4f4" text-anchor="start" font-weight="normal" textLength="69.4" lengthAdjust="spacingAndGlyphs">0.4874</text>
<text x="1643.3" y="734" font-size="19" fill="#f4f4f4" text-anchor="start" font-weight="normal" textLength="69.4" lengthAdjust="spacingAndGlyphs">0.5400</text>
<rect x="1025" y="742" width="659" height="31" fill="#3b3b3b"/>
<rect x="1005" y="742" width="20" height="31" fill="#262626"/>
<text x="1031.5" y="765" font-size="19" fill="#f4f4f4" text-anchor="start" font-weight="normal" textLength="12.6" lengthAdjust="spacingAndGlyphs">Y</text>
<text x="1196.5" y="765" font-size="19" fill="#f4f4f4" text-anchor="start" font-weight="normal" textLength="94.7" lengthAdjust="spacingAndGlyphs">182.0645</text>
<text x="1308.2" y="765" font-size="19" fill="#f4f4f4" text-anchor="start" font-weight="normal" textLength="94.7" lengthAdjust="spacingAndGlyphs">178.8322</text>
<text x="1419.9" y="765" font-size="19" fill="#f4f4f4" text-anchor="start" font-weight="normal" textLength="94.7" lengthAdjust="spacingAndGlyphs">176.5610</text>
<text x="1531.6" y="765" font-size="19" fill="#f4f4f4" text-anchor="start" font-weight="normal" textLength="94.7" lengthAdjust="spacingAndGlyphs">174.5088</text>
<text x="1643.3" y="765" font-size="19" fill="#f4f4f4" text-anchor="start" font-weight="normal" textLength="94.7" lengthAdjust="spacingAndGlyphs">170.5910</text>
<rect x="1025" y="773" width="659" height="31" fill="#7f7f7f"/>
<rect x="1005" y="773" width="20" height="31" fill="#2b2b2b"/>
<text x="1031.5" y="796" font-size="19" fill="#f4f4f4" text-anchor="start" font-weight="normal" textLength="147.6" lengthAdjust="spacingAndGlyphs">Target x:CIE31</text>
<text x="1196.5" y="796" font-size="19" fill="#f4f4f4" text-anchor="start" font-weight="normal" textLength="69.4" lengthAdjust="spacingAndGlyphs">0.3344</text>
<text x="1308.2" y="796" font-size="19" fill="#f4f4f4" text-anchor="start" font-weight="normal" textLength="69.4" lengthAdjust="spacingAndGlyphs">0.3564</text>
<text x="1419.9" y="796" font-size="19" fill="#f4f4f4" text-anchor="start" font-weight="normal" textLength="69.4" lengthAdjust="spacingAndGlyphs">0.3773</text>
<text x="1531.6" y="796" font-size="19" fill="#f4f4f4" text-anchor="start" font-weight="normal" textLength="69.4" lengthAdjust="spacingAndGlyphs">0.3963</text>
<text x="1643.3" y="796" font-size="19" fill="#f4f4f4" text-anchor="start" font-weight="normal" textLength="69.4" lengthAdjust="spacingAndGlyphs">0.4156</text>
<rect x="1025" y="804" width="659" height="31" fill="#3b3b3b"/>
<rect x="1005" y="804" width="20" height="31" fill="#262626"/>
<text x="1031.5" y="827" font-size="19" fill="#f4f4f4" text-anchor="start" font-weight="normal" textLength="147.6" lengthAdjust="spacingAndGlyphs">Target y:CIE31</text>
<text x="1196.5" y="827" font-size="19" fill="#f4f4f4" text-anchor="start" font-weight="normal" textLength="69.4" lengthAdjust="spacingAndGlyphs">0.3649</text>
<text x="1308.2" y="827" font-size="19" fill="#f4f4f4" text-anchor="start" font-weight="normal" textLength="69.4" lengthAdjust="spacingAndGlyphs">0.4013</text>
<text x="1419.9" y="827" font-size="19" fill="#f4f4f4" text-anchor="start" font-weight="normal" textLength="69.4" lengthAdjust="spacingAndGlyphs">0.4358</text>
<text x="1531.6" y="827" font-size="19" fill="#f4f4f4" text-anchor="start" font-weight="normal" textLength="69.4" lengthAdjust="spacingAndGlyphs">0.4672</text>
<text x="1643.3" y="827" font-size="19" fill="#f4f4f4" text-anchor="start" font-weight="normal" textLength="69.4" lengthAdjust="spacingAndGlyphs">0.5087</text>
<rect x="1025" y="835" width="659" height="31" fill="#7f7f7f"/>
<rect x="1005" y="835" width="20" height="31" fill="#2b2b2b"/>
<text x="1031.5" y="858" font-size="19" fill="#f4f4f4" text-anchor="start" font-weight="normal" textLength="86.1" lengthAdjust="spacingAndGlyphs">Target Y</text>
<text x="1196.5" y="858" font-size="19" fill="#f4f4f4" text-anchor="start" font-weight="normal" textLength="94.7" lengthAdjust="spacingAndGlyphs">175.8664</text>
<text x="1308.2" y="858" font-size="19" fill="#f4f4f4" text-anchor="start" font-weight="normal" textLength="94.7" lengthAdjust="spacingAndGlyphs">172.7796</text>
<text x="1419.9" y="858" font-size="19" fill="#f4f4f4" text-anchor="start" font-weight="normal" textLength="94.7" lengthAdjust="spacingAndGlyphs">170.4078</text>
<text x="1531.6" y="858" font-size="19" fill="#f4f4f4" text-anchor="start" font-weight="normal" textLength="94.7" lengthAdjust="spacingAndGlyphs">168.5948</text>
<text x="1643.3" y="858" font-size="19" fill="#f4f4f4" text-anchor="start" font-weight="normal" textLength="94.7" lengthAdjust="spacingAndGlyphs">166.5400</text>
<text x="1196.5" y="670.3" font-size="19" fill="#f4f4f4" text-anchor="start" font-weight="normal" textLength="40.8" lengthAdjust="spacingAndGlyphs" stroke="#f4f4f4" stroke-width="0.6">20%</text>
<text x="1308.2" y="670.3" font-size="19" fill="#f4f4f4" text-anchor="start" font-weight="normal" textLength="40.8" lengthAdjust="spacingAndGlyphs" stroke="#f4f4f4" stroke-width="0.6">40%</text>
<text x="1419.9" y="670.3" font-size="19" fill="#f4f4f4" text-anchor="start" font-weight="normal" textLength="40.8" lengthAdjust="spacingAndGlyphs" stroke="#f4f4f4" stroke-width="0.6">60%</text>
<text x="1531.6" y="670.3" font-size="19" fill="#f4f4f4" text-anchor="start" font-weight="normal" textLength="40.8" lengthAdjust="spacingAndGlyphs" stroke="#f4f4f4" stroke-width="0.6">80%</text>
<text x="1643.3" y="670.3" font-size="19" fill="#f4f4f4" text-anchor="start" font-weight="normal" textLength="54" lengthAdjust="spacingAndGlyphs" stroke="#f4f4f4" stroke-width="0.6">100%</text>
</g>
<rect x="1685" y="680" width="24.5" height="179" fill="#5c5c5c"/>
<rect x="1687.5" y="681.5" width="19.5" height="16" rx="3" fill="#7a7a7a"/>
<path d="M1691.5 693.5 L1697.3 686.5 L1703 693.5 Z" fill="#4a4a4a"/>
<rect x="1689" y="700.5" width="17.5" height="114.5" rx="7" fill="#474747"/>
<rect x="1687.5" y="842.5" width="19.5" height="16" rx="3" fill="#7a7a7a"/>
<path d="M1691.5 846.5 L1697.3 853.5 L1703 846.5 Z" fill="#4a4a4a"/>
<rect x="1025" y="860.5" width="660" height="19" rx="3" fill="#5c5c5c"/>
<rect x="1027" y="862" width="20" height="16" rx="3" fill="#7a7a7a"/>
<path d="M1040 864.5 L1033 870 L1040 875.5 Z" fill="#3a3a3a"/>
<rect x="1052" y="862.5" width="554" height="15" rx="7.5" fill="#454545"/>
<rect x="1662.5" y="862" width="20" height="16" rx="3" fill="#7a7a7a"/>
<path d="M1669.5 864.5 L1676.5 870 L1669.5 875.5 Z" fill="#3a3a3a"/>
<defs><linearGradient id="barbg" x1="0" y1="0" x2="0" y2="1"><stop offset="0" stop-color="#474747"/><stop offset="1" stop-color="#1e1e1e"/></linearGradient><linearGradient id="btn" x1="0" y1="0" x2="0" y2="1"><stop offset="0" stop-color="#b4b4b4"/><stop offset="0.5" stop-color="#8a8a8a"/><stop offset="1" stop-color="#505050"/></linearGradient><linearGradient id="btnS" x1="0" y1="0" x2="0" y2="1"><stop offset="0" stop-color="#8c8c8c"/><stop offset="0.5" stop-color="#606060"/><stop offset="1" stop-color="#3a3a3a"/></linearGradient><linearGradient id="btnL" x1="0" y1="0" x2="0" y2="1"><stop offset="0" stop-color="#d4d4d4"/><stop offset="1" stop-color="#8c8c8c"/></linearGradient><linearGradient id="btnD" x1="0" y1="0" x2="0" y2="1"><stop offset="0" stop-color="#3c3c3c"/><stop offset="1" stop-color="#262626"/></linearGradient><linearGradient id="circ" x1="0" y1="0" x2="0" y2="1"><stop offset="0" stop-color="#7c7c7c"/><stop offset="1" stop-color="#c4c4c4"/></linearGradient></defs>
<rect x="0" y="889" width="1718" height="61" fill="#2a2a2a"/>
<rect x="810" y="889" width="908" height="61" fill="url(#barbg)"/>
<path d="M0 889 H39 Q45 889 45 895 V950 H0 Z" fill="url(#btn)"/>
<circle cx="22.4" cy="897.5" r="7" fill="#7a7a7a"/>
<path d="M18.3 900 L22.4 895 L26.5 900 Z" fill="#1a1a1a"/>
<rect x="4.8" y="914.3" width="36" height="31.3" rx="4" fill="#ffff00" stroke="#d8d870" stroke-width="1.5"/>
<path d="M51.0 950 V895 Q51.0 889 57.0 889 H195.0 Q201.0 889 201.0 895 V950 Z" fill="url(#btn)"/>
<rect x="55.8" y="894.3" width="140.5" height="36.5" rx="4" fill="#c3c3a3" stroke="#8e8e7a" stroke-width="1.2"/>
<text x="126.0" y="944.5" font-size="11" fill="#3a3a3a" text-anchor="middle" font-weight="normal">20%</text>
<path d="M203.2 950 V895 Q203.2 889 209.2 889 H347.2 Q353.2 889 353.2 895 V950 Z" fill="url(#btn)"/>
<rect x="208.0" y="894.3" width="140.5" height="36.5" rx="4" fill="#c2c38a" stroke="#8e8e7a" stroke-width="1.2"/>
<text x="278.2" y="944.5" font-size="11" fill="#3a3a3a" text-anchor="middle" font-weight="normal">40%</text>
<path d="M355.4 950 V895 Q355.4 889 361.4 889 H499.4 Q505.4 889 505.4 895 V950 Z" fill="url(#btn)"/>
<rect x="360.2" y="894.3" width="140.5" height="36.5" rx="4" fill="#c3c46e" stroke="#8e8e7a" stroke-width="1.2"/>
<text x="430.4" y="944.5" font-size="11" fill="#3a3a3a" text-anchor="middle" font-weight="normal">60%</text>
<path d="M507.59999999999997 950 V895 Q507.59999999999997 889 513.5999999999999 889 H651.5999999999999 Q657.5999999999999 889 657.5999999999999 895 V950 Z" fill="url(#btn)"/>
<rect x="512.4" y="894.3" width="140.5" height="36.5" rx="4" fill="#c2c34f" stroke="#8e8e7a" stroke-width="1.2"/>
<text x="582.5999999999999" y="944.5" font-size="11" fill="#3a3a3a" text-anchor="middle" font-weight="normal">80%</text>
<path d="M659.8 950 V895 Q659.8 889 665.8 889 H803.8 Q809.8 889 809.8 895 V950 Z" fill="url(#btnS)"/>
<rect x="664.5999999999999" y="894.3" width="140.5" height="36.5" rx="4" fill="#c6c000" stroke="#8e8e7a" stroke-width="1.2"/>
<text x="734.8" y="944.5" font-size="11" fill="#e8e8e8" text-anchor="middle" font-weight="bold">100%</text>
<rect x="1395.8" y="889" width="48.5" height="61" rx="3" fill="url(#btnL)"/>
<line x1="1395.8" x2="1444.3" y1="907.5" y2="907.5" stroke="#333" stroke-width="1.2"/>
<circle cx="1420.4" cy="898" r="7" fill="url(#circ)"/>
<path d="M1416 900.5 L1420.4 895.5 L1424.8 900.5 Z" fill="#2a2a2a"/>
<rect x="1405" y="913.5" width="31" height="32" rx="4" fill="#b8b8b8" stroke="#1e1e1e" stroke-width="3"/>
<rect x="1413" y="922" width="14" height="14" fill="#0a0a0a"/>
<rect x="1444.5" y="889" width="181.5" height="30" fill="url(#btnL)"/>
<line x1="1491" x2="1491" y1="889" y2="919" stroke="#333" stroke-width="1.2"/>
<line x1="1536.2" x2="1536.2" y1="889" y2="919" stroke="#333" stroke-width="1.2"/>
<line x1="1581" x2="1581" y1="889" y2="919" stroke="#333" stroke-width="1.2"/>
<rect x="1626" y="889" width="92" height="30" fill="url(#btnD)"/>
<line x1="1671.2" x2="1671.2" y1="889" y2="919" stroke="#1a1a1a" stroke-width="1.2"/>
<circle cx="1468" cy="904" r="9.5" fill="url(#circ)"/>
<circle cx="1514" cy="904" r="9.5" fill="url(#circ)"/>
<circle cx="1558.6" cy="904" r="9.5" fill="url(#circ)"/>
<circle cx="1603.3" cy="904" r="9.5" fill="url(#circ)"/>
<rect x="1464" y="900" width="8" height="8" fill="#2e2e2e"/>
<path d="M1511 899 L1519 904.2 L1511 909.4 Z" fill="#2a2a2a"/>
<text x="1558.6" y="908.5" font-size="12" fill="#2a2a2a" text-anchor="middle" font-weight="bold">[··]</text>
<text x="1603.3" y="910" font-size="17" fill="#2a2a2a" text-anchor="middle" font-weight="bold">∞</text>
<circle cx="1648.5" cy="903.6" r="10" fill="#2a2a2a"/>
<circle cx="1694.8" cy="903.6" r="10" fill="#2c2c2c"/>
<path d="M1643 902 A5.5 5.5 0 0 1 1653.5 901 M1654 905 A5.5 5.5 0 0 1 1643.5 906" fill="none" stroke="#1a1a1a" stroke-width="2"/>
<path d="M1445 950 V923 Q1445 920.5 1448 920.5 H1581.6 V950 Z" fill="url(#btnL)"/>
<path d="M1581.6 950 V920.5 H1714 Q1718 920.5 1718 924 V950 Z" fill="url(#btnL)"/>
<line x1="1581.6" x2="1581.6" y1="920.5" y2="950" stroke="#333" stroke-width="1.2"/>
<line x1="1444.5" x2="1718" y1="919.8" y2="919.8" stroke="#333" stroke-width="1.2"/>
<circle cx="1475.5" cy="934.8" r="9.7" fill="url(#circ)"/>
<circle cx="1688.9" cy="935" r="9.7" fill="url(#circ)"/>
<text x="1475.5" y="940.5" font-size="17" fill="#2a2a2a" text-anchor="middle" font-weight="bold">«</text>
<text x="1689.5" y="940.5" font-size="17" fill="#2a2a2a" text-anchor="middle" font-weight="bold">»</text>
<text x="1503" y="942.3" font-size="21" fill="#333333" text-anchor="start" font-weight="bold" textLength="50" lengthAdjust="spacingAndGlyphs">Back</text>
<text x="1609.2" y="942.3" font-size="21" fill="#333333" text-anchor="start" font-weight="bold" textLength="51" lengthAdjust="spacingAndGlyphs">Next</text>
</svg></body></html>
